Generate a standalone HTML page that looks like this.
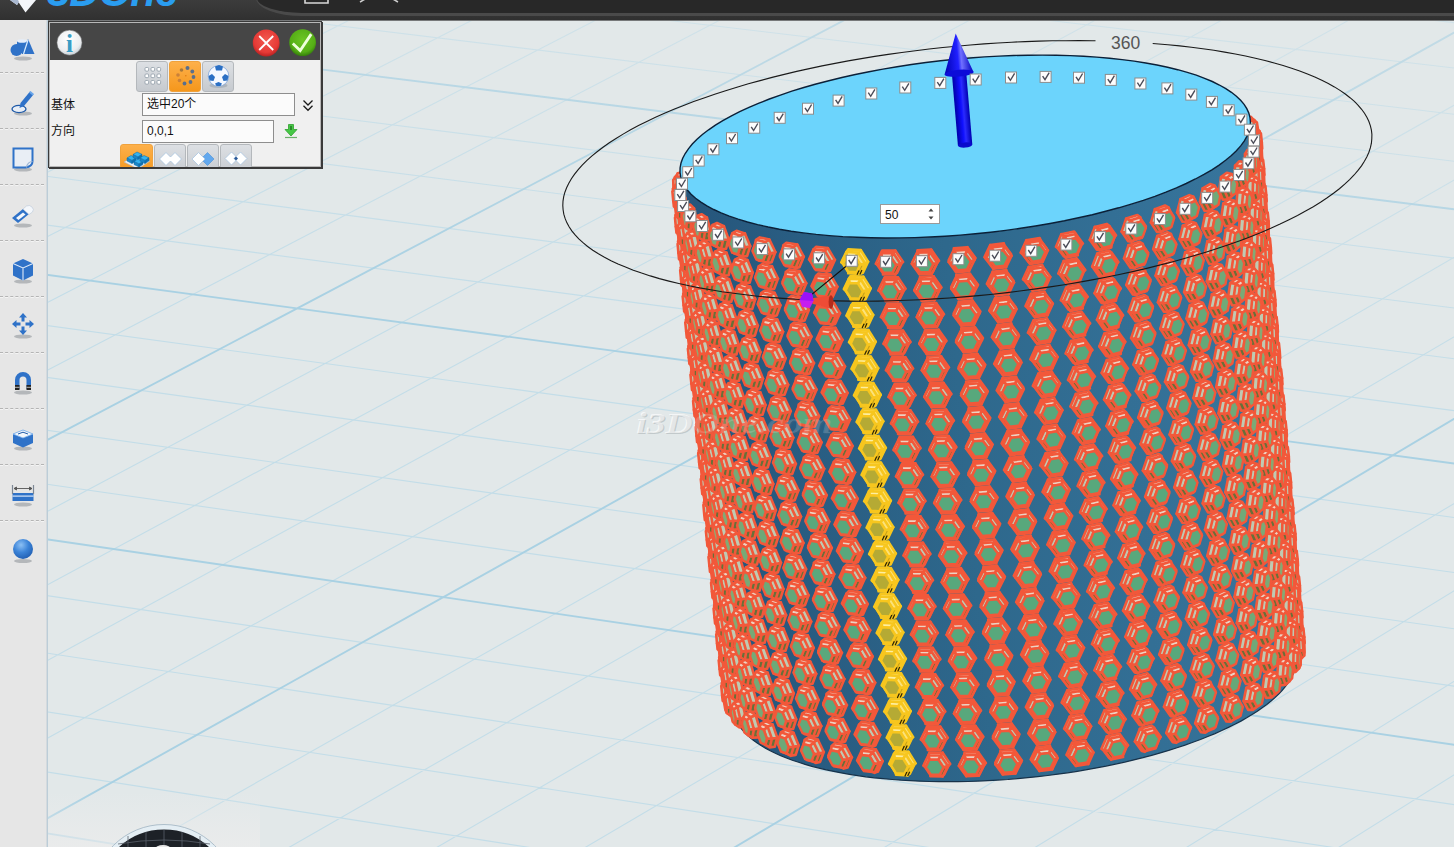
<!DOCTYPE html>
<html><head><meta charset="utf-8"><title>3DOne</title>
<style>
html,body{margin:0;padding:0}
body{width:1454px;height:847px;overflow:hidden;position:relative;background:#e2e8e9;font-family:"Liberation Sans","Noto Sans CJK SC",sans-serif}
#scene{position:absolute;left:0;top:0}
.t .h{fill:#f2583a;stroke:#f2583a;stroke-width:1.2;stroke-linejoin:round}
.t .f{stroke:#f2583a;stroke-width:2.6;stroke-linejoin:round}
.t .g{stroke:#f2583a;stroke-width:2.4;stroke-linejoin:round}
.t .y .h{fill:#f7c61e;stroke:#f7c61e}
.t .y .f{stroke:#f7c61e}
.t .y .g{fill:#b5aa34;stroke:#f7c61e}
#topbar{position:absolute;left:0;top:0;width:1454px;height:20px;background:linear-gradient(#3c3c3c,#343434 70%,#303030);overflow:hidden;border-bottom:1px solid #77797a}
#tab{position:absolute;left:256px;top:-30px;width:1300px;height:42.5px;background:#282828;border:solid #4a4a4a;border-width:0 0 3px 1.5px;border-bottom-left-radius:46px 18px}
#brand{position:absolute;left:47px;top:-29px;font:italic bold 42px/42px "Liberation Sans",sans-serif;color:#2a9df0;letter-spacing:-1px;white-space:nowrap}
#side{position:absolute;left:0;top:20px;width:46px;height:827px;background:#e6e6e6;border-right:1px solid #d4dade;box-shadow:1px 0 0 #bccdd8}
.sep{position:absolute;left:0;width:44px;height:0;border-top:1px dashed #b4b4b4;border-bottom:1px dashed #f4f4f4}
.ic{position:absolute;left:7px;width:32px;height:32px}
#panel{position:absolute;left:48px;top:21px;width:272px;height:145px;border:1px solid #3a3a3a;background:#f0f0f0;box-shadow:1px 1px 0 #3a3a3a,inset 0 0 0 1px #b8b8b8}
#phead{position:absolute;left:1px;top:1px;right:1px;height:37px;background:#464646}
.lbl{position:absolute;left:2px;font-size:12px;line-height:14px;color:#111}
.inp{position:absolute;height:21px;border:1px solid #8e8e8e;background:#fbfbfb;font-size:12px;line-height:21px;color:#111;padding-left:4px;box-sizing:content-box}
.btn{position:absolute;width:30px;height:29px;border:1px solid #b4b8bc;border-radius:3px;background:linear-gradient(#dde0e4,#c6cacf)}
.btn.on{background:linear-gradient(#fdb04a,#f5971c);border-color:#f0a23c}
.btn svg{position:absolute;left:0;top:0}
</style></head><body>
<svg id="scene" width="1454" height="847" viewBox="0 0 1454 847">
<defs>
<linearGradient id="bg" gradientUnits="userSpaceOnUse" x1="690" y1="470" x2="1300" y2="413">
<stop offset="0" stop-color="#25547a"/><stop offset=".45" stop-color="#2e688c"/><stop offset="1" stop-color="#38769e"/></linearGradient>
<linearGradient id="sh" gradientUnits="userSpaceOnUse" x1="957.9" y1="145.6" x2="972.3" y2="144.4">
<stop offset="0" stop-color="#0000a8"/><stop offset=".45" stop-color="#1010ff"/><stop offset=".6" stop-color="#2a2aff"/><stop offset="1" stop-color="#0000b0"/></linearGradient>
<linearGradient id="cn" gradientUnits="userSpaceOnUse" x1="944.6" y1="74.5" x2="973.5" y2="72.0">
<stop offset="0" stop-color="#0000b0"/><stop offset=".5" stop-color="#2020ff"/><stop offset=".62" stop-color="#7070ff"/><stop offset="1" stop-color="#0000c0"/></linearGradient>
<linearGradient id="fd" gradientUnits="userSpaceOnUse" x1="700" y1="330" x2="730" y2="0"><stop offset="0" stop-color="#e2e8e9" stop-opacity="0"/><stop offset="1" stop-color="#e2e8e9" stop-opacity=".42"/></linearGradient>
</defs>
<rect width="1454" height="847" fill="#e2e8e9"/>
<path d="M-162.2 -293.5L-285.9 -237.1M-37.7 -299.7L-285.4 -185.6M69.9 -297.9L-284.8 -132.9M178 -296.1L-284.3 -79M395.9 -292.4L-283.2 32.8M522.5 -298.6L-282.6 90.7M632.8 -296.8L-282 150.1M743.7 -295L-281.4 211M983.4 -299.4L-280.1 337.4M1095.9 -297.6L-299.9 413.5M1209 -295.7L-299.5 481.2M1322.7 -293.8L-299.1 550.7M1567.5 -298.3L-298.2 695.5M1682.9 -296.5L-297.7 770.9M1753.1 -269.6L-297.3 848.4M1746.9 -199.5L-296.8 928.2M1749.9 -62.1L-295.8 1094.9M1743.4 14.4L-225 1141.8M1753.2 83.7L-60.3 1135.8M1746.4 164.9L82.2 1143.1M1749.7 325L392.5 1144.4M1742.6 414.3L559.8 1138.4M1753.2 495.6L705.9 1145.8M1746 590.9L874.5 1139.7M1749.5 779.6L1192.4 1141M1741.8 885.3L1362.8 1134.9M1753.3 981.9L1513.4 1142.4M1745.4 1095.3L1685.3 1136.2M1581.3 -299.2L1732.2 -283.9M1197.7 -299.2L1747 -242.6M447.6 -299.3L1751.5 -160.4M80.9 -299.4L1740.7 -119.6M-280.5 -299.4L1729.7 -78.2M-284.2 -260L1745.1 -33M-291.7 -179.1L1749.8 56.8M-295.6 -137.6L1738.5 101.4M-299.5 -95.2L1726.9 146.8M-280.1 -49.3L1743.1 196.4M-287.9 39.5L1747.9 295M-291.9 85.2L1736 344M-296 131.8L1753 397.6M-275.6 182.5L1740.9 448.5M-283.7 280.4L1745.9 557.3M-287.9 330.9L1733.4 611.3M-292.2 382.4L1751.1 670.7M-296.5 434.9L1738.4 727M-279.1 547.2L1743.7 847.6M-283.4 603.2L1730.4 907.5M-287.9 660.4L1749.1 973.6M-292.4 718.9L1735.7 1036.1M-273.9 844.2L1575.7 1143.8M-278.5 906.8L1168.1 1145.2M-283.1 970.8L765.3 1146.7M-287.9 1036.2L336.6 1142.8" stroke="#c3dde8" stroke-width="1.1" fill="none"/>
<path d="M-268.8 -295.3L-286.4 -287.4M286.7 -294.2L-283.7 -23.8M855.1 -293.1L-280.7 273.4M1437 -292L-298.6 622.1M1740.4 -127.4L-296.3 1010.4M1739.5 248.8L248.2 1137.1M1738.4 689.6L1043.6 1133.6M819.8 -299.3L1736.3 -203.2M-287.9 -219.9L1734 10M-283.9 -5.3L1731.4 243.5M-279.6 231L1728.5 500.4M-274.8 492.3L1725.4 784.4M-297.1 778.6L1721.9 1100M-292.8 1103.2L-56.3 1144.3" stroke="#a9d1e3" stroke-width="1.9" fill="none"/>
<rect width="1454" height="847" fill="url(#fd)"/>
<g font-family="Liberation Serif, serif" font-style="italic" font-weight="bold" font-size="30"><text x="637.200" y="434.200" textLength="196" lengthAdjust="spacingAndGlyphs" fill="#98a2a6" fill-opacity=".35">i3DOne.com</text><text x="636" y="433" textLength="196" lengthAdjust="spacingAndGlyphs" fill="#fff" fill-opacity=".6">i3DOne.com</text></g>
<g class="t">
<path class="h" d="M1244.9 126l0.3-9.2l5.7 0l4.3 3l1.6 2.6l1.6 8.9l-0.2 6.2l-3.1 4l-5.5 1.6l-2.5-3.9zM1247.2 152.2l0.3-9.2l5.7 0.1l4.2 2.9l1.7 2.7l1.5 8.8l-0.2 6.2l-3 4l-5.5 1.6l-2.5-3.9zM1249.5 178.4l0.3-9.2l5.8 0.1l4.2 2.9l1.7 2.7l1.5 8.9l-0.2 6.2l-3.1 3.9l-5.4 1.6l-2.5-3.9zM1251.7 204.6l0.3-9.2l5.7 0.1l4.2 2.9l1.7 2.7l1.5 8.8l-0.2 6.2l-3 4l-5.5 1.6l-2.5-4zM1254 230.7l0.2-9.1l5.8 0l4.2 3l1.7 2.6l1.5 8.9l-0.2 6.2l-3.1 3.9l-5.4 1.6l-2.5-4zM1256.2 256.8l0.3-9.1l5.7 0l4.2 3l1.7 2.7l1.5 8.8l-0.2 6.2l-3 4l-5.5 1.6l-2.5-4zM1258.5 282.9l0.3-9.1l5.7 0l4.2 3l1.7 2.7l1.4 8.8l-0.2 6.2l-3 3.9l-5.4 1.6l-2.5-4zM1260.7 308.9l0.3-9.1l5.7 0.1l4.2 2.9l1.7 2.8l1.5 8.8l-0.2 6.1l-3 4l-5.5 1.6l-2.5-4zM1263 334.9l0.2-9.1l5.8 0l4.2 3l1.6 2.7l1.5 8.9l-0.2 6.1l-3 3.9l-5.4 1.6l-2.5-4zM1265.2 360.9l0.3-9l5.7 0l4.2 3l1.7 2.7l1.5 8.9l-0.2 6.1l-3.1 3.9l-5.4 1.6l-2.5-4.1zM1267.4 386.9l0.3-9l5.7 0l4.2 3l1.7 2.7l1.5 8.9l-0.2 6l-3 4l-5.4 1.6l-2.6-4.1zM1269.7 412.8l0.3-9l5.7 0.1l4.1 2.9l1.8 2.8l1.4 8.8l-0.2 6.1l-3 3.9l-5.4 1.6l-2.5-4.1zM1271.9 438.7l0.3-9l5.7 0.1l4.2 2.9l1.7 2.8l1.5 8.8l-0.2 6.1l-3.1 4l-5.4 1.6l-2.5-4.2zM1274.1 464.6l0.3-9l5.7 0.1l4.2 2.9l1.7 2.8l1.5 8.8l-0.2 6.1l-3 3.9l-5.5 1.6l-2.5-4.1zM1276.4 490.4l0.3-8.9l5.7 0l4.1 3l1.7 2.8l1.5 8.8l-0.2 6l-3 4l-5.4 1.6l-2.5-4.2zM1278.6 516.2l0.3-8.9l5.7 0.1l4.2 2.9l1.6 2.8l1.5 8.8l-0.2 6l-3 4l-5.4 1.6l-2.5-4.2zM1280.8 542l0.3-8.9l5.7 0l4.2 3l1.7 2.8l1.5 8.9l-0.3 5.9l-3 4l-5.4 1.6l-2.5-4.2zM1283 567.7l0.3-8.8l5.7 0l4.2 2.9l1.7 2.9l1.5 8.8l-0.2 6l-3 4l-5.4 1.6l-2.6-4.3zM1285.2 593.5l0.4-8.9l5.6 0l4.2 3l1.7 2.8l1.5 8.9l-0.2 5.9l-3 4l-5.4 1.6l-2.6-4.2zM1287.5 619.1l0.3-8.9l5.6 0.1l4.2 2.9l1.7 2.9l1.5 8.8l-0.2 5.9l-3 4l-5.4 1.6l-2.5-4.3z"/><path class="f" fill="#687038" d="M1249.9 133.8l-0.2 9.3l5.4-1.6l0.3-8.7zM1255.4 132.8l-0.3 8.7l3-4l0.2-6.2zM1252.2 160.1l-0.3 9.2l5.5-1.6l0.2-8.6zM1257.6 159.1l-0.2 8.6l3-4l0.2-6.2zM1254.5 186.3l-0.3 9.2l5.4-1.6l0.3-8.6zM1259.9 185.3l-0.3 8.6l3.1-4l0.2-6.2zM1256.7 212.5l-0.3 9.2l5.5-1.6l0.2-8.6zM1262.1 211.5l-0.2 8.6l3-4l0.2-6.2zM1259 238.7l-0.3 9.1l5.4-1.6l0.3-8.5zM1264.4 237.7l-0.3 8.5l3.1-3.9l0.2-6.2zM1261.2 264.8l-0.3 9.2l5.5-1.6l0.2-8.6zM1266.6 263.8l-0.2 8.6l3-4l0.2-6.2zM1263.5 290.9l-0.3 9.2l5.4-1.7l0.3-8.5zM1268.9 289.9l-0.3 8.5l3-3.9l0.3-6.2zM1265.7 317l-0.3 9.1l5.5-1.6l0.2-8.5zM1271.1 316l-0.2 8.5l3-4l0.2-6.1zM1268 343.1l-0.3 9l5.4-1.6l0.3-8.5zM1273.4 342l-0.3 8.5l3-3.9l0.2-6.1zM1270.2 369.1l-0.3 9l5.4-1.6l0.3-8.4zM1275.6 368.1l-0.3 8.4l3.1-3.9l0.2-6.1zM1272.5 395.1l-0.3 9l5.4-1.6l0.3-8.5zM1277.9 394l-0.3 8.5l3-4l0.2-6zM1274.7 421.1l-0.3 8.9l5.4-1.6l0.3-8.4zM1280.1 420l-0.3 8.4l3-3.9l0.2-6.1zM1276.9 447l-0.3 9l5.4-1.7l0.3-8.4zM1282.3 445.9l-0.3 8.4l3.1-3.9l0.2-6.1zM1279.2 472.9l-0.3 8.9l5.4-1.6l0.3-8.4zM1284.6 471.8l-0.3 8.4l3-3.9l0.2-6.1zM1281.4 498.8l-0.3 8.9l5.4-1.6l0.3-8.4zM1286.8 497.7l-0.3 8.4l3-4l0.2-6zM1283.6 524.6l-0.3 8.9l5.4-1.6l0.3-8.3zM1289 523.6l-0.3 8.3l3-4l0.2-6zM1285.8 550.4l-0.3 8.9l5.4-1.6l0.3-8.3zM1291.2 549.4l-0.3 8.3l3-4l0.3-6zM1288.1 576.2l-0.3 8.9l5.3-1.6l0.3-8.3zM1293.4 575.2l-0.3 8.3l3.1-4l0.2-6zM1290.3 602l-0.3 8.8l5.4-1.6l0.3-8.3zM1295.7 600.9l-0.3 8.3l3-4l0.2-5.9zM1292.5 627.7l-0.3 8.8l5.4-1.6l0.3-8.3zM1297.9 626.6l-0.3 8.3l3-4l0.2-5.9z"/><path class="f" fill="#edd2c2" d="M1245.2 116.8l2.5 3.9l5.6-0.2l-2.4-3.7zM1247.5 143l2.5 3.9l5.6-0.2l-2.4-3.6zM1249.7 169.2l2.5 4l5.6-0.2l-2.3-3.7zM1252 195.4l2.5 4l5.6-0.2l-2.4-3.7zM1254.3 221.6l2.5 3.9l5.5-0.2l-2.3-3.7zM1256.5 247.7l2.5 4l5.6-0.2l-2.4-3.8zM1258.8 273.8l2.5 4l5.5-0.2l-2.3-3.8zM1261 299.8l2.5 4.1l5.6-0.2l-2.4-3.8zM1263.2 325.9l2.6 4l5.5-0.2l-2.4-3.8zM1265.5 351.9l2.5 4.1l5.5-0.2l-2.3-3.9zM1267.7 377.9l2.5 4.1l5.6-0.3l-2.4-3.8zM1270 403.8l2.5 4.1l5.5-0.2l-2.3-3.8zM1272.2 429.7l2.5 4.2l5.6-0.3l-2.4-3.8zM1274.4 455.6l2.6 4.2l5.5-0.3l-2.4-3.8zM1276.7 481.5l2.5 4.1l5.5-0.2l-2.4-3.9zM1278.9 507.3l2.5 4.2l5.5-0.2l-2.3-4zM1281.1 533.1l2.5 4.2l5.6-0.2l-2.4-4zM1283.3 558.9l2.6 4.2l5.5-0.2l-2.4-4zM1285.6 584.6l2.5 4.3l5.5-0.3l-2.4-3.9zM1287.8 610.3l2.5 4.3l5.5-0.2l-2.4-4z"/><path class="f" fill="#bfcab2" d="M1247.7 120.7l2.2 13.1l5.5-1l-2.1-12.3zM1253.3 120.5l2.1 12.3l2.9-1.5l-1.4-8.9zM1250 146.9l2.2 13.2l5.4-1l-2-12.4zM1255.6 146.7l2 12.4l3-1.6l-1.5-8.8zM1252.2 173.2l2.3 13.1l5.4-1l-2.1-12.3zM1257.8 173l2.1 12.3l3-1.6l-1.5-8.8zM1254.5 199.4l2.2 13.1l5.4-1l-2-12.3zM1260.1 199.2l2 12.3l3-1.6l-1.5-8.8zM1256.8 225.5l2.2 13.2l5.4-1l-2.1-12.4zM1262.3 225.3l2.1 12.4l3-1.6l-1.5-8.8zM1259 251.7l2.2 13.1l5.4-1l-2-12.3zM1264.6 251.5l2 12.3l3-1.6l-1.5-8.8zM1261.3 277.8l2.2 13.1l5.4-1l-2.1-12.3zM1266.8 277.6l2.1 12.3l3-1.6l-1.5-8.8zM1263.5 303.9l2.2 13.1l5.4-1l-2-12.3zM1269.1 303.7l2 12.3l3-1.6l-1.5-8.8zM1265.8 329.9l2.2 13.2l5.4-1.1l-2.1-12.3zM1271.3 329.7l2.1 12.3l2.9-1.5l-1.5-8.9zM1268 356l2.2 13.1l5.4-1l-2.1-12.3zM1273.5 355.8l2.1 12.3l3-1.6l-1.5-8.9zM1270.2 382l2.3 13.1l5.4-1.1l-2.1-12.3zM1275.8 381.7l2.1 12.3l2.9-1.5l-1.5-8.9zM1272.5 407.9l2.2 13.2l5.4-1.1l-2.1-12.3zM1278 407.7l2.1 12.3l2.9-1.6l-1.5-8.8zM1274.7 433.9l2.2 13.1l5.4-1.1l-2-12.3zM1280.3 433.6l2 12.3l3-1.6l-1.5-8.8zM1277 459.8l2.2 13.1l5.4-1.1l-2.1-12.3zM1282.5 459.5l2.1 12.3l2.9-1.6l-1.5-8.8zM1279.2 485.6l2.2 13.2l5.4-1.1l-2.1-12.3zM1284.7 485.4l2.1 12.3l2.9-1.6l-1.5-8.8zM1281.4 511.5l2.2 13.1l5.4-1l-2.1-12.3zM1286.9 511.3l2.1 12.3l2.9-1.7l-1.4-8.8zM1283.6 537.3l2.2 13.1l5.4-1l-2-12.3zM1289.2 537.1l2 12.3l3-1.7l-1.5-8.8zM1285.9 563.1l2.2 13.1l5.3-1l-2-12.3zM1291.4 562.9l2 12.3l3-1.7l-1.5-8.8zM1288.1 588.9l2.2 13.1l5.4-1.1l-2.1-12.3zM1293.6 588.6l2.1 12.3l2.9-1.6l-1.5-8.9zM1290.3 614.6l2.2 13.1l5.4-1.1l-2.1-12.2zM1295.8 614.4l2.1 12.2l2.9-1.6l-1.5-8.8z"/>
<path class="h" d="M673.2 179.9l0.9-2.9l3.5-3.8l5.7-1.1l1.8 9l0.4 13.3l-1.4 4.4l-5.6-0.6l-3.8-3.2l-1.2-6.2zM675.8 206.1l0.9-2.9l3.5-3.7l5.7-1.2l1.7 9l0.5 13.4l-1.4 4.3l-5.7-0.5l-3.7-3.3l-1.2-6.1zM678.4 232.3l0.9-2.9l3.5-3.7l5.6-1.2l1.8 9l0.5 13.3l-1.4 4.4l-5.7-0.5l-3.8-3.3l-1.2-6.1zM681 258.5l0.8-2.9l3.6-3.7l5.6-1.2l1.8 9l0.4 13.3l-1.3 4.4l-5.7-0.6l-3.8-3.2l-1.2-6.1zM683.5 284.7l0.9-3l3.6-3.7l5.6-1.2l1.8 9l0.4 13.3l-1.3 4.4l-5.7-0.5l-3.8-3.3l-1.2-6zM686.1 310.8l0.9-2.9l3.6-3.8l5.6-1.1l1.8 8.9l0.4 13.3l-1.3 4.4l-5.7-0.5l-3.8-3.3l-1.2-6zM688.7 336.9l0.9-3l3.6-3.7l5.6-1.2l1.7 9l0.5 13.3l-1.4 4.4l-5.6-0.5l-3.8-3.3l-1.2-6zM691.3 363l0.9-3l3.5-3.7l5.6-1.2l1.8 8.9l0.4 13.3l-1.3 4.5l-5.7-0.6l-3.7-3.3l-1.2-5.9zM693.9 389l0.9-3l3.6-3.7l5.6-1.2l1.7 8.9l0.5 13.3l-1.3 4.5l-5.7-0.5l-3.8-3.3l-1.2-6zM696.4 415l0.9-3l3.6-3.7l5.6-1.2l1.7 8.9l0.4 13.3l-1.3 4.5l-5.6-0.6l-3.8-3.2l-1.2-6zM699 441l0.9-3l3.5-3.7l5.6-1.2l1.8 8.8l0.4 13.3l-1.3 4.5l-5.7-0.5l-3.7-3.3l-1.2-5.9zM701.5 467l0.8-3.1l3.6-3.7l5.6-1.2l1.7 8.8l0.5 13.4l-1.4 4.5l-5.6-0.5l-3.8-3.3l-1.2-6zM704.1 492.9l0.9-3.1l3.6-3.7l5.5-1.1l1.8 8.7l0.4 13.3l-1.3 4.6l-5.6-0.6l-3.8-3.2l-1.2-6zM706.7 518.8l0.9-3.1l3.5-3.7l5.6-1.2l1.7 8.8l0.5 13.3l-1.3 4.5l-5.7-0.5l-3.7-3.3l-1.2-5.9zM709.2 544.6l0.9-3l3.5-3.8l5.6-1.1l1.8 8.7l0.4 13.3l-1.3 4.6l-5.6-0.5l-3.8-3.3l-1.2-5.9zM711.8 570.5l0.9-3.1l3.5-3.7l5.6-1.2l1.7 8.7l0.5 13.3l-1.3 4.6l-5.7-0.5l-3.8-3.3l-1.1-5.9zM714.3 596.3l0.9-3.1l3.6-3.7l5.5-1.2l1.8 8.7l0.4 13.3l-1.3 4.6l-5.6-0.5l-3.8-3.3l-1.2-5.9zM716.9 622l0.9-3.1l3.5-3.7l5.6-1.1l1.7 8.7l0.4 13.2l-1.2 4.6l-5.7-0.5l-3.7-3.3l-1.2-5.8zM719.4 647.8l0.9-3.1l3.5-3.7l5.6-1.2l1.7 8.7l0.5 13.2l-1.3 4.7l-5.7-0.5l-3.7-3.3l-1.2-5.9zM722 673.5l0.8-3.1l3.6-3.7l5.6-1.2l1.7 8.6l0.4 13.3l-1.3 4.7l-5.6-0.5l-3.8-3.3l-1.1-5.9z"/><path class="f" fill="#687038" d="M684.1 198.8l-1.7-9.1l-5.6 0.1l1.7 8.4zM678.5 198.2l-1.7-8.4l-3.3-0.9l1.2 6.1zM686.7 225l-1.7-9l-5.6 0l1.6 8.5zM681 224.5l-1.6-8.5l-3.3-0.9l1.2 6.1zM689.3 251.2l-1.8-9l-5.5 0l1.6 8.5zM683.6 250.7l-1.6-8.5l-3.4-0.9l1.2 6.1zM691.9 277.4l-1.8-9l-5.5 0l1.6 8.4zM686.2 276.8l-1.6-8.4l-3.4-0.9l1.2 6.1zM694.5 303.5l-1.8-9l-5.6 0.1l1.7 8.4zM688.8 303l-1.7-8.4l-3.3-0.9l1.2 6zM697.1 329.6l-1.8-8.9l-5.6 0l1.7 8.4zM691.4 329.1l-1.7-8.4l-3.3-0.9l1.2 6zM699.6 355.7l-1.7-8.9l-5.6 0l1.7 8.4zM694 355.2l-1.7-8.4l-3.3-0.9l1.2 6zM702.2 381.8l-1.8-8.9l-5.5 0l1.6 8.3zM696.5 381.2l-1.6-8.3l-3.3-0.9l1.2 5.9zM704.8 407.8l-1.8-8.9l-5.5 0.1l1.6 8.3zM699.1 407.3l-1.6-8.3l-3.4-1l1.2 6zM707.3 433.8l-1.7-8.9l-5.6 0.1l1.7 8.3zM701.7 433.3l-1.7-8.3l-3.3-1l1.2 6zM709.9 459.7l-1.8-8.8l-5.5 0l1.6 8.3zM704.2 459.2l-1.6-8.3l-3.3-0.9l1.2 5.9zM712.5 485.7l-1.8-8.8l-5.5 0l1.6 8.2zM706.8 485.1l-1.6-8.2l-3.4-1l1.2 6zM715 511.6l-1.7-8.8l-5.6 0l1.7 8.3zM709.4 511.1l-1.7-8.3l-3.3-1l1.2 6zM717.6 537.4l-1.8-8.7l-5.5 0l1.6 8.2zM711.9 536.9l-1.6-8.2l-3.3-1l1.1 5.9zM720.1 563.3l-1.7-8.7l-5.6 0l1.7 8.2zM714.5 562.8l-1.7-8.2l-3.3-1l1.2 5.9zM722.7 589.1l-1.8-8.7l-5.5 0l1.6 8.2zM717 588.6l-1.6-8.2l-3.3-1l1.2 5.9zM725.2 614.9l-1.7-8.7l-5.6 0l1.7 8.2zM719.6 614.4l-1.7-8.2l-3.3-1l1.2 5.9zM727.7 640.7l-1.7-8.7l-5.5 0l1.6 8.1zM722.1 640.1l-1.6-8.1l-3.3-1l1.1 5.8zM730.3 666.4l-1.7-8.7l-5.6 0.1l1.7 8.1zM724.7 665.9l-1.7-8.1l-3.3-1.1l1.2 5.9zM732.8 692.1l-1.7-8.6l-5.5 0l1.6 8.1zM727.2 691.6l-1.6-8.1l-3.3-1l1.1 5.8z"/><path class="f" fill="#bfcab2" d="M682.4 189.7l-0.5-13.3l-5.5 0.9l0.4 12.5zM676.8 189.8l-0.4-12.5l-3.2 2.6l0.3 9zM685 216l-0.5-13.4l-5.5 0.9l0.4 12.5zM679.4 216l-0.4-12.5l-3.2 2.6l0.3 9zM687.5 242.2l-0.4-13.4l-5.5 0.9l0.4 12.5zM682 242.2l-0.4-12.5l-3.2 2.6l0.2 9zM690.1 268.4l-0.4-13.4l-5.5 0.9l0.4 12.5zM684.6 268.4l-0.4-12.5l-3.3 2.6l0.3 9zM692.7 294.5l-0.4-13.3l-5.6 0.9l0.4 12.5zM687.1 294.6l-0.4-12.5l-3.2 2.6l0.3 9zM695.3 320.7l-0.4-13.4l-5.6 0.9l0.4 12.5zM689.7 320.7l-0.4-12.5l-3.2 2.6l0.3 9zM697.9 346.8l-0.5-13.3l-5.5 0.8l0.4 12.5zM692.3 346.8l-0.4-12.5l-3.2 2.6l0.3 9zM700.4 372.9l-0.4-13.4l-5.5 0.9l0.4 12.5zM694.9 372.9l-0.4-12.5l-3.2 2.6l0.3 9zM703 398.9l-0.4-13.3l-5.6 0.9l0.5 12.5zM697.5 399l-0.5-12.5l-3.2 2.5l0.3 9zM705.6 424.9l-0.5-13.3l-5.5 0.9l0.4 12.5zM700 425l-0.4-12.5l-3.2 2.5l0.3 9zM708.1 450.9l-0.4-13.3l-5.5 0.9l0.4 12.4zM702.6 450.9l-0.4-12.4l-3.2 2.5l0.3 9zM710.7 476.9l-0.4-13.4l-5.5 0.9l0.4 12.5zM705.2 476.9l-0.4-12.5l-3.2 2.6l0.2 8.9zM713.3 502.8l-0.5-13.3l-5.5 0.9l0.4 12.4zM707.7 502.8l-0.4-12.4l-3.2 2.5l0.3 8.9zM715.8 528.7l-0.4-13.3l-5.5 0.9l0.4 12.4zM710.3 528.7l-0.4-12.4l-3.2 2.5l0.3 8.9zM718.4 554.6l-0.5-13.4l-5.5 0.9l0.4 12.5zM712.8 554.6l-0.4-12.5l-3.2 2.5l0.3 9zM720.9 580.4l-0.4-13.3l-5.5 0.9l0.4 12.4zM715.4 580.4l-0.4-12.4l-3.2 2.5l0.3 8.9zM723.5 606.2l-0.5-13.3l-5.5 0.9l0.4 12.4zM717.9 606.2l-0.4-12.4l-3.2 2.5l0.3 8.9zM726 632l-0.4-13.3l-5.5 0.8l0.4 12.5zM720.5 632l-0.4-12.5l-3.2 2.5l0.3 9zM728.6 657.7l-0.5-13.3l-5.5 0.9l0.4 12.5zM723 657.8l-0.4-12.5l-3.2 2.5l0.3 8.9zM731.1 683.5l-0.4-13.3l-5.5 0.8l0.4 12.5zM725.6 683.5l-0.4-12.5l-3.2 2.5l0.3 9z"/><path class="f" fill="#edd2c2" d="M681.9 176.4l1.4-4.3l-5.7 1.1l-1.2 4.1zM684.5 202.6l1.4-4.3l-5.7 1.2l-1.2 4zM687.1 228.8l1.4-4.3l-5.7 1.2l-1.2 4zM689.7 255l1.3-4.3l-5.6 1.2l-1.2 4zM692.3 281.2l1.3-4.4l-5.6 1.2l-1.3 4.1zM694.9 307.3l1.3-4.3l-5.6 1.1l-1.3 4.1zM697.4 333.5l1.4-4.4l-5.7 1.1l-1.2 4.1zM700 359.5l1.3-4.4l-5.6 1.2l-1.2 4.1zM702.6 385.6l1.3-4.5l-5.6 1.2l-1.3 4.2zM705.1 411.6l1.4-4.5l-5.6 1.2l-1.3 4.2zM707.7 437.6l1.3-4.5l-5.6 1.2l-1.2 4.2zM710.3 463.5l1.3-4.5l-5.6 1.2l-1.2 4.2zM712.8 489.5l1.3-4.5l-5.6 1.1l-1.2 4.3zM715.4 515.4l1.3-4.6l-5.6 1.2l-1.2 4.3zM717.9 541.2l1.3-4.5l-5.5 1.2l-1.3 4.2zM720.5 567.1l1.3-4.6l-5.6 1.2l-1.2 4.3zM723 592.9l1.3-4.6l-5.5 1.2l-1.3 4.3zM725.6 618.7l1.3-4.6l-5.6 1.1l-1.2 4.3zM728.1 644.4l1.3-4.6l-5.6 1.2l-1.2 4.3zM730.7 670.2l1.2-4.7l-5.5 1.2l-1.2 4.3z"/>
<path class="h" d="M1250.5 127.3l5.7 0.3l4.1 3.1l0.6 2.7l0.9 9l0.4 6.2l-3.4 3.8l-5.6 1.4l-0.8-4.1l-1.4-13.3zM1252.7 153.6l5.8 0.2l4.1 3.2l0.5 2.8l1 8.9l0.3 6.2l-3.3 3.8l-5.6 1.4l-0.8-4.1l-1.4-13.3zM1255 179.8l5.8 0.3l4 3.1l0.6 2.8l0.9 9l0.4 6.1l-3.3 3.9l-5.6 1.4l-0.9-4.2l-1.3-13.2zM1257.3 206.1l5.7 0.3l4.1 3.1l0.5 2.8l1 8.9l0.4 6.2l-3.4 3.8l-5.6 1.4l-0.8-4.2l-1.4-13.2zM1259.5 232.3l5.8 0.3l4 3.1l0.6 2.8l0.9 9l0.4 6.1l-3.3 3.8l-5.6 1.4l-0.9-4.2l-1.3-13.2zM1261.8 258.4l5.7 0.3l4.1 3.2l0.6 2.8l0.9 8.9l0.3 6.1l-3.3 3.9l-5.6 1.4l-0.8-4.2l-1.4-13.3zM1264 284.6l5.8 0.3l4 3.1l0.6 2.9l0.9 8.9l0.4 6.1l-3.3 3.8l-5.6 1.4l-0.8-4.2l-1.4-13.3zM1266.3 310.7l5.7 0.3l4.1 3.1l0.5 2.9l1 8.9l0.3 6.1l-3.3 3.8l-5.6 1.4l-0.8-4.2l-1.4-13.3zM1268.5 336.8l5.8 0.3l4 3.1l0.6 2.9l0.9 8.9l0.4 6.1l-3.3 3.8l-5.6 1.4l-0.9-4.3l-1.3-13.2zM1270.8 362.9l5.7 0.2l4.1 3.2l0.5 2.9l1 8.9l0.3 6l-3.3 3.9l-5.6 1.4l-0.8-4.3l-1.4-13.3zM1273 388.9l5.8 0.3l4 3.1l0.6 2.9l0.9 8.9l0.3 6.1l-3.3 3.8l-5.5 1.4l-0.9-4.3l-1.3-13.3zM1275.2 414.9l5.8 0.3l4 3.1l0.6 2.9l0.9 8.9l0.4 6l-3.3 3.9l-5.6 1.4l-0.8-4.4l-1.4-13.2zM1277.5 440.9l5.7 0.3l4.1 3.1l0.5 3l1 8.9l0.3 6l-3.3 3.9l-5.6 1.4l-0.8-4.4l-1.4-13.3zM1279.7 466.8l5.8 0.3l4 3.1l0.6 2.9l0.9 9l0.4 5.9l-3.4 3.9l-5.5 1.4l-0.9-4.4l-1.4-13.2zM1282 492.7l5.7 0.3l4 3.1l0.6 3l0.9 8.9l0.4 5.9l-3.3 3.9l-5.6 1.4l-0.8-4.4l-1.4-13.2zM1284.2 518.6l5.7 0.3l4 3.1l0.6 3l0.9 8.9l0.4 5.9l-3.3 3.9l-5.6 1.4l-0.8-4.5l-1.4-13.2zM1286.4 544.4l5.7 0.3l4.1 3.1l0.5 3l1 8.9l0.3 6l-3.3 3.8l-5.5 1.4l-0.9-4.4l-1.4-13.3zM1288.6 570.2l5.8 0.3l4 3.1l0.6 3l0.9 9l0.3 5.9l-3.3 3.8l-5.5 1.4l-0.9-4.5l-1.3-13.2zM1290.9 596l5.7 0.3l4 3.1l0.6 3l0.9 9l0.3 5.9l-3.2 3.8l-5.6 1.4l-0.8-4.5l-1.4-13.2zM1293.1 621.8l5.7 0.3l4 3.1l0.6 3l0.9 8.9l0.4 5.9l-3.3 3.9l-5.6 1.4l-0.8-4.5l-1.4-13.3z"/><path class="f" fill="#687038" d="M1252.7 144.7l0.5 9.1l5.6-1.4l-0.5-8.5zM1258.3 143.9l0.5 8.5l3.4-3.8l-0.4-6.2zM1255 171l0.5 9.1l5.6-1.4l-0.5-8.5zM1260.6 170.2l0.5 8.5l3.3-3.8l-0.3-6.2zM1257.2 197.3l0.6 9.1l5.6-1.4l-0.5-8.5zM1262.9 196.5l0.5 8.5l3.3-3.9l-0.4-6.1zM1259.5 223.5l0.5 9.1l5.6-1.4l-0.5-8.5zM1265.1 222.7l0.5 8.5l3.3-3.8l-0.3-6.2zM1261.7 249.8l0.6 9l5.6-1.4l-0.5-8.5zM1267.4 248.9l0.5 8.5l3.3-3.8l-0.4-6.1zM1264 275.9l0.5 9.1l5.6-1.4l-0.5-8.5zM1269.6 275.1l0.5 8.5l3.3-3.9l-0.3-6.1zM1266.3 302.1l0.5 9l5.6-1.4l-0.5-8.4zM1271.9 301.3l0.5 8.4l3.3-3.8l-0.4-6.1zM1268.5 328.2l0.5 9l5.6-1.4l-0.5-8.4zM1274.1 327.4l0.5 8.4l3.3-3.8l-0.3-6.1zM1270.7 354.3l0.6 9l5.6-1.4l-0.5-8.4zM1276.4 353.5l0.5 8.4l3.3-3.8l-0.4-6.1zM1273 380.4l0.5 9l5.6-1.4l-0.5-8.4zM1278.6 379.6l0.5 8.4l3.3-3.9l-0.3-6zM1275.2 406.5l0.6 8.9l5.5-1.4l-0.5-8.4zM1280.8 405.6l0.5 8.4l3.4-3.9l-0.4-6zM1277.5 432.5l0.5 8.9l5.6-1.4l-0.5-8.4zM1283.1 431.6l0.5 8.4l3.3-3.9l-0.4-6zM1279.7 458.5l0.5 8.9l5.6-1.4l-0.5-8.4zM1285.3 457.6l0.5 8.4l3.3-3.9l-0.3-6zM1282 484.4l0.5 8.9l5.5-1.4l-0.5-8.3zM1287.5 483.6l0.5 8.3l3.3-3.9l-0.3-5.9zM1284.2 510.3l0.5 8.9l5.6-1.4l-0.5-8.3zM1289.8 509.5l0.5 8.3l3.3-3.9l-0.4-5.9zM1286.4 536.2l0.5 8.9l5.6-1.4l-0.5-8.3zM1292 535.4l0.5 8.3l3.3-3.9l-0.4-5.9zM1288.6 562.1l0.6 8.8l5.5-1.4l-0.5-8.2zM1294.2 561.3l0.5 8.2l3.3-3.8l-0.3-6zM1290.9 587.9l0.5 8.8l5.5-1.4l-0.4-8.2zM1296.5 587.1l0.4 8.2l3.3-3.8l-0.3-5.9zM1293.1 613.7l0.5 8.8l5.6-1.4l-0.5-8.2zM1298.7 612.9l0.5 8.2l3.3-3.8l-0.4-5.9zM1295.3 639.5l0.5 8.8l5.6-1.4l-0.5-8.2zM1300.9 638.7l0.5 8.2l3.3-3.9l-0.4-5.9z"/><path class="f" fill="#edd2c2" d="M1250.5 127.3l0.8 4.1l5.7 0l-0.7-3.9zM1252.7 153.6l0.9 4.1l5.7 0l-0.8-3.9zM1255 179.8l0.8 4.2l5.8 0l-0.8-3.9zM1257.3 206.1l0.8 4.1l5.7 0.1l-0.8-4zM1259.5 232.3l0.9 4.2l5.7 0l-0.8-3.9zM1261.8 258.5l0.8 4.2l5.7 0l-0.8-4zM1264 284.6l0.9 4.2l5.7 0l-0.8-3.9zM1266.3 310.7l0.8 4.3l5.7 0l-0.8-4zM1268.5 336.8l0.9 4.3l5.7 0l-0.8-4zM1270.8 362.9l0.8 4.3l5.7 0l-0.8-4.1zM1273 388.9l0.9 4.3l5.7 0l-0.8-4zM1275.3 414.9l0.8 4.3l5.7 0l-0.8-4zM1277.5 440.9l0.8 4.3l5.7 0l-0.8-4.1zM1279.7 466.8l0.9 4.4l5.7 0l-0.8-4.1zM1282 492.7l0.8 4.4l5.7 0l-0.8-4.1zM1284.2 518.6l0.8 4.4l5.7 0l-0.8-4.1zM1286.4 544.4l0.9 4.5l5.6 0l-0.8-4.2zM1288.6 570.3l0.9 4.4l5.7 0l-0.8-4.2zM1290.9 596l0.8 4.5l5.7 0l-0.8-4.2zM1293.1 621.8l0.8 4.5l5.7 0l-0.8-4.2z"/><path class="f" fill="#bfcab2" d="M1251.3 131.4l1.4 13.3l5.6-0.8l-1.3-12.5zM1257 131.4l1.3 12.5l3.5-1.5l-0.9-8.9zM1253.6 157.7l1.4 13.3l5.6-0.8l-1.3-12.5zM1259.3 157.7l1.3 12.5l3.5-1.5l-1-8.9zM1255.8 184l1.4 13.3l5.7-0.8l-1.3-12.5zM1261.6 184l1.3 12.5l3.4-1.5l-0.9-9zM1258.1 210.2l1.4 13.3l5.6-0.8l-1.3-12.4zM1263.8 210.3l1.3 12.4l3.5-1.5l-0.9-8.9zM1260.4 236.5l1.3 13.3l5.7-0.9l-1.3-12.4zM1266.1 236.5l1.3 12.4l3.4-1.4l-0.9-9zM1262.6 262.7l1.4 13.2l5.6-0.8l-1.3-12.4zM1268.3 262.7l1.3 12.4l3.5-1.5l-0.9-8.9zM1264.9 288.8l1.4 13.3l5.6-0.8l-1.3-12.5zM1270.6 288.8l1.3 12.5l3.4-1.5l-0.9-8.9zM1267.1 315l1.4 13.2l5.6-0.8l-1.3-12.4zM1272.8 315l1.3 12.4l3.5-1.5l-1-8.9zM1269.4 341.1l1.3 13.2l5.7-0.8l-1.3-12.4zM1275.1 341.1l1.3 12.4l3.4-1.5l-0.9-8.9zM1271.6 367.2l1.4 13.2l5.6-0.8l-1.3-12.4zM1277.3 367.2l1.3 12.4l3.5-1.5l-1-8.9zM1273.9 393.2l1.3 13.3l5.6-0.9l-1.2-12.4zM1279.6 393.2l1.2 12.4l3.5-1.5l-0.9-8.9zM1276.1 419.2l1.4 13.3l5.6-0.9l-1.3-12.4zM1281.8 419.2l1.3 12.4l3.4-1.5l-0.9-8.9zM1278.3 445.2l1.4 13.3l5.6-0.9l-1.3-12.4zM1284 445.2l1.3 12.4l3.5-1.5l-1-8.9zM1280.6 471.2l1.4 13.2l5.5-0.8l-1.2-12.4zM1286.3 471.2l1.2 12.4l3.5-1.5l-0.9-9zM1282.8 497.1l1.4 13.2l5.6-0.8l-1.3-12.4zM1288.5 497.1l1.3 12.4l3.4-1.5l-0.9-8.9zM1285 523l1.4 13.2l5.6-0.8l-1.3-12.4zM1290.7 523l1.3 12.4l3.4-1.5l-0.9-9zM1287.3 548.9l1.3 13.2l5.6-0.8l-1.3-12.4zM1292.9 548.9l1.3 12.4l3.5-1.6l-1-8.9zM1289.5 574.7l1.4 13.2l5.6-0.8l-1.3-12.4zM1295.2 574.7l1.3 12.4l3.4-1.5l-0.9-9zM1291.7 600.5l1.4 13.2l5.6-0.8l-1.3-12.4zM1297.4 600.5l1.3 12.4l3.4-1.5l-0.9-9zM1293.9 626.3l1.4 13.2l5.6-0.8l-1.3-12.4zM1299.6 626.3l1.3 12.4l3.4-1.6l-0.9-8.9z"/>
<path class="h" d="M672.1 188.6l3.4-3.9l5.6-1.4l0.9 9.1l1.3 13.4l0.4 4.1l-5.8-0.3l-4.1-3.1l-0.6-6.1l-0.8-9zM674.7 214.9l3.4-3.9l5.6-1.4l0.9 9.1l1.3 13.3l0.4 4.2l-5.8-0.3l-4.1-3.1l-0.6-6.1l-0.8-9zM677.3 241.1l3.4-3.8l5.6-1.4l0.9 9.1l1.3 13.2l0.4 4.3l-5.8-0.3l-4.1-3.1l-0.6-6.2l-0.8-8.9zM679.9 267.4l3.4-3.9l5.6-1.4l0.9 9.1l1.3 13.2l0.3 4.3l-5.7-0.3l-4.1-3.1l-0.6-6.1l-0.8-9zM682.5 293.6l3.4-3.9l5.6-1.4l0.9 9l1.3 13.3l0.3 4.3l-5.7-0.3l-4.1-3.1l-0.6-6.1l-0.9-9zM685.1 319.7l3.3-3.8l5.7-1.4l0.9 9l1.3 13.3l0.3 4.3l-5.8-0.3l-4-3.2l-0.6-6l-0.9-9zM687.7 345.9l3.3-3.9l5.6-1.4l1 9l1.2 13.3l0.4 4.3l-5.8-0.3l-4-3.1l-0.6-6.1l-0.9-8.9zM690.3 372l3.3-3.9l5.6-1.4l0.9 9l1.3 13.3l0.4 4.3l-5.8-0.3l-4-3.1l-0.6-6.1l-0.9-8.9zM692.8 398.1l3.4-3.9l5.6-1.4l0.9 9l1.3 13.2l0.4 4.4l-5.8-0.3l-4-3.1l-0.6-6.1l-0.9-8.9zM695.4 424.1l3.4-3.9l5.6-1.4l0.9 9l1.3 13.2l0.3 4.4l-5.7-0.3l-4.1-3.1l-0.6-6l-0.8-9zM698 450.1l3.3-3.8l5.6-1.4l0.9 8.9l1.3 13.2l0.4 4.4l-5.8-0.2l-4-3.2l-0.6-6l-0.9-8.9zM700.6 476.1l3.3-3.8l5.6-1.4l0.9 8.9l1.3 13.2l0.3 4.4l-5.7-0.3l-4-3.1l-0.6-6l-0.9-8.9zM703.1 502.1l3.4-3.9l5.5-1.4l1 8.9l1.2 13.3l0.4 4.4l-5.7-0.3l-4.1-3.1l-0.6-6l-0.8-9zM705.7 528l3.3-3.8l5.6-1.4l0.9 8.8l1.3 13.3l0.4 4.4l-5.8-0.3l-4-3.1l-0.6-6l-0.8-8.9zM708.3 553.9l3.3-3.8l5.6-1.4l0.9 8.8l1.3 13.2l0.3 4.5l-5.7-0.3l-4-3.1l-0.6-6l-0.9-8.9zM710.8 579.8l3.4-3.9l5.5-1.4l0.9 8.8l1.3 13.3l0.4 4.5l-5.7-0.3l-4.1-3.2l-0.6-5.9l-0.8-8.9zM713.4 605.6l3.3-3.8l5.6-1.4l0.9 8.8l1.2 13.2l0.4 4.5l-5.7-0.3l-4-3.1l-0.6-5.9l-0.9-9zM715.9 631.4l3.4-3.8l5.5-1.4l0.9 8.7l1.3 13.3l0.4 4.5l-5.8-0.3l-4-3.1l-0.6-5.9l-0.8-8.9zM718.5 657.2l3.3-3.8l5.6-1.4l0.9 8.7l1.2 13.3l0.4 4.5l-5.7-0.3l-4-3.1l-0.6-5.9l-0.9-8.9zM721 683l3.4-3.9l5.5-1.4l0.9 8.7l1.3 13.3l0.4 4.5l-5.8-0.2l-4-3.2l-0.6-5.8l-0.8-9z"/><path class="f" fill="#687038" d="M683.7 209.9l-1-9.1l-5.7 0.3l0.9 8.6zM677.9 209.7l-0.9-8.6l-3.8-0.7l0.7 6.1zM686.3 236.2l-1-9.1l-5.7 0.3l0.9 8.5zM680.5 235.9l-0.9-8.5l-3.8-0.7l0.7 6.1zM688.9 262.5l-1-9.1l-5.7 0.3l0.9 8.5zM683.1 262.2l-0.9-8.5l-3.8-0.8l0.6 6.2zM691.5 288.7l-1-9.1l-5.7 0.3l0.9 8.5zM685.7 288.4l-0.9-8.5l-3.8-0.7l0.6 6.1zM694 314.9l-0.9-9l-5.7 0.2l0.9 8.5zM688.3 314.6l-0.9-8.5l-3.8-0.7l0.6 6.1zM696.6 341.1l-0.9-9.1l-5.7 0.3l0.9 8.5zM690.9 340.8l-0.9-8.5l-3.8-0.7l0.6 6zM699.2 367.2l-0.9-9l-5.7 0.3l0.8 8.4zM693.4 366.9l-0.8-8.4l-3.8-0.8l0.6 6.1zM701.8 393.3l-0.9-9l-5.7 0.3l0.8 8.4zM696 393l-0.8-8.4l-3.8-0.8l0.6 6.1zM704.3 419.4l-0.9-9l-5.7 0.3l0.9 8.4zM698.6 419.1l-0.9-8.4l-3.8-0.8l0.7 6.1zM706.9 445.4l-0.9-8.9l-5.7 0.3l0.9 8.3zM701.2 445.1l-0.9-8.3l-3.8-0.8l0.6 6zM709.5 471.4l-0.9-8.9l-5.7 0.3l0.8 8.3zM703.7 471.1l-0.8-8.3l-3.8-0.8l0.6 6zM712.1 497.4l-1-8.9l-5.6 0.3l0.8 8.3zM706.3 497.1l-0.8-8.3l-3.8-0.8l0.6 6zM714.6 523.4l-0.9-8.9l-5.7 0.3l0.9 8.3zM708.9 523.1l-0.9-8.3l-3.8-0.8l0.7 6zM717.2 549.3l-0.9-8.8l-5.7 0.2l0.8 8.3zM711.4 549l-0.8-8.3l-3.8-0.8l0.6 6zM719.7 575.2l-0.9-8.8l-5.7 0.3l0.9 8.2zM714 574.9l-0.9-8.2l-3.7-0.9l0.6 6zM722.3 601.1l-0.9-8.8l-5.7 0.2l0.8 8.3zM716.5 600.8l-0.8-8.3l-3.8-0.8l0.6 6zM724.8 626.9l-0.9-8.8l-5.6 0.3l0.8 8.2zM719.1 626.6l-0.8-8.2l-3.8-0.8l0.6 5.9zM727.4 652.7l-0.9-8.7l-5.7 0.2l0.9 8.2zM721.7 652.4l-0.9-8.2l-3.8-0.8l0.6 5.9zM729.9 678.5l-0.9-8.7l-5.6 0.2l0.8 8.2zM724.2 678.2l-0.8-8.2l-3.8-0.8l0.6 5.9zM732.5 704.2l-0.9-8.7l-5.7 0.3l0.8 8.2zM726.7 704l-0.8-8.2l-3.8-0.8l0.6 5.8z"/><path class="f" fill="#bfcab2" d="M682.7 200.8l-1.2-13.3l-5.7 1.1l1.2 12.5zM677 201.1l-1.2-12.5l-3.4 2.8l0.8 9zM685.3 227.1l-1.2-13.3l-5.7 1.1l1.2 12.5zM679.6 227.4l-1.2-12.5l-3.4 2.8l0.8 9zM687.9 253.4l-1.2-13.3l-5.7 1.1l1.2 12.5zM682.2 253.7l-1.2-12.5l-3.4 2.8l0.8 8.9zM690.5 279.6l-1.3-13.3l-5.6 1.2l1.2 12.4zM684.8 279.9l-1.2-12.4l-3.4 2.7l0.8 9zM693.1 305.9l-1.3-13.4l-5.6 1.2l1.2 12.4zM687.4 306.1l-1.2-12.4l-3.5 2.7l0.9 9zM695.7 332l-1.3-13.3l-5.6 1.2l1.2 12.4zM690 332.3l-1.2-12.4l-3.5 2.7l0.9 9zM698.3 358.2l-1.3-13.3l-5.6 1.1l1.2 12.5zM692.6 358.5l-1.2-12.5l-3.5 2.8l0.9 8.9zM700.9 384.3l-1.3-13.3l-5.6 1.2l1.2 12.4zM695.2 384.6l-1.2-12.4l-3.5 2.7l0.9 8.9zM703.4 410.4l-1.2-13.3l-5.7 1.2l1.2 12.4zM697.7 410.7l-1.2-12.4l-3.4 2.7l0.8 8.9zM706 436.5l-1.3-13.3l-5.6 1.1l1.2 12.5zM700.3 436.8l-1.2-12.5l-3.4 2.7l0.8 9zM708.6 462.5l-1.3-13.3l-5.6 1.2l1.2 12.4zM702.9 462.8l-1.2-12.4l-3.5 2.7l0.9 8.9zM711.1 488.5l-1.2-13.3l-5.6 1.2l1.2 12.4zM705.5 488.8l-1.2-12.4l-3.5 2.7l0.9 8.9zM713.7 514.5l-1.3-13.3l-5.6 1.2l1.2 12.4zM708 514.8l-1.2-12.4l-3.4 2.6l0.8 9zM716.3 540.5l-1.3-13.3l-5.6 1.1l1.2 12.4zM710.6 540.7l-1.2-12.4l-3.5 2.7l0.9 8.9zM718.8 566.4l-1.3-13.3l-5.6 1.1l1.2 12.5zM713.1 566.7l-1.2-12.5l-3.4 2.7l0.9 8.9zM721.4 592.3l-1.3-13.3l-5.6 1.1l1.2 12.4zM715.7 592.5l-1.2-12.4l-3.4 2.7l0.8 8.9zM723.9 618.1l-1.2-13.2l-5.6 1.1l1.2 12.4zM718.3 618.4l-1.2-12.4l-3.5 2.6l0.9 9zM726.5 644l-1.3-13.3l-5.6 1.1l1.2 12.4zM720.8 644.2l-1.2-12.4l-3.4 2.7l0.8 8.9zM729 669.8l-1.2-13.3l-5.6 1.1l1.2 12.4zM723.4 670l-1.2-12.4l-3.5 2.7l0.9 8.9zM731.6 695.5l-1.3-13.2l-5.6 1.1l1.2 12.4zM725.9 695.8l-1.2-12.4l-3.4 2.6l0.8 9z"/><path class="f" fill="#edd2c2" d="M681.5 187.5l-0.4-4.2l-5.6 1.4l0.3 3.9zM684.1 213.8l-0.4-4.2l-5.6 1.4l0.3 3.9zM686.7 240.1l-0.4-4.2l-5.6 1.4l0.3 3.9zM689.2 266.3l-0.3-4.2l-5.6 1.4l0.3 4zM691.8 292.5l-0.3-4.2l-5.6 1.4l0.3 4zM694.4 318.7l-0.3-4.2l-5.6 1.4l0.3 4zM697 344.9l-0.4-4.3l-5.6 1.4l0.4 4zM699.6 371l-0.4-4.3l-5.6 1.4l0.4 4.1zM702.2 397.1l-0.4-4.3l-5.6 1.4l0.3 4.1zM704.7 423.2l-0.3-4.3l-5.6 1.4l0.3 4zM707.3 449.2l-0.4-4.3l-5.6 1.4l0.4 4.1zM709.9 475.2l-0.4-4.3l-5.6 1.4l0.4 4.1zM712.4 501.2l-0.3-4.4l-5.6 1.4l0.3 4.2zM715 527.2l-0.4-4.4l-5.6 1.4l0.4 4.1zM717.5 553.1l-0.3-4.4l-5.6 1.4l0.3 4.1zM720.1 579l-0.4-4.5l-5.5 1.4l0.3 4.2zM722.7 604.9l-0.4-4.5l-5.6 1.4l0.4 4.2zM725.2 630.7l-0.4-4.5l-5.5 1.4l0.3 4.2zM727.8 656.5l-0.4-4.5l-5.6 1.4l0.4 4.2zM730.3 682.3l-0.4-4.6l-5.5 1.4l0.3 4.3z"/>
<path d="M1296.5 656.2l0 3.4l-0.2 3.4l-0.6 3.4l-0.9 3.4l-1.3 3.5l-1.7 3.4l-1.9 3.5l-2.3 3.5l-2.7 3.5l-2.9 3.5l-3.3 3.4l-3.7 3.5l-3.9 3.4l-4.3 3.5l-4.6 3.3l-4.9 3.4l-5.2 3.3l-5.4 3.3l-5.8 3.3l-6.1 3.2l-6.3 3.1l-6.7 3.1l-6.8 3.1l-7.2 2.9l-7.3 3l-7.6 2.8l-7.9 2.8l-8 2.6l-8.3 2.7l-8.4 2.5l-8.6 2.4l-8.8 2.4l-9 2.2l-9.1 2.2l-9.3 2l-9.4 2l-9.5 1.8l-9.6 1.7l-9.7 1.7l-9.8 1.5l-9.8 1.4l-10 1.3l-9.9 1.2l-10 1l-10 0.9l-10 0.9l-10 0.6l-9.9 0.6l-10 0.4l-9.8 0.4l-9.9 0.2l-9.7 0l-9.7 0l-9.6-0.2l-9.4-0.3l-9.4-0.5l-9.2-0.5l-9.1-0.7l-8.9-0.8l-8.7-0.9l-8.6-1l-8.3-1.2l-8.2-1.3l-8-1.4l-7.7-1.5l-7.5-1.6l-7.3-1.7l-7.1-1.8l-6.7-1.9l-6.5-2.1l-6.3-2.1l-5.9-2.2l-5.7-2.3l-5.4-2.4l-5.1-2.5l-4.8-2.6l-4.4-2.7l-4.2-2.7l-3.8-2.8l-3.5-2.9l-3.2-2.9l-2.9-3l-2.5-3.1l-2.2-3.1l-1.8-3.2l-1.5-3.2l-1.2-3.2l-0.8-3.3l-0.5-3.4l-52.8-535.5l0.4 3l0.8 3l1.2 3l1.4 2.9l1.9 2.9l2.2 2.8l2.5 2.8l2.8 2.7l3.2 2.6l3.5 2.6l3.9 2.6l4.2 2.4l4.4 2.4l4.9 2.3l5.1 2.3l5.4 2.1l5.7 2.1l6 2l6.3 1.8l6.6 1.8l6.8 1.7l7.1 1.6l7.3 1.6l7.6 1.4l7.8 1.3l8.1 1.2l8.2 1l8.5 1l8.6 0.9l8.9 0.8l9 0.6l9.1 0.6l9.3 0.4l9.5 0.3l9.6 0.2l9.6 0.1l9.8-0.1l9.9-0.1l9.9-0.3l10-0.3l10.1-0.5l10-0.6l10.2-0.8l10.1-0.8l10.1-0.9l10.1-1.1l10.1-1.1l10-1.3l10-1.4l9.9-1.4l9.8-1.6l9.7-1.7l9.7-1.8l9.5-1.8l9.4-2l9.2-2l9.1-2.2l8.9-2.2l8.8-2.3l8.5-2.4l8.4-2.4l8.2-2.5l7.9-2.6l7.7-2.7l7.5-2.7l7.2-2.8l7-2.8l6.7-2.9l6.5-3l6.1-2.9l5.9-3.1l5.6-3l5.3-3.1l4.9-3.1l4.7-3.2l4.4-3.1l4-3.2l3.7-3.2l3.3-3.2l3.1-3.2l2.7-3.2l2.3-3.2l2.1-3.2l1.6-3.2l1.3-3.1l1-3.2l0.7-3.1l0.2-3.1l0-3.1z" fill="url(#bg)"/><path d="M1296.5 656.2l0 3.4l-0.2 3.4l-0.6 3.4l-0.9 3.4l-1.3 3.5l-1.7 3.4l-1.9 3.5l-2.3 3.5l-2.7 3.5l-2.9 3.5l-3.3 3.4l-3.7 3.5l-3.9 3.4l-4.3 3.5l-4.6 3.3l-4.9 3.4l-5.2 3.3l-5.4 3.3l-5.8 3.3l-6.1 3.2l-6.3 3.1l-6.7 3.1l-6.8 3.1l-7.2 2.9l-7.3 3l-7.6 2.8l-7.9 2.8l-8 2.6l-8.3 2.7l-8.4 2.5l-8.6 2.4l-8.8 2.4l-9 2.2l-9.1 2.2l-9.3 2l-9.4 2l-9.5 1.8l-9.6 1.7l-9.7 1.7l-9.8 1.5l-9.8 1.4l-10 1.3l-9.9 1.2l-10 1l-10 0.9l-10 0.9l-10 0.6l-9.9 0.6l-10 0.4l-9.8 0.4l-9.9 0.2l-9.7 0l-9.7 0l-9.6-0.2l-9.4-0.3l-9.4-0.5l-9.2-0.5l-9.1-0.7l-8.9-0.8l-8.7-0.9l-8.6-1l-8.3-1.2l-8.2-1.3l-8-1.4l-7.7-1.5l-7.5-1.6l-7.3-1.7l-7.1-1.8l-6.7-1.9l-6.5-2.1l-6.3-2.1l-5.9-2.2l-5.7-2.3l-5.4-2.4l-5.1-2.5l-4.8-2.6l-4.4-2.7l-4.2-2.7l-3.8-2.8l-3.5-2.9l-3.2-2.9l-2.9-3l-2.5-3.1l-2.2-3.1l-1.8-3.2l-1.5-3.2l-1.2-3.2l-0.8-3.3l-0.5-3.4" fill="none" stroke="#17324a" stroke-width="1.2"/>
<path class="h" d="M1250.4 142.6l0.9-4.3l5.7 0.5l3.9 3.3l0.9 6.1l0.4 9l-0.6 2.9l-3.6 3.8l-5.7 1.2l-1.4-9.1zM1252.7 168.9l0.9-4.3l5.7 0.6l3.8 3.3l1 6.1l0.3 9l-0.6 2.9l-3.5 3.7l-5.7 1.2l-1.4-9.1zM1255 195.3l0.8-4.3l5.7 0.5l3.9 3.3l0.9 6.1l0.4 9l-0.6 2.9l-3.6 3.7l-5.6 1.2l-1.4-9zM1257.2 221.6l0.9-4.3l5.7 0.5l3.8 3.3l1 6.1l0.3 9l-0.5 2.9l-3.6 3.7l-5.7 1.2l-1.3-9zM1259.5 247.9l0.8-4.4l5.8 0.5l3.8 3.3l0.9 6.1l0.4 9l-0.6 2.9l-3.5 3.8l-5.7 1.2l-1.4-9.1zM1261.7 274.1l0.9-4.3l5.7 0.5l3.9 3.3l0.9 6l0.3 9l-0.5 3l-3.6 3.7l-5.6 1.2l-1.4-9zM1264 300.3l0.9-4.3l5.7 0.5l3.8 3.3l0.9 6l0.4 9l-0.6 3l-3.5 3.7l-5.7 1.2l-1.4-9zM1266.3 326.5l0.8-4.4l5.7 0.5l3.8 3.3l1 6.1l0.4 9l-0.6 2.9l-3.6 3.8l-5.6 1.1l-1.4-8.9zM1268.5 352.7l0.9-4.5l5.7 0.6l3.8 3.3l0.9 6l0.4 9l-0.6 3l-3.5 3.7l-5.7 1.2l-1.4-9zM1270.8 378.8l0.8-4.4l5.7 0.5l3.8 3.3l1 6l0.3 9l-0.5 3l-3.6 3.7l-5.6 1.2l-1.4-8.9zM1273 404.9l0.9-4.5l5.7 0.6l3.8 3.2l0.9 6l0.4 9l-0.6 3l-3.5 3.8l-5.7 1.1l-1.4-8.8zM1275.3 431l0.8-4.5l5.7 0.5l3.8 3.3l1 6l0.3 9l-0.5 3l-3.6 3.7l-5.6 1.2l-1.4-8.9zM1277.5 457l0.8-4.5l5.7 0.5l3.9 3.3l0.9 6l0.3 9l-0.5 3l-3.6 3.7l-5.6 1.2l-1.4-8.8zM1279.7 483l0.9-4.5l5.7 0.5l3.8 3.3l0.9 5.9l0.4 9l-0.6 3.1l-3.5 3.7l-5.7 1.2l-1.3-8.8zM1282 509l0.8-4.5l5.7 0.5l3.8 3.3l0.9 5.9l0.4 9l-0.6 3l-3.5 3.8l-5.6 1.1l-1.4-8.7zM1284.2 535l0.8-4.6l5.7 0.5l3.9 3.3l0.9 5.9l0.3 9l-0.5 3.1l-3.6 3.7l-5.6 1.2l-1.3-8.8zM1286.5 560.9l0.9-4.6l5.7 0.5l3.8 3.3l0.9 5.9l0.4 9l-0.6 3.1l-3.5 3.7l-5.6 1.2l-1.4-8.8zM1288.7 586.8l0.8-4.6l5.7 0.5l3.8 3.3l0.9 5.8l0.4 9l-0.6 3.1l-3.5 3.7l-5.6 1.2l-1.4-8.7zM1290.9 612.6l0.8-4.6l5.7 0.5l3.8 3.3l0.9 5.9l0.4 9l-0.5 3.1l-3.6 3.7l-5.6 1.1l-1.4-8.6zM1293.1 638.5l0.9-4.6l5.6 0.5l3.8 3.3l1 5.9l0.3 8.9l-0.5 3.2l-3.6 3.7l-5.6 1.2l-1.3-8.7z"/><path class="f" fill="#687038" d="M1250.9 156l1.4 9.1l5.7-1.2l-1.3-8.5zM1256.7 155.4l1.3 8.5l3.6-3.8l-1-6.1zM1253.2 182.3l1.4 9.1l5.7-1.2l-1.3-8.5zM1259 181.7l1.3 8.5l3.5-3.7l-0.9-6.1zM1255.5 208.7l1.4 9l5.6-1.2l-1.3-8.4zM1261.2 208.1l1.3 8.4l3.6-3.7l-0.9-6.1zM1257.7 235l1.4 9l5.7-1.2l-1.3-8.4zM1263.5 234.4l1.3 8.4l3.6-3.7l-1-6.1zM1260 261.2l1.4 9.1l5.7-1.2l-1.3-8.5zM1265.8 260.6l1.3 8.5l3.5-3.8l-0.9-6zM1262.3 287.5l1.4 9l5.6-1.2l-1.3-8.4zM1268 286.9l1.3 8.4l3.6-3.7l-1-6.1zM1264.5 313.7l1.4 9l5.7-1.2l-1.3-8.4zM1270.3 313.1l1.3 8.4l3.5-3.7l-0.9-6.1zM1266.8 339.9l1.4 8.9l5.6-1.1l-1.3-8.4zM1272.5 339.3l1.3 8.4l3.6-3.8l-1-6zM1269 366l1.4 9l5.7-1.2l-1.3-8.4zM1274.8 365.4l1.3 8.4l3.5-3.7l-0.9-6zM1271.3 392.2l1.4 8.9l5.6-1.2l-1.3-8.3zM1277 391.6l1.3 8.3l3.6-3.7l-1-6zM1273.5 418.3l1.4 8.8l5.7-1.1l-1.3-8.3zM1279.3 417.7l1.3 8.3l3.5-3.8l-0.9-5.9zM1275.8 444.3l1.4 8.9l5.6-1.2l-1.3-8.3zM1281.5 443.7l1.3 8.3l3.5-3.7l-0.9-6zM1278 470.4l1.4 8.8l5.6-1.2l-1.2-8.2zM1283.8 469.8l1.2 8.2l3.6-3.7l-0.9-5.9zM1280.3 496.4l1.4 8.8l5.6-1.2l-1.3-8.2zM1286 495.8l1.3 8.2l3.5-3.7l-0.9-5.9zM1282.5 522.3l1.4 8.8l5.6-1.1l-1.3-8.3zM1288.2 521.7l1.3 8.3l3.5-3.8l-0.9-5.9zM1284.8 548.3l1.3 8.8l5.6-1.2l-1.2-8.2zM1290.5 547.7l1.2 8.2l3.6-3.7l-0.9-5.9zM1287 574.2l1.4 8.8l5.6-1.2l-1.3-8.2zM1292.7 573.6l1.3 8.2l3.5-3.7l-0.9-5.9zM1289.2 600.1l1.4 8.7l5.6-1.1l-1.3-8.2zM1294.9 599.5l1.3 8.2l3.5-3.8l-0.9-5.8zM1291.4 626l1.4 8.7l5.6-1.2l-1.3-8.2zM1297.1 625.3l1.3 8.2l3.5-3.7l-0.9-5.9zM1293.7 651.8l1.3 8.7l5.6-1.2l-1.2-8.1zM1299.4 651.2l1.2 8.1l3.6-3.7l-0.9-5.9z"/><path class="f" fill="#edd2c2" d="M1251.3 138.3l-0.9 4.3l5.8 0.2l0.8-4zM1257 138.8l-0.8 4l4.1 2.2l0.6-2.9zM1253.5 164.7l-0.8 4.2l5.8 0.3l0.8-4zM1259.3 165.2l-0.8 4l4 2.2l0.6-2.9zM1255.8 191l-0.9 4.3l5.8 0.2l0.8-4zM1261.5 191.5l-0.8 4l4.1 2.2l0.6-2.9zM1258.1 217.3l-0.9 4.3l5.8 0.2l0.8-4zM1263.8 217.8l-0.8 4l4.1 2.2l0.5-2.9zM1260.3 243.5l-0.8 4.4l5.8 0.2l0.8-4.1zM1266.1 244l-0.8 4.1l4 2.2l0.6-3zM1262.6 269.7l-0.9 4.4l5.8 0.2l0.8-4zM1268.3 270.3l-0.8 4l4.1 2.2l0.6-2.9zM1264.9 295.9l-0.9 4.4l5.8 0.3l0.8-4.1zM1270.6 296.5l-0.8 4.1l4 2.1l0.6-2.9zM1267.1 322.1l-0.8 4.4l5.7 0.3l0.8-4.2zM1272.8 322.6l-0.8 4.2l4.1 2.1l0.6-3zM1269.4 348.3l-0.9 4.4l5.8 0.2l0.8-4.1zM1275.1 348.8l-0.8 4.1l4 2.1l0.6-2.9zM1271.6 374.4l-0.8 4.4l5.7 0.2l0.8-4.1zM1277.3 374.9l-0.8 4.1l4.1 2.2l0.5-3zM1273.9 400.4l-0.9 4.5l5.8 0.2l0.8-4.1zM1279.6 401l-0.8 4.1l4 2.2l0.6-3zM1276.1 426.5l-0.8 4.5l5.7 0.2l0.8-4.2zM1281.8 427l-0.8 4.2l4.1 2.1l0.5-3zM1278.3 452.5l-0.8 4.5l5.8 0.2l0.7-4.2zM1284 453l-0.7 4.2l4 2.2l0.6-3.1zM1280.6 478.5l-0.9 4.5l5.8 0.3l0.8-4.3zM1286.3 479l-0.8 4.3l4 2.1l0.6-3.1zM1282.8 504.5l-0.8 4.5l5.7 0.2l0.8-4.2zM1288.5 505l-0.8 4.2l4.1 2.1l0.5-3zM1285.1 530.4l-0.9 4.5l5.8 0.3l0.7-4.3zM1290.7 530.9l-0.7 4.3l4 2.1l0.6-3.1zM1287.3 556.3l-0.8 4.6l5.7 0.2l0.8-4.3zM1293 556.8l-0.8 4.3l4 2.1l0.6-3.1zM1289.5 582.2l-0.8 4.6l5.7 0.2l0.8-4.3zM1295.2 582.7l-0.8 4.3l4 2.1l0.6-3.1zM1291.7 608l-0.8 4.6l5.7 0.2l0.8-4.3zM1297.4 608.5l-0.8 4.3l4.1 2.1l0.5-3.1zM1294 633.8l-0.9 4.6l5.8 0.3l0.7-4.4zM1299.6 634.3l-0.7 4.4l4 2.1l0.5-3.2z"/><path class="f" fill="#bfcab2" d="M1250.4 142.6l0.5 13.4l5.8-0.6l-0.5-12.6zM1256.2 142.8l0.5 12.6l3.9-1.4l-0.3-9zM1252.7 168.9l0.5 13.4l5.8-0.6l-0.5-12.5zM1258.5 169.2l0.5 12.5l3.9-1.3l-0.4-9zM1254.9 195.3l0.6 13.4l5.7-0.6l-0.5-12.6zM1260.7 195.5l0.5 12.6l4-1.4l-0.4-9zM1257.2 221.6l0.5 13.4l5.8-0.6l-0.5-12.6zM1263 221.8l0.5 12.6l3.9-1.4l-0.3-9zM1259.5 247.9l0.5 13.3l5.8-0.6l-0.5-12.5zM1265.3 248.1l0.5 12.5l3.9-1.3l-0.4-9zM1261.7 274.1l0.6 13.4l5.7-0.6l-0.5-12.6zM1267.5 274.3l0.5 12.6l3.9-1.4l-0.3-9zM1264 300.3l0.5 13.4l5.8-0.6l-0.5-12.5zM1269.8 300.6l0.5 12.5l3.9-1.4l-0.4-9zM1266.3 326.5l0.5 13.4l5.7-0.6l-0.5-12.5zM1272 326.8l0.5 12.5l3.9-1.4l-0.3-9zM1268.5 352.7l0.5 13.3l5.8-0.6l-0.5-12.5zM1274.3 352.9l0.5 12.5l3.9-1.3l-0.4-9.1zM1270.8 378.8l0.5 13.4l5.7-0.6l-0.5-12.6zM1276.5 379l0.5 12.6l3.9-1.4l-0.3-9zM1273 404.9l0.5 13.4l5.8-0.6l-0.5-12.6zM1278.8 405.1l0.5 12.6l3.9-1.4l-0.4-9zM1275.3 431l0.5 13.3l5.7-0.6l-0.5-12.5zM1281 431.2l0.5 12.5l3.9-1.4l-0.3-9zM1277.5 457l0.5 13.4l5.8-0.6l-0.5-12.6zM1283.3 457.2l0.5 12.6l3.9-1.4l-0.4-9zM1279.7 483l0.6 13.4l5.7-0.6l-0.5-12.5zM1285.5 483.3l0.5 12.5l3.9-1.4l-0.4-9zM1282 509l0.5 13.3l5.7-0.6l-0.5-12.5zM1287.7 509.2l0.5 12.5l3.9-1.4l-0.3-9zM1284.2 534.9l0.6 13.4l5.7-0.6l-0.5-12.5zM1290 535.2l0.5 12.5l3.9-1.4l-0.4-9zM1286.5 560.9l0.5 13.3l5.7-0.6l-0.5-12.5zM1292.2 561.1l0.5 12.5l3.9-1.4l-0.4-9zM1288.7 586.8l0.5 13.3l5.7-0.6l-0.5-12.5zM1294.4 587l0.5 12.5l3.9-1.4l-0.4-9zM1290.9 612.6l0.5 13.4l5.7-0.7l-0.5-12.5zM1296.6 612.8l0.5 12.5l3.9-1.4l-0.3-9zM1293.1 638.4l0.6 13.4l5.7-0.6l-0.5-12.5zM1298.9 638.7l0.5 12.5l3.9-1.5l-0.4-8.9z"/><path class="g" fill="#98aa70" d="M1260.6 154l1 6.1l0.6-2.8l-0.4-9.1l-0.9-6.1l-0.6 2.9zM1262.9 180.4l0.9 6.1l0.6-2.9l-0.3-9l-1-6.1l-0.6 2.9zM1265.2 206.7l0.9 6.1l0.6-2.9l-0.4-9l-0.9-6.1l-0.6 2.9zM1267.4 233l1 6.1l0.5-2.9l-0.3-9l-1-6.1l-0.5 2.9zM1269.7 259.3l0.9 6l0.6-2.9l-0.4-9l-0.9-6.1l-0.6 3zM1271.9 285.5l1 6.1l0.5-3l-0.3-9l-0.9-6l-0.6 2.9zM1274.2 311.7l0.9 6.1l0.6-3l-0.4-9l-0.9-6l-0.6 2.9zM1276.4 337.9l1 6l0.5-2.9l-0.3-9l-0.9-6.1l-0.6 3zM1278.7 364.1l0.9 6l0.6-3l-0.4-9l-0.9-6l-0.6 2.9zM1280.9 390.2l1 6l0.5-3l-0.3-9l-1-6l-0.5 3zM1283.2 416.3l0.9 5.9l0.6-3l-0.4-9l-0.9-5.9l-0.6 3zM1285.4 442.3l0.9 6l0.6-3l-0.4-9l-0.9-6l-0.5 3zM1287.7 468.4l0.9 5.9l0.5-3l-0.3-9l-0.9-6l-0.6 3.1zM1289.9 494.4l0.9 5.9l0.6-3.1l-0.4-8.9l-0.9-6l-0.6 3.1zM1292.1 520.3l0.9 5.9l0.6-3l-0.4-9l-0.9-5.9l-0.5 3zM1294.4 546.3l0.9 5.9l0.5-3.1l-0.3-9l-0.9-5.9l-0.6 3.1zM1296.6 572.2l0.9 5.9l0.6-3.1l-0.4-9l-0.9-5.9l-0.6 3.1zM1298.8 598.1l0.9 5.8l0.6-3.1l-0.4-8.9l-0.9-5.9l-0.6 3.1zM1301 623.9l0.9 5.9l0.6-3.1l-0.4-9l-0.9-5.9l-0.5 3.1zM1303.3 649.7l0.9 5.9l0.5-3.1l-0.3-9l-1-5.9l-0.5 3.2z"/>
<path class="h" d="M674.8 199.8l3.1-4l5.5-1.6l2.1 4l2.1 13.2l0.1 9.3l-5.8-0.1l-4.2-3l-1.4-2.6l-1.4-9zM677.4 226.2l3.1-4l5.5-1.6l2.1 4l2.1 13.2l0.1 9.2l-5.8 0l-4.2-3l-1.4-2.7l-1.4-8.9zM680 252.5l3.1-4l5.5-1.6l2.1 4l2.1 13.2l0.1 9.2l-5.8 0l-4.2-3l-1.4-2.7l-1.4-8.9zM682.6 278.8l3.1-4l5.5-1.6l2.1 4l2.1 13.2l0.1 9.2l-5.8 0l-4.2-3l-1.4-2.8l-1.4-8.9zM685.2 305l3.1-4l5.5-1.6l2.1 4.1l2.1 13.2l0.1 9.1l-5.8 0l-4.2-3l-1.4-2.7l-1.4-8.9zM687.8 331.2l3.1-4l5.5-1.6l2.1 4.1l2.1 13.2l0.1 9.2l-5.8-0.1l-4.2-3l-1.4-2.7l-1.4-8.9zM690.4 357.4l3.1-4l5.5-1.6l2 4.1l2.2 13.3l0 9.1l-5.7-0.1l-4.2-3l-1.4-2.7l-1.5-8.9zM693 383.6l3.1-4l5.5-1.6l2 4.1l2.2 13.2l0 9.1l-5.7 0l-4.3-3l-1.3-2.8l-1.5-8.9zM695.6 409.7l3.1-4l5.5-1.6l2 4.1l2.1 13.3l0.1 9l-5.8 0l-4.2-3l-1.4-2.8l-1.4-8.9zM698.1 435.8l3-4l5.5-1.6l2.1 4.2l2.1 13.2l0.1 9l-5.8 0l-4.2-3l-1.4-2.8l-1.4-8.9zM700.7 461.9l3.1-4l5.5-1.6l2.1 4.2l2.1 13.2l0.1 9l-5.8-0.1l-4.2-2.9l-1.4-2.8l-1.4-8.9zM703.3 487.9l3.1-3.9l5.5-1.7l2 4.2l2.2 13.2l0 9l-5.7 0l-4.2-3l-1.4-2.8l-1.4-8.9zM705.9 514l3.1-4l5.4-1.7l2.1 4.3l2.1 13.2l0.1 8.9l-5.8 0l-4.2-3l-1.3-2.8l-1.5-8.9zM708.4 539.9l3.1-3.9l5.5-1.7l2.1 4.3l2.1 13.2l0 8.9l-5.7 0l-4.2-3l-1.4-2.9l-1.4-8.8zM711 565.9l3.1-4l5.5-1.6l2 4.2l2.2 13.2l0 9l-5.7-0.1l-4.2-2.9l-1.4-2.9l-1.5-8.9zM713.6 591.8l3-4l5.5-1.6l2.1 4.3l2.1 13.2l0.1 8.9l-5.8-0.1l-4.2-2.9l-1.4-2.9l-1.4-8.9zM716.1 617.7l3.1-4l5.5-1.6l2 4.3l2.2 13.2l0 8.9l-5.7-0.1l-4.2-2.9l-1.4-2.9l-1.4-8.9zM718.7 643.6l3.1-4l5.4-1.6l2.1 4.3l2.1 13.2l0.1 8.8l-5.8 0l-4.1-3l-1.4-2.9l-1.5-8.9zM721.2 669.4l3.1-4l5.5-1.6l2 4.3l2.2 13.2l0 8.9l-5.7-0.1l-4.2-2.9l-1.4-3l-1.4-8.8zM723.8 695.2l3.1-4l5.4-1.6l2.1 4.4l2.1 13.1l0.1 8.9l-5.8-0.1l-4.2-2.9l-1.3-3l-1.5-8.8z"/><path class="f" fill="#687038" d="M687.7 220.7l-0.1-9.3l-5.8 0.6l0.1 8.6zM681.9 220.6l-0.1-8.6l-4.2-0.6l0.1 6.3zM690.3 247l-0.1-9.2l-5.8 0.5l0.1 8.7zM684.5 247l-0.1-8.7l-4.2-0.5l0.1 6.2zM692.9 273.3l-0.1-9.2l-5.8 0.6l0.1 8.6zM687.1 273.3l-0.1-8.6l-4.2-0.6l0.1 6.2zM695.5 299.6l-0.1-9.2l-5.8 0.6l0.1 8.6zM689.7 299.6l-0.1-8.6l-4.2-0.6l0.1 6.2zM698.1 325.9l-0.1-9.2l-5.8 0.5l0.1 8.6zM692.3 325.8l-0.1-8.6l-4.2-0.5l0.1 6.1zM700.7 352.1l-0.1-9.2l-5.8 0.6l0.1 8.5zM694.9 352l-0.1-8.5l-4.2-0.6l0.1 6.1zM703.3 378.3l-0.1-9.2l-5.8 0.6l0.1 8.5zM697.5 378.2l-0.1-8.5l-4.2-0.6l0.1 6.1zM705.8 404.4l0-9.1l-5.8 0.6l0.1 8.5zM700.1 404.4l-0.1-8.5l-4.2-0.6l0.1 6.1zM708.4 430.5l-0.1-9l-5.7 0.5l0.1 8.5zM702.7 430.5l-0.1-8.5l-4.2-0.6l0 6.1zM711 456.6l-0.1-9l-5.7 0.5l0 8.5zM705.2 456.6l0-8.5l-4.2-0.6l0 6.1zM713.6 482.7l-0.1-9l-5.8 0.5l0.1 8.5zM707.8 482.7l-0.1-8.5l-4.2-0.6l0.1 6.1zM716.1 508.7l0-9l-5.8 0.6l0.1 8.4zM710.4 508.7l-0.1-8.4l-4.2-0.6l0.1 6zM718.7 534.7l-0.1-8.9l-5.7 0.5l0 8.4zM712.9 534.7l0-8.4l-4.2-0.6l0 6zM721.2 560.7l0-8.9l-5.8 0.5l0.1 8.4zM715.5 560.7l-0.1-8.4l-4.1-0.6l0 6zM723.8 586.7l0-9l-5.8 0.6l0.1 8.3zM718.1 586.6l-0.1-8.3l-4.2-0.6l0.1 6zM726.4 612.6l-0.1-8.9l-5.7 0.5l0 8.3zM720.6 612.5l0-8.3l-4.2-0.6l0 6zM728.9 638.5l0-8.9l-5.8 0.5l0.1 8.3zM723.2 638.4l-0.1-8.3l-4.1-0.6l0 6zM731.5 664.3l-0.1-8.8l-5.7 0.5l0 8.3zM725.7 664.3l0-8.3l-4.2-0.6l0 5.9zM734 690.2l0-8.9l-5.8 0.5l0.1 8.3zM728.3 690.1l-0.1-8.3l-4.1-0.6l0 6zM736.6 716l-0.1-8.9l-5.7 0.6l0 8.2zM730.8 715.9l0-8.2l-4.2-0.7l0.1 6z"/><path class="f" fill="#bfcab2" d="M687.6 211.4l-2.1-13.2l-5.7 1.4l2 12.4zM681.8 212l-2-12.4l-3.6 2.9l1.4 8.9zM690.2 237.8l-2.1-13.2l-5.7 1.3l2 12.4zM684.4 238.3l-2-12.4l-3.6 3l1.4 8.9zM692.8 264.1l-2.1-13.2l-5.7 1.4l2 12.4zM687 264.7l-2-12.4l-3.6 2.9l1.4 8.9zM695.4 290.4l-2.1-13.2l-5.7 1.4l2 12.4zM689.6 291l-2-12.4l-3.6 2.9l1.4 8.9zM698 316.7l-2.1-13.2l-5.7 1.3l2 12.4zM692.2 317.2l-2-12.4l-3.6 3l1.4 8.9zM700.6 342.9l-2.1-13.2l-5.7 1.4l2 12.4zM694.8 343.5l-2-12.4l-3.6 2.9l1.4 8.9zM703.2 369.1l-2.2-13.2l-5.6 1.4l2 12.4zM697.4 369.7l-2-12.4l-3.6 2.9l1.4 8.9zM705.8 395.3l-2.2-13.2l-5.6 1.4l2 12.4zM700 395.9l-2-12.4l-3.6 2.9l1.4 8.9zM708.3 421.5l-2.1-13.2l-5.6 1.3l2 12.4zM702.6 422l-2-12.4l-3.6 2.9l1.4 8.9zM710.9 447.6l-2.1-13.2l-5.6 1.3l2 12.4zM705.2 448.1l-2-12.4l-3.7 2.9l1.5 8.9zM713.5 473.7l-2.1-13.2l-5.7 1.3l2 12.4zM707.7 474.2l-2-12.4l-3.6 2.9l1.4 8.9zM716.1 499.7l-2.2-13.2l-5.6 1.4l2 12.4zM710.3 500.3l-2-12.4l-3.6 2.9l1.4 8.9zM718.6 525.8l-2.1-13.2l-5.6 1.3l2 12.4zM712.9 526.3l-2-12.4l-3.6 2.9l1.4 8.9zM721.2 551.8l-2.1-13.2l-5.6 1.3l1.9 12.4zM715.4 552.3l-1.9-12.4l-3.7 2.9l1.5 8.9zM723.8 577.7l-2.2-13.2l-5.6 1.4l2 12.4zM718 578.3l-2-12.4l-3.6 2.9l1.4 8.9zM726.3 603.7l-2.1-13.2l-5.6 1.3l2 12.4zM720.6 604.2l-2-12.4l-3.6 2.9l1.4 8.9zM728.9 629.6l-2.2-13.2l-5.6 1.3l2 12.4zM723.1 630.1l-2-12.4l-3.6 2.9l1.5 8.9zM731.4 655.5l-2.1-13.2l-5.6 1.3l2 12.4zM725.7 656l-2-12.4l-3.6 2.9l1.4 8.9zM734 681.3l-2.2-13.2l-5.5 1.4l1.9 12.3zM728.2 681.8l-1.9-12.3l-3.7 2.8l1.5 8.9zM736.5 707.1l-2.1-13.2l-5.6 1.4l2 12.4zM730.8 707.7l-2-12.4l-3.6 2.8l1.4 8.9z"/><path class="f" fill="#edd2c2" d="M685.5 198.2l-2.1-4l-5.5 1.6l1.9 3.8zM679.8 199.6l-1.9-3.8l-3.1 4l1.4 2.7zM688.1 224.6l-2.1-4l-5.5 1.6l1.9 3.7zM682.4 225.9l-1.9-3.7l-3.1 4l1.4 2.7zM690.7 250.9l-2.1-4l-5.5 1.6l1.9 3.8zM685 252.3l-1.9-3.8l-3.1 4l1.4 2.7zM693.3 277.2l-2.1-4l-5.5 1.6l1.9 3.8zM687.6 278.6l-1.9-3.8l-3.1 4l1.4 2.7zM695.9 303.5l-2.1-4.1l-5.5 1.6l1.9 3.8zM690.2 304.8l-1.9-3.8l-3.1 4l1.4 2.8zM698.5 329.7l-2.1-4.1l-5.5 1.6l1.9 3.9zM692.8 331.1l-1.9-3.9l-3.1 4l1.4 2.8zM701 355.9l-2-4.1l-5.5 1.6l1.9 3.9zM695.4 357.3l-1.9-3.9l-3.1 4l1.4 2.8zM703.6 382.1l-2-4.1l-5.5 1.6l1.9 3.9zM698 383.5l-1.9-3.9l-3.1 4l1.4 2.8zM706.2 408.3l-2-4.2l-5.5 1.6l1.9 3.9zM700.6 409.6l-1.9-3.9l-3.1 4l1.4 2.8zM708.8 434.4l-2.1-4.2l-5.5 1.6l2 3.9zM703.2 435.7l-2-3.9l-3.1 4l1.4 2.8zM711.4 460.5l-2.1-4.2l-5.5 1.6l1.9 3.9zM705.7 461.8l-1.9-3.9l-3.1 4l1.4 2.8zM713.9 486.5l-2-4.2l-5.5 1.7l1.9 3.9zM708.3 487.9l-1.9-3.9l-3.1 3.9l1.4 2.9zM716.5 512.6l-2.1-4.3l-5.4 1.7l1.9 3.9zM710.9 513.9l-1.9-3.9l-3.1 4l1.4 2.8zM719.1 538.6l-2.1-4.3l-5.5 1.6l2 4zM713.5 539.9l-2-4l-3.1 4l1.4 2.9zM721.6 564.5l-2-4.2l-5.5 1.6l1.9 4zM716 565.9l-1.9-4l-3.1 4l1.4 2.9zM724.2 590.5l-2.1-4.3l-5.4 1.6l1.9 4zM718.6 591.8l-1.9-4l-3.1 4l1.4 2.9zM726.7 616.4l-2-4.3l-5.5 1.6l1.9 4zM721.1 617.7l-1.9-4l-3.1 4l1.4 2.9zM729.3 642.3l-2.1-4.3l-5.4 1.6l1.9 4zM723.7 643.6l-1.9-4l-3.1 4l1.4 2.9zM731.8 668.1l-2-4.3l-5.5 1.6l2 4.1zM726.3 669.5l-2-4.1l-3.1 4l1.4 2.9zM734.4 693.9l-2.1-4.3l-5.4 1.6l1.9 4.1zM728.8 695.3l-1.9-4.1l-3.1 4l1.4 2.9z"/><path class="g" fill="#98aa70" d="M674.9 206l1.4 9l1.4 2.7l-0.1-6.3l-1.4-8.9l-1.4-2.7zM677.5 232.4l1.4 8.9l1.4 2.7l-0.1-6.2l-1.4-8.9l-1.4-2.7zM680.1 258.7l1.4 8.9l1.4 2.7l-0.1-6.2l-1.4-8.9l-1.4-2.7zM682.7 284.9l1.4 8.9l1.4 2.8l-0.1-6.2l-1.4-8.9l-1.4-2.7zM685.3 311.2l1.4 8.9l1.4 2.7l-0.1-6.1l-1.4-8.9l-1.4-2.8zM687.9 337.4l1.4 8.9l1.4 2.7l-0.1-6.1l-1.4-8.9l-1.4-2.8zM690.5 363.6l1.4 8.9l1.4 2.7l-0.1-6.1l-1.4-8.9l-1.4-2.8zM693 389.7l1.5 8.9l1.4 2.8l-0.1-6.1l-1.4-8.9l-1.4-2.8zM695.6 415.8l1.5 8.9l1.3 2.8l0-6.1l-1.4-8.9l-1.4-2.8zM698.2 441.9l1.4 8.9l1.4 2.8l0-6.1l-1.5-8.9l-1.4-2.8zM700.8 468l1.4 8.9l1.4 2.8l-0.1-6.1l-1.4-8.9l-1.4-2.8zM703.4 494l1.4 8.9l1.4 2.8l-0.1-6l-1.4-8.9l-1.4-2.9zM705.9 520l1.5 8.9l1.3 2.8l0-6l-1.4-8.9l-1.4-2.8zM708.5 546l1.4 8.9l1.4 2.8l0-6l-1.5-8.9l-1.4-2.9zM711.1 571.9l1.4 8.9l1.4 2.9l-0.1-6l-1.4-8.9l-1.4-2.9zM713.6 597.8l1.4 8.9l1.4 2.9l0-6l-1.4-8.9l-1.4-2.9zM716.2 623.7l1.4 8.9l1.4 2.9l0-6l-1.5-8.9l-1.4-2.9zM718.7 649.5l1.5 8.9l1.3 2.9l0-5.9l-1.4-8.9l-1.4-2.9zM721.3 675.4l1.4 8.8l1.4 3l0-6l-1.5-8.9l-1.4-2.9zM723.8 701.2l1.5 8.8l1.4 3l-0.1-6l-1.4-8.9l-1.4-2.9z"/>
<path class="h" d="M1244.7 167.5l0.3-13.5l2.6-4.3l5.6 0.7l3.5 3.5l1.6 6.1l-0.3 9.1l-1.7 2.9l-3.7 3.6l-5.7 1zM1247 193.9l0.3-13.4l2.5-4.4l5.6 0.7l3.6 3.5l1.5 6.1l-0.2 9l-1.7 3l-3.7 3.6l-5.7 1zM1249.2 220.3l0.4-13.5l2.5-4.3l5.6 0.7l3.6 3.5l1.5 6.1l-0.2 9l-1.7 3l-3.8 3.6l-5.6 0.9zM1251.5 246.7l0.3-13.5l2.6-4.4l5.6 0.7l3.6 3.5l1.5 6.1l-0.3 9l-1.7 3l-3.7 3.6l-5.6 1zM1253.8 273l0.3-13.5l2.6-4.4l5.5 0.7l3.6 3.5l1.5 6.1l-0.2 9l-1.7 3l-3.7 3.6l-5.7 1zM1256.1 299.3l0.3-13.5l2.5-4.4l5.6 0.7l3.6 3.5l1.5 6l-0.2 9.1l-1.7 3l-3.8 3.6l-5.6 0.9zM1258.3 325.5l0.3-13.4l2.6-4.5l5.6 0.8l3.5 3.5l1.5 6l-0.2 9l-1.7 3.1l-3.7 3.6l-5.6 0.9zM1260.6 351.8l0.3-13.4l2.5-4.5l5.6 0.7l3.6 3.5l1.5 6l-0.2 9l-1.7 3.1l-3.8 3.6l-5.6 0.9zM1262.9 378l0.3-13.4l2.5-4.6l5.6 0.8l3.5 3.5l1.6 6l-0.3 9l-1.7 3.1l-3.7 3.6l-5.6 0.9zM1265.1 404.2l0.3-13.5l2.6-4.5l5.5 0.8l3.6 3.4l1.5 6l-0.2 9l-1.7 3.1l-3.7 3.6l-5.6 0.9zM1267.4 430.3l0.3-13.4l2.5-4.6l5.6 0.8l3.6 3.5l1.4 5.9l-0.2 9.1l-1.7 3l-3.7 3.6l-5.6 1zM1269.6 456.4l0.3-13.4l2.6-4.6l5.5 0.8l3.6 3.5l1.5 5.9l-0.2 9l-1.7 3.1l-3.7 3.6l-5.6 1zM1271.9 482.5l0.3-13.4l2.5-4.6l5.6 0.8l3.5 3.4l1.5 6l-0.2 9l-1.7 3.1l-3.7 3.6l-5.6 0.9zM1274.1 508.6l0.3-13.4l2.6-4.7l5.5 0.8l3.6 3.5l1.5 5.9l-0.2 9l-1.7 3.1l-3.7 3.6l-5.6 1zM1276.4 534.6l0.3-13.4l2.5-4.6l5.6 0.7l3.5 3.5l1.5 5.9l-0.2 9l-1.7 3.1l-3.7 3.6l-5.6 1zM1278.6 560.6l0.3-13.4l2.5-4.7l5.6 0.8l3.6 3.5l1.4 5.9l-0.2 9l-1.7 3.1l-3.7 3.6l-5.6 0.9zM1280.9 586.5l0.3-13.5l2.5-4.6l5.5 0.7l3.6 3.5l1.5 5.9l-0.2 9l-1.7 3.2l-3.7 3.6l-5.6 0.9zM1283.1 612.5l0.3-13.4l2.5-4.7l5.6 0.8l3.5 3.4l1.5 5.9l-0.2 9l-1.7 3.2l-3.7 3.6l-5.6 0.9zM1285.3 638.4l0.3-13.4l2.6-4.7l5.5 0.8l3.5 3.4l1.5 5.9l-0.2 9l-1.7 3.2l-3.7 3.6l-5.5 0.9zM1287.6 664.3l0.3-13.4l2.5-4.7l5.5 0.7l3.6 3.5l1.5 5.8l-0.2 9.1l-1.7 3.1l-3.7 3.6l-5.6 0.9z"/><path class="f" fill="#687038" d="M1244.7 167.5l2.2 9.1l5.7-1l-2.1-8.5zM1250.5 167.1l2.1 8.5l3.7-3.6l-1.5-6.1zM1247 193.9l2.2 9.1l5.7-1l-2.2-8.5zM1252.7 193.5l2.2 8.5l3.7-3.6l-1.5-6.1zM1249.2 220.3l2.3 9l5.6-0.9l-2.1-8.5zM1255 219.9l2.1 8.5l3.8-3.6l-1.6-6.1zM1251.5 246.7l2.3 9l5.6-1l-2.1-8.4zM1257.3 246.3l2.1 8.4l3.7-3.6l-1.5-6.1zM1253.8 273l2.2 9l5.7-1l-2.1-8.4zM1259.6 272.6l2.1 8.4l3.7-3.6l-1.5-6zM1256.1 299.3l2.2 8.9l5.6-0.9l-2.1-8.4zM1261.8 298.9l2.1 8.4l3.8-3.6l-1.5-6zM1258.3 325.5l2.3 9l5.6-1l-2.1-8.3zM1264.1 325.2l2.1 8.3l3.7-3.5l-1.5-6.1zM1260.6 351.8l2.2 8.9l5.7-0.9l-2.1-8.4zM1266.4 351.4l2.1 8.4l3.7-3.6l-1.5-6zM1262.9 378l2.2 8.9l5.6-1l-2.1-8.3zM1268.6 377.6l2.1 8.3l3.7-3.5l-1.5-6zM1265.1 404.2l2.3 8.8l5.6-0.9l-2.1-8.3zM1270.9 403.8l2.1 8.3l3.7-3.6l-1.5-6zM1267.4 430.3l2.2 8.9l5.6-1l-2.1-8.3zM1273.1 429.9l2.1 8.3l3.7-3.6l-1.5-5.9zM1269.6 456.4l2.3 8.9l5.6-1l-2.1-8.3zM1275.4 456l2.1 8.3l3.7-3.6l-1.5-5.9zM1271.9 482.5l2.2 8.8l5.6-0.9l-2.1-8.3zM1277.6 482.1l2.1 8.3l3.7-3.6l-1.5-5.9zM1274.1 508.6l2.3 8.8l5.6-1l-2.1-8.2zM1279.9 508.2l2.1 8.2l3.7-3.6l-1.5-5.9zM1276.4 534.6l2.2 8.8l5.6-1l-2.1-8.2zM1282.1 534.2l2.1 8.2l3.7-3.6l-1.5-5.9zM1278.6 560.6l2.2 8.7l5.6-0.9l-2-8.2zM1284.4 560.2l2 8.2l3.7-3.6l-1.4-5.9zM1280.9 586.5l2.2 8.8l5.6-0.9l-2.1-8.2zM1286.6 586.2l2.1 8.2l3.7-3.6l-1.5-5.9zM1283.1 612.5l2.2 8.7l5.6-0.9l-2.1-8.2zM1288.8 612.1l2.1 8.2l3.7-3.6l-1.5-5.9zM1285.3 638.4l2.3 8.7l5.5-0.9l-2-8.2zM1291.1 638l2 8.2l3.7-3.6l-1.4-5.9zM1287.6 664.3l2.2 8.6l5.6-0.9l-2.1-8.1zM1293.3 663.9l2.1 8.1l3.7-3.6l-1.5-5.8z"/><path class="f" fill="#edd2c2" d="M1247.6 149.7l-2.6 4.3l5.8 0.5l2.4-4.1zM1253.2 150.4l-2.4 4.1l4.2 2.3l1.7-2.9zM1249.8 176.1l-2.5 4.4l5.7 0.4l2.4-4.1zM1255.4 176.8l-2.4 4.1l4.3 2.3l1.7-2.9zM1252.1 202.5l-2.5 4.4l5.7 0.4l2.4-4.1zM1257.7 203.2l-2.4 4.1l4.3 2.3l1.7-2.9zM1254.4 228.8l-2.6 4.4l5.8 0.5l2.4-4.2zM1260 229.5l-2.4 4.2l4.2 2.3l1.7-3zM1256.7 255.1l-2.6 4.4l5.8 0.5l2.3-4.1zM1262.2 255.9l-2.3 4.1l4.2 2.3l1.7-3zM1258.9 281.4l-2.5 4.4l5.7 0.5l2.4-4.2zM1264.5 282.1l-2.4 4.2l4.3 2.3l1.7-3zM1261.2 307.6l-2.6 4.5l5.8 0.5l2.4-4.2zM1266.8 308.4l-2.4 4.2l4.2 2.3l1.7-3zM1263.5 333.9l-2.6 4.4l5.7 0.5l2.4-4.2zM1269 334.6l-2.4 4.2l4.3 2.3l1.7-3zM1265.7 360l-2.5 4.6l5.7 0.4l2.4-4.2zM1271.3 360.8l-2.4 4.2l4.2 2.3l1.7-3zM1268 386.2l-2.6 4.5l5.8 0.5l2.3-4.2zM1273.5 387l-2.3 4.2l4.2 2.3l1.7-3.1zM1270.2 412.3l-2.5 4.6l5.7 0.5l2.4-4.3zM1275.8 413.1l-2.4 4.3l4.2 2.2l1.7-3zM1272.5 438.4l-2.6 4.6l5.8 0.5l2.3-4.3zM1278 439.2l-2.3 4.3l4.2 2.2l1.7-3zM1274.7 464.5l-2.5 4.6l5.7 0.5l2.4-4.3zM1280.3 465.3l-2.4 4.3l4.2 2.2l1.7-3.1zM1277 490.5l-2.6 4.6l5.8 0.5l2.3-4.3zM1282.5 491.3l-2.3 4.3l4.2 2.3l1.7-3.1zM1279.2 516.6l-2.5 4.6l5.7 0.4l2.4-4.3zM1284.8 517.3l-2.4 4.3l4.2 2.3l1.7-3.1zM1281.4 542.5l-2.5 4.7l5.7 0.4l2.4-4.3zM1287 543.3l-2.4 4.3l4.3 2.3l1.7-3.1zM1283.7 568.5l-2.5 4.6l5.7 0.5l2.3-4.3zM1289.2 569.3l-2.3 4.3l4.2 2.3l1.7-3.2zM1285.9 594.4l-2.5 4.7l5.7 0.5l2.4-4.4zM1291.5 595.2l-2.4 4.4l4.2 2.2l1.7-3.1zM1288.2 620.3l-2.6 4.7l5.8 0.5l2.3-4.4zM1293.7 621.1l-2.3 4.4l4.2 2.2l1.6-3.2zM1290.4 646.2l-2.5 4.7l5.7 0.4l2.3-4.4zM1295.9 646.9l-2.3 4.4l4.2 2.3l1.7-3.2z"/><path class="f" fill="#bfcab2" d="M1245 154l-0.3 13.5l5.8-0.4l0.3-12.6zM1250.8 154.5l-0.3 12.6l4.3-1.2l0.2-9.1zM1247.3 180.5l-0.3 13.4l5.7-0.4l0.3-12.6zM1253 180.9l-0.3 12.6l4.4-1.2l0.2-9.1zM1249.6 206.9l-0.4 13.4l5.8-0.4l0.3-12.6zM1255.3 207.3l-0.3 12.6l4.3-1.2l0.3-9.1zM1251.8 233.2l-0.3 13.5l5.8-0.4l0.3-12.6zM1257.6 233.7l-0.3 12.6l4.3-1.3l0.2-9zM1254.1 259.5l-0.3 13.5l5.8-0.4l0.3-12.6zM1259.9 260l-0.3 12.6l4.3-1.2l0.2-9.1zM1256.4 285.8l-0.3 13.5l5.7-0.4l0.3-12.6zM1262.1 286.3l-0.3 12.6l4.4-1.2l0.2-9.1zM1258.6 312.1l-0.3 13.4l5.8-0.3l0.3-12.6zM1264.4 312.6l-0.3 12.6l4.3-1.3l0.2-9zM1260.9 338.3l-0.3 13.5l5.8-0.4l0.2-12.6zM1266.6 338.8l-0.2 12.6l4.3-1.2l0.2-9.1zM1263.2 364.6l-0.3 13.4l5.7-0.4l0.3-12.6zM1268.9 365l-0.3 12.6l4.3-1.2l0.2-9.1zM1265.4 390.7l-0.3 13.5l5.8-0.4l0.3-12.6zM1271.2 391.2l-0.3 12.6l4.3-1.3l0.2-9zM1267.7 416.9l-0.3 13.4l5.7-0.4l0.3-12.5zM1273.4 417.4l-0.3 12.5l4.3-1.2l0.2-9.1zM1269.9 443l-0.3 13.4l5.8-0.4l0.3-12.5zM1275.7 443.5l-0.3 12.5l4.3-1.2l0.2-9.1zM1272.2 469.1l-0.3 13.4l5.7-0.4l0.3-12.5zM1277.9 469.6l-0.3 12.5l4.3-1.2l0.2-9.1zM1274.4 495.1l-0.3 13.5l5.8-0.4l0.3-12.6zM1280.2 495.6l-0.3 12.6l4.3-1.3l0.2-9zM1276.7 521.2l-0.3 13.4l5.7-0.4l0.3-12.6zM1282.4 521.6l-0.3 12.6l4.3-1.3l0.2-9zM1278.9 547.2l-0.3 13.4l5.8-0.4l0.2-12.6zM1284.6 547.6l-0.2 12.6l4.3-1.3l0.2-9zM1281.2 573.1l-0.3 13.4l5.7-0.3l0.3-12.6zM1286.9 573.6l-0.3 12.6l4.3-1.3l0.2-9zM1283.4 599.1l-0.3 13.4l5.7-0.4l0.3-12.5zM1289.1 599.6l-0.3 12.5l4.3-1.3l0.2-9zM1285.6 625l-0.3 13.4l5.8-0.4l0.3-12.5zM1291.4 625.5l-0.3 12.5l4.3-1.3l0.2-9zM1287.9 650.9l-0.3 13.4l5.7-0.4l0.3-12.6zM1293.6 651.3l-0.3 12.6l4.3-1.3l0.2-9z"/><path class="g" fill="#93aa71" d="M1254.8 165.9l1.5 6.1l1.7-2.9l0.3-9.1l-1.6-6.1l-1.7 2.9zM1257.1 192.3l1.5 6.1l1.7-2.9l0.2-9.1l-1.5-6.1l-1.7 2.9zM1259.3 218.7l1.6 6.1l1.7-3l0.2-9l-1.5-6.1l-1.7 2.9zM1261.6 245l1.5 6.1l1.8-3l0.2-9l-1.6-6.1l-1.7 3zM1263.9 271.4l1.5 6l1.7-3l0.2-9l-1.5-6.1l-1.7 3zM1266.2 297.7l1.5 6l1.7-3l0.2-9.1l-1.5-6l-1.7 3zM1268.4 323.9l1.5 6.1l1.7-3.1l0.2-9l-1.5-6l-1.7 3zM1270.7 350.2l1.5 6l1.7-3.1l0.2-9l-1.5-6l-1.7 3zM1272.9 376.4l1.5 6l1.7-3.1l0.2-9l-1.5-6l-1.7 3zM1275.2 402.5l1.5 6l1.7-3l0.2-9.1l-1.5-6l-1.7 3.1zM1277.4 428.7l1.5 5.9l1.7-3l0.2-9.1l-1.5-5.9l-1.7 3zM1279.7 454.8l1.5 5.9l1.7-3l0.2-9.1l-1.5-5.9l-1.7 3zM1281.9 480.9l1.5 5.9l1.7-3.1l0.2-9l-1.5-6l-1.7 3.1zM1284.2 506.9l1.5 5.9l1.7-3.1l0.2-9l-1.5-5.9l-1.7 3.1zM1286.4 532.9l1.5 5.9l1.7-3.1l0.2-9l-1.5-5.9l-1.7 3.1zM1288.7 558.9l1.4 5.9l1.7-3.1l0.2-9l-1.4-5.9l-1.7 3.1zM1290.9 584.9l1.5 5.9l1.7-3.2l0.2-9l-1.5-5.9l-1.7 3.2zM1293.1 610.8l1.5 5.9l1.7-3.2l0.2-9l-1.5-5.8l-1.7 3.1zM1295.4 636.7l1.4 5.9l1.7-3.2l0.2-9l-1.5-5.9l-1.6 3.2zM1297.6 662.6l1.5 5.8l1.6-3.1l0.3-9.1l-1.5-5.8l-1.7 3.2z"/>
<path class="h" d="M681.6 216.8l0.5-6.3l2.8-4.1l5.4-1.8l3.7 3.7l3 13.1l-0.8 9.4l-5.7 0.2l-4.3-2.8l-2.6-2.6zM684.2 243.2l0.6-6.3l2.7-4.1l5.4-1.8l3.7 3.7l3 13.2l-0.8 9.3l-5.7 0.2l-4.3-2.8l-2.6-2.6zM686.8 269.5l0.6-6.3l2.7-4l5.4-1.9l3.7 3.8l3 13.1l-0.8 9.4l-5.7 0.2l-4.3-2.9l-2.6-2.5zM689.4 295.9l0.6-6.3l2.7-4.1l5.3-1.8l3.8 3.8l3 13.1l-0.8 9.3l-5.7 0.2l-4.3-2.8l-2.6-2.6zM692 322.1l0.6-6.3l2.7-4.1l5.3-1.8l3.8 3.8l3 13.1l-0.8 9.3l-5.7 0.2l-4.3-2.8l-2.6-2.6zM694.6 348.4l0.5-6.2l2.8-4.1l5.3-1.9l3.8 3.9l2.9 13.1l-0.7 9.3l-5.7 0.1l-4.4-2.8l-2.5-2.6zM697.2 374.6l0.5-6.2l2.8-4.1l5.3-1.8l3.8 3.8l2.9 13.2l-0.7 9.2l-5.7 0.2l-4.4-2.8l-2.5-2.6zM699.8 400.8l0.5-6.2l2.8-4.1l5.3-1.8l3.7 3.9l3 13.1l-0.8 9.2l-5.6 0.2l-4.4-2.8l-2.5-2.6zM702.4 427l0.5-6.2l2.8-4.1l5.3-1.8l3.7 3.9l3 13.1l-0.8 9.2l-5.7 0.2l-4.3-2.8l-2.5-2.7zM705 453.2l0.5-6.2l2.8-4.1l5.3-1.9l3.7 3.9l3 13.2l-0.8 9.1l-5.7 0.2l-4.3-2.8l-2.5-2.6zM707.6 479.3l0.5-6.2l2.7-4.1l5.3-1.8l3.8 3.9l2.9 13.1l-0.7 9.2l-5.7 0.1l-4.3-2.7l-2.5-2.7zM710.1 505.4l0.5-6.2l2.8-4.1l5.3-1.9l3.7 4l3 13.1l-0.8 9.1l-5.6 0.2l-4.4-2.8l-2.5-2.6zM712.7 531.4l0.5-6.2l2.8-4l5.3-1.9l3.7 4l3 13.1l-0.8 9.1l-5.7 0.2l-4.3-2.8l-2.5-2.7zM715.3 557.4l0.5-6.1l2.8-4.1l5.2-1.9l3.8 4l2.9 13.1l-0.7 9.1l-5.7 0.2l-4.3-2.8l-2.5-2.7zM717.8 583.4l0.6-6.1l2.7-4.1l5.3-1.8l3.7 4l3 13l-0.8 9.1l-5.6 0.2l-4.4-2.8l-2.5-2.7zM720.4 609.4l0.5-6.1l2.8-4.1l5.3-1.9l3.7 4.1l2.9 13l-0.7 9.1l-5.7 0.2l-4.3-2.8l-2.5-2.7zM723 635.3l0.5-6.1l2.7-4.1l5.3-1.8l3.7 4l3 13.1l-0.8 9l-5.6 0.2l-4.3-2.8l-2.5-2.7zM725.5 661.2l0.5-6.1l2.8-4.1l5.3-1.8l3.7 4l3 13.1l-0.8 9l-5.7 0.2l-4.3-2.7l-2.5-2.8zM728.1 687.1l0.5-6.1l2.8-4.1l5.2-1.8l3.8 4l2.9 13.1l-0.8 9l-5.6 0.2l-4.3-2.8l-2.5-2.7zM730.6 712.9l0.6-6l2.7-4.1l5.3-1.9l3.7 4.1l3 13.1l-0.8 9l-5.7 0.2l-4.3-2.8l-2.5-2.8z"/><path class="f" fill="#687038" d="M696.2 230.8l0.8-9.3l-5.8 0.7l-0.7 8.8zM690.5 231l0.7-8.8l-4.5-0.3l-0.6 6.3zM698.8 257.2l0.8-9.3l-5.8 0.7l-0.7 8.8zM693.1 257.4l0.7-8.8l-4.5-0.3l-0.5 6.3zM701.4 283.6l0.8-9.4l-5.8 0.8l-0.7 8.8zM695.7 283.8l0.7-8.8l-4.5-0.4l-0.5 6.3zM704 309.9l0.8-9.3l-5.8 0.7l-0.7 8.8zM698.3 310.1l0.7-8.8l-4.5-0.3l-0.5 6.3zM706.6 336.2l0.7-9.3l-5.7 0.8l-0.7 8.7zM700.9 336.4l0.7-8.7l-4.5-0.4l-0.6 6.3zM709.2 362.5l0.7-9.3l-5.7 0.8l-0.7 8.6zM703.5 362.6l0.7-8.6l-4.5-0.4l-0.6 6.2zM711.8 388.7l0.7-9.2l-5.7 0.7l-0.7 8.7zM706.1 388.9l0.7-8.7l-4.6-0.3l-0.5 6.2zM714.3 414.9l0.8-9.2l-5.7 0.7l-0.7 8.7zM708.7 415.1l0.7-8.7l-4.6-0.3l-0.5 6.2zM716.9 441.1l0.8-9.2l-5.7 0.7l-0.8 8.7zM711.2 441.3l0.8-8.7l-4.6-0.3l-0.5 6.2zM719.5 467.2l0.8-9.1l-5.8 0.7l-0.7 8.6zM713.8 467.4l0.7-8.6l-4.5-0.4l-0.5 6.2zM722.1 493.4l0.7-9.2l-5.7 0.8l-0.7 8.5zM716.4 493.5l0.7-8.5l-4.5-0.4l-0.5 6.1zM724.6 519.4l0.8-9.1l-5.7 0.8l-0.7 8.5zM719 519.6l0.7-8.5l-4.5-0.4l-0.6 6.1zM727.2 545.5l0.8-9.1l-5.7 0.7l-0.8 8.6zM721.5 545.7l0.8-8.6l-4.6-0.3l-0.5 6.1zM729.8 571.5l0.7-9.1l-5.7 0.8l-0.7 8.5zM724.1 571.7l0.7-8.5l-4.5-0.4l-0.5 6.1zM732.3 597.5l0.8-9l-5.7 0.7l-0.7 8.5zM726.7 597.7l0.7-8.5l-4.5-0.4l-0.6 6.1zM734.9 623.5l0.8-9.1l-5.7 0.8l-0.8 8.5zM729.2 623.7l0.8-8.5l-4.6-0.4l-0.5 6.1zM737.4 649.4l0.8-9l-5.7 0.8l-0.7 8.4zM731.8 649.6l0.7-8.4l-4.5-0.4l-0.5 6zM740 675.3l0.8-9l-5.7 0.8l-0.8 8.4zM734.3 675.5l0.8-8.4l-4.6-0.4l-0.5 6.1zM742.5 701.2l0.8-9l-5.7 0.8l-0.7 8.4zM736.9 701.4l0.7-8.4l-4.5-0.4l-0.5 6zM745.1 727.1l0.8-9l-5.7 0.8l-0.8 8.4zM739.4 727.3l0.8-8.4l-4.6-0.4l-0.5 6z"/><path class="f" fill="#bfcab2" d="M697 221.5l-3-13.2l-5.6 1.6l2.8 12.3zM691.2 222.2l-2.8-12.3l-3.8 3.1l2.1 8.9zM699.6 247.9l-3-13.2l-5.6 1.6l2.8 12.3zM693.8 248.6l-2.8-12.3l-3.7 3.1l2 8.9zM702.2 274.2l-3-13.1l-5.6 1.6l2.8 12.3zM696.4 275l-2.8-12.3l-3.7 3.1l2 8.8zM704.8 300.6l-3-13.1l-5.6 1.5l2.8 12.3zM699 301.3l-2.8-12.3l-3.7 3.1l2 8.9zM707.3 326.9l-2.9-13.1l-5.6 1.6l2.8 12.3zM701.6 327.7l-2.8-12.3l-3.7 3.1l2 8.8zM709.9 353.2l-2.9-13.1l-5.6 1.6l2.8 12.3zM704.2 354l-2.8-12.3l-3.7 3.1l2 8.8zM712.5 379.5l-2.9-13.2l-5.6 1.6l2.8 12.3zM706.8 380.2l-2.8-12.3l-3.8 3.1l2 8.9zM715.1 405.7l-3-13.1l-5.5 1.6l2.8 12.2zM709.4 406.4l-2.8-12.2l-3.8 3l2 8.9zM717.7 431.9l-3-13.1l-5.5 1.6l2.8 12.2zM712 432.6l-2.8-12.2l-3.8 3l2 8.9zM720.3 458.1l-3-13.2l-5.5 1.6l2.7 12.3zM714.5 458.8l-2.7-12.3l-3.8 3.1l2 8.8zM722.8 484.2l-2.9-13.1l-5.6 1.6l2.8 12.3zM717.1 485l-2.8-12.3l-3.7 3l2 8.9zM725.4 510.3l-3-13.1l-5.5 1.6l2.8 12.3zM719.7 511.1l-2.8-12.3l-3.7 3.1l2 8.8zM728 536.4l-3-13.1l-5.5 1.6l2.8 12.2zM722.3 537.1l-2.8-12.2l-3.8 3l2 8.9zM730.5 562.4l-2.9-13.1l-5.5 1.6l2.7 12.3zM724.8 563.2l-2.7-12.3l-3.8 3.1l2 8.8zM733.1 588.5l-3-13.1l-5.5 1.5l2.8 12.3zM727.4 589.2l-2.8-12.3l-3.7 3.1l2 8.8zM735.7 614.4l-3-13.1l-5.5 1.6l2.8 12.3zM730 615.2l-2.8-12.3l-3.8 3.1l2 8.8zM738.2 640.4l-2.9-13.1l-5.6 1.6l2.8 12.3zM732.5 641.2l-2.8-12.3l-3.7 3l2 8.9zM740.8 666.3l-3-13.1l-5.5 1.6l2.8 12.3zM735.1 667.1l-2.8-12.3l-3.7 3.1l1.9 8.8zM743.3 692.2l-2.9-13.1l-5.5 1.6l2.7 12.3zM737.6 693l-2.7-12.3l-3.8 3.1l2 8.8zM745.9 718.1l-3-13.1l-5.5 1.6l2.8 12.3zM740.2 718.9l-2.8-12.3l-3.7 3l1.9 8.9z"/><path class="f" fill="#edd2c2" d="M694 208.3l-3.7-3.7l-5.4 1.8l3.5 3.5zM688.4 209.9l-3.5-3.5l-2.8 4.1l2.5 2.5zM696.6 234.7l-3.7-3.7l-5.4 1.8l3.5 3.5zM691 236.3l-3.5-3.5l-2.8 4.1l2.6 2.5zM699.2 261.1l-3.7-3.8l-5.4 1.8l3.5 3.6zM693.6 262.7l-3.5-3.6l-2.8 4.1l2.6 2.6zM701.8 287.5l-3.7-3.8l-5.4 1.8l3.5 3.5zM696.2 289l-3.5-3.5l-2.7 4.1l2.5 2.5zM704.4 313.8l-3.8-3.8l-5.3 1.8l3.5 3.6zM698.8 315.4l-3.5-3.6l-2.8 4.1l2.6 2.6zM707 340.1l-3.8-3.9l-5.3 1.9l3.5 3.6zM701.4 341.7l-3.5-3.6l-2.8 4.1l2.6 2.6zM709.6 366.3l-3.8-3.8l-5.3 1.8l3.5 3.6zM704 367.9l-3.5-3.6l-2.8 4.1l2.5 2.6zM712.1 392.6l-3.7-3.9l-5.3 1.8l3.5 3.7zM706.6 394.2l-3.5-3.7l-2.8 4.1l2.5 2.6zM714.7 418.8l-3.7-3.9l-5.3 1.8l3.5 3.7zM709.2 420.4l-3.5-3.7l-2.8 4.1l2.5 2.6zM717.3 444.9l-3.7-3.9l-5.3 1.9l3.5 3.6zM711.8 446.5l-3.5-3.6l-2.8 4.1l2.5 2.6zM719.9 471.1l-3.8-3.9l-5.3 1.8l3.5 3.7zM714.3 472.7l-3.5-3.7l-2.7 4.1l2.5 2.6zM722.4 497.2l-3.7-4l-5.3 1.9l3.5 3.7zM716.9 498.8l-3.5-3.7l-2.8 4.1l2.6 2.7zM725 523.3l-3.7-4l-5.3 1.8l3.5 3.8zM719.5 524.9l-3.5-3.8l-2.8 4.2l2.5 2.6zM727.6 549.3l-3.8-4l-5.2 1.9l3.5 3.7zM722.1 550.9l-3.5-3.7l-2.8 4.1l2.5 2.7zM730.1 575.4l-3.7-4.1l-5.3 1.9l3.5 3.7zM724.6 576.9l-3.5-3.7l-2.7 4.1l2.5 2.7zM732.7 601.3l-3.7-4l-5.3 1.9l3.5 3.7zM727.2 602.9l-3.5-3.7l-2.8 4.1l2.5 2.7zM735.3 627.3l-3.8-4l-5.2 1.8l3.4 3.8zM729.7 628.9l-3.4-3.8l-2.8 4.1l2.5 2.7zM737.8 653.2l-3.7-4l-5.3 1.8l3.5 3.8zM732.3 654.8l-3.5-3.8l-2.8 4.1l2.6 2.8zM740.4 679.1l-3.8-4l-5.2 1.8l3.5 3.8zM734.9 680.7l-3.5-3.8l-2.8 4.1l2.5 2.8zM742.9 705l-3.7-4.1l-5.3 1.9l3.5 3.8zM737.4 706.6l-3.5-3.8l-2.7 4.1l2.5 2.7z"/><path class="g" fill="#8faa72" d="M681.6 216.8l2 8.9l2.5 2.5l0.6-6.3l-2.1-8.9l-2.5-2.5zM684.2 243.2l2 8.8l2.6 2.6l0.5-6.3l-2-8.9l-2.6-2.5zM686.8 269.5l2 8.9l2.6 2.5l0.5-6.3l-2-8.8l-2.6-2.6zM689.4 295.9l2 8.8l2.6 2.6l0.5-6.3l-2-8.9l-2.5-2.5zM692 322.2l2 8.8l2.5 2.6l0.6-6.3l-2-8.8l-2.6-2.6zM694.6 348.4l2 8.9l2.5 2.5l0.6-6.2l-2-8.8l-2.6-2.6zM697.2 374.6l2 8.9l2.5 2.6l0.5-6.2l-2-8.9l-2.5-2.6zM699.8 400.8l2 8.9l2.5 2.6l0.5-6.2l-2-8.9l-2.5-2.6zM702.4 427l2 8.8l2.5 2.7l0.5-6.2l-2-8.9l-2.5-2.6zM705 453.2l2 8.8l2.5 2.6l0.5-6.2l-2-8.8l-2.5-2.6zM707.6 479.3l2 8.8l2.5 2.6l0.5-6.1l-2-8.9l-2.5-2.6zM710.1 505.3l2 8.9l2.5 2.6l0.6-6.1l-2-8.8l-2.6-2.7zM712.7 531.4l2 8.8l2.5 2.7l0.5-6.1l-2-8.9l-2.5-2.6zM715.3 557.4l2 8.8l2.5 2.7l0.5-6.1l-2-8.8l-2.5-2.7zM717.8 583.4l2 8.8l2.5 2.7l0.6-6.1l-2-8.8l-2.5-2.7zM720.4 609.4l2 8.8l2.5 2.7l0.5-6.1l-2-8.8l-2.5-2.7zM723 635.3l2 8.8l2.5 2.7l0.5-6l-2-8.9l-2.5-2.7zM725.5 661.2l2 8.8l2.5 2.8l0.5-6.1l-1.9-8.8l-2.6-2.8zM728.1 687.1l2 8.8l2.5 2.7l0.5-6l-2-8.8l-2.5-2.8zM730.6 712.9l2 8.8l2.5 2.8l0.5-6l-1.9-8.9l-2.5-2.7z"/>
<path class="h" d="M1234 179.1l1.1-13.5l4.3-4.4l5.4 1l3.2 3.6l2.1 6.2l-0.8 9l-2.8 3l-3.9 3.5l-5.5 0.7zM1236.3 205.6l1.1-13.5l4.3-4.4l5.3 1l3.3 3.6l2.1 6.1l-0.8 9.1l-2.8 2.9l-3.9 3.5l-5.5 0.7zM1238.6 232l1.1-13.5l4.3-4.4l5.3 1l3.3 3.6l2 6.1l-0.7 9.1l-2.9 3l-3.8 3.4l-5.5 0.7zM1240.9 258.4l1.1-13.5l4.2-4.4l5.4 1l3.2 3.6l2.1 6.1l-0.7 9.1l-2.9 3l-3.8 3.4l-5.5 0.7zM1243.1 284.8l1.2-13.5l4.2-4.4l5.4 0.9l3.2 3.7l2.1 6.1l-0.8 9l-2.8 3l-3.9 3.5l-5.5 0.7zM1245.4 311.1l1.2-13.4l4.2-4.5l5.4 1l3.2 3.6l2.1 6.1l-0.8 9l-2.8 3.1l-3.9 3.4l-5.5 0.7zM1247.7 337.4l1.1-13.4l4.3-4.5l5.3 1l3.3 3.6l2 6.1l-0.7 9l-2.9 3l-3.8 3.5l-5.5 0.7zM1250 363.7l1.1-13.4l4.2-4.5l5.4 1l3.2 3.6l2.1 6l-0.8 9.1l-2.8 3l-3.8 3.5l-5.5 0.7zM1252.2 390l1.2-13.5l4.2-4.5l5.4 1l3.2 3.6l2 6l-0.7 9.1l-2.8 3.1l-3.9 3.4l-5.5 0.7zM1254.5 416.2l1.2-13.4l4.2-4.6l5.3 1l3.2 3.6l2.1 6l-0.7 9.1l-2.9 3.1l-3.8 3.4l-5.5 0.7zM1256.8 442.4l1.1-13.4l4.2-4.6l5.4 1l3.2 3.6l2.1 6l-0.8 9.1l-2.8 3l-3.8 3.5l-5.5 0.7zM1259.1 468.6l1.1-13.5l4.2-4.6l5.3 1l3.3 3.7l2 6l-0.7 9l-2.9 3.1l-3.8 3.4l-5.5 0.7zM1261.3 494.7l1.2-13.5l4.1-4.5l5.4 1l3.2 3.6l2.1 5.9l-0.8 9.1l-2.8 3.1l-3.8 3.4l-5.5 0.7zM1263.6 520.8l1.1-13.4l4.2-4.7l5.3 1.1l3.3 3.6l2 5.9l-0.7 9.1l-2.8 3.1l-3.9 3.4l-5.5 0.7zM1265.8 546.9l1.2-13.5l4.2-4.6l5.3 1l3.2 3.7l2.1 5.9l-0.8 9l-2.8 3.2l-3.8 3.4l-5.5 0.6zM1268.1 572.9l1.1-13.4l4.2-4.7l5.3 1l3.3 3.7l2 5.9l-0.8 9l-2.8 3.2l-3.8 3.4l-5.4 0.7zM1270.3 598.9l1.1-13.4l4.1-4.7l5.4 1l3.2 3.7l2 5.9l-0.7 9l-2.8 3.2l-3.8 3.4l-5.5 0.7zM1272.6 624.9l1.1-13.4l4.2-4.7l5.3 1l3.2 3.7l2.1 5.8l-0.8 9.1l-2.8 3.1l-3.8 3.5l-5.5 0.6zM1274.8 650.9l1.2-13.5l4.1-4.7l5.4 1.1l3.2 3.6l2 5.9l-0.7 9l-2.8 3.2l-3.8 3.4l-5.5 0.7zM1277.1 676.8l1.1-13.4l4.2-4.8l5.3 1.1l3.2 3.6l2.1 5.9l-0.8 9l-2.8 3.2l-3.8 3.4l-5.5 0.7z"/><path class="f" fill="#687038" d="M1234 179.1l3.1 9.1l5.5-0.7l-2.9-8.6zM1239.7 178.9l2.9 8.6l3.9-3.5l-2.1-6.1zM1236.3 205.6l3.1 9l5.5-0.7l-2.9-8.5zM1242 205.4l2.9 8.5l3.8-3.5l-2-6.1zM1238.6 232l3.1 9.1l5.5-0.8l-2.9-8.4zM1244.3 231.9l2.9 8.4l3.8-3.4l-2.1-6.1zM1240.9 258.4l3 9l5.6-0.7l-2.9-8.4zM1246.6 258.3l2.9 8.4l3.8-3.4l-2.1-6.1zM1243.1 284.8l3.1 9l5.5-0.7l-2.8-8.5zM1248.9 284.6l2.8 8.5l3.9-3.5l-2.1-6zM1245.4 311.1l3.1 9l5.5-0.7l-2.9-8.4zM1251.1 311l2.9 8.4l3.9-3.5l-2.1-6zM1247.7 337.4l3.1 9l5.5-0.7l-2.9-8.4zM1253.4 337.3l2.9 8.4l3.8-3.5l-2-6zM1250 363.7l3.1 9l5.5-0.7l-2.9-8.4zM1255.7 363.6l2.9 8.4l3.8-3.5l-2.1-6zM1252.3 390l3 8.9l5.5-0.7l-2.8-8.4zM1258 389.8l2.8 8.4l3.9-3.4l-2.1-6.1zM1254.5 416.2l3.1 8.9l5.5-0.7l-2.9-8.3zM1260.2 416.1l2.9 8.3l3.8-3.4l-2-6zM1256.8 442.4l3.1 8.9l5.5-0.7l-2.9-8.3zM1262.5 442.3l2.9 8.3l3.8-3.5l-2.1-5.9zM1259.1 468.6l3 8.8l5.5-0.7l-2.8-8.3zM1264.8 468.4l2.8 8.3l3.8-3.4l-2-6zM1261.3 494.7l3.1 8.8l5.5-0.7l-2.9-8.2zM1267 494.6l2.9 8.2l3.8-3.4l-2.1-5.9zM1263.6 520.8l3 8.8l5.5-0.7l-2.8-8.2zM1269.3 520.7l2.8 8.2l3.8-3.4l-2-5.9zM1265.8 546.9l3.1 8.8l5.5-0.7l-2.9-8.3zM1271.5 546.7l2.9 8.3l3.8-3.5l-2.1-5.9zM1268.1 572.9l3 8.8l5.5-0.7l-2.8-8.2zM1273.8 572.8l2.8 8.2l3.8-3.4l-2-5.9zM1270.3 598.9l3.1 8.8l5.5-0.7l-2.9-8.2zM1276 598.8l2.9 8.2l3.8-3.4l-2.1-5.9zM1272.6 624.9l3 8.7l5.5-0.6l-2.8-8.2zM1278.3 624.8l2.8 8.2l3.8-3.5l-2-5.8zM1274.8 650.9l3.1 8.7l5.5-0.7l-2.9-8.2zM1280.5 650.7l2.9 8.2l3.8-3.4l-2.1-5.9zM1277.1 676.8l3 8.7l5.5-0.7l-2.8-8.1zM1282.8 676.7l2.8 8.1l3.8-3.4l-2-5.9z"/><path class="f" fill="#edd2c2" d="M1239.4 161.2l-4.3 4.4l5.7 0.7l4-4.1zM1244.8 162.2l-4 4.1l4.3 2.5l2.9-3zM1241.7 187.7l-4.3 4.4l5.7 0.7l3.9-4.1zM1247 188.7l-3.9 4.1l4.3 2.5l2.9-3zM1243.9 214.1l-4.2 4.4l5.7 0.7l3.9-4.1zM1249.3 215.1l-3.9 4.1l4.3 2.5l2.9-3zM1246.2 240.5l-4.2 4.4l5.6 0.7l4-4.1zM1251.6 241.5l-4 4.1l4.4 2.5l2.8-3zM1248.5 266.9l-4.2 4.4l5.6 0.7l4-4.2zM1253.9 267.8l-4 4.2l4.4 2.5l2.8-3zM1250.8 293.2l-4.2 4.5l5.6 0.7l4-4.2zM1256.2 294.2l-4 4.2l4.3 2.4l2.9-3zM1253.1 319.5l-4.3 4.5l5.7 0.7l3.9-4.2zM1258.4 320.5l-3.9 4.2l4.3 2.4l2.9-3zM1255.3 345.8l-4.2 4.5l5.6 0.7l4-4.2zM1260.7 346.8l-4 4.2l4.4 2.4l2.8-3zM1257.6 372l-4.2 4.5l5.6 0.7l4-4.2zM1263 373l-4 4.2l4.4 2.5l2.8-3.1zM1259.9 398.2l-4.2 4.5l5.6 0.8l3.9-4.3zM1265.2 399.2l-3.9 4.3l4.3 2.4l2.8-3.1zM1262.1 424.4l-4.2 4.5l5.7 0.8l3.9-4.3zM1267.5 425.4l-3.9 4.3l4.3 2.4l2.8-3.1zM1264.4 450.5l-4.2 4.6l5.6 0.7l3.9-4.3zM1269.7 451.5l-3.9 4.3l4.3 2.5l2.9-3.1zM1266.6 476.7l-4.1 4.5l5.6 0.8l3.9-4.3zM1272 477.7l-3.9 4.3l4.3 2.4l2.8-3.1zM1268.9 502.7l-4.2 4.7l5.6 0.7l3.9-4.3zM1274.2 503.8l-3.9 4.3l4.4 2.4l2.8-3.1zM1271.2 528.8l-4.2 4.6l5.6 0.8l3.9-4.4zM1276.5 529.8l-3.9 4.4l4.3 2.4l2.8-3.1zM1273.4 554.8l-4.2 4.7l5.6 0.7l3.9-4.4zM1278.7 555.8l-3.9 4.4l4.4 2.4l2.8-3.1zM1275.7 580.8l-4.2 4.7l5.6 0.7l3.9-4.3zM1281 581.9l-3.9 4.3l4.3 2.4l2.8-3.1zM1277.9 606.8l-4.2 4.7l5.6 0.7l3.9-4.4zM1283.2 607.8l-3.9 4.4l4.3 2.4l2.8-3.1zM1280.1 632.7l-4.1 4.7l5.6 0.8l3.9-4.4zM1285.5 633.8l-3.9 4.4l4.3 2.4l2.8-3.2zM1282.4 658.6l-4.2 4.8l5.6 0.7l3.9-4.4zM1287.7 659.7l-3.9 4.4l4.3 2.4l2.8-3.2z"/><path class="f" fill="#bfcab2" d="M1235.1 165.6l-1.1 13.5l5.7-0.2l1.1-12.6zM1240.8 166.3l-1.1 12.6l4.7-1l0.7-9.1zM1237.4 192.1l-1.1 13.5l5.7-0.2l1.1-12.6zM1243.1 192.8l-1.1 12.6l4.7-1.1l0.7-9zM1239.7 218.5l-1.1 13.5l5.7-0.1l1.1-12.7zM1245.4 219.2l-1.1 12.7l4.6-1.1l0.8-9.1zM1242 244.9l-1.1 13.5l5.7-0.1l1-12.7zM1247.6 245.6l-1 12.7l4.6-1.1l0.8-9.1zM1244.3 271.3l-1.2 13.5l5.8-0.2l1-12.6zM1249.9 272l-1 12.6l4.6-1l0.8-9.1zM1246.6 297.7l-1.2 13.4l5.7-0.1l1.1-12.6zM1252.2 298.4l-1.1 12.6l4.7-1.1l0.7-9.1zM1248.8 324l-1.1 13.4l5.7-0.1l1.1-12.6zM1254.5 324.7l-1.1 12.6l4.7-1.1l0.7-9.1zM1251.1 350.3l-1.1 13.4l5.7-0.1l1-12.6zM1256.7 351l-1 12.6l4.6-1.1l0.8-9.1zM1253.4 376.5l-1.1 13.5l5.7-0.2l1-12.6zM1259 377.2l-1 12.6l4.6-1.1l0.8-9zM1255.7 402.7l-1.2 13.5l5.7-0.1l1.1-12.6zM1261.3 403.5l-1.1 12.6l4.7-1.1l0.7-9.1zM1257.9 428.9l-1.1 13.5l5.7-0.1l1.1-12.6zM1263.6 429.7l-1.1 12.6l4.6-1.1l0.8-9.1zM1260.2 455.1l-1.1 13.5l5.7-0.2l1-12.6zM1265.8 455.8l-1 12.6l4.6-1.1l0.7-9zM1262.5 481.2l-1.2 13.5l5.7-0.1l1.1-12.6zM1268.1 482l-1.1 12.6l4.6-1.1l0.8-9.1zM1264.7 507.4l-1.1 13.4l5.7-0.1l1-12.6zM1270.3 508.1l-1 12.6l4.6-1.1l0.8-9.1zM1267 533.4l-1.2 13.5l5.7-0.2l1.1-12.5zM1272.6 534.2l-1.1 12.5l4.6-1.1l0.8-9zM1269.2 559.5l-1.1 13.4l5.7-0.1l1-12.6zM1274.8 560.2l-1 12.6l4.6-1.1l0.8-9.1zM1271.5 585.5l-1.2 13.4l5.7-0.1l1.1-12.6zM1277.1 586.2l-1.1 12.6l4.6-1.1l0.8-9.1zM1273.7 611.5l-1.1 13.4l5.7-0.1l1-12.6zM1279.3 612.2l-1 12.6l4.6-1.1l0.7-9.1zM1276 637.4l-1.2 13.5l5.7-0.2l1.1-12.5zM1281.6 638.2l-1.1 12.5l4.6-1.1l0.8-9zM1278.2 663.4l-1.1 13.4l5.7-0.1l1-12.6zM1283.8 664.1l-1 12.6l4.6-1.2l0.7-9z"/><path class="g" fill="#86a973" d="M1244.4 177.9l2.1 6.1l2.8-3l0.8-9l-2.1-6.2l-2.9 3zM1246.7 204.3l2 6.1l2.9-2.9l0.8-9.1l-2.1-6.1l-2.9 3zM1248.9 230.8l2.1 6.1l2.9-3l0.7-9.1l-2-6.1l-2.9 3zM1251.2 257.2l2.1 6.1l2.8-3l0.8-9.1l-2.1-6.1l-2.8 3zM1253.5 283.6l2.1 6l2.8-3l0.8-9.1l-2.1-6l-2.8 3zM1255.8 309.9l2.1 6l2.8-3l0.8-9l-2.1-6.1l-2.9 3zM1258.1 336.2l2 6l2.9-3l0.7-9l-2-6.1l-2.9 3zM1260.3 362.5l2.1 6l2.8-3l0.8-9.1l-2.1-6l-2.8 3zM1262.6 388.7l2.1 6.1l2.8-3.1l0.8-9.1l-2.1-6l-2.8 3.1zM1264.9 415l2 6l2.8-3.1l0.8-9.1l-2.1-6l-2.8 3.1zM1267.1 441.2l2.1 5.9l2.8-3l0.8-9.1l-2.1-6l-2.8 3.1zM1269.4 467.3l2 6l2.9-3.1l0.7-9.1l-2-5.9l-2.9 3.1zM1271.6 493.5l2.1 5.9l2.8-3.1l0.8-9l-2.1-6l-2.8 3.1zM1273.9 519.6l2 5.9l2.9-3.1l0.7-9.1l-2-5.9l-2.8 3.1zM1276.1 545.6l2.1 5.9l2.8-3.1l0.8-9l-2.1-5.9l-2.8 3.1zM1278.4 571.7l2 5.9l2.9-3.2l0.7-9l-2-5.9l-2.8 3.1zM1280.6 597.7l2.1 5.9l2.8-3.2l0.8-9l-2.1-5.9l-2.8 3.1zM1282.9 623.7l2 5.8l2.8-3.1l0.8-9.1l-2.1-5.8l-2.8 3.1zM1285.1 649.6l2.1 5.9l2.8-3.2l0.7-9l-2-5.9l-2.8 3.2zM1287.4 675.5l2 5.9l2.8-3.2l0.8-9l-2.1-5.9l-2.8 3.2z"/>
<path class="h" d="M693 226.8l1-6.4l2.4-4.2l5.1-2l5.3 3.4l3.8 13.1l-1.5 9.5l-5.5 0.4l-4.5-2.7l-3.6-2.3zM695.6 253.3l1-6.4l2.4-4.2l5.1-2l5.3 3.4l3.8 13l-1.5 9.6l-5.5 0.3l-4.5-2.6l-3.6-2.4zM698.2 279.7l1-6.4l2.4-4.2l5.1-2l5.3 3.5l3.8 13l-1.5 9.5l-5.5 0.3l-4.5-2.6l-3.6-2.4zM700.8 306.1l1-6.4l2.4-4.2l5.1-2l5.3 3.5l3.8 13l-1.6 9.4l-5.5 0.4l-4.4-2.6l-3.6-2.4zM703.4 332.4l1-6.4l2.4-4.2l5.1-2l5.3 3.5l3.8 13l-1.6 9.5l-5.5 0.4l-4.4-2.7l-3.6-2.3zM706 358.7l1-6.3l2.4-4.2l5.1-2.1l5.3 3.6l3.8 13l-1.6 9.4l-5.5 0.4l-4.4-2.7l-3.6-2.3zM708.5 385l1.1-6.4l2.4-4.2l5-2l5.4 3.6l3.8 13l-1.6 9.4l-5.5 0.4l-4.4-2.7l-3.6-2.3zM711.1 411.3l1.1-6.4l2.4-4.2l5-2l5.4 3.6l3.8 12.9l-1.6 9.5l-5.5 0.3l-4.4-2.6l-3.6-2.4zM713.7 437.5l1.1-6.3l2.4-4.2l5-2.1l5.4 3.6l3.7 13l-1.5 9.4l-5.5 0.4l-4.4-2.7l-3.6-2.4zM716.3 463.7l1.1-6.3l2.4-4.2l5-2.1l5.3 3.6l3.8 13l-1.6 9.4l-5.5 0.4l-4.4-2.7l-3.6-2.4zM718.9 489.8l1-6.3l2.5-4.2l5-2l5.3 3.6l3.8 13l-1.6 9.3l-5.5 0.4l-4.4-2.6l-3.6-2.4zM721.5 516l1.1-6.3l2.4-4.2l5-2.1l5.4 3.7l3.7 13l-1.5 9.3l-5.5 0.4l-4.4-2.6l-3.6-2.5zM724 542.1l1.1-6.3l2.4-4.2l5-2l5.3 3.6l3.8 13l-1.6 9.3l-5.4 0.4l-4.4-2.6l-3.6-2.5zM726.6 568.1l1-6.2l2.5-4.2l5-2.1l5.3 3.7l3.8 13l-1.6 9.3l-5.5 0.4l-4.4-2.7l-3.6-2.4zM729.2 594.2l1-6.3l2.4-4.2l5-2l5.4 3.7l3.7 13l-1.5 9.2l-5.5 0.4l-4.4-2.6l-3.6-2.5zM731.7 620.2l1.1-6.2l2.4-4.2l5-2.1l5.3 3.7l3.8 13l-1.6 9.2l-5.5 0.4l-4.4-2.6l-3.6-2.5zM734.3 646.2l1-6.2l2.5-4.2l4.9-2.1l5.4 3.7l3.7 13l-1.5 9.2l-5.5 0.4l-4.4-2.6l-3.6-2.5zM736.8 672.1l1.1-6.2l2.4-4.2l5-2l5.3 3.7l3.8 13l-1.6 9.2l-5.4 0.4l-4.4-2.6l-3.6-2.6zM739.4 698l1-6.1l2.5-4.2l4.9-2.1l5.4 3.8l3.7 12.9l-1.5 9.2l-5.5 0.4l-4.4-2.6l-3.6-2.5zM741.9 723.9l1.1-6.1l2.4-4.2l5-2.1l5.3 3.8l3.8 12.9l-1.6 9.2l-5.5 0.4l-4.3-2.6l-3.6-2.6z"/><path class="f" fill="#687038" d="M709.1 240.2l1.5-9.5l-5.6 0.9l-1.4 9zM703.6 240.6l1.4-9l-4.8-0.1l-1.1 6.4zM711.7 266.7l1.5-9.6l-5.6 1l-1.4 8.9zM706.2 267l1.4-8.9l-4.8-0.2l-1.1 6.5zM714.3 293.1l1.5-9.5l-5.6 0.9l-1.5 8.9zM708.7 293.4l1.5-8.9l-4.8-0.1l-1.1 6.4zM716.8 319.4l1.6-9.4l-5.6 0.9l-1.5 8.9zM711.3 319.8l1.5-8.9l-4.8-0.1l-1.1 6.4zM719.4 345.8l1.6-9.5l-5.6 1l-1.5 8.9zM713.9 346.2l1.5-8.9l-4.8-0.2l-1.1 6.4zM722 372.1l1.6-9.4l-5.6 0.9l-1.5 8.9zM716.5 372.5l1.5-8.9l-4.8-0.1l-1.1 6.4zM724.6 398.4l1.6-9.4l-5.6 0.9l-1.5 8.9zM719.1 398.8l1.5-8.9l-4.8-0.1l-1.1 6.3zM727.2 424.7l1.6-9.5l-5.6 1l-1.5 8.8zM721.7 425l1.5-8.8l-4.9-0.1l-1 6.3zM729.8 450.9l1.5-9.4l-5.6 1l-1.4 8.8zM724.3 451.3l1.4-8.8l-4.8-0.2l-1 6.3zM732.3 477.1l1.6-9.4l-5.6 1l-1.5 8.8zM726.8 477.5l1.5-8.8l-4.8-0.2l-1.1 6.3zM734.9 503.2l1.6-9.3l-5.6 1l-1.5 8.7zM729.4 503.6l1.5-8.7l-4.8-0.2l-1.1 6.3zM737.5 529.4l1.5-9.3l-5.5 0.9l-1.5 8.8zM732 529.8l1.5-8.8l-4.8-0.1l-1.1 6.3zM740 555.5l1.6-9.3l-5.6 1l-1.4 8.7zM734.6 555.9l1.4-8.7l-4.8-0.2l-1 6.3zM742.6 581.6l1.6-9.3l-5.6 1l-1.5 8.7zM737.1 582l1.5-8.7l-4.8-0.2l-1.1 6.2zM745.1 607.6l1.6-9.3l-5.5 1l-1.5 8.7zM739.7 608l1.5-8.7l-4.8-0.1l-1.1 6.2zM747.7 633.6l1.6-9.2l-5.6 1l-1.5 8.6zM742.2 634l1.5-8.6l-4.8-0.2l-1.1 6.2zM750.3 659.6l1.5-9.2l-5.5 1l-1.5 8.6zM744.8 660l1.5-8.6l-4.8-0.2l-1.1 6.2zM752.8 685.6l1.6-9.2l-5.6 1l-1.5 8.6zM747.3 686l1.5-8.6l-4.8-0.2l-1 6.2zM755.4 711.5l1.5-9.2l-5.5 1l-1.5 8.6zM749.9 711.9l1.5-8.6l-4.8-0.2l-1.1 6.2zM757.9 737.4l1.6-9.2l-5.6 1l-1.5 8.6zM752.4 737.8l1.5-8.6l-4.8-0.2l-1 6.2z"/><path class="f" fill="#bfcab2" d="M710.6 230.7l-3.7-13.1l-5.4 1.8l3.5 12.2zM705 231.6l-3.5-12.2l-3.9 3.3l2.6 8.8zM713.2 257.1l-3.8-13l-5.3 1.8l3.5 12.2zM707.6 258.1l-3.5-12.2l-3.9 3.3l2.6 8.7zM715.8 283.6l-3.8-13.1l-5.3 1.8l3.5 12.2zM710.2 284.5l-3.5-12.2l-3.9 3.3l2.6 8.8zM718.4 310l-3.8-13l-5.3 1.7l3.5 12.2zM712.8 310.9l-3.5-12.2l-3.9 3.3l2.6 8.8zM721 336.3l-3.8-13l-5.3 1.8l3.5 12.2zM715.4 337.3l-3.5-12.2l-3.9 3.3l2.6 8.7zM723.6 362.7l-3.8-13l-5.3 1.8l3.5 12.1zM718 363.6l-3.5-12.1l-3.9 3.2l2.6 8.8zM726.2 389l-3.8-13l-5.4 1.8l3.6 12.1zM720.6 389.9l-3.6-12.1l-3.8 3.2l2.6 8.8zM728.8 415.2l-3.8-12.9l-5.4 1.8l3.6 12.1zM723.2 416.2l-3.6-12.1l-3.8 3.2l2.5 8.8zM731.3 441.5l-3.7-13l-5.4 1.8l3.5 12.2zM725.7 442.5l-3.5-12.2l-3.8 3.3l2.5 8.7zM733.9 467.7l-3.8-13l-5.3 1.8l3.5 12.2zM728.3 468.7l-3.5-12.2l-3.8 3.3l2.5 8.7zM736.5 493.9l-3.8-13l-5.3 1.8l3.5 12.2zM730.9 494.9l-3.5-12.2l-3.9 3.3l2.6 8.7zM739 520.1l-3.7-13l-5.4 1.8l3.6 12.1zM733.5 521l-3.6-12.1l-3.8 3.2l2.6 8.8zM741.6 546.2l-3.8-13l-5.3 1.8l3.5 12.2zM736 547.2l-3.5-12.2l-3.8 3.3l2.5 8.7zM744.2 572.3l-3.8-13l-5.3 1.8l3.5 12.2zM738.6 573.3l-3.5-12.2l-3.9 3.3l2.6 8.7zM746.7 598.3l-3.7-12.9l-5.4 1.8l3.6 12.1zM741.2 599.3l-3.6-12.1l-3.8 3.2l2.6 8.8zM749.3 624.4l-3.8-13l-5.3 1.8l3.5 12.2zM743.7 625.4l-3.5-12.2l-3.8 3.3l2.5 8.7zM751.8 650.4l-3.7-13l-5.3 1.8l3.5 12.2zM746.3 651.4l-3.5-12.2l-3.9 3.3l2.6 8.7zM754.4 676.4l-3.8-13l-5.3 1.8l3.5 12.2zM748.8 677.4l-3.5-12.2l-3.8 3.3l2.5 8.7zM756.9 702.3l-3.7-12.9l-5.3 1.8l3.5 12.1zM751.4 703.3l-3.5-12.1l-3.9 3.2l2.6 8.7zM759.5 728.2l-3.8-12.9l-5.3 1.8l3.5 12.1zM753.9 729.2l-3.5-12.1l-3.8 3.2l2.5 8.7z"/><path class="f" fill="#edd2c2" d="M706.9 217.6l-5.4-3.4l-5.1 2l5.1 3.2zM701.5 219.4l-5.1-3.2l-2.4 4.2l3.6 2.3zM709.4 244.1l-5.3-3.4l-5 2l5 3.2zM704.1 245.9l-5-3.2l-2.5 4.2l3.6 2.3zM712 270.5l-5.3-3.4l-5 2l5 3.2zM706.7 272.3l-5-3.2l-2.5 4.2l3.6 2.3zM714.6 297l-5.3-3.5l-5 2l5 3.2zM709.3 298.7l-5-3.2l-2.5 4.2l3.6 2.3zM717.2 323.3l-5.3-3.5l-5.1 2l5.1 3.3zM711.9 325.1l-5.1-3.3l-2.4 4.2l3.6 2.4zM719.8 349.7l-5.3-3.6l-5.1 2.1l5.1 3.3zM714.5 351.5l-5.1-3.3l-2.4 4.2l3.6 2.3zM722.4 376l-5.4-3.6l-5 2.1l5 3.3zM717 377.8l-5-3.3l-2.4 4.1l3.6 2.4zM725 402.3l-5.4-3.6l-5 2l5 3.4zM719.6 404.1l-5-3.4l-2.4 4.2l3.6 2.4zM727.6 428.5l-5.4-3.6l-5 2.1l5 3.3zM722.2 430.3l-5-3.3l-2.4 4.2l3.6 2.4zM730.1 454.7l-5.3-3.6l-5 2.1l5 3.3zM724.8 456.5l-5-3.3l-2.4 4.2l3.6 2.4zM732.7 480.9l-5.3-3.6l-5.1 2l5.1 3.4zM727.4 482.7l-5.1-3.4l-2.4 4.2l3.6 2.5zM735.3 507.1l-5.4-3.6l-5 2l5 3.4zM729.9 508.9l-5-3.4l-2.4 4.2l3.6 2.4zM737.8 533.2l-5.3-3.6l-5 2l5 3.4zM732.5 535l-5-3.4l-2.4 4.2l3.6 2.5zM740.4 559.3l-5.3-3.7l-5 2.1l5 3.4zM735.1 561.1l-5-3.4l-2.4 4.2l3.5 2.5zM743 585.4l-5.4-3.7l-5 2l5 3.5zM737.6 587.2l-5-3.5l-2.4 4.2l3.6 2.5zM745.5 611.4l-5.3-3.7l-5 2.1l5 3.4zM740.2 613.2l-5-3.4l-2.4 4.2l3.6 2.5zM748.1 637.4l-5.4-3.7l-5 2.1l5.1 3.4zM742.8 639.2l-5.1-3.4l-2.4 4.2l3.6 2.5zM750.6 663.4l-5.3-3.7l-5 2l5 3.5zM745.3 665.2l-5-3.5l-2.4 4.2l3.6 2.6zM753.2 689.4l-5.4-3.8l-4.9 2.1l5 3.5zM747.9 691.2l-5-3.5l-2.4 4.2l3.5 2.5zM755.7 715.3l-5.3-3.8l-5 2.1l5 3.5zM750.4 717.1l-5-3.5l-2.4 4.2l3.6 2.5z"/><path class="g" fill="#83a974" d="M693 226.9l2.5 8.7l3.6 2.3l1.1-6.4l-2.6-8.8l-3.6-2.3zM695.6 253.3l2.5 8.7l3.6 2.4l1.1-6.5l-2.6-8.7l-3.6-2.3zM698.2 279.7l2.5 8.7l3.6 2.4l1.1-6.4l-2.6-8.8l-3.6-2.3zM700.8 306.1l2.5 8.7l3.6 2.4l1.1-6.4l-2.6-8.8l-3.6-2.3zM703.4 332.4l2.5 8.8l3.6 2.3l1.1-6.4l-2.6-8.7l-3.6-2.4zM706 358.7l2.5 8.8l3.6 2.4l1.1-6.4l-2.6-8.8l-3.6-2.3zM708.5 385l2.6 8.7l3.6 2.4l1.1-6.3l-2.6-8.8l-3.6-2.4zM711.1 411.3l2.6 8.7l3.6 2.4l1-6.3l-2.5-8.8l-3.6-2.4zM713.7 437.5l2.6 8.7l3.6 2.4l1-6.3l-2.5-8.7l-3.6-2.4zM716.3 463.7l2.5 8.7l3.6 2.4l1.1-6.3l-2.5-8.7l-3.6-2.4zM718.9 489.8l2.5 8.8l3.6 2.4l1.1-6.3l-2.6-8.7l-3.6-2.5zM721.4 516l2.6 8.7l3.6 2.5l1.1-6.3l-2.6-8.8l-3.6-2.4zM724 542.1l2.6 8.7l3.6 2.5l1-6.3l-2.5-8.7l-3.6-2.5zM726.6 568.1l2.5 8.8l3.6 2.4l1.1-6.2l-2.6-8.7l-3.5-2.5zM729.2 594.2l2.5 8.7l3.6 2.5l1.1-6.2l-2.6-8.8l-3.6-2.5zM731.7 620.2l2.6 8.7l3.5 2.5l1.1-6.2l-2.5-8.7l-3.6-2.5zM734.3 646.2l2.5 8.7l3.6 2.5l1.1-6.2l-2.6-8.7l-3.6-2.5zM736.8 672.1l2.6 8.7l3.6 2.6l1-6.2l-2.5-8.7l-3.6-2.6zM739.4 698l2.5 8.8l3.6 2.5l1.1-6.2l-2.6-8.7l-3.5-2.5zM741.9 723.9l2.6 8.7l3.6 2.6l1-6.2l-2.5-8.7l-3.6-2.5z"/>
<path class="h" d="M1219 190.6l2-13.5l5.8-4.3l5.1 1.2l2.9 3.8l2.6 6.1l-1.3 9.1l-2.4 2.2l-5.5 4l-5.3 0.5zM1221.3 217.1l2-13.5l5.8-4.3l5.1 1.2l2.8 3.8l2.7 6.1l-1.3 9.1l-2.4 2.1l-5.5 4.1l-5.3 0.5zM1223.6 243.6l2-13.5l5.8-4.3l5.1 1.2l2.8 3.7l2.7 6.2l-1.3 9l-2.4 2.2l-5.5 4.1l-5.3 0.5zM1225.9 270l2-13.4l5.8-4.4l5.1 1.2l2.8 3.8l2.6 6.1l-1.3 9.1l-2.3 2.1l-5.5 4.1l-5.3 0.5zM1228.2 296.4l2-13.4l5.8-4.4l5.1 1.2l2.8 3.8l2.6 6.1l-1.3 9.1l-2.3 2.1l-5.5 4.1l-5.3 0.5zM1230.5 322.8l1.9-13.4l5.9-4.4l5 1.2l2.9 3.8l2.6 6.1l-1.3 9l-2.3 2.2l-5.5 4.1l-5.3 0.5zM1232.8 349.2l1.9-13.4l5.9-4.5l5 1.3l2.9 3.7l2.6 6.1l-1.3 9.1l-2.4 2.1l-5.4 4.2l-5.3 0.4zM1235.1 375.5l1.9-13.4l5.8-4.5l5.1 1.3l2.9 3.8l2.6 6l-1.3 9.1l-2.4 2.1l-5.4 4.2l-5.3 0.4zM1237.4 401.8l1.9-13.4l5.8-4.5l5.1 1.3l2.8 3.8l2.6 6l-1.3 9l-2.3 2.2l-5.4 4.1l-5.3 0.5zM1239.7 428.1l1.9-13.4l5.8-4.5l5.1 1.2l2.8 3.8l2.6 6l-1.3 9.1l-2.3 2.1l-5.5 4.2l-5.2 0.4zM1242 454.3l1.9-13.4l5.8-4.5l5 1.2l2.9 3.8l2.6 6.1l-1.3 9l-2.4 2.1l-5.4 4.2l-5.3 0.5zM1244.2 480.6l2-13.5l5.8-4.5l5 1.2l2.8 3.8l2.6 6l-1.2 9.1l-2.4 2.1l-5.4 4.2l-5.3 0.4zM1246.5 506.7l1.9-13.4l5.8-4.5l5.1 1.2l2.8 3.8l2.6 6l-1.3 9l-2.3 2.1l-5.4 4.3l-5.3 0.4zM1248.8 532.9l1.9-13.5l5.8-4.5l5 1.3l2.9 3.8l2.6 5.9l-1.3 9.1l-2.4 2l-5.4 4.3l-5.3 0.4zM1251 559l2-13.4l5.8-4.6l5 1.3l2.8 3.8l2.6 5.9l-1.3 9.1l-2.3 2l-5.4 4.3l-5.3 0.4zM1253.3 585.1l1.9-13.4l5.8-4.6l5 1.3l2.9 3.8l2.6 5.9l-1.3 9l-2.3 2.1l-5.5 4.3l-5.2 0.4zM1255.6 611.1l1.9-13.4l5.8-4.6l5 1.3l2.9 3.8l2.5 5.9l-1.3 9.1l-2.3 2l-5.4 4.3l-5.3 0.4zM1257.8 637.2l2-13.4l5.7-4.6l5.1 1.2l2.8 3.8l2.6 5.9l-1.3 9.1l-2.3 2l-5.4 4.3l-5.3 0.4zM1260.1 663.2l1.9-13.4l5.8-4.7l5 1.3l2.9 3.8l2.5 5.9l-1.2 9l-2.4 2.1l-5.4 4.3l-5.2 0.4zM1262.4 689.1l1.9-13.4l5.7-4.6l5.1 1.3l2.8 3.8l2.6 5.9l-1.3 9l-2.3 2l-5.4 4.4l-5.3 0.4z"/><path class="f" fill="#687038" d="M1219 190.6l3.9 9.1l5.3-0.5l-3.6-8.5zM1224.6 190.7l3.6 8.5l3.9-3.3l-2.6-6.1zM1221.3 217.1l3.9 9.1l5.3-0.5l-3.6-8.5zM1226.9 217.2l3.6 8.5l3.9-3.3l-2.6-6.1zM1223.6 243.6l3.9 9.1l5.3-0.5l-3.6-8.5zM1229.2 243.7l3.6 8.5l3.9-3.3l-2.6-6.1zM1225.9 270l3.9 9.1l5.3-0.5l-3.6-8.5zM1231.5 270.1l3.6 8.5l3.9-3.3l-2.6-6.1zM1228.2 296.4l3.9 9.1l5.3-0.5l-3.6-8.5zM1233.8 296.5l3.6 8.5l3.9-3.3l-2.6-6.1zM1230.5 322.8l3.9 9.1l5.3-0.5l-3.6-8.5zM1236.1 322.9l3.6 8.5l3.9-3.3l-2.6-6.1zM1232.8 349.2l3.9 9l5.3-0.5l-3.6-8.4zM1238.4 349.3l3.6 8.4l3.9-3.2l-2.6-6.1zM1235.1 375.5l3.9 9l5.3-0.4l-3.7-8.5zM1240.6 375.6l3.7 8.5l3.9-3.3l-2.7-6.1zM1237.4 401.8l3.9 9l5.3-0.5l-3.7-8.4zM1242.9 401.9l3.7 8.4l3.8-3.2l-2.6-6.1zM1239.7 428.1l3.8 8.9l5.3-0.4l-3.6-8.4zM1245.2 428.2l3.6 8.4l3.9-3.3l-2.6-6zM1241.9 454.3l3.9 9l5.3-0.5l-3.6-8.3zM1247.5 454.5l3.6 8.3l3.9-3.3l-2.6-6zM1244.2 480.5l3.9 9l5.3-0.5l-3.6-8.3zM1249.8 480.7l3.6 8.3l3.9-3.3l-2.7-6zM1246.5 506.7l3.9 8.9l5.3-0.4l-3.7-8.4zM1252 506.8l3.7 8.4l3.8-3.3l-2.6-6zM1248.8 532.9l3.8 8.8l5.3-0.4l-3.6-8.3zM1254.3 533l3.6 8.3l3.9-3.3l-2.6-5.9zM1251 559l3.9 8.8l5.3-0.4l-3.6-8.3zM1256.6 559.1l3.6 8.3l3.8-3.3l-2.5-5.9zM1253.3 585.1l3.9 8.8l5.3-0.4l-3.7-8.3zM1258.8 585.2l3.7 8.3l3.8-3.3l-2.6-5.9zM1255.6 611.1l3.8 8.8l5.3-0.4l-3.6-8.2zM1261.1 611.3l3.6 8.2l3.9-3.2l-2.6-6zM1257.8 637.2l3.9 8.7l5.3-0.4l-3.6-8.2zM1263.4 637.3l3.6 8.2l3.8-3.2l-2.6-5.9zM1260.1 663.2l3.9 8.7l5.2-0.4l-3.6-8.2zM1265.6 663.3l3.6 8.2l3.9-3.2l-2.6-5.9zM1262.4 689.1l3.8 8.8l5.3-0.4l-3.6-8.2zM1267.9 689.3l3.6 8.2l3.8-3.3l-2.6-5.9z"/><path class="f" fill="#edd2c2" d="M1226.8 172.8l-5.8 4.3l5.4 0.9l5.5-4zM1231.9 174l-5.5 4l4.4 2.7l4-2.9zM1229.1 199.3l-5.8 4.3l5.4 1l5.5-4.1zM1234.2 200.5l-5.5 4.1l4.4 2.6l3.9-2.9zM1231.4 225.7l-5.8 4.4l5.4 0.9l5.5-4zM1236.5 227l-5.5 4l4.4 2.7l3.9-3zM1233.7 252.2l-5.8 4.4l5.4 0.9l5.5-4.1zM1238.8 253.4l-5.5 4.1l4.4 2.6l3.9-2.9zM1236 278.6l-5.8 4.4l5.4 0.9l5.5-4.1zM1241.1 279.8l-5.5 4.1l4.4 2.7l3.9-3zM1238.3 305l-5.8 4.4l5.4 0.9l5.4-4.1zM1243.3 306.2l-5.4 4.1l4.4 2.7l3.9-3zM1240.6 331.3l-5.9 4.4l5.5 1l5.4-4.2zM1245.6 332.5l-5.4 4.2l4.4 2.6l3.9-3zM1242.9 357.6l-5.9 4.5l5.5 0.9l5.4-4.1zM1247.9 358.9l-5.4 4.1l4.3 2.7l4-3zM1245.1 383.9l-5.8 4.5l5.4 0.9l5.5-4.1zM1250.2 385.2l-5.5 4.1l4.4 2.7l3.9-3.1zM1247.4 410.2l-5.8 4.5l5.4 0.9l5.5-4.2zM1252.5 411.4l-5.5 4.2l4.4 2.6l3.9-3zM1249.7 436.4l-5.8 4.5l5.4 1l5.4-4.2zM1254.7 437.7l-5.4 4.2l4.4 2.6l3.9-3.1zM1252 462.6l-5.8 4.5l5.4 1l5.4-4.2zM1257 463.9l-5.4 4.2l4.3 2.6l4-3.1zM1254.2 488.8l-5.8 4.5l5.4 1l5.5-4.3zM1259.3 490l-5.5 4.3l4.4 2.6l3.9-3.1zM1256.5 514.9l-5.8 4.6l5.4 0.9l5.4-4.2zM1261.5 516.2l-5.4 4.2l4.4 2.6l3.9-3zM1258.8 541l-5.8 4.6l5.4 0.9l5.4-4.2zM1263.8 542.3l-5.4 4.2l4.3 2.6l3.9-3zM1261 567.1l-5.8 4.6l5.4 0.9l5.5-4.3zM1266.1 568.3l-5.5 4.3l4.4 2.6l3.9-3.1zM1263.3 593.1l-5.8 4.6l5.4 1l5.4-4.3zM1268.3 594.4l-5.4 4.3l4.4 2.6l3.9-3.1zM1265.5 619.1l-5.7 4.7l5.4 0.9l5.4-4.3zM1270.6 620.4l-5.4 4.3l4.3 2.6l3.9-3.1zM1267.8 645.1l-5.8 4.7l5.4 0.9l5.4-4.3zM1272.8 646.4l-5.4 4.3l4.4 2.6l3.9-3.1zM1270 671.1l-5.7 4.6l5.4 1l5.4-4.3zM1275.1 672.4l-5.4 4.3l4.3 2.6l3.9-3.1z"/><path class="f" fill="#bfcab2" d="M1221 177.1l-2 13.5l5.6 0.1l1.8-12.7zM1226.4 178l-1.8 12.7l4.9-0.9l1.3-9.1zM1223.3 203.6l-2 13.5l5.6 0.1l1.8-12.6zM1228.7 204.6l-1.8 12.6l4.9-0.9l1.3-9.1zM1225.6 230.1l-2 13.5l5.6 0.1l1.8-12.7zM1231 231l-1.8 12.7l4.9-0.9l1.3-9.1zM1227.9 256.6l-2 13.4l5.6 0.1l1.8-12.6zM1233.3 257.5l-1.8 12.6l4.9-0.9l1.3-9.1zM1230.2 283l-2 13.4l5.6 0.1l1.8-12.6zM1235.6 283.9l-1.8 12.6l4.9-0.9l1.3-9zM1232.5 309.4l-2 13.4l5.6 0.1l1.8-12.6zM1237.9 310.3l-1.8 12.6l4.9-0.9l1.3-9zM1234.7 335.7l-1.9 13.5l5.6 0.1l1.8-12.6zM1240.2 336.7l-1.8 12.6l4.9-0.9l1.3-9.1zM1237 362.1l-1.9 13.4l5.5 0.1l1.9-12.6zM1242.5 363l-1.9 12.6l4.9-0.9l1.3-9zM1239.3 388.4l-1.9 13.4l5.5 0.1l1.8-12.6zM1244.7 389.3l-1.8 12.6l4.9-0.9l1.3-9zM1241.6 414.7l-1.9 13.4l5.5 0.1l1.8-12.6zM1247 415.6l-1.8 12.6l4.9-0.9l1.3-9.1zM1243.9 440.9l-2 13.4l5.6 0.2l1.8-12.6zM1249.3 441.9l-1.8 12.6l4.9-1l1.3-9zM1246.2 467.1l-2 13.4l5.6 0.2l1.8-12.6zM1251.6 468.1l-1.8 12.6l4.8-1l1.3-9zM1248.4 493.3l-1.9 13.4l5.5 0.1l1.8-12.5zM1253.8 494.3l-1.8 12.5l4.9-0.9l1.3-9zM1250.7 519.5l-1.9 13.4l5.5 0.1l1.8-12.6zM1256.1 520.4l-1.8 12.6l4.9-0.9l1.3-9.1zM1253 545.6l-2 13.4l5.6 0.1l1.8-12.6zM1258.4 546.5l-1.8 12.6l4.9-0.9l1.2-9.1zM1255.2 571.7l-1.9 13.4l5.5 0.1l1.8-12.6zM1260.6 572.6l-1.8 12.6l4.9-0.9l1.3-9.1zM1257.5 597.7l-1.9 13.4l5.5 0.2l1.8-12.6zM1262.9 598.7l-1.8 12.6l4.9-1l1.3-9zM1259.8 623.8l-2 13.4l5.6 0.1l1.8-12.6zM1265.2 624.7l-1.8 12.6l4.8-0.9l1.3-9.1zM1262 649.8l-1.9 13.4l5.5 0.1l1.8-12.6zM1267.4 650.7l-1.8 12.6l4.9-0.9l1.3-9.1zM1264.3 675.7l-1.9 13.4l5.5 0.2l1.8-12.6zM1269.7 676.7l-1.8 12.6l4.8-1l1.3-9z"/><path class="g" fill="#7ba976" d="M1229.5 189.8l2.6 6.1l4-2.9l1.3-9.1l-2.6-6.1l-4 2.9zM1231.8 216.3l2.6 6.1l4-2.9l1.3-9.1l-2.7-6.1l-3.9 2.9zM1234.1 242.8l2.6 6.1l4-3l1.3-9l-2.7-6.2l-3.9 3zM1236.4 269.2l2.6 6.1l3.9-2.9l1.3-9.1l-2.6-6.1l-3.9 2.9zM1238.7 295.6l2.6 6.1l3.9-2.9l1.3-9.1l-2.6-6.1l-3.9 3zM1241 322l2.6 6.1l3.9-3l1.3-9l-2.6-6.1l-3.9 3zM1243.3 348.4l2.6 6.1l3.9-3l1.3-9.1l-2.6-6.1l-3.9 3zM1245.5 374.7l2.7 6.1l3.9-3l1.3-9.1l-2.6-6l-4 3zM1247.8 401l2.6 6.1l3.9-3.1l1.3-9l-2.6-6.1l-3.9 3.1zM1250.1 427.3l2.6 6l3.9-3l1.3-9.1l-2.6-6l-3.9 3zM1252.4 453.5l2.6 6l3.9-3l1.3-9l-2.6-6.1l-3.9 3.1zM1254.6 479.7l2.7 6l3.9-3l1.3-9.1l-2.6-6l-4 3.1zM1256.9 505.9l2.6 6l3.9-3.1l1.3-9l-2.6-6l-3.9 3.1zM1259.2 532.1l2.6 5.9l3.9-3l1.3-9.1l-2.6-5.9l-3.9 3zM1261.5 558.2l2.5 5.9l3.9-3l1.3-9.1l-2.6-5.9l-3.9 3zM1263.7 584.3l2.6 5.9l3.9-3.1l1.3-9l-2.6-6l-3.9 3.1zM1266 610.3l2.6 6l3.9-3.1l1.2-9.1l-2.5-5.9l-3.9 3.1zM1268.2 636.4l2.6 5.9l3.9-3.1l1.3-9.1l-2.6-5.9l-3.9 3.1zM1270.5 662.4l2.6 5.9l3.9-3.2l1.2-9l-2.5-5.9l-3.9 3.1zM1272.7 688.3l2.6 5.9l3.9-3.1l1.3-9l-2.6-5.9l-3.9 3.1z"/>
<path class="h" d="M708.7 236l1.6-6.6l2-4.2l4.7-2.2l6.9 3.1l4.6 12.8l-2.4 9.8l-5.2 0.5l-6.5-2.8l-2.6-1.7zM711.3 262.5l1.6-6.6l2-4.2l4.7-2.2l6.9 3.1l4.5 12.8l-2.3 9.8l-5.3 0.5l-6.4-2.9l-2.6-1.6zM713.9 289l1.6-6.6l2-4.3l4.7-2.1l6.9 3.1l4.5 12.8l-2.3 9.7l-5.3 0.6l-6.4-2.9l-2.6-1.7zM716.5 315.4l1.6-6.6l2-4.2l4.7-2.2l6.9 3.1l4.5 12.9l-2.3 9.6l-5.3 0.6l-6.4-2.9l-2.6-1.7zM719.1 341.8l1.6-6.6l2-4.2l4.6-2.2l6.9 3.1l4.6 12.9l-2.3 9.6l-5.3 0.6l-6.4-2.9l-2.6-1.7zM721.7 368.1l1.6-6.5l2-4.2l4.6-2.2l6.9 3.1l4.6 12.9l-2.4 9.6l-5.2 0.6l-6.5-3l-2.6-1.6zM724.3 394.5l1.5-6.5l2.1-4.3l4.6-2.2l6.9 3.2l4.6 12.8l-2.4 9.7l-5.2 0.5l-6.5-3l-2.6-1.6zM726.8 420.8l1.6-6.5l2-4.3l4.7-2.2l6.9 3.2l4.5 12.8l-2.3 9.6l-5.2 0.6l-6.5-3l-2.6-1.6zM729.4 447l1.6-6.4l2-4.3l4.7-2.2l6.9 3.2l4.5 12.8l-2.3 9.6l-5.3 0.6l-6.4-3l-2.6-1.6zM732 473.3l1.6-6.5l2-4.2l4.6-2.2l6.9 3.2l4.6 12.8l-2.4 9.6l-5.2 0.6l-6.5-3.1l-2.5-1.6zM734.6 499.5l1.6-6.4l2-4.3l4.6-2.2l6.9 3.2l4.5 12.8l-2.3 9.6l-5.2 0.6l-6.5-3.1l-2.6-1.6zM737.1 525.7l1.5-6.5l2-4.2l4.7-2.2l6.9 3.2l4.5 12.8l-2.4 9.6l-5.2 0.6l-6.4-3.1l-2.6-1.6zM739.7 551.8l1.6-6.4l2-4.3l4.6-2.2l6.9 3.3l4.6 12.8l-2.4 9.5l-5.2 0.6l-6.4-3.1l-2.6-1.6zM742.3 577.9l1.6-6.3l2-4.3l4.6-2.2l6.9 3.3l4.5 12.7l-2.3 9.5l-5.2 0.6l-6.5-3.1l-2.6-1.5zM744.8 604l1.6-6.3l2-4.3l4.6-2.2l6.9 3.3l4.6 12.8l-2.4 9.4l-5.2 0.6l-6.4-3.1l-2.6-1.6zM747.4 630.1l1.6-6.4l2-4.3l4.6-2.2l6.9 3.4l4.5 12.7l-2.3 9.5l-5.2 0.6l-6.5-3.1l-2.6-1.6zM750 656.1l1.5-6.3l2-4.3l4.7-2.2l6.8 3.3l4.6 12.8l-2.4 9.4l-5.2 0.6l-6.4-3.1l-2.6-1.6zM752.5 682.1l1.6-6.3l2-4.3l4.6-2.2l6.9 3.3l4.5 12.8l-2.3 9.4l-5.2 0.6l-6.5-3.1l-2.5-1.6zM755.1 708.1l1.5-6.3l2-4.3l4.7-2.2l6.8 3.3l4.6 12.8l-2.4 9.4l-5.2 0.6l-6.4-3.2l-2.6-1.5zM757.6 734l1.6-6.3l2-4.3l4.6-2.2l6.9 3.4l4.5 12.8l-2.4 9.3l-5.1 0.7l-6.5-3.2l-2.5-1.6z"/><path class="f" fill="#687038" d="M726.1 248.7l2.4-9.8l-5.4 1.2l-2.2 9.1zM720.9 249.2l2.2-9.1l-5.1 0.1l-1.6 6.5zM728.7 275.2l2.4-9.8l-5.4 1.2l-2.2 9.1zM723.5 275.7l2.2-9.1l-5.1 0.1l-1.6 6.5zM731.3 301.6l2.3-9.7l-5.4 1.2l-2.2 9.1zM726 302.2l2.2-9.1l-5 0l-1.6 6.6zM733.9 328.1l2.3-9.7l-5.4 1.1l-2.2 9.1zM728.6 328.6l2.2-9.1l-5 0.1l-1.6 6.5zM736.5 354.4l2.3-9.6l-5.4 1.1l-2.2 9.1zM731.2 355l2.2-9.1l-5 0.1l-1.6 6.5zM739 380.8l2.4-9.6l-5.4 1.1l-2.2 9.1zM733.8 381.4l2.2-9.1l-5 0.1l-1.6 6.5zM741.6 407.1l2.4-9.6l-5.4 1.2l-2.2 9zM736.4 407.7l2.2-9l-5 0.1l-1.6 6.4zM744.2 433.4l2.3-9.6l-5.3 1.2l-2.2 9zM739 434l2.2-9l-5.1 0.1l-1.5 6.5zM746.8 459.7l2.3-9.6l-5.4 1.2l-2.2 9zM741.5 460.3l2.2-9l-5 0.1l-1.6 6.4zM749.3 486l2.4-9.6l-5.4 1.2l-2.2 8.9zM744.1 486.5l2.2-8.9l-5 0l-1.6 6.5zM751.9 512.2l2.3-9.6l-5.3 1.2l-2.2 9zM746.7 512.8l2.2-9l-5 0.1l-1.6 6.4zM754.5 538.4l2.3-9.6l-5.4 1.2l-2.2 9zM749.2 539l2.2-9l-5 0.1l-1.6 6.4zM757 564.5l2.4-9.5l-5.4 1.2l-2.2 8.9zM751.8 565.1l2.2-8.9l-5 0l-1.6 6.5zM759.6 590.6l2.3-9.5l-5.3 1.2l-2.2 8.9zM754.4 591.2l2.2-8.9l-5 0.1l-1.6 6.4zM762.1 616.7l2.4-9.4l-5.4 1.2l-2.2 8.8zM756.9 617.3l2.2-8.8l-5 0l-1.6 6.4zM764.7 642.8l2.3-9.5l-5.3 1.2l-2.2 8.9zM759.5 643.4l2.2-8.9l-5 0.1l-1.6 6.4zM767.2 668.8l2.4-9.4l-5.4 1.2l-2.2 8.8zM762 669.4l2.2-8.8l-5 0l-1.6 6.4zM769.8 694.8l2.3-9.4l-5.3 1.2l-2.2 8.8zM764.6 695.4l2.2-8.8l-5 0.1l-1.6 6.3zM772.3 720.8l2.4-9.4l-5.4 1.2l-2.2 8.8zM767.1 721.4l2.2-8.8l-5 0.1l-1.6 6.3zM774.8 746.7l2.4-9.3l-5.3 1.2l-2.2 8.8zM769.7 747.4l2.2-8.8l-5 0l-1.6 6.3z"/><path class="f" fill="#bfcab2" d="M728.5 238.9l-4.6-12.8l-5.1 1.9l4.3 12.1zM723.1 240.1l-4.3-12.1l-3.9 3.5l3.1 8.7zM731.1 265.4l-4.6-12.8l-5.1 2l4.3 12zM725.7 266.6l-4.3-12l-3.9 3.4l3.1 8.7zM733.6 291.9l-4.5-12.8l-5.1 1.9l4.2 12.1zM728.2 293.1l-4.2-12.1l-3.9 3.5l3.1 8.6zM736.2 318.4l-4.5-12.9l-5.1 2l4.2 12zM730.8 319.5l-4.2-12l-3.9 3.4l3.1 8.7zM738.8 344.8l-4.5-12.9l-5.1 2l4.2 12zM733.4 345.9l-4.2-12l-3.9 3.5l3.1 8.6zM741.4 371.2l-4.6-12.9l-5.1 2l4.3 12zM736 372.3l-4.3-12l-3.8 3.5l3.1 8.6zM744 397.5l-4.6-12.8l-5.1 2l4.3 12zM738.6 398.7l-4.3-12l-3.8 3.4l3.1 8.7zM746.5 423.8l-4.5-12.8l-5.1 2l4.3 12zM741.2 425l-4.3-12l-3.8 3.4l3 8.7zM749.1 450.1l-4.5-12.8l-5.1 2l4.2 12zM743.7 451.3l-4.2-12l-3.8 3.4l3 8.7zM751.7 476.4l-4.6-12.8l-5 2l4.2 12zM746.3 477.6l-4.2-12l-3.9 3.4l3.1 8.6zM754.2 502.6l-4.5-12.8l-5.1 2l4.3 12zM748.9 503.8l-4.3-12l-3.8 3.4l3.1 8.7zM756.8 528.8l-4.5-12.8l-5.1 2l4.2 12zM751.4 530l-4.2-12l-3.8 3.4l3 8.7zM759.4 555l-4.6-12.8l-5 2l4.2 12zM754 556.2l-4.2-12l-3.9 3.4l3.1 8.6zM761.9 581.1l-4.5-12.8l-5.1 2.1l4.3 11.9zM756.6 582.3l-4.3-11.9l-3.8 3.4l3.1 8.6zM764.5 607.3l-4.6-12.8l-5 2l4.2 12zM759.1 608.5l-4.2-12l-3.8 3.4l3 8.6zM767 633.3l-4.5-12.7l-5.1 2l4.3 11.9zM761.7 634.5l-4.3-11.9l-3.8 3.4l3.1 8.6zM769.6 659.4l-4.6-12.8l-5 2l4.2 12zM764.2 660.6l-4.2-12l-3.8 3.4l3 8.6zM772.1 685.4l-4.5-12.8l-5.1 2.1l4.3 11.9zM766.8 686.6l-4.3-11.9l-3.8 3.4l3.1 8.6zM774.7 711.4l-4.6-12.8l-5 2.1l4.2 11.9zM769.3 712.6l-4.2-11.9l-3.8 3.4l3 8.6zM777.2 737.4l-4.5-12.8l-5.1 2l4.3 12zM771.9 738.6l-4.3-12l-3.8 3.4l3.1 8.6z"/><path class="f" fill="#edd2c2" d="M723.9 226.1l-6.9-3.1l-4.7 2.2l6.5 2.8zM718.8 228l-6.5-2.8l-2 4.2l4.6 2.1zM726.5 252.6l-6.9-3.1l-4.7 2.2l6.5 2.9zM721.4 254.6l-6.5-2.9l-2 4.2l4.6 2.1zM729.1 279.1l-6.9-3.1l-4.7 2.1l6.5 2.9zM724 281l-6.5-2.9l-2 4.3l4.6 2.1zM731.7 305.5l-6.9-3.1l-4.7 2.2l6.5 2.9zM726.6 307.5l-6.5-2.9l-2 4.2l4.6 2.1zM734.3 331.9l-7-3.1l-4.6 2.2l6.5 2.9zM729.2 333.9l-6.5-2.9l-2 4.2l4.6 2.2zM736.8 358.3l-6.9-3.1l-4.6 2.2l6.4 2.9zM731.7 360.3l-6.4-2.9l-2 4.2l4.6 2.2zM739.4 384.7l-6.9-3.2l-4.6 2.2l6.4 3zM734.3 386.7l-6.4-3l-2.1 4.3l4.7 2.1zM742 411l-6.9-3.2l-4.7 2.2l6.5 3zM736.9 413l-6.5-3l-2 4.3l4.7 2.1zM744.6 437.3l-6.9-3.2l-4.7 2.2l6.5 3zM739.5 439.3l-6.5-3l-2 4.3l4.7 2.1zM747.1 463.6l-6.9-3.2l-4.6 2.2l6.5 3zM742.1 465.6l-6.5-3l-2 4.2l4.6 2.2zM749.7 489.8l-6.9-3.2l-4.6 2.2l6.4 3zM744.6 491.8l-6.4-3l-2 4.3l4.6 2.1zM752.3 516l-6.9-3.2l-4.7 2.2l6.5 3zM747.2 518l-6.5-3l-2 4.3l4.7 2.1zM754.8 542.2l-6.9-3.3l-4.6 2.2l6.5 3.1zM749.8 544.2l-6.5-3.1l-2 4.3l4.6 2.2zM757.4 568.3l-6.9-3.2l-4.6 2.2l6.4 3.1zM752.3 570.4l-6.4-3.1l-2 4.3l4.6 2.2zM759.9 594.5l-6.8-3.3l-4.7 2.2l6.5 3.1zM754.9 596.5l-6.5-3.1l-2 4.3l4.7 2.2zM762.5 620.6l-6.9-3.4l-4.6 2.2l6.4 3.2zM757.4 622.6l-6.4-3.2l-2 4.3l4.6 2.3zM765 646.6l-6.8-3.3l-4.7 2.2l6.5 3.1zM760 648.6l-6.5-3.1l-2 4.3l4.7 2.2zM767.6 672.6l-6.9-3.3l-4.6 2.2l6.4 3.2zM762.5 674.7l-6.4-3.2l-2 4.3l4.6 2.3zM770.1 698.6l-6.8-3.3l-4.7 2.2l6.5 3.2zM765.1 700.7l-6.5-3.2l-2 4.3l4.7 2.3zM772.7 724.6l-6.9-3.4l-4.6 2.2l6.4 3.2zM767.6 726.6l-6.4-3.2l-2 4.3l4.6 2.3z"/><path class="g" fill="#77a976" d="M708.7 236l3.1 8.7l4.6 2l1.6-6.5l-3.1-8.7l-4.6-2.1zM711.3 262.5l3.1 8.6l4.6 2.1l1.6-6.5l-3.1-8.7l-4.6-2.1zM713.9 289l3.1 8.6l4.6 2.1l1.6-6.6l-3.1-8.6l-4.6-2.1zM716.5 315.4l3.1 8.6l4.6 2.1l1.6-6.5l-3.1-8.7l-4.6-2.1zM719.1 341.8l3.1 8.6l4.6 2.1l1.6-6.5l-3.1-8.6l-4.6-2.2zM721.7 368.1l3 8.7l4.7 2.1l1.6-6.5l-3.1-8.6l-4.6-2.2zM724.3 394.5l3 8.6l4.7 2.1l1.6-6.4l-3.1-8.7l-4.7-2.1zM726.8 420.8l3.1 8.6l4.7 2.2l1.5-6.5l-3-8.7l-4.7-2.1zM729.4 447l3.1 8.7l4.6 2.1l1.6-6.4l-3-8.7l-4.7-2.1zM732 473.3l3.1 8.6l4.6 2.2l1.6-6.5l-3.1-8.6l-4.6-2.2zM734.6 499.5l3 8.6l4.7 2.2l1.6-6.4l-3.1-8.7l-4.6-2.1zM737.1 525.7l3.1 8.6l4.6 2.2l1.6-6.4l-3-8.7l-4.7-2.1zM739.7 551.8l3.1 8.6l4.6 2.3l1.6-6.5l-3.1-8.6l-4.6-2.2zM742.3 577.9l3 8.7l4.7 2.2l1.6-6.4l-3.1-8.6l-4.6-2.2zM744.8 604l3.1 8.6l4.6 2.3l1.6-6.4l-3-8.6l-4.7-2.2zM747.4 630.1l3.1 8.6l4.6 2.3l1.6-6.4l-3.1-8.6l-4.6-2.3zM750 656.1l3 8.6l4.6 2.3l1.6-6.4l-3-8.6l-4.7-2.2zM752.5 682.1l3.1 8.6l4.6 2.3l1.6-6.3l-3.1-8.6l-4.6-2.3zM755.1 708.1l3 8.6l4.6 2.3l1.6-6.3l-3-8.6l-4.7-2.3zM757.6 734l3.1 8.6l4.6 2.3l1.6-6.3l-3.1-8.6l-4.6-2.3z"/>
<path class="h" d="M1200 201.8l2.7-13.5l7.3-4.2l4.7 1.5l2.5 3.9l3.1 6.2l-1.8 9l-1.9 2.1l-6.9 3.9l-5.1 0.3zM1202.3 228.3l2.7-13.4l7.4-4.2l4.6 1.4l2.5 3.9l3.1 6.2l-1.8 9.1l-1.9 2l-6.9 4l-5 0.2zM1204.6 254.8l2.7-13.4l7.4-4.2l4.7 1.4l2.4 3.9l3.1 6.2l-1.8 9.1l-1.9 2l-6.9 4l-5 0.2zM1206.9 281.3l2.7-13.4l7.4-4.2l4.6 1.4l2.5 3.9l3.1 6.2l-1.8 9l-1.9 2.1l-6.9 3.9l-5 0.3zM1209.2 307.8l2.7-13.4l7.4-4.3l4.7 1.5l2.4 3.9l3.1 6.1l-1.8 9.1l-1.9 2l-6.9 4l-5 0.2zM1211.5 334.2l2.7-13.4l7.4-4.3l4.7 1.5l2.4 3.9l3.1 6.2l-1.8 9l-1.9 2l-6.9 4l-5 0.3zM1213.8 360.6l2.7-13.4l7.4-4.3l4.7 1.5l2.4 3.9l3.1 6.1l-1.8 9.1l-1.9 2l-6.9 4l-5 0.2zM1216.2 387l2.6-13.4l7.4-4.3l4.6 1.5l2.5 3.9l3.1 6.1l-1.8 9l-1.9 2l-6.9 4.1l-5 0.2zM1218.5 413.4l2.7-13.4l7.3-4.4l4.6 1.5l2.5 3.9l3.1 6.1l-1.8 9.1l-1.9 1.9l-6.9 4.1l-5 0.2zM1220.8 439.7l2.6-13.4l7.4-4.4l4.6 1.5l2.5 3.9l3.1 6.1l-1.8 9l-1.9 2l-6.9 4.1l-5 0.2zM1223 465.9l2.7-13.3l7.4-4.4l4.6 1.5l2.5 3.9l3.1 6.1l-1.8 9l-2 1.9l-6.8 4.2l-5 0.2zM1225.3 492.2l2.6-13.4l7.4-4.4l4.6 1.5l2.4 4l3.2 6l-1.8 9l-2 2l-6.8 4.1l-5 0.2zM1227.6 518.4l2.7-13.4l7.3-4.4l4.7 1.5l2.4 4l3.1 6l-1.8 9l-1.9 2l-6.8 4.1l-5 0.2zM1229.9 544.6l2.7-13.4l7.3-4.4l4.7 1.5l2.4 4l3.1 6l-1.8 9l-1.9 1.9l-6.8 4.2l-5 0.2zM1232.2 570.8l2.7-13.4l7.3-4.4l4.6 1.5l2.5 3.9l3.1 6l-1.8 9l-1.9 2l-6.9 4.1l-5 0.2zM1234.5 596.9l2.7-13.4l7.3-4.4l4.6 1.5l2.4 3.9l3.1 6.1l-1.8 8.9l-1.9 1.9l-6.8 4.2l-5 0.2zM1236.8 623l2.6-13.4l7.3-4.4l4.7 1.5l2.4 3.9l3.1 6l-1.8 9l-1.9 1.9l-6.8 4.2l-5 0.2zM1239.1 649.1l2.6-13.4l7.3-4.5l4.6 1.6l2.5 3.9l3.1 6l-1.8 9l-1.9 1.9l-6.9 4.2l-4.9 0.1zM1241.3 675.1l2.7-13.3l7.3-4.5l4.6 1.5l2.4 3.9l3.1 6l-1.8 9l-1.9 1.9l-6.8 4.2l-5 0.2zM1243.6 701.1l2.7-13.3l7.2-4.5l4.7 1.5l2.4 3.9l3.1 6l-1.8 9l-1.9 1.9l-6.8 4.2l-5 0.1z"/><path class="f" fill="#687038" d="M1200 201.8l4.6 9.2l5.1-0.3l-4.4-8.6zM1205.3 202.1l4.4 8.6l3.8-3.1l-3.1-6.3zM1202.3 228.3l4.7 9.2l5-0.2l-4.4-8.7zM1207.6 228.6l4.4 8.7l3.8-3.2l-3.1-6.2zM1204.6 254.8l4.7 9.2l5-0.2l-4.4-8.6zM1209.9 255.2l4.4 8.6l3.9-3.2l-3.2-6.2zM1206.9 281.3l4.7 9.2l5-0.3l-4.4-8.5zM1212.2 281.7l4.4 8.5l3.9-3.1l-3.2-6.2zM1209.2 307.8l4.7 9.1l5-0.2l-4.4-8.6zM1214.5 308.1l4.4 8.6l3.9-3.1l-3.2-6.2zM1211.5 334.2l4.7 9.1l5-0.2l-4.4-8.5zM1216.8 334.6l4.4 8.5l3.9-3.1l-3.2-6.2zM1213.8 360.6l4.7 9.1l5-0.2l-4.3-8.5zM1219.2 361l4.3 8.5l3.9-3.1l-3.2-6.2zM1216.2 387l4.6 9.1l5-0.2l-4.3-8.5zM1221.5 387.4l4.3 8.5l3.9-3.2l-3.2-6.1zM1218.5 413.3l4.6 9.1l5-0.2l-4.3-8.5zM1223.8 413.7l4.3 8.5l3.9-3.1l-3.2-6.1zM1220.8 439.7l4.6 9l5-0.2l-4.3-8.5zM1226.1 440l4.3 8.5l3.8-3.1l-3.1-6.1zM1223.1 465.9l4.6 9.1l5-0.3l-4.4-8.4zM1228.3 466.3l4.4 8.4l3.8-3.1l-3.1-6zM1225.3 492.2l4.7 9l5-0.2l-4.4-8.4zM1230.6 492.6l4.4 8.4l3.8-3.1l-3.1-6.1zM1227.6 518.4l4.7 9l5-0.2l-4.4-8.4zM1232.9 518.8l4.4 8.4l3.8-3.1l-3.1-6.1zM1229.9 544.6l4.7 9l4.9-0.2l-4.3-8.4zM1235.2 545l4.3 8.4l3.9-3.1l-3.1-6.1zM1232.2 570.8l4.6 8.9l5-0.2l-4.3-8.4zM1237.5 571.1l4.3 8.4l3.9-3.1l-3.1-6zM1234.5 596.9l4.6 8.9l5-0.2l-4.3-8.3zM1239.8 597.3l4.3 8.3l3.8-3.1l-3.1-6zM1236.8 623l4.6 8.9l5-0.2l-4.3-8.3zM1242.1 623.4l4.3 8.3l3.8-3.1l-3.1-6zM1239.1 649.1l4.6 8.8l4.9-0.1l-4.3-8.3zM1244.3 649.5l4.3 8.3l3.9-3.1l-3.1-6zM1241.3 675.1l4.6 8.9l5-0.2l-4.3-8.3zM1246.6 675.5l4.3 8.3l3.8-3.1l-3.1-5.9zM1243.6 701.1l4.6 8.8l5-0.1l-4.3-8.3zM1248.9 701.5l4.3 8.3l3.8-3.1l-3.1-5.9z"/><path class="f" fill="#edd2c2" d="M1210 184.1l-7.3 4.2l5.1 1.2l6.9-3.9zM1214.7 185.6l-6.9 3.9l4.4 2.8l5-2.8zM1212.4 210.7l-7.4 4.2l5.1 1.1l6.9-3.9zM1217 212.1l-6.9 3.9l4.4 2.9l5-2.9zM1214.7 237.2l-7.4 4.2l5.1 1.2l6.9-4zM1219.3 238.6l-6.9 4l4.4 2.8l5-2.9zM1217 263.7l-7.4 4.2l5.2 1.2l6.9-4zM1221.7 265.1l-6.9 4l4.3 2.8l5-2.9zM1219.3 290.1l-7.4 4.3l5.2 1.2l6.9-4zM1224 291.6l-6.9 4l4.3 2.8l5-2.9zM1221.6 316.5l-7.4 4.3l5.2 1.2l6.9-4zM1226.3 318l-6.9 4l4.3 2.8l5-2.9zM1223.9 342.9l-7.4 4.3l5.2 1.2l6.9-4zM1228.6 344.4l-6.9 4l4.3 2.8l5-2.9zM1226.2 369.3l-7.4 4.3l5.2 1.2l6.8-4zM1230.8 370.8l-6.8 4l4.3 2.8l5-2.9zM1228.5 395.6l-7.4 4.4l5.2 1.1l6.8-4zM1233.1 397.1l-6.8 4l4.3 2.8l5-2.9zM1230.8 421.9l-7.4 4.4l5.2 1.2l6.8-4.1zM1235.4 423.4l-6.8 4.1l4.3 2.8l5-3zM1233.1 448.2l-7.4 4.4l5.2 1.2l6.8-4.1zM1237.7 449.7l-6.8 4.1l4.3 2.7l5-2.9zM1235.3 474.4l-7.3 4.4l5.2 1.2l6.8-4.1zM1240 475.9l-6.8 4.1l4.3 2.8l4.9-2.9zM1237.6 500.6l-7.3 4.4l5.1 1.2l6.9-4.1zM1242.3 502.1l-6.9 4.1l4.4 2.8l4.9-2.9zM1239.9 526.8l-7.3 4.4l5.1 1.2l6.9-4.1zM1244.6 528.3l-6.9 4.1l4.4 2.8l4.9-2.9zM1242.2 553l-7.3 4.4l5.1 1.2l6.8-4.1zM1246.8 554.5l-6.8 4.1l4.4 2.8l4.9-3zM1244.5 579.1l-7.3 4.4l5.1 1.3l6.8-4.2zM1249.1 580.6l-6.8 4.2l4.3 2.7l4.9-3zM1246.7 605.2l-7.2 4.4l5.1 1.3l6.8-4.2zM1251.4 606.7l-6.8 4.2l4.3 2.7l4.9-3zM1249 631.2l-7.3 4.5l5.1 1.2l6.9-4.1zM1253.7 632.8l-6.9 4.1l4.4 2.8l4.9-3zM1251.3 657.3l-7.3 4.5l5.1 1.2l6.8-4.2zM1255.9 658.8l-6.8 4.2l4.3 2.8l4.9-3.1zM1253.5 683.3l-7.2 4.5l5.1 1.2l6.8-4.2zM1258.2 684.8l-6.8 4.2l4.3 2.8l4.9-3.1z"/><path class="f" fill="#bfcab2" d="M1202.7 188.3l-2.7 13.5l5.3 0.3l2.5-12.6zM1207.8 189.5l-2.5 12.6l5.1-0.8l1.8-9zM1205 214.9l-2.7 13.4l5.3 0.3l2.5-12.6zM1210.1 216l-2.5 12.6l5.1-0.7l1.8-9zM1207.3 241.4l-2.7 13.4l5.3 0.4l2.5-12.6zM1212.4 242.6l-2.5 12.6l5.1-0.8l1.8-9zM1209.6 267.9l-2.7 13.4l5.3 0.4l2.6-12.6zM1214.8 269.1l-2.6 12.6l5.1-0.8l1.8-9zM1211.9 294.4l-2.7 13.4l5.3 0.3l2.6-12.5zM1217.1 295.6l-2.6 12.5l5.1-0.7l1.8-9zM1214.2 320.8l-2.7 13.4l5.3 0.4l2.6-12.6zM1219.4 322l-2.6 12.6l5.1-0.8l1.8-9zM1216.5 347.2l-2.7 13.4l5.4 0.4l2.5-12.6zM1221.7 348.4l-2.5 12.6l5-0.8l1.8-9zM1218.8 373.6l-2.6 13.4l5.3 0.4l2.5-12.6zM1224 374.8l-2.5 12.6l5-0.8l1.8-9zM1221.1 400l-2.6 13.3l5.3 0.4l2.5-12.6zM1226.3 401.1l-2.5 12.6l5-0.7l1.8-9.1zM1223.4 426.3l-2.6 13.4l5.3 0.3l2.5-12.5zM1228.6 427.5l-2.5 12.5l5-0.7l1.8-9zM1225.7 452.6l-2.6 13.3l5.2 0.4l2.6-12.5zM1230.9 453.8l-2.6 12.5l5.1-0.7l1.8-9.1zM1228 478.8l-2.7 13.4l5.3 0.4l2.6-12.6zM1233.2 480l-2.6 12.6l5.1-0.8l1.8-9zM1230.3 505l-2.7 13.4l5.3 0.4l2.5-12.6zM1235.4 506.2l-2.5 12.6l5.1-0.8l1.8-9zM1232.6 531.2l-2.7 13.4l5.3 0.4l2.5-12.6zM1237.7 532.4l-2.5 12.6l5.1-0.8l1.8-9zM1234.9 557.4l-2.7 13.4l5.3 0.3l2.5-12.5zM1240 558.6l-2.5 12.5l5.1-0.7l1.8-9zM1237.2 583.5l-2.7 13.4l5.3 0.4l2.5-12.5zM1242.3 584.8l-2.5 12.5l5-0.8l1.8-9zM1239.5 609.6l-2.7 13.4l5.3 0.4l2.5-12.5zM1244.6 610.9l-2.5 12.5l5-0.8l1.8-9zM1241.7 635.7l-2.6 13.4l5.2 0.4l2.5-12.6zM1246.8 636.9l-2.5 12.6l5.1-0.8l1.8-9zM1244 661.8l-2.7 13.3l5.3 0.4l2.5-12.5zM1249.1 663l-2.5 12.5l5-0.7l1.8-9zM1246.3 687.8l-2.7 13.3l5.3 0.4l2.5-12.5zM1251.4 689l-2.5 12.5l5-0.7l1.8-9z"/><path class="g" fill="#70a978" d="M1210.4 201.3l3.1 6.3l5-2.9l1.8-9l-3.1-6.2l-5 2.8zM1212.7 227.9l3.1 6.2l5-2.8l1.8-9.1l-3.1-6.2l-5 2.9zM1215 254.4l3.2 6.2l4.9-2.8l1.8-9.1l-3.1-6.2l-5 2.9zM1217.3 280.9l3.2 6.2l4.9-2.9l1.8-9l-3.1-6.2l-5 2.9zM1219.6 307.4l3.2 6.2l4.9-2.9l1.8-9.1l-3.1-6.1l-5 2.9zM1221.9 333.8l3.2 6.2l4.9-2.9l1.8-9l-3.1-6.2l-5 2.9zM1224.2 360.2l3.2 6.2l4.9-2.9l1.8-9.1l-3.1-6.1l-5 2.9zM1226.5 386.6l3.2 6.1l4.9-2.9l1.8-9l-3.1-6.1l-5 2.9zM1228.8 413l3.2 6.1l4.9-3l1.8-9l-3.1-6.1l-5 2.9zM1231.1 439.3l3.1 6.1l5-3l1.8-9l-3.1-6.1l-5 3zM1233.4 465.6l3.1 6l5-2.9l1.8-9l-3.1-6.1l-5 2.9zM1235.7 491.8l3.1 6.1l4.9-3l1.9-9l-3.2-6l-4.9 2.9zM1238 518l3.1 6.1l4.9-3l1.8-9l-3.1-6l-4.9 2.9zM1240.3 544.2l3.1 6.1l4.9-3l1.8-9l-3.1-6l-4.9 2.9zM1242.6 570.4l3.1 6l4.9-3l1.8-9l-3.1-6l-4.9 3zM1244.8 596.5l3.1 6l4.9-3l1.8-9l-3.1-6l-4.9 3zM1247.1 622.6l3.1 6l4.9-3l1.8-9l-3.1-6l-4.9 3zM1249.4 648.7l3.1 6l4.9-3l1.8-9l-3.1-6l-4.9 3zM1251.6 674.8l3.1 5.9l4.9-3l1.8-9l-3.1-6l-4.9 3.1zM1253.9 700.8l3.1 5.9l4.9-3l1.8-9l-3.1-6l-4.9 3.1z"/>
<path class="h" d="M728.6 244.1l2.1-6.7l1.6-4.3l4.2-2.3l8.4 2.6l5.3 12.7l-3.1 10l-4.9 0.7l-7.9-2.5l-2.1-1.6zM731.2 270.7l2.1-6.7l1.6-4.4l4.2-2.3l8.3 2.7l5.3 12.6l-3 10l-4.9 0.7l-7.9-2.5l-2.1-1.6zM733.8 297.2l2.1-6.7l1.5-4.3l4.3-2.4l8.3 2.7l5.3 12.7l-3.1 9.9l-4.8 0.7l-7.9-2.5l-2.1-1.6zM736.4 323.6l2.1-6.6l1.5-4.4l4.3-2.3l8.3 2.7l5.3 12.6l-3.1 10l-4.9 0.7l-7.8-2.5l-2.1-1.6zM739 350.1l2.1-6.7l1.5-4.3l4.2-2.3l8.4 2.7l5.3 12.6l-3.1 9.9l-4.9 0.8l-7.8-2.6l-2.2-1.6zM741.6 376.5l2-6.7l1.6-4.3l4.2-2.3l8.4 2.7l5.2 12.6l-3 9.9l-4.9 0.8l-7.8-2.6l-2.2-1.6zM744.1 402.9l2-6.7l1.6-4.3l4.2-2.3l8.3 2.7l5.3 12.6l-3.1 9.9l-4.8 0.8l-7.9-2.6l-2.1-1.6zM746.7 429.2l2.1-6.6l1.6-4.3l4.2-2.4l8.3 2.8l5.3 12.6l-3.1 9.9l-4.9 0.7l-7.8-2.6l-2.1-1.6zM749.3 455.5l2.1-6.6l1.5-4.3l4.2-2.4l8.4 2.8l5.3 12.6l-3.1 9.9l-4.9 0.7l-7.8-2.6l-2.2-1.6zM751.9 481.8l2-6.6l1.6-4.3l4.2-2.4l8.3 2.8l5.3 12.7l-3.1 9.8l-4.8 0.7l-7.8-2.6l-2.2-1.6zM754.4 508.1l2.1-6.6l1.6-4.3l4.2-2.4l8.3 2.8l5.3 12.6l-3.1 9.8l-4.9 0.8l-7.8-2.7l-2.1-1.5zM757 534.3l2.1-6.6l1.5-4.3l4.2-2.4l8.4 2.9l5.2 12.6l-3.1 9.7l-4.8 0.8l-7.8-2.6l-2.2-1.6zM759.6 560.5l2-6.5l1.6-4.4l4.2-2.4l8.3 2.9l5.3 12.6l-3.1 9.7l-4.9 0.8l-7.8-2.7l-2.1-1.5zM762.1 586.7l2.1-6.6l1.6-4.3l4.1-2.4l8.4 2.9l5.2 12.6l-3.1 9.7l-4.8 0.8l-7.8-2.7l-2.1-1.5zM764.7 612.8l2.1-6.5l1.5-4.4l4.2-2.3l8.3 2.8l5.3 12.6l-3.1 9.7l-4.9 0.8l-7.8-2.7l-2.1-1.5zM767.2 638.9l2.1-6.5l1.5-4.3l4.2-2.4l8.4 2.9l5.2 12.6l-3.1 9.6l-4.8 0.8l-7.8-2.7l-2.1-1.5zM769.8 665l2-6.5l1.6-4.4l4.2-2.3l8.3 2.9l5.3 12.5l-3.1 9.7l-4.9 0.8l-7.8-2.7l-2.1-1.5zM772.3 691l2.1-6.4l1.6-4.4l4.1-2.4l8.3 2.9l5.3 12.6l-3.1 9.7l-4.8 0.8l-7.8-2.8l-2.1-1.5zM774.9 717.1l2-6.5l1.6-4.4l4.2-2.4l8.3 3l5.2 12.6l-3.1 9.6l-4.8 0.8l-7.8-2.8l-2.1-1.5zM777.4 743l2.1-6.4l1.5-4.4l4.2-2.4l8.3 3l5.3 12.6l-3.1 9.6l-4.9 0.8l-7.7-2.8l-2.2-1.5z"/><path class="f" fill="#687038" d="M747.1 256.1l3.1-10l-5.1 1.3l-2.9 9.4zM742.2 256.8l2.9-9.4l-5.2 0.3l-2.1 6.8zM749.7 282.6l3-10l-5 1.4l-2.9 9.3zM744.8 283.3l2.9-9.3l-5.2 0.3l-2.1 6.7zM752.2 309.1l3.1-9.9l-5.1 1.3l-2.8 9.3zM747.4 309.8l2.8-9.3l-5.1 0.3l-2.1 6.7zM754.8 335.6l3.1-9.9l-5.1 1.3l-2.9 9.3zM749.9 336.3l2.9-9.3l-5.1 0.3l-2.1 6.7zM757.4 362l3.1-9.9l-5.1 1.4l-2.9 9.3zM752.5 362.8l2.9-9.3l-5.2 0.3l-2 6.6zM760 388.4l3-9.9l-5 1.4l-2.9 9.3zM755.1 389.2l2.9-9.3l-5.2 0.3l-2.1 6.7zM762.5 414.8l3.1-9.9l-5.1 1.4l-2.8 9.3zM757.7 415.6l2.8-9.3l-5.1 0.3l-2.1 6.6zM765.1 441.2l3.1-9.9l-5.1 1.4l-2.9 9.2zM760.2 441.9l2.9-9.2l-5.1 0.3l-2.1 6.6zM767.7 467.5l3-9.9l-5 1.4l-2.9 9.2zM762.8 468.2l2.9-9.2l-5.2 0.3l-2 6.6zM770.2 493.8l3.1-9.9l-5.1 1.4l-2.8 9.2zM765.4 494.5l2.8-9.2l-5.1 0.3l-2.1 6.6zM772.8 520l3.1-9.8l-5.1 1.4l-2.9 9.2zM767.9 520.8l2.9-9.2l-5.1 0.3l-2.1 6.6zM775.3 546.2l3.1-9.7l-5 1.4l-2.9 9.1zM770.5 547l2.9-9.1l-5.2 0.2l-2 6.6zM777.9 572.4l3.1-9.7l-5.1 1.4l-2.9 9.1zM773 573.2l2.9-9.1l-5.1 0.3l-2.1 6.5zM780.4 598.6l3.1-9.7l-5 1.4l-2.9 9.1zM775.6 599.4l2.9-9.1l-5.2 0.2l-2 6.6zM783 624.7l3.1-9.7l-5.1 1.4l-2.9 9.1zM778.1 625.5l2.9-9.1l-5.1 0.3l-2.1 6.5zM785.5 650.8l3.1-9.6l-5 1.4l-2.9 9zM780.7 651.6l2.9-9l-5.2 0.2l-2 6.5zM788.1 676.9l3-9.7l-5 1.5l-2.9 9zM783.2 677.7l2.9-9l-5.1 0.2l-2.1 6.5zM790.6 703l3.1-9.7l-5 1.4l-2.9 9.1zM785.8 703.8l2.9-9.1l-5.2 0.3l-2 6.5zM793.1 729l3.1-9.7l-5 1.5l-2.9 9zM788.3 729.8l2.9-9l-5.1 0.2l-2.1 6.5zM795.7 754.9l3-9.5l-5 1.4l-2.9 9zM790.8 755.8l2.9-9l-5.1 0.2l-2.1 6.5z"/><path class="f" fill="#bfcab2" d="M750.2 246.1l-5.3-12.7l-4.8 2.2l5 11.8zM745.1 247.4l-5-11.8l-3.8 3.6l3.6 8.5zM752.7 272.6l-5.2-12.6l-4.8 2.1l5 11.9zM747.7 274l-5-11.9l-3.8 3.6l3.6 8.6zM755.3 299.2l-5.3-12.7l-4.7 2.2l4.9 11.8zM750.2 300.5l-4.9-11.8l-3.8 3.6l3.6 8.5zM757.9 325.7l-5.3-12.7l-4.7 2.2l4.9 11.8zM752.8 327l-4.9-11.8l-3.8 3.6l3.6 8.5zM760.5 352.1l-5.3-12.6l-4.7 2.1l4.9 11.9zM755.4 353.5l-4.9-11.9l-3.8 3.6l3.5 8.6zM763 378.5l-5.2-12.6l-4.8 2.2l5 11.8zM758 379.9l-5-11.8l-3.7 3.6l3.5 8.5zM765.6 404.9l-5.3-12.6l-4.7 2.2l4.9 11.8zM760.5 406.3l-4.9-11.8l-3.8 3.6l3.6 8.5zM768.2 431.3l-5.3-12.6l-4.7 2.2l4.9 11.8zM763.1 432.7l-4.9-11.8l-3.8 3.6l3.6 8.5zM770.7 457.6l-5.2-12.6l-4.8 2.2l5 11.8zM765.7 459l-5-11.8l-3.7 3.6l3.5 8.5zM773.3 483.9l-5.3-12.6l-4.7 2.2l4.9 11.8zM768.2 485.3l-4.9-11.8l-3.7 3.6l3.5 8.5zM775.9 510.2l-5.3-12.6l-4.7 2.2l4.9 11.8zM770.8 511.6l-4.9-11.8l-3.8 3.6l3.6 8.5zM778.4 536.5l-5.2-12.6l-4.8 2.2l5 11.8zM773.4 537.9l-5-11.8l-3.7 3.5l3.5 8.5zM781 562.7l-5.3-12.6l-4.7 2.2l4.9 11.8zM775.9 564.1l-4.9-11.8l-3.8 3.6l3.6 8.5zM783.5 588.9l-5.2-12.6l-4.8 2.2l5 11.8zM778.5 590.3l-5-11.8l-3.7 3.6l3.5 8.4zM786.1 615l-5.3-12.6l-4.7 2.2l4.9 11.8zM781 616.4l-4.9-11.8l-3.7 3.6l3.5 8.5zM788.6 641.2l-5.2-12.6l-4.8 2.2l5 11.8zM783.6 642.6l-5-11.8l-3.7 3.5l3.5 8.5zM791.1 667.2l-5.2-12.5l-4.7 2.2l4.9 11.8zM786.1 668.7l-4.9-11.8l-3.7 3.5l3.5 8.5zM793.7 693.3l-5.3-12.6l-4.7 2.2l5 11.8zM788.7 694.7l-5-11.8l-3.7 3.6l3.5 8.5zM796.2 719.3l-5.2-12.5l-4.7 2.2l4.9 11.8zM791.2 720.8l-4.9-11.8l-3.8 3.6l3.6 8.4zM798.7 745.4l-5.2-12.6l-4.7 2.2l4.9 11.8zM793.7 746.8l-4.9-11.8l-3.7 3.6l3.5 8.4z"/><path class="f" fill="#edd2c2" d="M744.9 233.4l-8.4-2.6l-4.2 2.3l7.8 2.5zM740.1 235.6l-7.8-2.5l-1.6 4.3l5.6 1.8zM747.5 260l-8.4-2.7l-4.2 2.3l7.8 2.5zM742.7 262.1l-7.8-2.5l-1.6 4.4l5.6 1.7zM750 286.5l-8.3-2.7l-4.2 2.4l7.8 2.5zM745.3 288.7l-7.8-2.5l-1.6 4.3l5.6 1.8zM752.6 313l-8.3-2.7l-4.3 2.3l7.9 2.6zM747.9 315.2l-7.9-2.6l-1.5 4.4l5.6 1.8zM755.2 339.5l-8.4-2.7l-4.2 2.3l7.9 2.5zM750.5 341.6l-7.9-2.5l-1.5 4.3l5.6 1.8zM757.8 365.9l-8.4-2.7l-4.2 2.3l7.8 2.6zM753 368.1l-7.8-2.6l-1.6 4.3l5.7 1.9zM760.3 392.3l-8.3-2.7l-4.2 2.3l7.8 2.6zM755.6 394.5l-7.8-2.6l-1.6 4.3l5.6 1.9zM762.9 418.7l-8.3-2.8l-4.2 2.4l7.8 2.6zM758.2 420.9l-7.8-2.6l-1.6 4.3l5.6 1.9zM765.5 445l-8.4-2.8l-4.2 2.4l7.8 2.6zM760.7 447.2l-7.8-2.6l-1.5 4.3l5.6 1.9zM768 471.3l-8.3-2.8l-4.2 2.4l7.8 2.6zM763.3 473.5l-7.8-2.6l-1.6 4.3l5.7 1.9zM770.6 497.6l-8.3-2.8l-4.2 2.4l7.8 2.6zM765.9 499.8l-7.8-2.6l-1.6 4.3l5.6 1.9zM773.2 523.9l-8.4-2.9l-4.2 2.4l7.8 2.7zM768.4 526.1l-7.8-2.7l-1.5 4.3l5.6 1.9zM775.7 550.1l-8.3-2.9l-4.2 2.4l7.8 2.7zM771 552.3l-7.8-2.7l-1.6 4.3l5.6 2zM778.3 576.3l-8.4-2.9l-4.2 2.4l7.8 2.7zM773.5 578.5l-7.8-2.7l-1.5 4.3l5.6 2zM780.8 602.4l-8.3-2.8l-4.2 2.3l7.8 2.7zM776.1 604.6l-7.8-2.7l-1.6 4.4l5.7 1.9zM783.4 628.6l-8.4-2.9l-4.1 2.4l7.7 2.7zM778.6 630.8l-7.7-2.7l-1.6 4.3l5.6 1.9zM785.9 654.7l-8.3-2.9l-4.2 2.3l7.8 2.8zM781.2 656.9l-7.8-2.8l-1.6 4.4l5.7 1.9zM788.4 680.7l-8.3-2.9l-4.2 2.4l7.8 2.7zM783.7 682.9l-7.8-2.7l-1.5 4.3l5.6 2zM791 706.8l-8.3-3l-4.2 2.4l7.8 2.8zM786.3 709l-7.8-2.8l-1.6 4.4l5.6 2zM793.5 732.8l-8.3-3l-4.2 2.4l7.8 2.8zM788.8 735l-7.8-2.8l-1.5 4.4l5.6 2z"/><path class="g" fill="#6da978" d="M728.6 244.1l3.6 8.6l5.6 1.8l2.1-6.8l-3.6-8.5l-5.6-1.8zM731.2 270.7l3.6 8.5l5.6 1.8l2.1-6.7l-3.6-8.6l-5.6-1.7zM733.8 297.2l3.6 8.5l5.6 1.8l2.1-6.7l-3.6-8.5l-5.6-1.8zM736.4 323.6l3.6 8.6l5.6 1.8l2.1-6.7l-3.6-8.5l-5.6-1.8zM739 350.1l3.5 8.5l5.7 1.8l2-6.6l-3.5-8.6l-5.6-1.8zM741.6 376.5l3.5 8.5l5.6 1.9l2.1-6.7l-3.5-8.5l-5.7-1.9zM744.1 402.9l3.6 8.5l5.6 1.8l2.1-6.6l-3.6-8.5l-5.6-1.9zM746.7 429.2l3.6 8.5l5.6 1.9l2.1-6.6l-3.6-8.5l-5.6-1.9zM749.3 455.5l3.5 8.5l5.7 1.9l2-6.6l-3.5-8.5l-5.6-1.9zM751.9 481.8l3.5 8.5l5.6 1.9l2.1-6.6l-3.5-8.5l-5.7-1.9zM754.4 508.1l3.6 8.5l5.6 1.9l2.1-6.6l-3.6-8.5l-5.6-1.9zM757 534.3l3.5 8.5l5.7 1.9l2-6.6l-3.5-8.5l-5.6-1.9zM759.6 560.5l3.5 8.5l5.6 1.9l2.1-6.5l-3.6-8.5l-5.6-2zM762.1 586.7l3.6 8.5l5.6 1.9l2-6.6l-3.5-8.4l-5.6-2zM764.7 612.8l3.5 8.5l5.6 1.9l2.1-6.5l-3.5-8.5l-5.7-1.9zM767.2 638.9l3.6 8.5l5.6 1.9l2-6.5l-3.5-8.5l-5.6-1.9zM769.8 665l3.5 8.5l5.6 1.9l2.1-6.5l-3.5-8.5l-5.7-1.9zM772.3 691l3.6 8.5l5.6 2l2-6.5l-3.5-8.5l-5.6-2zM774.9 717.1l3.5 8.4l5.6 2l2.1-6.5l-3.6-8.4l-5.6-2zM777.4 743l3.5 8.5l5.6 2l2.1-6.5l-3.5-8.4l-5.6-2z"/>
<path class="h" d="M1177.1 212.4l3.4-13.3l8.8-4l4.2 1.6l5.1 8.8l0.6 1.6l-2.3 8.9l-1.5 2l-8.2 3.7l-4.7 0.1zM1179.5 239l3.4-13.3l8.8-4l4.2 1.6l5 8.7l0.6 1.6l-2.3 9l-1.5 2l-8.2 3.7l-4.6 0.1zM1181.8 265.6l3.4-13.3l8.8-4.1l4.2 1.7l5 8.7l0.6 1.6l-2.3 9l-1.5 1.9l-8.2 3.8l-4.6 0zM1184.1 292.1l3.4-13.3l8.8-4l4.2 1.6l5.1 8.7l0.5 1.6l-2.3 9l-1.4 1.9l-8.2 3.8l-4.7 0zM1186.5 318.6l3.4-13.3l8.7-4.1l4.2 1.7l5.1 8.7l0.5 1.6l-2.2 9l-1.5 1.9l-8.2 3.8l-4.7 0zM1188.8 345.1l3.4-13.3l8.8-4.1l4.2 1.7l5 8.6l0.6 1.6l-2.3 9l-1.5 1.9l-8.2 3.8l-4.6 0.1zM1191.1 371.6l3.4-13.4l8.8-4.1l4.2 1.7l5 8.7l0.6 1.6l-2.3 8.9l-1.5 1.9l-8.2 3.9l-4.6 0zM1193.4 398l3.4-13.4l8.8-4.1l4.2 1.7l5 8.6l0.6 1.7l-2.3 8.9l-1.5 1.9l-8.2 3.9l-4.6 0zM1195.8 424.4l3.4-13.4l8.7-4.1l4.2 1.7l5 8.6l0.6 1.6l-2.3 9l-1.5 1.9l-8.2 3.8l-4.6 0zM1198.1 450.7l3.4-13.3l8.7-4.1l4.2 1.7l5 8.5l0.6 1.7l-2.3 8.9l-1.5 1.9l-8.2 3.9l-4.6-0.1zM1200.4 477l3.4-13.3l8.7-4.1l4.2 1.7l5 8.5l0.6 1.7l-2.3 8.9l-1.5 1.9l-8.1 3.9l-4.7 0zM1202.7 503.3l3.4-13.3l8.7-4.2l4.2 1.8l5 8.5l0.6 1.7l-2.3 8.9l-1.5 1.8l-8.1 3.9l-4.7 0zM1205 529.6l3.4-13.3l8.7-4.2l4.2 1.7l5 8.5l0.6 1.7l-2.3 9l-1.5 1.8l-8.1 3.9l-4.6 0zM1207.3 555.8l3.4-13.3l8.7-4.2l4.2 1.7l5 8.5l0.6 1.7l-2.3 9l-1.5 1.8l-8.1 3.9l-4.7 0zM1209.6 582l3.4-13.3l8.7-4.2l4.2 1.7l5 8.5l0.5 1.7l-2.2 8.9l-1.5 1.9l-8.1 3.9l-4.6-0.1zM1211.9 608.2l3.4-13.3l8.7-4.2l4.2 1.7l5 8.5l0.5 1.7l-2.2 8.9l-1.5 1.8l-8.1 3.9l-4.7 0zM1214.2 634.3l3.4-13.3l8.7-4.2l4.2 1.7l4.9 8.5l0.6 1.7l-2.3 8.9l-1.4 1.8l-8.1 4l-4.7-0.1zM1216.5 660.4l3.4-13.2l8.7-4.3l4.2 1.7l4.9 8.5l0.6 1.7l-2.3 8.9l-1.4 1.8l-8.2 4l-4.6-0.1zM1218.8 686.5l3.4-13.3l8.6-4.2l4.2 1.7l5 8.4l0.6 1.7l-2.3 9l-1.5 1.7l-8.1 4l-4.6 0zM1221.1 712.5l3.4-13.2l8.6-4.3l4.2 1.8l5 8.4l0.5 1.7l-2.2 8.9l-1.5 1.8l-8.1 4l-4.6-0.1z"/><path class="f" fill="#687038" d="M1177.1 212.4l5.4 9.4l4.7-0.1l-5.1-8.7zM1182.1 213l5.1 8.7l3.7-2.9l-3.6-6.3zM1179.5 239l5.4 9.4l4.6-0.1l-5.1-8.7zM1184.4 239.6l5.1 8.7l3.8-3l-3.7-6.2zM1181.8 265.6l5.4 9.3l4.6 0l-5-8.7zM1186.8 266.2l5 8.7l3.8-3l-3.6-6.3zM1184.1 292.1l5.4 9.3l4.7 0l-5.1-8.7zM1189.1 292.7l5.1 8.7l3.7-3l-3.6-6.2zM1186.5 318.6l5.3 9.3l4.7 0l-5.1-8.7zM1191.4 319.2l5.1 8.7l3.7-3l-3.6-6.2zM1188.8 345.1l5.4 9.2l4.6 0l-5-8.6zM1193.8 345.7l5 8.6l3.8-2.9l-3.7-6.2zM1191.1 371.6l5.4 9.2l4.6 0l-5-8.7zM1196.1 372.1l5 8.7l3.8-3l-3.6-6.2zM1193.4 398l5.4 9.2l4.6 0l-5-8.6zM1198.4 398.6l5 8.6l3.8-3l-3.6-6.2zM1195.8 424.3l5.3 9.2l4.6 0l-5-8.6zM1200.7 424.9l5 8.6l3.8-2.9l-3.6-6.2zM1198.1 450.7l5.3 9.2l4.7 0l-5.1-8.6zM1203 451.3l5.1 8.6l3.7-3l-3.6-6.1zM1200.4 477l5.3 9.2l4.7 0l-5.1-8.6zM1205.3 477.6l5.1 8.6l3.7-3l-3.6-6.1zM1202.7 503.3l5.3 9.1l4.7 0.1l-5-8.6zM1207.7 503.9l5 8.6l3.7-3l-3.6-6.1zM1205 529.6l5.4 9.1l4.6 0l-5-8.5zM1210 530.2l5 8.5l3.7-2.9l-3.6-6.2zM1207.3 555.8l5.4 9.1l4.6 0l-5-8.5zM1212.3 556.4l5 8.5l3.7-2.9l-3.6-6.1zM1209.6 582l5.4 9l4.6 0.1l-5-8.5zM1214.6 582.6l5 8.5l3.7-2.9l-3.6-6.1zM1211.9 608.2l5.3 9l4.7 0.1l-5-8.5zM1216.9 608.8l5 8.5l3.7-3l-3.6-6zM1214.2 634.3l5.3 9l4.6 0.1l-4.9-8.5zM1219.2 634.9l4.9 8.5l3.8-2.9l-3.6-6.1zM1216.5 660.4l5.3 9l4.6 0.1l-4.9-8.5zM1221.5 661l4.9 8.5l3.8-2.9l-3.6-6.1zM1218.8 686.5l5.3 9l4.6 0l-5-8.4zM1223.7 687.1l5 8.4l3.8-2.9l-3.6-6zM1221.1 712.5l5.3 9l4.6 0.1l-5-8.4zM1226 713.2l5 8.4l3.7-2.9l-3.5-6.1z"/><path class="f" fill="#edd2c2" d="M1189.3 195.1l-8.8 4l4.8 1.4l8.2-3.8zM1193.5 196.7l-8.2 3.8l4.3 3l5.9-2.7zM1191.7 221.7l-8.8 4l4.7 1.4l8.3-3.8zM1195.9 223.3l-8.3 3.8l4.3 3l6-2.7zM1194 248.2l-8.8 4.1l4.8 1.4l8.2-3.8zM1198.2 249.9l-8.2 3.8l4.3 2.9l5.9-2.7zM1196.3 274.7l-8.8 4.1l4.8 1.4l8.2-3.8zM1200.5 276.4l-8.2 3.8l4.3 3l5.9-2.7zM1198.6 301.2l-8.7 4.1l4.7 1.4l8.2-3.8zM1202.8 302.9l-8.2 3.8l4.3 3l5.9-2.7zM1201 327.7l-8.8 4.1l4.7 1.4l8.3-3.8zM1205.2 329.4l-8.3 3.8l4.3 3l5.9-2.8zM1203.3 354.1l-8.8 4.1l4.8 1.5l8.2-3.9zM1207.5 355.8l-8.2 3.9l4.2 2.9l5.9-2.7zM1205.6 380.5l-8.8 4.1l4.8 1.5l8.2-3.9zM1209.8 382.2l-8.2 3.9l4.3 3l5.9-2.8zM1207.9 406.9l-8.8 4.1l4.8 1.5l8.2-3.9zM1212.1 408.6l-8.2 3.9l4.3 2.9l5.9-2.7zM1210.2 433.3l-8.7 4.1l4.7 1.4l8.2-3.8zM1214.4 435l-8.2 3.8l4.3 3l5.9-2.8zM1212.5 459.6l-8.7 4.1l4.7 1.5l8.2-3.9zM1216.7 461.3l-8.2 3.9l4.3 2.9l5.9-2.8zM1214.8 485.9l-8.7 4.1l4.7 1.5l8.2-3.9zM1219 487.6l-8.2 3.9l4.3 2.9l5.9-2.8zM1217.1 512.1l-8.7 4.2l4.7 1.4l8.2-3.9zM1221.3 513.8l-8.2 3.9l4.3 3l5.9-2.8zM1219.4 538.3l-8.7 4.2l4.7 1.5l8.2-4zM1223.6 540l-8.2 4l4.3 2.9l5.9-2.8zM1221.7 564.5l-8.7 4.2l4.7 1.5l8.2-4zM1225.9 566.2l-8.2 4l4.3 2.9l5.9-2.8zM1224 590.7l-8.7 4.2l4.7 1.5l8.2-4zM1228.2 592.4l-8.2 4l4.3 2.9l5.8-2.8zM1226.3 616.8l-8.7 4.2l4.7 1.5l8.2-4zM1230.5 618.5l-8.2 4l4.3 3l5.8-2.9zM1228.6 642.9l-8.7 4.2l4.7 1.5l8.1-4zM1232.7 644.6l-8.1 4l4.3 3l5.8-2.9zM1230.8 669l-8.6 4.2l4.7 1.5l8.1-4zM1235 670.7l-8.1 4l4.3 3l5.8-2.9zM1233.1 695l-8.6 4.3l4.7 1.5l8.1-4zM1237.3 696.8l-8.1 4l4.2 2.9l5.9-2.9z"/><path class="f" fill="#bfcab2" d="M1180.5 199.1l-3.4 13.3l5 0.6l3.2-12.5zM1185.3 200.5l-3.2 12.5l5.2-0.5l2.3-9zM1182.9 225.7l-3.4 13.3l4.9 0.6l3.2-12.5zM1187.6 227.1l-3.2 12.5l5.2-0.5l2.3-9zM1185.2 252.3l-3.4 13.3l5 0.6l3.2-12.5zM1190 253.7l-3.2 12.5l5.2-0.6l2.3-9zM1187.5 278.8l-3.4 13.3l5 0.6l3.2-12.5zM1192.3 280.2l-3.2 12.5l5.2-0.5l2.3-9zM1189.9 305.3l-3.4 13.3l4.9 0.6l3.2-12.5zM1194.6 306.7l-3.2 12.5l5.2-0.5l2.3-9zM1192.2 331.8l-3.4 13.3l5 0.6l3.1-12.5zM1196.9 333.2l-3.1 12.5l5.1-0.5l2.3-9zM1194.5 358.2l-3.4 13.4l5 0.5l3.2-12.4zM1199.3 359.7l-3.2 12.4l5.2-0.5l2.2-9zM1196.8 384.6l-3.4 13.4l5 0.6l3.2-12.5zM1201.6 386.1l-3.2 12.5l5.2-0.6l2.3-8.9zM1199.1 411l-3.3 13.3l4.9 0.6l3.2-12.4zM1203.9 412.5l-3.2 12.4l5.2-0.5l2.3-9zM1201.5 437.4l-3.4 13.3l4.9 0.6l3.2-12.5zM1206.2 438.8l-3.2 12.5l5.2-0.5l2.3-9zM1203.8 463.7l-3.4 13.3l4.9 0.6l3.2-12.4zM1208.5 465.2l-3.2 12.4l5.2-0.5l2.3-9zM1206.1 490l-3.4 13.3l5 0.6l3.1-12.4zM1210.8 491.5l-3.1 12.4l5.1-0.5l2.3-9zM1208.4 516.3l-3.4 13.3l5 0.6l3.1-12.5zM1213.1 517.7l-3.1 12.5l5.1-0.6l2.3-8.9zM1210.7 542.5l-3.4 13.3l5 0.6l3.1-12.4zM1215.4 544l-3.1 12.4l5.1-0.5l2.3-9zM1213 568.7l-3.4 13.3l5 0.6l3.1-12.4zM1217.7 570.2l-3.1 12.4l5.1-0.5l2.3-9zM1215.3 594.9l-3.4 13.3l5 0.6l3.1-12.4zM1220 596.4l-3.1 12.4l5.1-0.5l2.3-9zM1217.6 621l-3.4 13.3l5 0.6l3.1-12.4zM1222.3 622.5l-3.1 12.4l5.1-0.5l2.3-8.9zM1219.9 647.1l-3.4 13.3l5 0.6l3.1-12.4zM1224.6 648.6l-3.1 12.4l5.1-0.5l2.3-8.9zM1222.2 673.2l-3.4 13.3l4.9 0.6l3.2-12.4zM1226.9 674.7l-3.2 12.4l5.2-0.5l2.3-8.9zM1224.5 699.3l-3.4 13.2l4.9 0.7l3.2-12.4zM1229.2 700.8l-3.2 12.4l5.2-0.6l2.2-8.9z"/><path class="g" fill="#65a879" d="M1187.3 212.5l3.6 6.3l6-2.8l2.3-8.9l-3.7-6.3l-5.9 2.7zM1189.6 239.1l3.7 6.2l5.9-2.7l2.3-9l-3.6-6.2l-6 2.7zM1192 265.6l3.6 6.3l5.9-2.7l2.3-9l-3.6-6.3l-5.9 2.7zM1194.3 292.2l3.6 6.2l5.9-2.7l2.3-9l-3.6-6.2l-5.9 2.7zM1196.6 318.7l3.6 6.2l5.9-2.7l2.3-9l-3.6-6.2l-5.9 2.7zM1198.9 345.2l3.7 6.2l5.9-2.8l2.2-8.9l-3.6-6.3l-5.9 2.8zM1201.3 371.6l3.6 6.2l5.9-2.7l2.3-9l-3.7-6.2l-5.9 2.7zM1203.6 398l3.6 6.2l5.9-2.8l2.3-8.9l-3.6-6.2l-5.9 2.8zM1205.9 424.4l3.6 6.2l5.9-2.8l2.3-9l-3.6-6.1l-5.9 2.7zM1208.2 450.8l3.6 6.1l5.9-2.8l2.3-8.9l-3.6-6.2l-5.9 2.8zM1210.5 477.1l3.6 6.1l5.9-2.8l2.3-8.9l-3.6-6.2l-5.9 2.8zM1212.8 503.4l3.6 6.1l5.9-2.8l2.3-8.9l-3.6-6.2l-5.9 2.8zM1215.1 529.6l3.6 6.2l5.9-2.8l2.3-9l-3.6-6.1l-5.9 2.8zM1217.4 555.9l3.6 6.1l5.9-2.8l2.3-9l-3.6-6.1l-5.9 2.8zM1219.7 582.1l3.6 6.1l5.9-2.9l2.2-8.9l-3.5-6.1l-5.9 2.8zM1222 608.3l3.6 6l5.9-2.8l2.2-8.9l-3.6-6.1l-5.8 2.8zM1224.3 634.4l3.6 6.1l5.8-2.9l2.3-8.9l-3.6-6.1l-5.8 2.9zM1226.6 660.5l3.6 6.1l5.8-2.9l2.3-8.9l-3.6-6.1l-5.8 2.9zM1228.9 686.6l3.6 6l5.8-2.8l2.3-9l-3.6-6l-5.8 2.9zM1231.2 712.6l3.5 6.1l5.9-2.9l2.2-8.9l-3.5-6.1l-5.9 2.9z"/>
<path class="h" d="M752.4 251.1l0.1-1.7l3.5-9.6l3.8-2.4l9.6 2.2l6 12.4l-3.8 10.3l-4.4 0.9l-9.1-2.1l-1.7-1.6zM755 277.7l0.1-1.7l3.5-9.6l3.7-2.4l9.7 2.2l6 12.4l-3.8 10.3l-4.4 0.8l-9.1-2.1l-1.7-1.6zM757.6 304.2l0.1-1.6l3.5-9.6l3.7-2.4l9.7 2.2l5.9 12.4l-3.7 10.2l-4.5 0.9l-9-2.1l-1.7-1.6zM760.2 330.7l0.1-1.6l3.5-9.6l3.7-2.4l9.7 2.2l5.9 12.4l-3.7 10.2l-4.5 0.9l-9.1-2.1l-1.6-1.6zM762.8 357.2l0.1-1.7l3.5-9.5l3.7-2.4l9.6 2.2l6 12.4l-3.8 10.2l-4.4 0.9l-9.1-2.1l-1.6-1.6zM765.3 383.7l0.1-1.7l3.5-9.5l3.7-2.5l9.7 2.3l5.9 12.4l-3.7 10.1l-4.5 0.9l-9-2.1l-1.7-1.6zM767.9 410.1l0.1-1.7l3.5-9.5l3.7-2.5l9.7 2.3l5.9 12.4l-3.8 10.1l-4.4 1l-9-2.2l-1.7-1.6zM770.5 436.5l0.1-1.7l3.5-9.5l3.7-2.5l9.6 2.3l6 12.4l-3.8 10.1l-4.4 0.9l-9.1-2.1l-1.6-1.6zM773 462.8l0.1-1.7l3.5-9.4l3.7-2.5l9.7 2.3l5.9 12.4l-3.7 10.1l-4.5 0.9l-9-2.2l-1.7-1.5zM775.6 489.2l0.1-1.8l3.5-9.4l3.7-2.4l9.6 2.3l5.9 12.4l-3.7 10l-4.4 0.9l-9.1-2.2l-1.6-1.5zM778.2 515.5l0.1-1.7l3.5-9.5l3.6-2.5l9.7 2.4l5.9 12.4l-3.7 10l-4.5 0.9l-9-2.2l-1.7-1.5zM780.7 541.7l0.1-1.7l3.5-9.4l3.7-2.5l9.6 2.4l5.9 12.4l-3.7 10l-4.4 0.9l-9.1-2.2l-1.6-1.5zM783.3 568l0.1-1.8l3.5-9.3l3.6-2.5l9.7 2.3l5.9 12.4l-3.8 10l-4.4 0.9l-9-2.2l-1.7-1.5zM785.8 594.2l0.1-1.8l3.5-9.3l3.7-2.5l9.6 2.4l5.9 12.3l-3.7 10l-4.4 1l-9.1-2.3l-1.6-1.5zM788.4 620.4l0.1-1.8l3.5-9.3l3.6-2.5l9.6 2.4l6 12.3l-3.8 10l-4.4 0.9l-9-2.2l-1.7-1.5zM790.9 646.5l0.1-1.7l3.5-9.4l3.7-2.5l9.6 2.4l5.9 12.4l-3.7 9.9l-4.5 1l-9-2.3l-1.6-1.5zM793.5 672.6l0.1-1.7l3.5-9.3l3.7-2.5l9.6 2.4l5.9 12.3l-3.7 10l-4.4 0.9l-9-2.3l-1.7-1.4zM796 698.7l0.1-1.7l3.5-9.3l3.6-2.5l9.6 2.4l6 12.3l-3.8 9.9l-4.4 1l-9-2.3l-1.6-1.5zM798.5 724.8l0.1-1.8l3.5-9.3l3.7-2.5l9.6 2.5l5.9 12.3l-3.8 9.9l-4.4 0.9l-9-2.2l-1.6-1.5zM801 750.8l0.1-1.8l3.5-9.2l3.7-2.6l9.6 2.5l5.9 12.3l-3.8 9.9l-4.3 1l-9.1-2.3l-1.6-1.5z"/><path class="f" fill="#687038" d="M771.6 262.3l3.8-10.3l-4.7 1.5l-3.5 9.6zM767.2 263.1l3.5-9.6l-5.2 0.5l-2.5 6.9zM774.2 288.9l3.8-10.3l-4.7 1.5l-3.5 9.6zM769.8 289.7l3.5-9.6l-5.2 0.5l-2.6 6.9zM776.8 315.4l3.7-10.2l-4.6 1.5l-3.6 9.6zM772.3 316.3l3.6-9.6l-5.3 0.5l-2.5 6.9zM779.4 341.9l3.7-10.2l-4.7 1.5l-3.5 9.6zM774.9 342.8l3.5-9.6l-5.2 0.5l-2.5 6.9zM781.9 368.4l3.8-10.2l-4.7 1.6l-3.5 9.5zM777.5 369.3l3.5-9.5l-5.2 0.4l-2.5 6.9zM784.5 394.8l3.7-10.1l-4.6 1.5l-3.6 9.5zM780 395.7l3.6-9.5l-5.2 0.5l-2.6 6.9zM787 421.3l3.8-10.2l-4.7 1.6l-3.5 9.5zM782.6 422.2l3.5-9.5l-5.2 0.5l-2.5 6.8zM789.6 447.6l3.7-10.1l-4.6 1.6l-3.5 9.4zM785.2 448.5l3.5-9.4l-5.2 0.5l-2.5 6.8zM792.2 474l3.7-10.1l-4.7 1.6l-3.5 9.4zM787.7 474.9l3.5-9.4l-5.2 0.5l-2.5 6.7zM794.7 500.3l3.8-10l-4.7 1.5l-3.5 9.4zM790.3 501.2l3.5-9.4l-5.2 0.5l-2.5 6.8zM797.3 526.6l3.7-10l-4.7 1.5l-3.5 9.4zM792.8 527.5l3.5-9.4l-5.1 0.5l-2.6 6.8zM799.8 552.9l3.7-10l-4.6 1.5l-3.5 9.4zM795.4 553.8l3.5-9.4l-5.2 0.5l-2.5 6.8zM802.3 579.1l3.8-10l-4.7 1.6l-3.5 9.3zM797.9 580l3.5-9.3l-5.1 0.5l-2.6 6.7zM804.9 605.3l3.7-10l-4.6 1.6l-3.5 9.4zM800.5 606.3l3.5-9.4l-5.2 0.5l-2.5 6.7zM807.4 631.5l3.8-10l-4.7 1.6l-3.5 9.3zM803 632.4l3.5-9.3l-5.2 0.5l-2.5 6.7zM810 657.6l3.7-9.9l-4.7 1.6l-3.5 9.3zM805.5 658.6l3.5-9.3l-5.1 0.5l-2.5 6.7zM812.5 683.7l3.7-9.9l-4.6 1.6l-3.5 9.3zM808.1 684.7l3.5-9.3l-5.2 0.5l-2.5 6.7zM815 709.8l3.7-9.9l-4.6 1.6l-3.5 9.3zM810.6 710.8l3.5-9.3l-5.2 0.5l-2.5 6.7zM817.5 735.9l3.8-9.9l-4.7 1.6l-3.5 9.3zM813.1 736.9l3.5-9.3l-5.1 0.5l-2.5 6.6zM820.1 761.9l3.7-9.9l-4.6 1.6l-3.5 9.3zM815.7 762.9l3.5-9.3l-5.2 0.5l-2.5 6.7z"/><path class="f" fill="#bfcab2" d="M775.4 252l-6-12.4l-4.3 2.3l5.6 11.6zM770.7 253.5l-5.6-11.6l-3.6 3.8l4 8.3zM778 278.6l-6-12.4l-4.3 2.3l5.6 11.6zM773.3 280.1l-5.6-11.6l-3.6 3.8l4 8.3zM780.5 305.2l-5.9-12.4l-4.3 2.3l5.6 11.6zM775.9 306.7l-5.6-11.6l-3.7 3.7l4 8.4zM783.1 331.7l-5.9-12.4l-4.3 2.3l5.5 11.6zM778.4 333.2l-5.5-11.6l-3.7 3.8l4 8.3zM785.7 358.2l-6-12.4l-4.3 2.3l5.6 11.7zM781 359.8l-5.6-11.7l-3.6 3.8l4 8.3zM788.2 384.7l-5.9-12.4l-4.3 2.3l5.6 11.6zM783.6 386.2l-5.6-11.6l-3.6 3.8l4 8.3zM790.8 411.1l-5.9-12.4l-4.3 2.3l5.5 11.7zM786.1 412.7l-5.5-11.7l-3.7 3.8l4 8.4zM793.3 437.5l-5.9-12.4l-4.3 2.4l5.6 11.6zM788.7 439.1l-5.6-11.6l-3.6 3.7l4 8.4zM795.9 463.9l-5.9-12.4l-4.3 2.3l5.5 11.7zM791.2 465.5l-5.5-11.7l-3.6 3.8l3.9 8.4zM798.5 490.3l-6-12.4l-4.3 2.3l5.6 11.6zM793.8 491.8l-5.6-11.6l-3.6 3.8l4 8.3zM801 516.6l-5.9-12.4l-4.3 2.3l5.5 11.6zM796.3 518.1l-5.5-11.6l-3.6 3.8l4 8.3zM803.5 542.9l-5.9-12.4l-4.3 2.3l5.6 11.6zM798.9 544.4l-5.6-11.6l-3.6 3.8l4 8.3zM806.1 569.1l-5.9-12.4l-4.3 2.4l5.5 11.6zM801.4 570.7l-5.5-11.6l-3.6 3.7l4 8.4zM808.6 595.3l-5.9-12.3l-4.3 2.3l5.6 11.6zM804 596.9l-5.6-11.6l-3.6 3.8l4 8.3zM811.2 621.5l-5.9-12.3l-4.3 2.3l5.5 11.6zM806.5 623.1l-5.5-11.6l-3.6 3.8l3.9 8.3zM813.7 647.7l-5.9-12.4l-4.3 2.4l5.5 11.6zM809 649.3l-5.5-11.6l-3.6 3.7l4 8.4zM816.2 673.8l-5.9-12.3l-4.2 2.3l5.5 11.6zM811.6 675.4l-5.5-11.6l-3.7 3.8l4 8.3zM818.7 699.9l-5.8-12.3l-4.3 2.3l5.5 11.6zM814.1 701.5l-5.5-11.6l-3.6 3.8l3.9 8.3zM821.3 726l-5.9-12.3l-4.3 2.3l5.5 11.6zM816.6 727.6l-5.5-11.6l-3.6 3.8l4 8.3zM823.8 752l-5.9-12.3l-4.3 2.4l5.6 11.5zM819.2 753.6l-5.6-11.5l-3.6 3.7l4 8.3z"/><path class="f" fill="#edd2c2" d="M769.4 239.6l-9.6-2.2l-3.8 2.4l9.1 2.1zM765.1 241.9l-9.1-2.1l-1 4.4l6.5 1.5zM772 266.2l-9.7-2.2l-3.7 2.4l9.1 2.1zM767.7 268.5l-9.1-2.1l-1.1 4.4l6.6 1.5zM774.6 292.8l-9.7-2.3l-3.7 2.5l9.1 2.1zM770.3 295.1l-9.1-2.1l-1.1 4.3l6.5 1.5zM777.2 319.3l-9.7-2.2l-3.7 2.4l9.1 2.1zM772.9 321.6l-9.1-2.1l-1.1 4.4l6.5 1.5zM779.7 345.8l-9.6-2.2l-3.7 2.4l9 2.1zM775.4 348.1l-9-2.1l-1.1 4.4l6.5 1.5zM782.3 372.3l-9.7-2.3l-3.7 2.5l9.1 2.1zM778 374.6l-9.1-2.1l-1 4.3l6.5 1.6zM784.9 398.7l-9.7-2.3l-3.7 2.5l9.1 2.1zM780.6 401l-9.1-2.1l-1.1 4.4l6.5 1.5zM787.4 425.1l-9.6-2.3l-3.7 2.5l9 2.2zM783.1 427.5l-9-2.2l-1.1 4.4l6.5 1.5zM790 451.5l-9.7-2.3l-3.7 2.5l9.1 2.1zM785.7 453.8l-9.1-2.1l-1 4.3l6.5 1.6zM792.5 477.9l-9.6-2.4l-3.7 2.5l9 2.2zM788.2 480.2l-9-2.2l-1.1 4.4l6.5 1.6zM795.1 504.2l-9.7-2.3l-3.6 2.4l9 2.2zM790.8 506.5l-9-2.2l-1.1 4.4l6.5 1.6zM797.6 530.5l-9.6-2.4l-3.7 2.5l9 2.2zM793.3 532.8l-9-2.2l-1.1 4.4l6.5 1.6zM800.2 556.7l-9.7-2.3l-3.6 2.5l9 2.2zM795.9 559.1l-9-2.2l-1.1 4.3l6.5 1.6zM802.7 583l-9.6-2.4l-3.7 2.5l9 2.2zM798.4 585.3l-9-2.2l-1.1 4.4l6.5 1.6zM805.3 609.2l-9.7-2.4l-3.6 2.5l9 2.2zM801 611.5l-9-2.2l-1.1 4.4l6.5 1.6zM807.8 635.3l-9.6-2.4l-3.7 2.5l9 2.3zM803.5 637.7l-9-2.3l-1.1 4.4l6.5 1.6zM810.3 661.5l-9.6-2.4l-3.7 2.5l9.1 2.2zM806.1 663.8l-9.1-2.2l-1 4.3l6.4 1.7zM812.9 687.6l-9.7-2.4l-3.6 2.5l9 2.2zM808.6 689.9l-9-2.2l-1.1 4.3l6.5 1.7zM815.4 713.7l-9.6-2.5l-3.7 2.5l9 2.3zM811.1 716l-9-2.3l-1.1 4.4l6.5 1.7zM817.9 739.7l-9.6-2.5l-3.7 2.6l9 2.3zM813.6 742.1l-9-2.3l-1 4.4l6.4 1.6z"/><path class="g" fill="#63a87a" d="M752.4 251.1l4 8.4l6.6 1.4l2.5-6.9l-4-8.3l-6.5-1.5zM755 277.7l4 8.3l6.5 1.5l2.6-6.9l-4-8.3l-6.6-1.5zM757.6 304.2l4 8.4l6.5 1.5l2.5-6.9l-4-8.4l-6.5-1.5zM760.2 330.7l4 8.4l6.5 1.5l2.5-6.9l-4-8.3l-6.5-1.5zM762.8 357.2l4 8.4l6.5 1.5l2.5-6.9l-4-8.3l-6.5-1.5zM765.3 383.7l4 8.3l6.5 1.6l2.6-6.9l-4-8.3l-6.5-1.6zM767.9 410.1l4 8.3l6.5 1.6l2.5-6.8l-4-8.4l-6.5-1.5zM770.5 436.5l4 8.3l6.5 1.6l2.5-6.8l-4-8.4l-6.5-1.5zM773 462.8l4 8.4l6.5 1.5l2.5-6.7l-3.9-8.4l-6.5-1.6zM775.6 489.2l4 8.3l6.5 1.6l2.5-6.8l-4-8.3l-6.5-1.6zM778.2 515.5l3.9 8.3l6.5 1.6l2.6-6.8l-4-8.3l-6.5-1.6zM780.7 541.7l4 8.4l6.5 1.6l2.5-6.8l-4-8.3l-6.5-1.6zM783.3 568l3.9 8.3l6.5 1.6l2.6-6.7l-4-8.4l-6.5-1.6zM785.8 594.2l4 8.3l6.5 1.6l2.5-6.7l-4-8.3l-6.5-1.6zM788.4 620.4l3.9 8.3l6.5 1.6l2.5-6.7l-3.9-8.3l-6.5-1.6zM790.9 646.5l4 8.3l6.5 1.7l2.5-6.7l-4-8.4l-6.5-1.6zM793.4 672.6l4 8.4l6.5 1.6l2.5-6.7l-4-8.3l-6.4-1.7zM796 698.7l4 8.3l6.4 1.7l2.5-6.7l-3.9-8.3l-6.5-1.7zM798.5 724.8l4 8.3l6.5 1.6l2.5-6.6l-4-8.3l-6.5-1.7zM801.1 750.8l3.9 8.3l6.5 1.7l2.5-6.7l-4-8.3l-6.4-1.6z"/>
<path class="h" d="M1150.9 222.5l4-13.3l10.1-3.7l3.6 1.8l5.7 8.9l-0.1 1.7l-2.7 8.9l-1 1.8l-9.4 3.5l-4.2-0.2zM1153.2 249.1l4.1-13.3l10-3.7l3.7 1.9l5.6 8.8l0 1.7l-2.8 8.9l-0.9 1.8l-9.5 3.5l-4.1-0.1zM1155.6 275.7l4-13.2l10.1-3.8l3.6 1.9l5.7 8.8l-0.1 1.7l-2.7 8.9l-1 1.8l-9.4 3.5l-4.2-0.2zM1157.9 302.3l4.1-13.3l10-3.8l3.7 1.9l5.6 8.9l-0.1 1.6l-2.7 8.9l-0.9 1.8l-9.5 3.6l-4.1-0.2zM1160.3 328.8l4-13.2l10.1-3.8l3.6 1.9l5.6 8.8l0 1.7l-2.8 8.8l-0.9 1.8l-9.4 3.6l-4.2-0.2zM1162.6 355.3l4-13.2l10.1-3.8l3.7 1.9l5.6 8.8l-0.1 1.6l-2.7 8.9l-1 1.8l-9.4 3.6l-4.2-0.2zM1165 381.8l4-13.2l10-3.8l3.7 1.8l5.6 8.8l-0.1 1.7l-2.7 8.9l-0.9 1.8l-9.4 3.6l-4.2-0.3zM1167.3 408.2l4-13.2l10.1-3.8l3.6 1.9l5.6 8.7l0 1.8l-2.8 8.8l-0.9 1.8l-9.4 3.6l-4.2-0.2zM1169.7 434.6l4.1-13.2l10-3.8l3.6 1.9l5.7 8.7l-0.1 1.8l-2.7 8.8l-1 1.8l-9.4 3.6l-4.2-0.2zM1172 461l4-13.2l10-3.8l3.7 1.9l5.6 8.7l-0.1 1.7l-2.7 8.9l-1 1.8l-9.3 3.6l-4.2-0.3zM1174.3 487.4l4-13.2l10-3.9l3.7 1.9l5.6 8.8l-0.1 1.7l-2.7 8.8l-1 1.8l-9.3 3.6l-4.2-0.2zM1176.6 513.7l4-13.2l10-3.9l3.7 2l5.6 8.6l-0.1 1.8l-2.7 8.8l-0.9 1.8l-9.4 3.6l-4.2-0.2zM1179 540l4-13.2l10-3.9l3.6 2l5.6 8.6l-0.1 1.8l-2.7 8.8l-0.9 1.7l-9.4 3.7l-4.1-0.3zM1181.3 566.2l4-13.1l10-3.9l3.6 1.9l5.6 8.7l-0.1 1.7l-2.6 8.9l-1 1.7l-9.4 3.7l-4.1-0.3zM1183.6 592.5l4-13.2l10-3.9l3.6 2l5.6 8.6l0 1.7l-2.7 8.9l-1 1.7l-9.3 3.7l-4.2-0.3zM1185.9 618.7l4-13.1l10-4l3.7 2l5.5 8.6l0 1.7l-2.7 8.9l-1 1.7l-9.3 3.7l-4.2-0.3zM1188.2 644.9l4-13.2l10-3.9l3.7 1.9l5.5 8.6l0 1.8l-2.7 8.8l-1 1.7l-9.3 3.7l-4.2-0.3zM1190.6 671l4-13.1l9.9-4l3.7 2l5.5 8.5l0 1.8l-2.7 8.9l-1 1.6l-9.3 3.8l-4.2-0.3zM1192.9 697.1l4-13.1l9.9-4l3.7 2l5.5 8.5l0 1.8l-2.7 8.9l-1 1.6l-9.3 3.8l-4.2-0.4zM1195.2 723.2l4-13.1l9.9-4l3.7 2l5.5 8.5l-0.1 1.8l-2.6 8.8l-1 1.7l-9.3 3.7l-4.2-0.3z"/><path class="f" fill="#687038" d="M1150.9 222.5l6 9.4l4.2 0.2l-5.7-8.9zM1155.4 223.2l5.7 8.9l3.6-2.8l-4.1-6.4zM1153.2 249.1l6.1 9.5l4.1 0.1l-5.6-8.8zM1157.8 249.9l5.6 8.8l3.7-2.8l-4.1-6.4zM1155.6 275.7l6 9.4l4.2 0.2l-5.7-8.8zM1160.1 276.5l5.7 8.8l3.6-2.8l-4.1-6.3zM1157.9 302.3l6.1 9.4l4.1 0.2l-5.6-8.8zM1162.5 303.1l5.6 8.8l3.6-2.8l-4-6.4zM1160.3 328.8l6 9.4l4.2 0.2l-5.7-8.8zM1164.8 329.6l5.7 8.8l3.6-2.8l-4.1-6.3zM1162.6 355.3l6 9.4l4.2 0.2l-5.6-8.8zM1167.2 356.1l5.6 8.8l3.6-2.8l-4-6.3zM1165 381.8l6 9.3l4.2 0.3l-5.7-8.8zM1169.5 382.6l5.7 8.8l3.6-2.8l-4.1-6.3zM1167.3 408.2l6 9.4l4.2 0.2l-5.6-8.8zM1171.9 409l5.6 8.8l3.6-2.8l-4.1-6.3zM1169.6 434.6l6.1 9.4l4.1 0.2l-5.6-8.7zM1174.2 435.5l5.6 8.7l3.6-2.8l-4-6.3zM1172 461l6 9.3l4.1 0.3l-5.6-8.7zM1176.5 461.9l5.6 8.7l3.6-2.8l-4-6.3zM1174.3 487.4l6 9.3l4.2 0.2l-5.6-8.7zM1178.9 488.2l5.6 8.7l3.6-2.7l-4.1-6.3zM1176.6 513.7l6 9.3l4.2 0.2l-5.6-8.7zM1181.2 514.5l5.6 8.7l3.6-2.7l-4-6.3zM1179 540l6 9.2l4.1 0.3l-5.6-8.7zM1183.5 540.8l5.6 8.7l3.6-2.7l-4-6.3zM1181.3 566.3l6 9.2l4.1 0.3l-5.6-8.7zM1185.8 567.1l5.6 8.7l3.6-2.8l-4-6.2zM1183.6 592.5l6 9.2l4.1 0.3l-5.6-8.7zM1188.1 593.3l5.6 8.7l3.6-2.8l-4-6.2zM1185.9 618.7l6 9.2l4.2 0.3l-5.6-8.6zM1190.5 619.6l5.6 8.6l3.6-2.8l-4.1-6.2zM1188.3 644.9l5.9 9.1l4.2 0.3l-5.6-8.6zM1192.8 645.7l5.6 8.6l3.6-2.7l-4.1-6.2zM1190.6 671l5.9 9.2l4.2 0.3l-5.6-8.6zM1195.1 671.9l5.6 8.6l3.6-2.8l-4.1-6.1zM1192.9 697.1l5.9 9.1l4.2 0.4l-5.6-8.6zM1197.4 698l5.6 8.6l3.6-2.8l-4-6.1zM1195.2 723.2l5.9 9.1l4.2 0.3l-5.6-8.5zM1199.7 724.1l5.6 8.5l3.6-2.7l-4-6.1z"/><path class="f" fill="#edd2c2" d="M1165 205.5l-10.1 3.7l4.3 1.6l9.4-3.5zM1168.6 207.3l-9.4 3.5l4.2 3.2l6.7-2.5zM1167.3 232.1l-10 3.8l4.3 1.6l9.4-3.5zM1171 234l-9.4 3.5l4.1 3.1l6.8-2.5zM1169.7 258.7l-10.1 3.8l4.3 1.6l9.4-3.5zM1173.3 260.6l-9.4 3.5l4.2 3.1l6.7-2.5zM1172 285.3l-10 3.7l4.3 1.7l9.4-3.6zM1175.7 287.1l-9.4 3.6l4.1 3.1l6.8-2.5zM1174.3 311.8l-10 3.8l4.3 1.6l9.4-3.5zM1178 313.7l-9.4 3.5l4.1 3.2l6.8-2.6zM1176.7 338.3l-10.1 3.8l4.3 1.6l9.5-3.5zM1180.4 340.2l-9.5 3.5l4.2 3.2l6.7-2.6zM1179 364.8l-10 3.8l4.3 1.6l9.4-3.6zM1182.7 366.6l-9.4 3.6l4.1 3.2l6.8-2.6zM1181.3 391.2l-10 3.8l4.3 1.7l9.4-3.6zM1185 393.1l-9.4 3.6l4.1 3.1l6.8-2.6zM1183.7 417.6l-10 3.9l4.3 1.6l9.3-3.6zM1187.3 419.5l-9.3 3.6l4.1 3.2l6.7-2.6zM1186 444l-10 3.8l4.3 1.7l9.4-3.6zM1189.7 445.9l-9.4 3.6l4.1 3.2l6.8-2.6zM1188.3 470.3l-10 3.9l4.3 1.7l9.4-3.7zM1192 472.2l-9.4 3.7l4.1 3.1l6.8-2.6zM1190.6 496.6l-9.9 3.9l4.2 1.7l9.4-3.6zM1194.3 498.6l-9.4 3.6l4.2 3.2l6.7-2.7zM1193 522.9l-10 3.9l4.3 1.7l9.3-3.6zM1196.6 524.9l-9.3 3.6l4.1 3.2l6.7-2.7zM1195.3 549.2l-10 3.9l4.3 1.7l9.3-3.7zM1198.9 551.1l-9.3 3.7l4.1 3.1l6.7-2.6zM1197.6 575.4l-10 3.9l4.3 1.7l9.3-3.6zM1201.2 577.4l-9.3 3.6l4.1 3.2l6.7-2.7zM1199.9 601.6l-10 3.9l4.3 1.7l9.4-3.6zM1203.6 603.6l-9.4 3.6l4.1 3.2l6.7-2.7zM1202.2 627.8l-10 3.9l4.3 1.7l9.4-3.7zM1205.9 629.7l-9.4 3.7l4.1 3.2l6.7-2.7zM1204.5 653.9l-9.9 4l4.2 1.7l9.4-3.7zM1208.2 655.9l-9.4 3.7l4.1 3.1l6.7-2.6zM1206.8 680l-9.9 4l4.2 1.7l9.4-3.7zM1210.5 682l-9.4 3.7l4.1 3.1l6.7-2.6zM1209.1 706.1l-9.9 4l4.2 1.7l9.4-3.7zM1212.8 708.1l-9.4 3.7l4.1 3.1l6.7-2.7z"/><path class="f" fill="#bfcab2" d="M1154.9 209.2l-4 13.3l4.5 0.7l3.8-12.4zM1159.2 210.8l-3.8 12.4l5.2-0.3l2.8-8.9zM1157.3 235.9l-4.1 13.2l4.6 0.8l3.8-12.4zM1161.6 237.5l-3.8 12.4l5.2-0.4l2.7-8.9zM1159.6 262.5l-4 13.2l4.5 0.8l3.8-12.4zM1163.9 264.1l-3.8 12.4l5.2-0.3l2.8-9zM1162 289l-4.1 13.3l4.6 0.8l3.8-12.4zM1166.3 290.7l-3.8 12.4l5.2-0.4l2.7-8.9zM1164.3 315.6l-4 13.2l4.5 0.8l3.8-12.4zM1168.6 317.2l-3.8 12.4l5.2-0.3l2.7-8.9zM1166.6 342.1l-4 13.2l4.6 0.8l3.7-12.4zM1170.9 343.7l-3.7 12.4l5.2-0.3l2.7-8.9zM1169 368.6l-4 13.2l4.5 0.8l3.8-12.4zM1173.3 370.2l-3.8 12.4l5.2-0.3l2.7-8.9zM1171.3 395l-4 13.2l4.6 0.8l3.7-12.3zM1175.6 396.7l-3.7 12.3l5.1-0.3l2.7-8.9zM1173.7 421.5l-4.1 13.1l4.6 0.9l3.8-12.4zM1178 423.1l-3.8 12.4l5.2-0.4l2.7-8.8zM1176 447.8l-4 13.2l4.5 0.9l3.8-12.4zM1180.3 449.5l-3.8 12.4l5.2-0.4l2.7-8.8zM1178.3 474.2l-4 13.2l4.6 0.8l3.7-12.3zM1182.6 475.9l-3.7 12.3l5.1-0.3l2.7-8.9zM1180.7 500.5l-4.1 13.2l4.6 0.8l3.7-12.3zM1184.9 502.2l-3.7 12.3l5.2-0.3l2.7-8.8zM1183 526.8l-4 13.2l4.5 0.8l3.8-12.3zM1187.3 528.5l-3.8 12.3l5.2-0.3l2.7-8.8zM1185.3 553.1l-4 13.2l4.5 0.8l3.8-12.3zM1189.6 554.8l-3.8 12.3l5.2-0.3l2.7-8.9zM1187.6 579.3l-4 13.2l4.5 0.8l3.8-12.3zM1191.9 581l-3.8 12.3l5.2-0.3l2.7-8.8zM1189.9 605.5l-4 13.2l4.6 0.9l3.7-12.4zM1194.2 607.2l-3.7 12.4l5.1-0.4l2.7-8.8zM1192.2 631.7l-3.9 13.2l4.5 0.8l3.7-12.3zM1196.5 633.4l-3.7 12.3l5.1-0.3l2.7-8.8zM1194.6 657.9l-4 13.1l4.5 0.9l3.7-12.3zM1198.8 659.6l-3.7 12.3l5.1-0.3l2.7-8.9zM1196.9 684l-4 13.1l4.5 0.9l3.7-12.3zM1201.1 685.7l-3.7 12.3l5.2-0.3l2.6-8.9zM1199.2 710.1l-4 13.1l4.5 0.9l3.7-12.3zM1203.4 711.8l-3.7 12.3l5.2-0.3l2.6-8.9z"/><path class="g" fill="#5ca87b" d="M1160.6 222.9l4.1 6.4l6.8-2.5l2.7-8.9l-4.1-6.4l-6.7 2.5zM1163 249.5l4.1 6.4l6.7-2.5l2.7-8.9l-4-6.4l-6.8 2.5zM1165.3 276.2l4.1 6.3l6.8-2.5l2.7-8.9l-4.1-6.4l-6.7 2.5zM1167.7 302.7l4 6.4l6.8-2.6l2.7-8.9l-4-6.3l-6.8 2.5zM1170 329.3l4.1 6.3l6.7-2.6l2.8-8.8l-4.1-6.4l-6.8 2.6zM1172.4 355.8l4 6.3l6.8-2.6l2.7-8.9l-4.1-6.3l-6.7 2.6zM1174.7 382.3l4.1 6.3l6.7-2.6l2.7-8.9l-4-6.3l-6.8 2.6zM1177 408.7l4.1 6.3l6.7-2.6l2.7-8.9l-4-6.3l-6.8 2.6zM1179.4 435.1l4 6.3l6.8-2.6l2.7-8.8l-4.1-6.3l-6.7 2.6zM1181.7 461.5l4 6.3l6.8-2.6l2.7-8.9l-4-6.2l-6.8 2.6zM1184 487.9l4.1 6.3l6.7-2.7l2.7-8.8l-4-6.3l-6.8 2.6zM1186.4 514.2l4 6.3l6.7-2.6l2.7-8.9l-4-6.3l-6.7 2.7zM1188.7 540.5l4 6.3l6.7-2.7l2.7-8.8l-4-6.3l-6.7 2.7zM1191 566.8l4 6.2l6.7-2.6l2.7-8.9l-4-6.2l-6.7 2.6zM1193.3 593l4 6.2l6.8-2.6l2.7-8.9l-4.1-6.2l-6.7 2.7zM1195.6 619.2l4.1 6.2l6.7-2.6l2.7-8.9l-4.1-6.2l-6.7 2.7zM1197.9 645.4l4.1 6.2l6.7-2.7l2.7-8.8l-4.1-6.2l-6.7 2.7zM1200.2 671.6l4.1 6.1l6.7-2.6l2.7-8.9l-4.1-6.1l-6.7 2.6zM1202.6 697.7l4 6.1l6.7-2.6l2.7-8.9l-4.1-6.1l-6.7 2.6zM1204.9 723.8l4 6.1l6.7-2.7l2.6-8.8l-4-6.2l-6.7 2.7z"/>
<path class="h" d="M779.2 255.2l4.1-9.9l3.1-2.5l10.9 1.7l6.5 12.2l-4.4 10.5l-3.9 1l-10.2-1.6l-1.1-1.6l-4.4-8.3zM781.8 281.8l4-9.9l3.2-2.5l10.8 1.7l6.5 12.2l-4.3 10.5l-3.9 1l-10.2-1.6l-1.2-1.6l-4.4-8.2zM784.4 308.3l4-9.8l3.1-2.5l10.9 1.7l6.5 12.2l-4.3 10.5l-4 1l-10.1-1.6l-1.2-1.6l-4.4-8.3zM786.9 334.9l4.1-9.8l3.1-2.5l10.8 1.7l6.6 12.2l-4.4 10.4l-3.9 1l-10.2-1.6l-1.1-1.6l-4.4-8.2zM789.5 361.4l4-9.8l3.1-2.5l10.9 1.7l6.5 12.2l-4.3 10.4l-4 1l-10.1-1.6l-1.2-1.6l-4.4-8.2zM792 387.9l4.1-9.8l3.1-2.5l10.8 1.7l6.6 12.2l-4.4 10.4l-3.9 1l-10.2-1.6l-1.1-1.6l-4.4-8.2zM794.6 414.3l4.1-9.7l3.1-2.6l10.8 1.8l6.5 12.2l-4.3 10.4l-4 1l-10.1-1.7l-1.2-1.5l-4.3-8.2zM797.2 440.8l4-9.8l3.1-2.5l10.9 1.7l6.4 12.2l-4.3 10.4l-3.9 1l-10.2-1.6l-1.1-1.6l-4.4-8.2zM799.7 467.2l4.1-9.8l3.1-2.5l10.8 1.8l6.5 12.1l-4.3 10.4l-4 1l-10.1-1.7l-1.2-1.5l-4.3-8.2zM802.3 493.5l4-9.7l3.1-2.5l10.8 1.8l6.5 12.1l-4.3 10.3l-3.9 1.1l-10.2-1.7l-1.1-1.5l-4.4-8.2zM804.8 519.9l4-9.6l3.2-2.6l10.8 1.8l6.5 12.2l-4.4 10.3l-3.9 1l-10.1-1.7l-1.2-1.5l-4.3-8.2zM807.4 546.1l4-9.7l3.1-2.6l10.8 1.8l6.5 12.2l-4.3 10.3l-3.9 1l-10.2-1.7l-1.1-1.5l-4.4-8.2zM809.9 572.4l4-9.6l3.1-2.6l10.8 1.8l6.5 12.2l-4.3 10.2l-3.9 1.1l-10.1-1.7l-1.2-1.5l-4.4-8.2zM812.4 598.7l4.1-9.7l3.1-2.6l10.8 1.9l6.4 12.1l-4.3 10.3l-3.9 1.1l-10.1-1.8l-1.1-1.5l-4.4-8.1zM815 624.9l4-9.6l3.1-2.6l10.8 1.8l6.5 12.1l-4.4 10.3l-3.9 1.1l-10.1-1.8l-1.1-1.5l-4.4-8.1zM817.5 651l4-9.5l3.1-2.6l10.8 1.8l6.5 12.1l-4.3 10.3l-3.9 1.1l-10.1-1.8l-1.2-1.5l-4.3-8.1zM820 677.2l4.1-9.6l3.1-2.6l10.7 1.9l6.5 12.1l-4.3 10.2l-3.9 1.1l-10.1-1.8l-1.1-1.5l-4.4-8.1zM822.5 703.3l4-9.5l3.1-2.6l10.7 1.9l6.5 12.1l-4.3 10.1l-3.9 1.1l-10.1-1.8l-1.1-1.4l-4.4-8.2zM825.1 729.4l4-9.5l3.1-2.6l10.8 1.9l6.4 12.1l-4.3 10.1l-3.9 1.1l-10.1-1.8l-1.1-1.4l-4.4-8.2zM827.6 755.5l4-9.5l3.1-2.7l10.8 1.9l6.4 12.1l-4.3 10.2l-3.9 1.1l-10.1-1.8l-1.1-1.5l-4.3-8.1z"/><path class="f" fill="#687038" d="M799.4 267.2l4.4-10.5l-4.2 1.6l-4.1 9.9zM795.5 268.2l4.1-9.9l-5.2 0.7l-2.9 7.1zM802 293.8l4.3-10.5l-4.2 1.7l-4 9.8zM798.1 294.8l4-9.8l-5.1 0.7l-3 7zM804.6 320.4l4.3-10.5l-4.2 1.7l-4.1 9.8zM800.6 321.4l4.1-9.8l-5.2 0.7l-2.9 7zM807.1 346.9l4.4-10.4l-4.3 1.6l-4 9.8zM803.2 347.9l4-9.8l-5.1 0.7l-2.9 7.1zM809.7 373.4l4.3-10.4l-4.2 1.7l-4.1 9.7zM805.7 374.4l4.1-9.7l-5.1 0.7l-3 7zM812.2 399.9l4.4-10.4l-4.2 1.7l-4.1 9.7zM808.3 400.9l4.1-9.7l-5.2 0.7l-2.9 7zM814.8 426.4l4.3-10.4l-4.2 1.7l-4.1 9.7zM810.8 427.4l4.1-9.7l-5.1 0.7l-3 7zM817.3 452.8l4.3-10.4l-4.2 1.7l-4 9.7zM813.4 453.8l4-9.7l-5.1 0.7l-2.9 7zM819.9 479.2l4.3-10.4l-4.2 1.7l-4.1 9.7zM815.9 480.2l4.1-9.7l-5.1 0.7l-3 7zM822.4 505.5l4.3-10.3l-4.2 1.7l-4 9.7zM818.5 506.6l4-9.7l-5.1 0.7l-2.9 7zM824.9 531.9l4.4-10.3l-4.2 1.7l-4.1 9.6zM821 532.9l4.1-9.6l-5.2 0.7l-2.9 6.9zM827.5 558.2l4.3-10.3l-4.2 1.7l-4.1 9.6zM823.5 559.2l4.1-9.6l-5.1 0.7l-2.9 6.9zM830 584.4l4.3-10.2l-4.2 1.7l-4 9.6zM826.1 585.5l4-9.6l-5.1 0.7l-2.9 6.9zM832.5 610.7l4.3-10.3l-4.1 1.7l-4.1 9.7zM828.6 611.8l4.1-9.7l-5.2 0.7l-2.9 7zM835 636.9l4.4-10.3l-4.2 1.8l-4.1 9.6zM831.1 638l4.1-9.6l-5.1 0.7l-2.9 6.9zM837.6 663.1l4.3-10.3l-4.2 1.8l-4 9.6zM833.7 664.2l4-9.6l-5.1 0.7l-2.9 6.9zM840.1 689.2l4.3-10.2l-4.2 1.8l-4 9.5zM836.2 690.3l4-9.5l-5.1 0.7l-2.9 6.8zM842.6 715.3l4.3-10.2l-4.2 1.8l-4 9.5zM838.7 716.4l4-9.5l-5.1 0.7l-2.9 6.9zM845.1 741.4l4.3-10.1l-4.1 1.7l-4.1 9.5zM841.2 742.5l4.1-9.5l-5.1 0.7l-3 6.9zM847.6 767.5l4.3-10.2l-4.1 1.8l-4.1 9.5zM843.7 768.6l4.1-9.5l-5.1 0.7l-2.9 6.8z"/><path class="f" fill="#bfcab2" d="M803.8 256.7l-6.5-12.2l-3.9 2.4l6.2 11.4zM799.6 258.3l-6.2-11.4l-3.4 3.9l4.4 8.2zM806.3 283.3l-6.5-12.2l-3.8 2.4l6.1 11.5zM802.1 285l-6.1-11.5l-3.4 3.9l4.4 8.3zM808.9 309.9l-6.5-12.2l-3.8 2.4l6.1 11.5zM804.7 311.6l-6.1-11.5l-3.5 3.9l4.4 8.3zM811.5 336.5l-6.6-12.2l-3.8 2.4l6.1 11.4zM807.2 338.1l-6.1-11.4l-3.4 3.9l4.4 8.2zM814 363l-6.5-12.2l-3.8 2.5l6.1 11.4zM809.8 364.7l-6.1-11.4l-3.4 3.9l4.4 8.2zM816.6 389.5l-6.6-12.2l-3.7 2.5l6.1 11.4zM812.4 391.2l-6.1-11.4l-3.5 3.9l4.4 8.2zM819.1 416l-6.5-12.2l-3.8 2.5l6.1 11.4zM814.9 417.7l-6.1-11.4l-3.4 3.9l4.4 8.2zM821.6 442.4l-6.5-12.1l-3.7 2.4l6 11.4zM817.4 444.1l-6-11.4l-3.5 3.9l4.4 8.2zM824.2 468.8l-6.5-12.1l-3.8 2.4l6.1 11.4zM820 470.5l-6.1-11.4l-3.4 3.9l4.4 8.2zM826.7 495.2l-6.5-12.1l-3.8 2.4l6.1 11.4zM822.5 496.9l-6.1-11.4l-3.4 3.9l4.4 8.2zM829.3 521.6l-6.5-12.2l-3.8 2.5l6.1 11.4zM825.1 523.3l-6.1-11.4l-3.4 3.9l4.3 8.2zM831.8 547.9l-6.5-12.2l-3.8 2.5l6.1 11.4zM827.6 549.6l-6.1-11.4l-3.4 3.9l4.4 8.2zM834.3 574.2l-6.5-12.2l-3.7 2.5l6 11.4zM830.1 575.9l-6-11.4l-3.5 3.9l4.4 8.2zM836.8 600.4l-6.4-12.1l-3.8 2.5l6.1 11.3zM832.7 602.1l-6.1-11.3l-3.4 3.9l4.3 8.1zM839.4 626.6l-6.5-12.1l-3.8 2.5l6.1 11.4zM835.2 628.4l-6.1-11.4l-3.4 3.9l4.4 8.2zM841.9 652.8l-6.5-12.1l-3.8 2.5l6.1 11.4zM837.7 654.6l-6.1-11.4l-3.4 3.9l4.4 8.2zM844.4 679l-6.5-12.1l-3.7 2.5l6 11.4zM840.2 680.8l-6-11.4l-3.4 3.9l4.3 8.2zM846.9 705.1l-6.4-12l-3.8 2.5l6 11.3zM842.7 706.9l-6-11.3l-3.4 3.9l4.3 8.1zM849.4 731.3l-6.4-12.1l-3.8 2.5l6.1 11.3zM845.3 733l-6.1-11.3l-3.4 3.9l4.4 8.1zM851.9 757.3l-6.4-12l-3.8 2.5l6.1 11.3zM847.8 759.1l-6.1-11.3l-3.4 3.9l4.4 8.1z"/><path class="f" fill="#edd2c2" d="M797.3 244.5l-10.9-1.7l-3.1 2.5l10.1 1.6zM793.4 246.9l-10.1-1.6l-0.6 4.4l7.3 1.1zM799.8 271.1l-10.8-1.7l-3.2 2.5l10.2 1.6zM796 273.5l-10.2-1.6l-0.5 4.4l7.3 1.1zM802.4 297.7l-10.9-1.7l-3.1 2.5l10.2 1.6zM798.6 300.1l-10.2-1.6l-0.6 4.4l7.3 1.1zM804.9 324.3l-10.8-1.7l-3.1 2.5l10.1 1.6zM801.1 326.7l-10.1-1.6l-0.6 4.4l7.3 1.1zM807.5 350.8l-10.8-1.7l-3.2 2.5l10.2 1.7zM803.7 353.3l-10.2-1.7l-0.5 4.4l7.3 1.2zM810 377.3l-10.8-1.7l-3.1 2.5l10.2 1.7zM806.3 379.8l-10.2-1.7l-0.6 4.4l7.3 1.2zM812.6 403.8l-10.8-1.8l-3.1 2.6l10.1 1.7zM808.8 406.3l-10.1-1.7l-0.6 4.4l7.3 1.2zM815.1 430.3l-10.8-1.8l-3.1 2.5l10.2 1.7zM811.4 432.7l-10.2-1.7l-0.6 4.4l7.3 1.2zM817.7 456.7l-10.8-1.8l-3.1 2.6l10.1 1.6zM813.9 459.1l-10.1-1.6l-0.6 4.3l7.3 1.2zM820.2 483.1l-10.8-1.8l-3.1 2.5l10.1 1.7zM816.4 485.5l-10.1-1.7l-0.6 4.4l7.3 1.2zM822.8 509.4l-10.8-1.8l-3.1 2.6l10.1 1.7zM819 511.9l-10.1-1.7l-0.6 4.4l7.3 1.2zM825.3 535.7l-10.8-1.8l-3.1 2.6l10.1 1.7zM821.5 538.2l-10.1-1.7l-0.6 4.4l7.3 1.2zM827.8 562l-10.8-1.8l-3.1 2.6l10.2 1.7zM824.1 564.5l-10.2-1.7l-0.5 4.4l7.2 1.2zM830.4 588.3l-10.8-1.9l-3.1 2.6l10.1 1.8zM826.6 590.8l-10.1-1.8l-0.6 4.4l7.3 1.3zM832.9 614.5l-10.8-1.8l-3.1 2.6l10.1 1.7zM829.1 617l-10.1-1.7l-0.6 4.4l7.3 1.2zM835.4 640.7l-10.8-1.8l-3.1 2.6l10.1 1.7zM831.6 643.2l-10.1-1.7l-0.5 4.4l7.2 1.2zM837.9 666.9l-10.7-1.9l-3.1 2.6l10.1 1.8zM834.2 669.4l-10.1-1.8l-0.6 4.4l7.3 1.3zM840.5 693.1l-10.8-1.9l-3.1 2.6l10.1 1.8zM836.7 695.6l-10.1-1.8l-0.6 4.4l7.3 1.3zM843 719.2l-10.8-1.9l-3.1 2.6l10.1 1.8zM839.2 721.7l-10.1-1.8l-0.6 4.4l7.3 1.3zM845.5 745.3l-10.8-2l-3.1 2.7l10.1 1.8zM841.7 747.8l-10.1-1.8l-0.5 4.4l7.2 1.3z"/><path class="g" fill="#5aa87c" d="M779.8 256.7l4.4 8.3l7.3 1.1l2.9-7.1l-4.4-8.2l-7.3-1.1zM782.3 283.4l4.4 8.2l7.3 1.1l3-7l-4.4-8.3l-7.3-1.1zM784.9 309.9l4.4 8.3l7.3 1.1l2.9-7l-4.4-8.3l-7.3-1.1zM787.5 336.5l4.4 8.2l7.3 1.2l2.9-7.1l-4.4-8.2l-7.3-1.1zM790 363l4.4 8.2l7.3 1.2l3-7l-4.4-8.2l-7.3-1.2zM792.6 389.5l4.4 8.2l7.3 1.2l2.9-7l-4.4-8.2l-7.3-1.2zM795.2 416l4.3 8.2l7.3 1.2l3-7l-4.4-8.2l-7.3-1.2zM797.7 442.4l4.4 8.2l7.3 1.2l2.9-7l-4.4-8.2l-7.3-1.2zM800.3 468.8l4.3 8.2l7.3 1.2l3-7l-4.4-8.2l-7.3-1.2zM802.8 495.2l4.4 8.2l7.3 1.2l2.9-7l-4.4-8.2l-7.3-1.2zM805.4 521.5l4.3 8.2l7.3 1.2l2.9-6.9l-4.3-8.2l-7.3-1.2zM807.9 547.8l4.4 8.2l7.3 1.2l2.9-6.9l-4.4-8.2l-7.3-1.2zM810.5 574.1l4.3 8.2l7.3 1.2l2.9-6.9l-4.4-8.2l-7.2-1.2zM813 600.3l4.4 8.2l7.2 1.3l2.9-7l-4.3-8.1l-7.3-1.3zM815.5 626.6l4.4 8.1l7.3 1.3l2.9-6.9l-4.4-8.2l-7.3-1.2zM818.1 652.7l4.3 8.2l7.3 1.3l2.9-6.9l-4.4-8.2l-7.2-1.2zM820.6 678.9l4.3 8.2l7.3 1.2l2.9-6.8l-4.3-8.2l-7.3-1.3zM823.1 705l4.4 8.2l7.2 1.3l2.9-6.9l-4.3-8.1l-7.3-1.3zM825.6 731.1l4.4 8.2l7.2 1.3l3-6.9l-4.4-8.1l-7.3-1.3zM828.2 757.2l4.3 8.1l7.3 1.3l2.9-6.8l-4.4-8.1l-7.2-1.3z"/>
<path class="h" d="M1121.6 231.6l4.6-13l11.2-3.5l3 2.1l6.2 9l-4.3 12.3l-10.5 3.2l-3.6-0.4zM1124 258.3l4.6-13.1l11.1-3.4l3.1 2l6.2 9.1l-4.3 12.2l-10.5 3.2l-3.6-0.4zM1126.3 284.9l4.6-13.1l11.2-3.4l3.1 2.1l6.1 9l-4.3 12.2l-10.4 3.3l-3.7-0.4zM1128.7 311.5l4.6-13l11.2-3.5l3 2.1l6.2 9l-4.3 12.2l-10.4 3.2l-3.7-0.4zM1131.1 338.1l4.5-13.1l11.2-3.4l3.1 2l6.1 9l-4.2 12.2l-10.5 3.3l-3.6-0.4zM1133.5 364.6l4.6-13l11.2-3.5l3 2.1l6.2 8.9l-4.3 12.3l-10.4 3.2l-3.7-0.4zM1135.8 391.1l4.6-13l11.1-3.5l3.1 2.1l6.2 8.9l-4.3 12.2l-10.5 3.3l-3.6-0.4zM1138.2 417.6l4.5-13l11.2-3.5l3 2.1l6.2 8.9l-4.3 12.2l-10.4 3.3l-3.6-0.5zM1140.5 444.1l4.6-13l11.1-3.5l3.1 2.1l6.1 8.9l-4.2 12.2l-10.5 3.3l-3.6-0.4zM1142.9 470.5l4.5-13.1l11.2-3.5l3 2.1l6.2 8.9l-4.3 12.2l-10.4 3.3l-3.7-0.4zM1145.2 496.9l4.6-13l11.1-3.5l3.1 2.1l6.1 8.9l-4.3 12.2l-10.4 3.3l-3.6-0.5zM1147.6 523.2l4.5-13l11.1-3.6l3.1 2.2l6.1 8.8l-4.2 12.2l-10.4 3.3l-3.7-0.5zM1149.9 549.5l4.6-13l11.1-3.5l3 2.1l6.2 8.8l-4.3 12.2l-10.4 3.3l-3.6-0.4zM1152.3 575.8l4.5-13l11.1-3.5l3.1 2.1l6.1 8.8l-4.3 12.2l-10.4 3.3l-3.6-0.5zM1154.6 602.1l4.6-13l11-3.6l3.1 2.1l6.1 8.9l-4.2 12.1l-10.4 3.4l-3.6-0.5zM1157 628.3l4.5-13l11.1-3.5l3 2.1l6.2 8.8l-4.3 12.1l-10.4 3.4l-3.6-0.5zM1159.3 654.5l4.5-13l11.1-3.6l3.1 2.2l6.1 8.8l-4.3 12.1l-10.4 3.4l-3.6-0.5zM1161.6 680.7l4.6-13l11-3.6l3.1 2.1l6.1 8.8l-4.3 12.2l-10.3 3.3l-3.6-0.5zM1164 706.8l4.5-12.9l11.1-3.7l3 2.2l6.1 8.7l-4.3 12.2l-10.3 3.4l-3.6-0.6zM1166.3 732.9l4.5-12.9l11.1-3.6l3 2.1l6.1 8.7l-4.2 12.2l-10.4 3.4l-3.6-0.6z"/><path class="f" fill="#687038" d="M1121.6 231.6l6.6 9.7l3.6 0.4l-6.1-9.1zM1125.7 232.6l6.1 9.1l3.4-2.7l-4.4-6.5zM1124 258.3l6.6 9.6l3.6 0.4l-6.2-9zM1128 259.3l6.2 9l3.4-2.6l-4.4-6.5zM1126.3 284.9l6.6 9.6l3.7 0.5l-6.2-9.1zM1130.4 285.9l6.2 9.1l3.4-2.7l-4.5-6.5zM1128.7 311.5l6.6 9.6l3.7 0.4l-6.2-9zM1132.8 312.5l6.2 9l3.3-2.6l-4.4-6.5zM1131.1 338.1l6.6 9.6l3.6 0.4l-6.2-9zM1135.1 339.1l6.2 9l3.4-2.6l-4.4-6.5zM1133.4 364.6l6.6 9.6l3.7 0.4l-6.2-8.9zM1137.5 365.7l6.2 8.9l3.4-2.6l-4.5-6.4zM1135.8 391.1l6.6 9.6l3.6 0.4l-6.1-8.9zM1139.9 392.2l6.1 8.9l3.4-2.6l-4.4-6.4zM1138.2 417.6l6.5 9.5l3.7 0.5l-6.2-8.9zM1142.2 418.7l6.2 8.9l3.4-2.6l-4.5-6.4zM1140.5 444.1l6.6 9.5l3.6 0.4l-6.1-8.9zM1144.6 445.1l6.1 8.9l3.4-2.6l-4.4-6.4zM1142.9 470.5l6.5 9.5l3.7 0.4l-6.2-8.9zM1146.9 471.5l6.2 8.9l3.4-2.6l-4.5-6.4zM1145.2 496.8l6.6 9.5l3.6 0.5l-6.1-8.9zM1149.3 497.9l6.1 8.9l3.4-2.6l-4.4-6.4zM1147.6 523.2l6.5 9.5l3.7 0.4l-6.2-8.8zM1151.6 524.3l6.2 8.8l3.3-2.6l-4.4-6.3zM1149.9 549.5l6.6 9.5l3.6 0.4l-6.1-8.8zM1154 550.6l6.1 8.8l3.4-2.5l-4.4-6.4zM1152.3 575.8l6.5 9.4l3.7 0.5l-6.2-8.8zM1156.3 576.9l6.2 8.8l3.3-2.6l-4.4-6.3zM1154.6 602.1l6.6 9.4l3.6 0.5l-6.1-8.8zM1158.7 603.2l6.1 8.8l3.4-2.6l-4.4-6.3zM1157 628.3l6.5 9.4l3.6 0.5l-6.1-8.8zM1161 629.4l6.1 8.8l3.4-2.6l-4.4-6.3zM1159.3 654.5l6.5 9.4l3.6 0.5l-6.1-8.8zM1163.3 655.6l6.1 8.8l3.4-2.6l-4.4-6.3zM1161.6 680.7l6.6 9.3l3.6 0.5l-6.1-8.7zM1165.7 681.8l6.1 8.7l3.3-2.5l-4.4-6.3zM1164 706.8l6.5 9.3l3.6 0.6l-6.1-8.8zM1168 707.9l6.1 8.8l3.4-2.6l-4.4-6.3zM1166.3 732.9l6.5 9.3l3.6 0.6l-6.1-8.8zM1170.3 734l6.1 8.8l3.4-2.6l-4.4-6.2z"/><path class="f" fill="#bfcab2" d="M1191 727.2l-6.1-8.7l1 4.3l4.4 6.3z"/><path class="f" fill="#edd2c2" d="M1137.4 215.1l-11.2 3.4l3.8 1.9l10.4-3.2zM1140.4 217.2l-10.4 3.2l3.9 3.3l7.5-2.3zM1139.7 241.8l-11.2 3.4l3.8 1.8l10.5-3.2zM1142.8 243.8l-10.5 3.2l3.9 3.4l7.6-2.3zM1142.1 268.4l-11.2 3.5l3.8 1.8l10.5-3.2zM1145.2 270.5l-10.5 3.2l3.9 3.3l7.5-2.3zM1144.5 295l-11.2 3.5l3.8 1.8l10.4-3.2zM1147.5 297.1l-10.4 3.2l3.9 3.3l7.5-2.3zM1146.8 321.6l-11.1 3.4l3.7 1.9l10.5-3.3zM1149.9 323.6l-10.5 3.3l3.9 3.3l7.6-2.3zM1149.2 348.1l-11.2 3.5l3.8 1.8l10.4-3.2zM1152.2 350.2l-10.4 3.2l3.9 3.4l7.5-2.4zM1151.5 374.6l-11.1 3.5l3.7 1.8l10.5-3.2zM1154.6 376.7l-10.5 3.2l4 3.4l7.5-2.4zM1153.9 401.1l-11.2 3.5l3.8 1.8l10.4-3.2zM1156.9 403.2l-10.4 3.2l3.9 3.4l7.5-2.4zM1156.2 427.5l-11.1 3.5l3.8 1.9l10.4-3.3zM1159.3 429.6l-10.4 3.3l3.9 3.3l7.5-2.3zM1158.6 453.9l-11.2 3.5l3.8 1.9l10.4-3.3zM1161.6 456l-10.4 3.3l3.9 3.3l7.5-2.3zM1160.9 480.3l-11.1 3.5l3.8 1.9l10.4-3.3zM1164 482.4l-10.4 3.3l3.9 3.3l7.5-2.3zM1163.2 506.7l-11.1 3.5l3.8 1.9l10.4-3.3zM1166.3 508.8l-10.4 3.3l3.9 3.3l7.5-2.4zM1165.6 533l-11.1 3.5l3.7 1.9l10.4-3.3zM1168.6 535.1l-10.4 3.3l3.9 3.3l7.5-2.4zM1167.9 559.3l-11.1 3.5l3.8 1.9l10.4-3.3zM1171 561.4l-10.4 3.3l3.9 3.3l7.5-2.4zM1170.3 585.5l-11.1 3.6l3.7 1.9l10.4-3.4zM1173.3 587.6l-10.4 3.4l3.9 3.3l7.5-2.4zM1172.6 611.7l-11.1 3.6l3.8 1.9l10.3-3.3zM1175.6 613.9l-10.3 3.3l3.8 3.4l7.5-2.5zM1174.9 637.9l-11.1 3.6l3.8 1.9l10.4-3.3zM1178 640.1l-10.4 3.3l3.9 3.4l7.4-2.4zM1177.2 664.1l-11 3.6l3.7 1.9l10.4-3.3zM1180.3 666.3l-10.4 3.3l3.9 3.4l7.5-2.5zM1179.6 690.2l-11.1 3.7l3.7 1.9l10.4-3.4zM1182.6 692.4l-10.4 3.4l3.9 3.3l7.5-2.4zM1181.9 716.4l-11.1 3.6l3.8 1.9l10.3-3.4zM1184.9 718.5l-10.3 3.4l3.9 3.3l7.4-2.4z"/><path class="f" fill="#bfcab2" d="M1126.2 218.5l-4.6 13.1l4.1 1l4.3-12.2zM1130 220.4l-4.3 12.2l5.1-0.1l3.1-8.8zM1128.5 245.2l-4.5 13.1l4 1l4.3-12.3zM1132.3 247l-4.3 12.3l5.2-0.1l3-8.8zM1130.9 271.9l-4.6 13l4.1 1l4.3-12.2zM1134.7 273.7l-4.3 12.2l5.1-0.1l3.1-8.8zM1133.3 298.5l-4.6 13l4.1 1l4.3-12.2zM1137.1 300.3l-4.3 12.2l5.1-0.1l3.1-8.8zM1135.7 325l-4.6 13.1l4 1l4.3-12.2zM1139.4 326.9l-4.3 12.2l5.2-0.1l3-8.8zM1138 351.6l-4.6 13l4.1 1.1l4.3-12.3zM1141.8 353.4l-4.3 12.3l5.1-0.1l3.1-8.8zM1140.4 378.1l-4.6 13l4.1 1.1l4.2-12.3zM1144.1 379.9l-4.2 12.3l5.1-0.1l3.1-8.8zM1142.7 404.6l-4.5 13l4 1.1l4.3-12.3zM1146.5 406.4l-4.3 12.3l5.1-0.1l3.1-8.8zM1145.1 431l-4.6 13.1l4.1 1l4.3-12.2zM1148.9 432.9l-4.3 12.2l5.1-0.1l3.1-8.8zM1147.4 457.4l-4.5 13.1l4 1l4.3-12.2zM1151.2 459.3l-4.3 12.2l5.1-0.1l3.1-8.8zM1149.8 483.8l-4.6 13l4.1 1.1l4.3-12.2zM1153.6 485.7l-4.3 12.2l5.1-0.1l3.1-8.8zM1152.1 510.2l-4.5 13l4 1.1l4.3-12.2zM1155.9 512.1l-4.3 12.2l5.1-0.1l3.1-8.8zM1154.5 536.5l-4.6 13l4.1 1.1l4.2-12.2zM1158.2 538.4l-4.2 12.2l5.1-0.1l3-8.8zM1156.8 562.8l-4.5 13l4 1.1l4.3-12.2zM1160.6 564.7l-4.3 12.2l5.1-0.1l3.1-8.8zM1159.2 589.1l-4.6 13l4.1 1.1l4.2-12.2zM1162.9 591l-4.2 12.2l5.1-0.1l3-8.8zM1161.5 615.3l-4.5 13l4 1.1l4.3-12.2zM1165.3 617.2l-4.3 12.2l5.1-0.1l3-8.7zM1163.8 641.5l-4.5 13l4 1.1l4.3-12.2zM1167.6 643.4l-4.3 12.2l5.1-0.1l3.1-8.7zM1166.2 667.7l-4.6 13l4.1 1.1l4.2-12.2zM1169.9 669.6l-4.2 12.2l5-0.1l3.1-8.7zM1168.5 693.9l-4.5 12.9l4 1.1l4.2-12.1zM1172.2 695.8l-4.2 12.1l5.1-0.1l3-8.7zM1170.8 720l-4.5 12.9l4 1.1l4.3-12.1zM1174.6 721.9l-4.3 12.1l5.1 0l3.1-8.8z"/><path class="g" fill="#58a87c" d="M1130.8 232.5l4.4 6.5l7.6-2.3l3.1-8.8l-4.5-6.5l-7.5 2.3zM1133.2 259.2l4.4 6.5l7.5-2.3l3.1-8.8l-4.4-6.5l-7.6 2.3zM1135.5 285.8l4.5 6.5l7.5-2.3l3.1-8.8l-4.5-6.5l-7.5 2.3zM1137.9 312.4l4.4 6.5l7.6-2.3l3-8.8l-4.4-6.5l-7.5 2.3zM1140.3 339l4.4 6.5l7.5-2.4l3.1-8.8l-4.4-6.4l-7.6 2.3zM1142.6 365.6l4.5 6.4l7.5-2.3l3.1-8.8l-4.5-6.5l-7.5 2.4zM1145 392.1l4.4 6.4l7.5-2.4l3.1-8.7l-4.4-6.5l-7.5 2.4zM1147.3 418.6l4.5 6.4l7.5-2.4l3-8.8l-4.4-6.4l-7.5 2.4zM1149.7 445l4.4 6.4l7.5-2.4l3.1-8.7l-4.4-6.4l-7.5 2.3zM1152 471.4l4.5 6.4l7.5-2.4l3-8.7l-4.4-6.4l-7.5 2.3zM1154.4 497.8l4.4 6.4l7.5-2.4l3.1-8.8l-4.4-6.3l-7.5 2.3zM1156.7 524.2l4.4 6.3l7.5-2.3l3.1-8.8l-4.4-6.4l-7.5 2.4zM1159.1 550.5l4.4 6.4l7.5-2.4l3-8.8l-4.4-6.4l-7.5 2.4zM1161.4 576.8l4.4 6.3l7.5-2.4l3.1-8.7l-4.4-6.4l-7.5 2.4zM1163.8 603.1l4.4 6.3l7.4-2.4l3.1-8.8l-4.4-6.3l-7.5 2.4zM1166.1 629.3l4.4 6.3l7.5-2.4l3-8.7l-4.4-6.4l-7.5 2.5zM1168.4 655.5l4.4 6.3l7.5-2.4l3-8.7l-4.4-6.3l-7.4 2.4zM1170.7 681.7l4.4 6.3l7.5-2.4l3.1-8.8l-4.4-6.3l-7.5 2.5zM1173.1 707.8l4.4 6.3l7.4-2.4l3.1-8.7l-4.4-6.3l-7.5 2.4zM1175.4 734l4.4 6.2l7.4-2.4l3.1-8.7l-4.4-6.3l-7.4 2.4z"/>
<path class="h" d="M809 259.5l4.5-10.1l2.5-2.6l11.8 1.2l7.1 11.9l-4.9 10.8l-3.4 1.1l-11.1-1.1zM811.5 286.1l4.6-10.2l2.4-2.5l11.9 1.1l7 12l-4.8 10.7l-3.4 1.1l-11.1-1.1zM814.1 312.8l4.5-10.1l2.5-2.6l11.8 1.1l7.1 12l-4.9 10.8l-3.3 1l-11.2-1.1zM816.6 339.3l4.6-10l2.4-2.6l11.9 1.2l7 11.9l-4.9 10.7l-3.3 1.1l-11.1-1.1zM819.2 365.9l4.5-10.1l2.5-2.6l11.8 1.2l7 12l-4.8 10.7l-3.4 1.1l-11-1.2zM821.7 392.4l4.6-10l2.4-2.6l11.9 1.2l7 11.9l-4.9 10.7l-3.3 1.1l-11.1-1.1zM824.3 418.9l4.5-10l2.5-2.6l11.8 1.2l7 11.9l-4.8 10.7l-3.4 1.1l-11.1-1.2zM826.8 445.4l4.5-10l2.5-2.7l11.8 1.3l7 11.9l-4.8 10.6l-3.4 1.1l-11-1.1zM829.4 471.8l4.5-10l2.5-2.6l11.8 1.2l7 11.9l-4.9 10.6l-3.3 1.2l-11.1-1.2zM831.9 498.2l4.5-10l2.5-2.6l11.8 1.2l7 11.9l-4.9 10.6l-3.3 1.2l-11.1-1.2zM834.4 524.5l4.5-9.9l2.5-2.6l11.8 1.2l7 11.9l-4.8 10.6l-3.4 1.1l-11-1.1zM837 550.9l4.5-9.9l2.4-2.7l11.8 1.3l7 11.8l-4.8 10.6l-3.4 1.2l-11-1.2zM839.5 577.2l4.5-9.9l2.5-2.7l11.7 1.3l7 11.9l-4.8 10.5l-3.3 1.2l-11.1-1.2zM842 603.5l4.5-9.8l2.5-2.7l11.8 1.3l6.9 11.8l-4.8 10.6l-3.3 1.2l-11.1-1.2zM844.5 629.7l4.5-9.9l2.5-2.6l11.8 1.2l6.9 11.9l-4.8 10.5l-3.3 1.2l-11.1-1.2zM847 655.9l4.6-9.9l2.4-2.6l11.8 1.3l6.9 11.8l-4.8 10.5l-3.3 1.2l-11-1.2zM849.6 682.1l4.5-9.9l2.4-2.6l11.8 1.3l6.9 11.8l-4.8 10.5l-3.3 1.2l-11-1.2zM852.1 708.2l4.5-9.8l2.4-2.7l11.8 1.4l6.9 11.8l-4.8 10.5l-3.3 1.2l-11-1.3zM854.6 734.4l4.5-9.8l2.4-2.7l11.8 1.3l6.9 11.8l-4.8 10.5l-3.3 1.2l-11-1.3zM857.1 760.5l4.5-9.7l2.4-2.7l11.8 1.3l6.9 11.8l-4.8 10.5l-3.3 1.2l-11-1.3z"/><path class="f" fill="#687038" d="M830 270.7l4.9-10.8l-3.7 1.8l-4.6 10.1zM826.6 271.8l4.6-10.1l-5 0.9l-3.3 7.2zM832.6 297.3l4.8-10.7l-3.7 1.7l-4.5 10.1zM829.2 298.4l4.5-10.1l-5 0.9l-3.2 7.3zM835.1 323.9l4.9-10.7l-3.7 1.8l-4.6 10zM831.7 325l4.6-10l-5 0.9l-3.3 7.2zM837.7 350.5l4.8-10.7l-3.7 1.8l-4.5 10zM834.3 351.6l4.5-10l-5 0.9l-3.3 7.2zM840.2 377.1l4.8-10.7l-3.6 1.7l-4.6 10.1zM836.8 378.2l4.6-10.1l-5.1 0.9l-3.2 7.3zM842.7 403.6l4.9-10.7l-3.7 1.8l-4.5 10zM839.4 404.7l4.5-10l-5 0.9l-3.3 7.2zM845.3 430.1l4.8-10.7l-3.7 1.8l-4.5 10zM841.9 431.2l4.5-10l-5 0.9l-3.2 7.2zM847.8 456.5l4.8-10.6l-3.6 1.8l-4.6 10zM844.4 457.7l4.6-10l-5 0.9l-3.3 7.1zM850.3 482.9l4.8-10.6l-3.6 1.8l-4.5 10zM847 484.1l4.5-10l-5 0.9l-3.3 7.2zM852.8 509.3l4.9-10.6l-3.7 1.8l-4.5 10zM849.5 510.5l4.5-10l-5 0.9l-3.2 7.2zM855.4 535.7l4.8-10.6l-3.7 1.8l-4.5 9.9zM852 536.8l4.5-9.9l-5 0.9l-3.2 7.2zM857.9 562l4.8-10.6l-3.6 1.9l-4.6 9.9zM854.5 563.2l4.6-9.9l-5 0.9l-3.3 7.1zM860.4 588.3l4.8-10.5l-3.6 1.8l-4.5 9.9zM857.1 589.5l4.5-9.9l-5 0.9l-3.3 7.1zM862.9 614.6l4.8-10.6l-3.6 1.9l-4.5 9.9zM859.6 615.8l4.5-9.9l-5 0.9l-3.2 7.1zM865.4 640.8l4.8-10.5l-3.6 1.8l-4.5 9.9zM862.1 642l4.5-9.9l-5 1l-3.2 7.1zM867.9 667l4.8-10.5l-3.6 1.9l-4.5 9.8zM864.6 668.2l4.5-9.8l-5 0.9l-3.2 7.1zM870.4 693.2l4.8-10.5l-3.6 1.9l-4.5 9.8zM867.1 694.4l4.5-9.8l-5 0.9l-3.2 7.1zM872.9 719.4l4.8-10.5l-3.6 1.9l-4.5 9.8zM869.6 720.6l4.5-9.8l-5 0.9l-3.2 7zM875.4 745.5l4.8-10.5l-3.6 1.9l-4.5 9.8zM872.1 746.7l4.5-9.8l-5 0.9l-3.2 7.1zM877.9 771.6l4.8-10.5l-3.6 1.9l-4.5 9.8zM874.6 772.8l4.5-9.8l-5 0.9l-3.2 7.1z"/><path class="f" fill="#bfcab2" d="M834.9 259.9l-7.1-11.9l-3.2 2.5l6.6 11.2zM831.2 261.7l-6.6-11.2l-3.2 4l4.8 8.1zM837.4 286.6l-7-12l-3.2 2.5l6.5 11.2zM833.7 288.3l-6.5-11.2l-3.2 4.1l4.7 8zM840 313.2l-7.1-11.9l-3.2 2.5l6.6 11.2zM836.3 315l-6.6-11.2l-3.2 4l4.8 8.1zM842.5 339.8l-7-11.9l-3.2 2.5l6.5 11.2zM838.8 341.6l-6.5-11.2l-3.2 4l4.7 8.1zM845 366.4l-7-12l-3.2 2.6l6.6 11.1zM841.4 368.1l-6.6-11.1l-3.2 4l4.7 8zM847.6 392.9l-7-11.9l-3.3 2.5l6.6 11.2zM843.9 394.7l-6.6-11.2l-3.1 4l4.7 8.1zM850.1 419.4l-7-11.9l-3.2 2.5l6.5 11.2zM846.4 421.2l-6.5-11.2l-3.2 4.1l4.7 8zM852.6 445.9l-7-11.9l-3.2 2.5l6.6 11.2zM849 447.7l-6.6-11.2l-3.2 4l4.8 8.1zM855.1 472.3l-6.9-11.9l-3.3 2.6l6.6 11.1zM851.5 474.1l-6.6-11.1l-3.1 4l4.7 8zM857.7 498.7l-7-11.9l-3.2 2.6l6.5 11.1zM854 500.5l-6.5-11.1l-3.2 4l4.7 8zM860.2 525.1l-7-11.9l-3.2 2.6l6.5 11.1zM856.5 526.9l-6.5-11.1l-3.2 4l4.7 8zM862.7 551.4l-7-11.8l-3.2 2.5l6.6 11.2zM859.1 553.3l-6.6-11.2l-3.1 4.1l4.7 8zM865.2 577.8l-7-11.9l-3.2 2.6l6.6 11.1zM861.6 579.6l-6.6-11.1l-3.1 4l4.7 8zM867.7 604l-6.9-11.8l-3.2 2.6l6.5 11.1zM864.1 605.9l-6.5-11.1l-3.2 4l4.7 8zM870.2 630.3l-6.9-11.9l-3.2 2.6l6.5 11.1zM866.6 632.1l-6.5-11.1l-3.2 4.1l4.7 8zM872.7 656.5l-6.9-11.8l-3.2 2.6l6.5 11.1zM869.1 658.4l-6.5-11.1l-3.2 4l4.7 8zM875.2 682.7l-6.9-11.8l-3.2 2.6l6.5 11.1zM871.6 684.6l-6.5-11.1l-3.2 4l4.7 8zM877.7 708.9l-6.9-11.8l-3.2 2.6l6.5 11.1zM874.1 710.8l-6.5-11.1l-3.1 4l4.6 8zM880.2 735l-6.9-11.8l-3.2 2.6l6.5 11.1zM876.6 736.9l-6.5-11.1l-3.1 4l4.6 8zM882.7 761.1l-6.9-11.8l-3.2 2.6l6.5 11.1zM879.1 763l-6.5-11.1l-3.1 4.1l4.6 7.9z"/><path class="f" fill="#edd2c2" d="M827.8 248l-11.8-1.2l-2.5 2.6l11.1 1.1zM824.6 250.5l-11.1-1.1l-0.1 4.3l8 0.8zM830.4 274.6l-11.9-1.1l-2.4 2.5l11.1 1.1zM827.2 277.1l-11.1-1.1l-0.1 4.4l8 0.8zM832.9 301.3l-11.8-1.2l-2.5 2.6l11.1 1.1zM829.7 303.8l-11.1-1.1l0 4.3l7.9 0.8zM835.5 327.9l-11.9-1.2l-2.4 2.6l11.1 1.1zM832.3 330.4l-11.1-1.1l-0.1 4.3l8 0.8zM838 354.4l-11.8-1.2l-2.5 2.6l11.1 1.2zM834.8 357l-11.1-1.2l0 4.4l7.9 0.8zM840.6 381l-11.9-1.2l-2.4 2.6l11 1.1zM837.3 383.5l-11-1.1l-0.1 4.3l8 0.8zM843.1 407.5l-11.8-1.2l-2.5 2.6l11.1 1.1zM839.9 410l-11.1-1.1l-0.1 4.3l8 0.9zM845.6 434l-11.8-1.3l-2.5 2.7l11.1 1.1zM842.4 436.5l-11.1-1.1l0 4.3l7.9 0.8zM848.2 460.4l-11.8-1.2l-2.5 2.6l11 1.2zM844.9 463l-11-1.2l-0.1 4.4l8 0.8zM850.7 486.8l-11.8-1.2l-2.5 2.6l11.1 1.2zM847.5 489.4l-11.1-1.2l0 4.4l7.9 0.8zM853.2 513.2l-11.8-1.3l-2.5 2.7l11.1 1.2zM850 515.8l-11.1-1.2l0 4.4l7.9 0.8zM855.7 539.6l-11.8-1.3l-2.4 2.6l11 1.2zM852.5 542.1l-11-1.2l-0.1 4.4l8 0.9zM858.2 565.9l-11.7-1.3l-2.5 2.7l11 1.2zM855 568.5l-11-1.2l-0.1 4.3l8 0.9zM860.8 592.2l-11.8-1.3l-2.5 2.7l11.1 1.2zM857.6 594.8l-11.1-1.2l0 4.3l7.9 0.9zM863.3 618.4l-11.8-1.3l-2.5 2.7l11.1 1.2zM860.1 621l-11.1-1.2l0 4.4l7.9 0.9zM865.8 644.7l-11.8-1.3l-2.4 2.7l11 1.2zM862.6 647.3l-11-1.2l-0.1 4.3l7.9 0.9zM868.3 670.9l-11.8-1.3l-2.4 2.7l11 1.2zM865.1 673.5l-11-1.2l-0.1 4.3l7.9 0.9zM870.8 697.1l-11.8-1.4l-2.4 2.7l11 1.3zM867.6 699.7l-11-1.3l-0.1 4.4l8 0.9zM873.3 723.2l-11.8-1.3l-2.4 2.7l11 1.2zM870.1 725.8l-11-1.2l-0.1 4.3l8 0.9zM875.8 749.3l-11.8-1.3l-2.4 2.7l11 1.2zM872.6 751.9l-11-1.2l-0.1 4.4l8 0.9z"/><path class="f" fill="#bfcab2" d="M813.5 249.4l-4.5 10.1l1.2 1.5l3.2-7.3zM816.1 276l-4.6 10.1l1.2 1.5l3.3-7.2zM818.6 302.7l-4.5 10.1l1.2 1.5l3.3-7.3zM821.2 329.3l-4.6 10l1.3 1.6l3.2-7.3zM823.7 355.8l-4.5 10.1l1.2 1.5l3.3-7.2zM826.3 382.4l-4.6 10l1.2 1.5l3.3-7.2zM828.8 408.9l-4.5 10l1.2 1.5l3.2-7.2zM831.3 435.4l-4.5 10l1.2 1.5l3.3-7.2zM833.9 461.8l-4.5 10l1.2 1.5l3.2-7.1zM836.4 488.2l-4.5 10l1.2 1.5l3.3-7.1zM838.9 514.6l-4.5 9.9l1.2 1.6l3.3-7.1zM841.5 540.9l-4.5 10l1.2 1.6l3.2-7.2zM844 567.3l-4.5 9.9l1.2 1.6l3.2-7.2zM846.5 593.6l-4.5 9.8l1.2 1.6l3.3-7.1zM849 619.8l-4.5 9.9l1.2 1.6l3.3-7.1zM851.6 646.1l-4.5 9.8l1.2 1.6l3.2-7.1zM854.1 672.3l-4.5 9.8l1.2 1.6l3.2-7.1zM856.6 698.4l-4.5 9.8l1.2 1.7l3.2-7.1zM859.1 724.6l-4.5 9.8l1.2 1.6l3.2-7.1zM861.6 750.7l-4.5 9.8l1.2 1.6l3.2-7z"/><path class="g" fill="#58a87c" d="M810.2 261l4.7 8.1l8 0.7l3.3-7.2l-4.8-8.1l-8-0.8zM812.7 287.6l4.8 8.1l8 0.8l3.2-7.3l-4.7-8l-8-0.8zM815.3 314.3l4.7 8l8 0.8l3.3-7.2l-4.8-8.1l-7.9-0.8zM817.9 340.9l4.7 8l7.9 0.8l3.3-7.2l-4.7-8.1l-8-0.8zM820.4 367.4l4.7 8l8 0.9l3.2-7.3l-4.7-8l-7.9-0.8zM822.9 393.9l4.8 8.1l7.9 0.8l3.3-7.2l-4.7-8.1l-8-0.8zM825.5 420.4l4.7 8.1l8 0.8l3.2-7.2l-4.7-8l-8-0.9zM828 446.9l4.7 8l8 0.8l3.3-7.1l-4.8-8.1l-7.9-0.8zM830.6 473.3l4.7 8l7.9 0.9l3.3-7.2l-4.7-8l-8-0.8zM833.1 499.7l4.7 8l8 0.9l3.2-7.2l-4.7-8l-7.9-0.8zM835.6 526.1l4.7 8l8 0.9l3.2-7.2l-4.7-8l-7.9-0.8zM838.2 552.5l4.7 7.9l7.9 0.9l3.3-7.1l-4.7-8l-8-0.9zM840.7 578.8l4.7 8l7.9 0.8l3.3-7.1l-4.7-8l-8-0.9zM843.2 605l4.7 8l8 0.9l3.2-7.1l-4.7-8l-7.9-0.9zM845.7 631.3l4.7 8l8 0.9l3.2-7.1l-4.7-8l-7.9-0.9zM848.3 657.5l4.6 8l8 0.9l3.2-7.1l-4.7-8l-7.9-0.9zM850.8 683.7l4.7 8l7.9 0.9l3.2-7.1l-4.7-8l-7.9-0.9zM853.3 709.9l4.7 7.9l7.9 0.9l3.2-7l-4.6-8l-8-0.9zM855.8 736l4.7 7.9l7.9 1l3.2-7.1l-4.6-8l-8-0.9zM858.3 762.1l4.7 7.9l7.9 1l3.2-7.1l-4.6-7.9l-8-0.9z"/>
<path class="h" d="M1089.8 239.8l5-12.9l12.1-3l2.5 2.2l6.6 9.2l-4.7 12.1l-11.4 2.9l-3.1-0.6zM1092.2 266.5l5-12.9l12.1-3l2.5 2.2l6.6 9.2l-4.8 12.1l-11.3 2.8l-3.1-0.5zM1094.6 293.2l5-12.9l12.1-3.1l2.4 2.2l6.7 9.2l-4.8 12.1l-11.3 2.9l-3.1-0.6zM1097 319.8l5-12.9l12.1-3.1l2.4 2.3l6.6 9.1l-4.7 12.1l-11.3 2.9l-3.1-0.6zM1099.3 346.4l5.1-12.9l12.1-3.1l2.4 2.3l6.6 9.1l-4.7 12.1l-11.3 2.9l-3.1-0.6zM1101.7 372.9l5.1-12.8l12-3.1l2.5 2.2l6.6 9.2l-4.7 12l-11.4 2.9l-3-0.6zM1104.1 399.5l5-12.9l12.1-3.1l2.4 2.3l6.6 9.1l-4.7 12l-11.3 2.9l-3-0.6zM1106.5 426l5-12.9l12.1-3.1l2.4 2.3l6.6 9.1l-4.7 12l-11.3 2.9l-3-0.6zM1108.9 452.4l5-12.8l12.1-3.1l2.4 2.2l6.6 9.1l-4.7 12.1l-11.3 2.9l-3.1-0.6zM1111.2 478.9l5.1-12.9l12-3.1l2.4 2.3l6.6 9.1l-4.7 12l-11.3 2.9l-3-0.6zM1113.6 505.3l5-12.9l12.1-3.1l2.4 2.3l6.6 9.1l-4.7 12l-11.3 2.9l-3-0.6zM1116 531.6l5-12.8l12-3.1l2.5 2.3l6.5 9l-4.6 12l-11.3 3l-3.1-0.7zM1118.4 558l5-12.8l12-3.2l2.4 2.3l6.6 9.1l-4.7 12l-11.3 2.9l-3-0.7zM1120.7 584.3l5-12.8l12.1-3.1l2.4 2.2l6.5 9.1l-4.7 12l-11.2 2.9l-3-0.7zM1123.1 610.6l5-12.8l12-3.2l2.4 2.3l6.6 9.1l-4.7 11.9l-11.3 3l-3-0.7zM1125.5 636.8l5-12.7l12.1-3.2l2.4 2.3l6.5 9l-4.6 12l-11.3 2.9l-3-0.7zM1127.8 663.1l5-12.8l12-3.2l2.4 2.3l6.6 9l-4.7 12l-11.3 3l-3-0.8zM1130.2 689.2l5-12.7l12-3.2l2.4 2.3l6.5 9l-4.7 11.9l-11.2 3l-3-0.7zM1132.5 715.4l5-12.7l12-3.2l2.4 2.3l6.5 8.9l-4.6 12l-11.3 3l-3-0.7zM1134.9 741.5l4.9-12.7l12-3.2l2.4 2.3l6.6 9l-4.7 11.9l-11.2 3l-3.1-0.7z"/><path class="f" fill="#687038" d="M1089.8 239.8l7.1 9.9l3 0.6l-6.6-9.3zM1093.3 241l6.6 9.3l3.1-2.5l-4.8-6.7zM1092.2 266.5l7 9.9l3.1 0.5l-6.6-9.2zM1095.7 267.7l6.6 9.2l3.1-2.4l-4.8-6.7zM1094.6 293.2l7 9.8l3.1 0.6l-6.6-9.2zM1098.1 294.4l6.6 9.2l3.1-2.5l-4.8-6.6zM1097 319.8l7 9.8l3.1 0.6l-6.7-9.2zM1100.4 321l6.7 9.2l3.1-2.5l-4.8-6.6zM1099.3 346.4l7.1 9.8l3.1 0.6l-6.7-9.2zM1102.8 347.6l6.7 9.2l3.1-2.5l-4.8-6.6zM1101.7 372.9l7.1 9.8l3 0.6l-6.6-9.1zM1105.2 374.2l6.6 9.1l3.1-2.4l-4.7-6.6zM1104.1 399.5l7.1 9.7l3 0.6l-6.6-9.1zM1107.6 400.7l6.6 9.1l3.1-2.4l-4.7-6.6zM1106.5 426l7 9.7l3.1 0.6l-6.6-9.1zM1110 427.2l6.6 9.1l3.1-2.4l-4.8-6.6zM1108.9 452.4l7 9.8l3.1 0.6l-6.6-9.1zM1112.4 453.7l6.6 9.1l3.1-2.4l-4.8-6.6zM1111.2 478.9l7.1 9.7l3 0.6l-6.6-9.1zM1114.7 480.1l6.6 9.1l3.1-2.4l-4.7-6.5zM1113.6 505.3l7.1 9.7l3 0.6l-6.6-9.1zM1117.1 506.5l6.6 9.1l3.1-2.4l-4.7-6.5zM1116 531.6l7 9.7l3.1 0.7l-6.6-9.1zM1119.5 532.9l6.6 9.1l3.1-2.4l-4.8-6.5zM1118.4 558l7 9.6l3 0.7l-6.6-9zM1121.8 559.3l6.6 9l3.1-2.4l-4.7-6.5zM1120.7 584.3l7 9.6l3.1 0.7l-6.6-9zM1124.2 585.6l6.6 9l3.1-2.4l-4.8-6.5zM1123.1 610.6l7 9.6l3 0.7l-6.5-9zM1126.6 611.9l6.5 9l3.1-2.4l-4.7-6.5zM1125.4 636.8l7.1 9.6l3 0.7l-6.6-9zM1128.9 638.1l6.6 9l3.1-2.3l-4.7-6.5zM1127.8 663.1l7 9.5l3 0.7l-6.5-8.9zM1131.3 664.4l6.5 8.9l3.1-2.3l-4.7-6.5zM1130.2 689.3l7 9.5l3 0.7l-6.6-8.9zM1133.6 690.6l6.6 8.9l3.1-2.3l-4.7-6.5zM1132.5 715.4l7 9.6l3 0.7l-6.5-9zM1136 716.7l6.5 9l3.1-2.4l-4.7-6.4zM1134.9 741.5l6.9 9.6l3.1 0.7l-6.6-8.9zM1138.3 742.9l6.6 8.9l3.1-2.3l-4.7-6.5z"/><path class="f" fill="#566030" d="M1099.9 250.3l11.4-2.9l-0.1-1.7l-8.2 2.1zM1102.3 276.9l11.4-2.8l-0.1-1.7l-8.2 2.1zM1104.7 303.6l11.3-2.9l0-1.7l-8.2 2.1zM1107.1 330.2l11.3-2.9l-0.1-1.6l-8.1 2zM1109.5 356.8l11.3-2.9l-0.1-1.7l-8.1 2.1zM1111.8 383.3l11.4-2.9l-0.1-1.6l-8.2 2.1zM1114.2 409.8l11.3-2.9l0-1.6l-8.2 2.1zM1116.6 436.3l11.3-2.9l-0.1-1.6l-8.1 2.1zM1119 462.8l11.3-2.9l-0.1-1.6l-8.1 2.1zM1121.3 489.2l11.3-2.9l0-1.6l-8.2 2.1zM1123.7 515.6l11.3-2.9l-0.1-1.6l-8.1 2.1zM1126.1 542l11.2-3l0-1.5l-8.1 2.1zM1128.4 568.3l11.3-2.9l-0.1-1.6l-8.1 2.1zM1130.8 594.6l11.3-2.9l-0.1-1.6l-8.1 2.1zM1133.1 620.9l11.3-3l-0.1-1.5l-8.1 2.1zM1135.5 647.1l11.2-2.9l0-1.6l-8.1 2.2z"/><path class="f" fill="#bfcab2" d="M1116 235.3l-6.6-9.2l0.4 4.3l4.8 6.6zM1118.4 262l-6.7-9.2l0.5 4.3l4.8 6.6zM1120.8 288.6l-6.7-9.2l0.5 4.3l4.7 6.7zM1123.1 315.3l-6.6-9.2l0.5 4.3l4.7 6.6zM1125.5 341.8l-6.6-9.1l0.4 4.3l4.8 6.6zM1127.9 368.4l-6.6-9.2l0.4 4.3l4.8 6.6zM1130.2 394.9l-6.6-9.1l0.5 4.3l4.7 6.5zM1132.6 421.4l-6.6-9.1l0.5 4.3l4.7 6.5zM1135 447.8l-6.6-9.1l0.4 4.4l4.8 6.5zM1137.3 474.3l-6.6-9.1l0.5 4.3l4.7 6.5zM1139.7 500.7l-6.6-9.1l0.5 4.3l4.7 6.5zM1142 527l-6.5-9l0.4 4.3l4.8 6.5zM1144.4 553.4l-6.6-9.1l0.5 4.4l4.7 6.5zM1146.7 579.7l-6.5-9.1l0.4 4.4l4.8 6.5zM1149.1 606l-6.6-9.1l0.5 4.4l4.7 6.5zM1151.4 632.2l-6.5-9l0.4 4.3l4.7 6.5zM1153.8 658.4l-6.6-9l0.5 4.4l4.7 6.4zM1156.1 684.6l-6.5-9l0.4 4.4l4.7 6.4zM1158.4 710.7l-6.5-8.9l0.5 4.3l4.7 6.5zM1160.8 736.9l-6.6-9l0.5 4.4l4.7 6.4z"/><path class="f" fill="#edd2c2" d="M1106.9 223.9l-12.1 3l3.2 2l11.4-2.8zM1109.4 226.1l-11.4 2.8l3.6 3.5l8.2-2zM1109.3 250.6l-12.1 3l3.2 2l11.3-2.8zM1111.7 252.8l-11.3 2.8l3.6 3.5l8.2-2zM1111.7 277.2l-12.1 3.1l3.2 2l11.3-2.9zM1114.1 279.4l-11.3 2.9l3.6 3.5l8.2-2.1zM1114.1 303.8l-12.1 3.1l3.2 2l11.3-2.8zM1116.5 306.1l-11.3 2.8l3.6 3.5l8.2-2zM1116.5 330.4l-12.1 3.1l3.2 2l11.3-2.8zM1118.9 332.7l-11.3 2.8l3.6 3.5l8.1-2zM1118.9 357l-12.1 3.1l3.1 2l11.4-2.9zM1121.3 359.2l-11.4 2.9l3.7 3.5l8.1-2.1zM1121.2 383.5l-12.1 3.1l3.2 2.1l11.3-2.9zM1123.6 385.8l-11.3 2.9l3.7 3.5l8.1-2.1zM1123.6 410l-12.1 3.1l3.2 2.1l11.3-2.9zM1126 412.3l-11.3 2.9l3.6 3.5l8.2-2.1zM1126 436.5l-12.1 3.1l3.2 2.1l11.3-3zM1128.4 438.7l-11.3 3l3.6 3.5l8.1-2.1zM1128.3 462.9l-12 3.1l3.1 2.1l11.3-2.9zM1130.7 465.2l-11.3 2.9l3.7 3.5l8.1-2.1zM1130.7 489.3l-12.1 3.2l3.2 2l11.3-2.9zM1133.1 491.6l-11.3 2.9l3.6 3.5l8.2-2.1zM1133.1 515.7l-12.1 3.1l3.2 2.1l11.3-2.9zM1135.5 518l-11.3 2.9l3.6 3.5l8.1-2.1zM1135.4 542l-12 3.2l3.1 2.1l11.3-3zM1137.8 544.3l-11.3 3l3.7 3.5l8.1-2.1zM1137.8 568.4l-12.1 3.1l3.2 2.1l11.3-3zM1140.2 570.6l-11.3 3l3.6 3.5l8.1-2.1zM1140.1 594.6l-12 3.2l3.2 2.1l11.2-3zM1142.5 596.9l-11.2 3l3.6 3.5l8.1-2.1zM1142.5 620.9l-12 3.2l3.1 2.1l11.3-3zM1144.9 623.2l-11.3 3l3.6 3.5l8.1-2.2zM1144.8 647.1l-12 3.2l3.2 2.1l11.2-3zM1147.2 649.4l-11.2 3l3.6 3.5l8.1-2.1zM1147.2 673.3l-12 3.2l3.1 2.1l11.3-3zM1149.6 675.6l-11.3 3l3.6 3.5l8.1-2.1zM1149.5 699.5l-12 3.2l3.2 2.1l11.2-3zM1151.9 701.8l-11.2 3l3.6 3.5l8.1-2.2zM1151.8 725.6l-11.9 3.2l3.1 2.1l11.2-3zM1154.2 727.9l-11.2 3l3.6 3.5l8.1-2.1z"/><path class="f" fill="#bfcab2" d="M1094.8 226.9l-5 12.9l3.5 1.2l4.7-12.1zM1098 228.9l-4.7 12.1l4.9 0.1l3.4-8.7zM1097.2 253.6l-5 12.9l3.5 1.2l4.7-12.1zM1100.4 255.6l-4.7 12.1l4.9 0.1l3.4-8.7zM1099.6 280.3l-5 12.9l3.5 1.2l4.7-12.1zM1102.8 282.3l-4.7 12.1l4.9 0.1l3.4-8.7zM1102 306.9l-5 12.9l3.4 1.2l4.8-12.1zM1105.2 308.9l-4.8 12.1l5 0.1l3.4-8.7zM1104.4 333.5l-5.1 12.9l3.5 1.2l4.8-12.1zM1107.6 335.5l-4.8 12.1l5 0.1l3.4-8.7zM1106.8 360.1l-5.1 12.8l3.5 1.3l4.7-12.1zM1109.9 362.1l-4.7 12.1l5 0.1l3.4-8.7zM1109.1 386.6l-5 12.9l3.5 1.2l4.7-12zM1112.3 388.7l-4.7 12l5 0.1l3.4-8.6zM1111.5 413.1l-5 12.9l3.5 1.2l4.7-12zM1114.7 415.2l-4.7 12l4.9 0.1l3.4-8.6zM1113.9 439.6l-5 12.8l3.5 1.3l4.7-12zM1117.1 441.7l-4.7 12l4.9 0.1l3.4-8.6zM1116.3 466l-5.1 12.9l3.5 1.2l4.7-12zM1119.4 468.1l-4.7 12l5 0.2l3.4-8.7zM1118.6 492.5l-5 12.8l3.5 1.2l4.7-12zM1121.8 494.5l-4.7 12l5 0.2l3.3-8.7zM1121 518.8l-5 12.8l3.5 1.3l4.7-12zM1124.2 520.9l-4.7 12l4.9 0.2l3.4-8.7zM1123.4 545.2l-5 12.8l3.4 1.3l4.7-12zM1126.5 547.3l-4.7 12l5 0.1l3.4-8.6zM1125.7 571.5l-5 12.8l3.5 1.3l4.7-12zM1128.9 573.6l-4.7 12l4.9 0.1l3.4-8.6zM1128.1 597.8l-5 12.8l3.5 1.3l4.7-12zM1131.3 599.9l-4.7 12l4.9 0.1l3.4-8.6zM1130.5 624.1l-5.1 12.7l3.5 1.3l4.7-11.9zM1133.6 626.2l-4.7 11.9l5 0.2l3.3-8.6zM1132.8 650.3l-5 12.8l3.5 1.3l4.7-12zM1136 652.4l-4.7 12l4.9 0.1l3.4-8.6zM1135.2 676.5l-5 12.8l3.4 1.3l4.7-12zM1138.3 678.6l-4.7 12l5 0.1l3.3-8.6zM1137.5 702.7l-5 12.7l3.5 1.3l4.7-11.9zM1140.7 704.8l-4.7 11.9l4.9 0.2l3.4-8.6zM1139.9 728.8l-5 12.7l3.4 1.4l4.7-12zM1143 730.9l-4.7 12l5 0.1l3.3-8.6z"/><path class="g" fill="#58a87c" d="M1098.2 241.1l4.8 6.7l8.2-2.1l3.4-8.7l-4.8-6.6l-8.2 2zM1100.6 267.8l4.8 6.7l8.2-2.1l3.4-8.7l-4.8-6.6l-8.2 2zM1103 294.5l4.8 6.6l8.2-2.1l3.3-8.6l-4.7-6.7l-8.2 2.1zM1105.4 321.1l4.8 6.6l8.1-2l3.4-8.7l-4.7-6.6l-8.2 2zM1107.8 347.7l4.8 6.6l8.1-2.1l3.4-8.6l-4.8-6.6l-8.1 2zM1110.2 374.3l4.7 6.6l8.2-2.1l3.4-8.7l-4.8-6.6l-8.1 2.1zM1112.6 400.8l4.7 6.6l8.2-2.1l3.3-8.7l-4.7-6.5l-8.1 2.1zM1114.9 427.3l4.8 6.6l8.1-2.1l3.4-8.7l-4.7-6.5l-8.2 2.1zM1117.3 453.8l4.8 6.6l8.1-2.1l3.4-8.7l-4.8-6.5l-8.1 2.1zM1119.7 480.3l4.7 6.5l8.2-2.1l3.3-8.7l-4.7-6.5l-8.1 2.1zM1122.1 506.7l4.7 6.5l8.1-2.1l3.4-8.7l-4.7-6.5l-8.2 2.1zM1124.4 533.1l4.8 6.5l8.1-2.1l3.4-8.7l-4.8-6.5l-8.1 2.1zM1126.8 559.4l4.7 6.5l8.1-2.1l3.4-8.6l-4.7-6.5l-8.1 2.1zM1129.1 585.7l4.8 6.5l8.1-2.1l3.4-8.6l-4.8-6.5l-8.1 2.1zM1131.5 612l4.7 6.5l8.1-2.1l3.4-8.6l-4.7-6.5l-8.1 2.1zM1133.9 638.3l4.7 6.5l8.1-2.2l3.3-8.6l-4.7-6.5l-8.1 2.2zM1136.2 664.5l4.7 6.5l8.1-2.2l3.4-8.6l-4.7-6.4l-8.1 2.1zM1138.6 690.7l4.7 6.5l8.1-2.2l3.3-8.6l-4.7-6.4l-8.1 2.1zM1140.9 716.9l4.7 6.4l8.1-2.1l3.4-8.6l-4.7-6.5l-8.1 2.2zM1143.3 743l4.7 6.5l8-2.2l3.4-8.6l-4.7-6.4l-8.1 2.1z"/>
<g class="y"><path class="h" d="M841.3 262.4l4.9-10.4l1.9-2.6l12.6 0.6l7.4 11.7l-5.2 11.1l-2.8 1.1l-11.8-0.5zM843.9 289.1l4.9-10.4l1.8-2.6l12.7 0.6l7.4 11.7l-5.3 11l-2.7 1.2l-11.9-0.6zM846.4 315.7l4.9-10.3l1.8-2.7l12.7 0.7l7.4 11.6l-5.3 11.1l-2.7 1.1l-11.8-0.6zM849 342.3l4.9-10.3l1.8-2.6l12.6 0.6l7.4 11.6l-5.2 11.1l-2.8 1.1l-11.8-0.6zM851.5 368.9l4.9-10.3l1.8-2.7l12.6 0.7l7.4 11.6l-5.2 11l-2.7 1.2l-11.9-0.6zM854 395.4l4.9-10.2l1.8-2.7l12.7 0.6l7.4 11.7l-5.3 11l-2.7 1.2l-11.8-0.6zM856.6 422l4.9-10.3l1.8-2.7l12.6 0.7l7.4 11.6l-5.3 11l-2.7 1.2l-11.8-0.6zM859.1 448.4l4.9-10.2l1.8-2.7l12.6 0.7l7.4 11.6l-5.3 11l-2.7 1.2l-11.8-0.7zM861.6 474.9l4.9-10.3l1.8-2.6l12.6 0.6l7.4 11.7l-5.3 10.9l-2.7 1.2l-11.8-0.6zM864.1 501.3l4.9-10.2l1.8-2.7l12.6 0.7l7.4 11.6l-5.2 10.9l-2.8 1.2l-11.8-0.6zM866.6 527.7l4.9-10.2l1.8-2.7l12.6 0.7l7.4 11.6l-5.2 10.9l-2.8 1.2l-11.7-0.6zM869.2 554.1l4.8-10.2l1.8-2.7l12.6 0.7l7.4 11.6l-5.2 10.9l-2.8 1.2l-11.7-0.7zM871.7 580.4l4.9-10.2l1.7-2.7l12.6 0.7l7.4 11.6l-5.2 10.9l-2.7 1.2l-11.8-0.6zM874.2 606.7l4.9-10.1l1.7-2.8l12.6 0.8l7.4 11.5l-5.2 10.9l-2.8 1.2l-11.7-0.6zM876.7 633l4.9-10.2l1.8-2.7l12.5 0.7l7.4 11.6l-5.3 10.8l-2.7 1.3l-11.7-0.7zM879.2 659.2l4.9-10.1l1.7-2.7l12.6 0.7l7.4 11.6l-5.3 10.8l-2.7 1.2l-11.7-0.7zM881.7 685.4l4.9-10.1l1.7-2.7l12.6 0.7l7.3 11.6l-5.2 10.8l-2.7 1.3l-11.7-0.8zM884.2 711.6l4.9-10.1l1.7-2.7l12.6 0.7l7.3 11.6l-5.2 10.7l-2.7 1.3l-11.8-0.7zM886.7 737.8l4.9-10.1l1.7-2.8l12.6 0.8l7.3 11.5l-5.2 10.8l-2.7 1.3l-11.8-0.7zM889.2 763.9l4.8-10.1l1.8-2.7l12.6 0.7l7.3 11.6l-5.2 10.7l-2.7 1.3l-11.8-0.7z"/><path class="f" fill="#b8941a" d="M848.3 273.3l11.8 0.6l-3.4-1.8l-8.5-0.4zM850.8 300l11.9 0.6l-3.4-1.9l-8.6-0.4zM853.4 326.6l11.8 0.6l-3.4-1.8l-8.5-0.4zM855.9 353.2l11.8 0.6l-3.4-1.8l-8.5-0.4zM858.4 379.8l11.9 0.6l-3.5-1.8l-8.5-0.4zM861 406.4l11.8 0.6l-3.4-1.9l-8.5-0.4zM863.5 432.9l11.8 0.6l-3.4-1.8l-8.5-0.5zM866 459.3l11.8 0.7l-3.4-1.8l-8.5-0.5zM868.5 485.8l11.8 0.6l-3.4-1.8l-8.5-0.4zM871 512.2l11.8 0.6l-3.4-1.7l-8.5-0.5zM873.5 538.6l11.8 0.6l-3.4-1.7l-8.4-0.5zM876.1 564.9l11.7 0.7l-3.4-1.8l-8.4-0.4zM878.6 591.3l11.7 0.6l-3.3-1.7l-8.5-0.5zM881.1 617.6l11.7 0.6l-3.3-1.7l-8.5-0.5zM883.6 643.8l11.7 0.7l-3.4-1.7l-8.4-0.5zM886.1 670.1l11.7 0.6l-3.4-1.7l-8.4-0.5zM888.6 696.3l11.7 0.7l-3.4-1.8l-8.4-0.5zM891.1 722.4l11.7 0.7l-3.4-1.7l-8.4-0.5zM893.5 748.6l11.8 0.7l-3.4-1.7l-8.4-0.6zM896 774.7l11.8 0.7l-3.4-1.7l-8.5-0.5z"/><path class="f" fill="#c9a21a" d="M862.9 272.8l5.2-11.1l-3 1.8l-5 10.4zM860.1 273.9l5-10.4l-4.8 1.1l-3.6 7.5zM865.4 299.4l5.3-11l-3.1 1.8l-4.9 10.4zM862.7 300.6l4.9-10.4l-4.8 1.1l-3.5 7.4zM867.9 326.1l5.3-11.1l-3.1 1.9l-4.9 10.3zM865.2 327.2l4.9-10.3l-4.8 1l-3.5 7.5zM870.5 352.7l5.2-11.1l-3 1.9l-5 10.3zM867.7 353.8l5-10.3l-4.9 1.1l-3.5 7.4zM873 379.2l5.2-11l-3 1.9l-4.9 10.3zM870.3 380.4l4.9-10.3l-4.8 1.1l-3.6 7.4zM875.5 405.8l5.2-11l-3 1.9l-4.9 10.3zM872.8 407l4.9-10.3l-4.8 1l-3.5 7.4zM878 432.3l5.3-11l-3.1 1.9l-4.9 10.3zM875.3 433.5l4.9-10.3l-4.8 1.1l-3.5 7.4zM880.5 458.8l5.3-11l-3.1 1.9l-4.9 10.3zM877.8 460l4.9-10.3l-4.8 1.1l-3.5 7.4zM883 485.2l5.3-10.9l-3.1 1.9l-4.9 10.2zM880.3 486.4l4.9-10.2l-4.8 1.1l-3.5 7.3zM885.6 511.6l5.2-10.9l-3.1 1.9l-4.9 10.2zM882.8 512.8l4.9-10.2l-4.7 1.1l-3.6 7.4zM888.1 538l5.2-10.9l-3.1 1.9l-4.9 10.2zM885.3 539.2l4.9-10.2l-4.7 1.1l-3.6 7.4zM890.6 564.4l5.2-10.9l-3.1 1.9l-4.9 10.2zM887.8 565.6l4.9-10.2l-4.7 1.1l-3.6 7.3zM893.1 590.7l5.2-10.9l-3.1 1.9l-4.9 10.2zM890.3 591.9l4.9-10.2l-4.7 1.1l-3.5 7.4zM895.6 617l5.2-10.9l-3.1 2l-4.9 10.1zM892.8 618.2l4.9-10.1l-4.7 1.1l-3.5 7.3zM898 643.2l5.3-10.8l-3.1 1.9l-4.9 10.2zM895.3 644.5l4.9-10.2l-4.7 1.2l-3.6 7.3zM900.5 669.5l5.3-10.8l-3.1 1.9l-4.9 10.1zM897.8 670.7l4.9-10.1l-4.7 1.1l-3.6 7.3zM903 695.7l5.2-10.8l-3 1.9l-4.9 10.2zM900.3 697l4.9-10.2l-4.7 1.1l-3.6 7.3zM905.5 721.8l5.2-10.7l-3 1.9l-4.9 10.1zM902.8 723.1l4.9-10.1l-4.8 1.1l-3.5 7.3zM905.3 749.3l4.9-10.1l-4.8 1.1l-3.5 7.3zM907.8 775.4l4.9-10.1l-4.8 1.1l-3.5 7.3z"/><path class="f" fill="#fbe27a" d="M868.1 261.7l-7.4-11.7l-2.6 2.6l7 10.9zM865.1 263.5l-7-10.9l-2.8 4.1l5 7.9zM870.7 288.4l-7.4-11.7l-2.6 2.6l6.9 10.9zM867.6 290.2l-6.9-10.9l-2.9 4.1l5 7.9zM873.2 315l-7.4-11.7l-2.6 2.6l6.9 11zM870.1 316.9l-6.9-11l-2.9 4.2l5 7.8zM875.7 341.6l-7.4-11.6l-2.6 2.6l7 10.9zM872.7 343.5l-7-10.9l-2.8 4.1l4.9 7.9zM878.2 368.2l-7.4-11.6l-2.6 2.6l7 10.9zM875.2 370.1l-7-10.9l-2.8 4.1l5 7.9zM880.7 394.8l-7.3-11.7l-2.6 2.7l6.9 10.9zM877.7 396.7l-6.9-10.9l-2.9 4.1l5 7.8zM883.3 421.3l-7.4-11.6l-2.6 2.6l6.9 10.9zM880.2 423.2l-6.9-10.9l-2.9 4.1l5 7.9zM885.8 447.8l-7.4-11.6l-2.6 2.6l6.9 10.9zM882.7 449.7l-6.9-10.9l-2.8 4.1l4.9 7.9zM888.3 474.3l-7.4-11.7l-2.6 2.7l6.9 10.9zM885.2 476.2l-6.9-10.9l-2.8 4.1l4.9 7.9zM890.8 500.7l-7.4-11.6l-2.6 2.6l6.9 10.9zM887.7 502.6l-6.9-10.9l-2.8 4.2l5 7.8zM893.3 527.1l-7.4-11.6l-2.6 2.6l6.9 10.9zM890.2 529l-6.9-10.9l-2.8 4.2l5 7.8zM895.8 553.5l-7.4-11.6l-2.6 2.6l6.9 10.9zM892.7 555.4l-6.9-10.9l-2.8 4.2l5 7.8zM898.3 579.8l-7.4-11.6l-2.6 2.7l6.9 10.8zM895.2 581.7l-6.9-10.8l-2.8 4.1l5 7.8zM900.8 606.1l-7.4-11.5l-2.5 2.6l6.8 10.9zM897.7 608.1l-6.8-10.9l-2.9 4.2l5 7.8zM903.3 632.4l-7.4-11.6l-2.6 2.7l6.9 10.8zM900.2 634.3l-6.9-10.8l-2.8 4.2l5 7.8zM905.8 658.7l-7.4-11.6l-2.6 2.7l6.9 10.8zM902.7 660.6l-6.9-10.8l-2.8 4.1l5 7.8zM908.2 684.9l-7.3-11.6l-2.6 2.7l6.9 10.8zM905.2 686.8l-6.9-10.8l-2.8 4.2l5 7.7zM910.7 711.1l-7.3-11.6l-2.6 2.7l6.9 10.8zM907.7 713l-6.9-10.8l-2.8 4.2l4.9 7.7zM913.2 737.2l-7.3-11.5l-2.6 2.7l6.9 10.8zM910.2 739.2l-6.9-10.8l-2.8 4.1l4.9 7.8zM915.7 763.4l-7.3-11.6l-2.6 2.7l6.9 10.8zM912.7 765.3l-6.9-10.8l-2.8 4.2l4.9 7.7z"/><path class="f" fill="#fdeea0" d="M860.7 250l-12.6-0.6l-1.8 2.6l11.8 0.6zM858.1 252.6l-11.8-0.6l0.4 4.3l8.6 0.4zM863.3 276.7l-12.7-0.6l-1.8 2.6l11.9 0.6zM860.7 279.3l-11.9-0.6l0.5 4.3l8.5 0.4zM865.8 303.3l-12.7-0.6l-1.8 2.7l11.9 0.5zM863.2 305.9l-11.9-0.5l0.5 4.3l8.5 0.4zM868.3 330l-12.6-0.6l-1.8 2.6l11.8 0.6zM865.7 332.6l-11.8-0.6l0.4 4.3l8.6 0.4zM870.8 356.6l-12.6-0.7l-1.8 2.7l11.8 0.6zM868.2 359.2l-11.8-0.6l0.5 4.3l8.5 0.4zM873.4 383.1l-12.7-0.6l-1.8 2.6l11.9 0.7zM870.8 385.8l-11.9-0.7l0.5 4.4l8.5 0.4zM875.9 409.7l-12.6-0.7l-1.8 2.7l11.8 0.6zM873.3 412.3l-11.8-0.6l0.4 4.3l8.5 0.4zM878.4 436.2l-12.6-0.7l-1.8 2.7l11.8 0.6zM875.8 438.8l-11.8-0.6l0.5 4.3l8.5 0.4zM880.9 462.6l-12.6-0.6l-1.8 2.7l11.8 0.6zM878.3 465.3l-11.8-0.6l0.5 4.3l8.5 0.4zM883.4 489.1l-12.6-0.7l-1.8 2.7l11.8 0.6zM880.8 491.7l-11.8-0.6l0.5 4.3l8.5 0.5zM885.9 515.5l-12.6-0.7l-1.8 2.7l11.8 0.6zM883.3 518.1l-11.8-0.6l0.5 4.3l8.5 0.5zM888.4 541.9l-12.6-0.7l-1.8 2.7l11.8 0.6zM885.8 544.5l-11.8-0.6l0.5 4.3l8.5 0.5zM890.9 568.2l-12.6-0.7l-1.7 2.7l11.7 0.7zM888.3 570.9l-11.7-0.7l0.4 4.4l8.5 0.4zM893.4 594.6l-12.6-0.8l-1.7 2.7l11.8 0.7zM890.9 597.2l-11.8-0.7l0.4 4.4l8.5 0.5zM895.9 620.8l-12.5-0.7l-1.8 2.7l11.7 0.7zM893.3 623.5l-11.7-0.7l0.4 4.4l8.5 0.5zM898.4 647.1l-12.6-0.7l-1.7 2.7l11.7 0.7zM895.8 649.8l-11.7-0.7l0.4 4.3l8.5 0.5zM900.9 673.3l-12.6-0.7l-1.7 2.7l11.7 0.7zM898.3 676l-11.7-0.7l0.4 4.4l8.5 0.5zM903.4 699.5l-12.6-0.7l-1.7 2.7l11.7 0.7zM900.8 702.2l-11.7-0.7l0.4 4.4l8.5 0.5zM905.9 725.7l-12.6-0.8l-1.7 2.8l11.7 0.7zM903.3 728.4l-11.7-0.7l0.4 4.3l8.5 0.5zM908.4 751.8l-12.6-0.7l-1.8 2.7l11.8 0.7zM905.8 754.5l-11.8-0.7l0.5 4.4l8.5 0.5z"/><path class="f" fill="#fbe27a" d="M846.3 252l-5 10.4l1.9 1.4l3.5-7.5zM848.8 278.7l-4.9 10.4l1.8 1.4l3.6-7.5zM851.3 305.4l-4.9 10.3l1.9 1.4l3.5-7.4zM853.9 332l-4.9 10.3l1.8 1.4l3.5-7.4zM856.4 358.6l-4.9 10.3l1.8 1.4l3.6-7.4zM858.9 385.1l-4.9 10.3l1.9 1.5l3.5-7.4zM861.5 411.7l-4.9 10.3l1.8 1.4l3.5-7.4zM864 438.2l-4.9 10.3l1.8 1.4l3.6-7.4zM866.5 464.7l-4.9 10.2l1.9 1.4l3.5-7.3zM869 491.1l-4.9 10.2l1.9 1.5l3.5-7.4zM871.5 517.5l-4.9 10.2l1.9 1.5l3.5-7.4zM874 543.9l-4.8 10.2l1.8 1.4l3.5-7.3zM876.6 570.2l-4.9 10.2l1.8 1.5l3.5-7.3zM879.1 596.5l-4.9 10.2l1.8 1.5l3.5-7.3zM881.6 622.8l-4.9 10.2l1.8 1.5l3.5-7.3zM884.1 649.1l-4.9 10.1l1.8 1.5l3.5-7.3zM886.6 675.3l-4.9 10.1l1.8 1.5l3.5-7.2zM889.1 701.5l-4.9 10.1l1.8 1.5l3.5-7.2zM891.6 727.7l-4.9 10.1l1.8 1.5l3.5-7.3zM894 753.8l-4.8 10.1l1.8 1.5l3.5-7.2z"/><path class="g" d="M843.2 263.8l5 7.9l8.5 0.4l3.6-7.5l-5-7.9l-8.6-0.4zM845.7 290.5l5 7.8l8.6 0.4l3.5-7.4l-5-7.9l-8.5-0.4zM848.3 317.1l5 7.9l8.5 0.4l3.5-7.5l-5-7.8l-8.5-0.4zM850.8 343.7l5 7.9l8.5 0.4l3.5-7.4l-4.9-7.9l-8.6-0.4zM853.3 370.3l5 7.9l8.5 0.4l3.6-7.4l-5-7.9l-8.5-0.4zM855.9 396.9l5 7.8l8.5 0.4l3.5-7.4l-5-7.8l-8.5-0.4zM858.4 423.4l5 7.8l8.5 0.5l3.5-7.4l-5-7.9l-8.5-0.4zM860.9 449.9l5 7.8l8.5 0.5l3.5-7.4l-4.9-7.9l-8.5-0.4zM863.5 476.3l4.9 7.9l8.5 0.4l3.5-7.3l-4.9-7.9l-8.5-0.4zM866 502.8l4.9 7.8l8.5 0.5l3.6-7.4l-5-7.8l-8.5-0.5zM868.5 529.2l5 7.8l8.4 0.5l3.6-7.4l-5-7.8l-8.5-0.5zM871 555.5l5 7.9l8.4 0.4l3.6-7.3l-5-7.8l-8.5-0.5zM873.5 581.9l5 7.8l8.5 0.5l3.5-7.4l-5-7.8l-8.5-0.4zM876 608.2l5 7.8l8.5 0.5l3.5-7.3l-5-7.8l-8.5-0.5zM878.5 634.5l5 7.8l8.4 0.5l3.6-7.3l-5-7.8l-8.5-0.5zM881 660.7l5 7.8l8.4 0.5l3.6-7.3l-5-7.8l-8.5-0.5zM883.5 686.9l5 7.8l8.4 0.5l3.6-7.3l-5-7.7l-8.5-0.5zM886 713.1l5 7.8l8.4 0.5l3.5-7.3l-4.9-7.7l-8.5-0.5zM888.5 739.3l5 7.7l8.4 0.6l3.5-7.3l-4.9-7.8l-8.5-0.5zM891 765.4l4.9 7.8l8.5 0.5l3.5-7.3l-4.9-7.7l-8.5-0.5z"/></g>
<path class="h" d="M1055.9 246.9l5.4-12.7l12.9-2.6l7.4 10.1l1.3 1.7l-5.1 11.9l-12 2.4l-2.4-0.7zM1058.3 273.6l5.4-12.7l12.9-2.6l7.5 10.1l1.2 1.7l-5.1 11.9l-12 2.4l-2.4-0.7zM1060.8 300.3l5.4-12.7l12.8-2.6l7.5 10l1.2 1.7l-5 11.9l-12.1 2.5l-2.4-0.8zM1063.2 326.9l5.4-12.7l12.8-2.6l7.5 10l1.2 1.8l-5 11.8l-12.1 2.5l-2.4-0.8zM1065.6 353.5l5.4-12.7l12.8-2.6l7.4 10l1.3 1.8l-5 11.8l-12.1 2.5l-2.4-0.8zM1068 380.1l5.4-12.7l12.8-2.6l7.4 10l1.3 1.8l-5.1 11.8l-12 2.5l-2.4-0.8zM1070.4 406.6l5.4-12.6l12.8-2.6l7.4 9.9l1.3 1.8l-5.1 11.8l-12 2.5l-2.4-0.8zM1072.8 433.1l5.4-12.7l12.8-2.6l7.4 9.9l1.3 1.8l-5.1 11.8l-12 2.5l-2.4-0.8zM1075.2 459.6l5.4-12.6l12.8-2.6l7.4 9.9l1.3 1.8l-5.1 11.8l-12 2.5l-2.4-0.8zM1077.6 486.1l5.4-12.6l12.8-2.7l7.4 10l1.2 1.7l-5 11.8l-12 2.5l-2.4-0.8zM1080 512.5l5.4-12.6l12.8-2.7l7.4 10l1.2 1.8l-5 11.8l-12 2.5l-2.4-0.9zM1082.4 538.9l5.4-12.6l12.7-2.7l7.4 9.9l1.3 1.8l-5 11.8l-12 2.5l-2.4-0.8zM1084.8 565.3l5.3-12.6l12.8-2.7l7.4 9.9l1.3 1.8l-5.1 11.8l-11.9 2.5l-2.4-0.8zM1087.2 591.6l5.3-12.6l12.8-2.7l7.4 9.9l1.2 1.8l-5 11.8l-11.9 2.5l-2.4-0.8zM1089.5 617.9l5.4-12.6l12.8-2.7l7.3 9.9l1.3 1.8l-5 11.8l-12 2.5l-2.4-0.9zM1091.9 644.2l5.4-12.6l12.7-2.7l7.4 9.9l1.3 1.8l-5.1 11.7l-11.9 2.6l-2.4-0.9zM1094.3 670.4l5.4-12.6l12.7-2.6l7.4 9.8l1.2 1.8l-5 11.8l-11.9 2.5l-2.4-0.9zM1096.7 696.6l5.3-12.5l12.8-2.7l7.3 9.8l1.3 1.8l-5 11.8l-12 2.5l-2.3-0.9zM1099 722.8l5.4-12.5l12.7-2.8l7.4 9.8l1.3 1.9l-5.1 11.7l-11.9 2.6l-2.4-0.9zM1101.4 748.9l5.4-12.5l12.7-2.7l7.3 9.8l1.3 1.8l-5 11.7l-11.9 2.6l-2.4-0.9z"/><path class="f" fill="#687038" d="M1058.8 248.3l7 9.4l2.8-2.3l-5.1-6.8zM1061.2 275l7 9.4l2.8-2.3l-5.1-6.8zM1063.6 301.7l7 9.4l2.8-2.3l-5-6.8zM1066 328.3l7 9.4l2.8-2.3l-5-6.8zM1068.5 354.9l6.9 9.4l2.8-2.3l-5-6.7zM1070.9 381.5l6.9 9.4l2.8-2.3l-5-6.8zM1073.3 408.1l6.9 9.3l2.8-2.3l-5-6.7zM1075.7 434.6l6.9 9.3l2.8-2.3l-5-6.7zM1078.1 461.1l6.9 9.3l2.8-2.3l-5-6.7zM1080.5 487.5l6.9 9.3l2.8-2.2l-5-6.7zM1082.9 514l6.9 9.3l2.8-2.3l-5-6.7zM1085.3 540.4l6.9 9.2l2.7-2.2l-4.9-6.7zM1087.6 566.7l7 9.3l2.7-2.2l-5-6.7zM1090 593.1l7 9.2l2.7-2.2l-5-6.7zM1092.4 619.4l6.9 9.2l2.8-2.2l-5-6.7zM1094.8 645.6l6.9 9.3l2.8-2.2l-5-6.7zM1097.2 671.9l6.9 9.2l2.7-2.2l-4.9-6.6zM1099.5 698.1l7 9.2l2.7-2.2l-5-6.6zM1101.9 724.3l6.9 9.2l2.8-2.2l-5-6.6zM1104.3 750.4l6.9 9.2l2.7-2.2l-4.9-6.6z"/><path class="f" fill="#566030" d="M1065.8 257.7l12-2.4l-0.6-1.7l-8.6 1.8zM1068.2 284.4l12.1-2.4l-0.7-1.7l-8.6 1.8zM1070.6 311.1l12.1-2.5l-0.7-1.6l-8.6 1.8zM1073 337.7l12.1-2.5l-0.7-1.6l-8.6 1.8zM1075.4 364.3l12.1-2.5l-0.7-1.6l-8.6 1.8zM1077.8 390.9l12.1-2.5l-0.7-1.6l-8.6 1.8zM1080.2 417.4l12-2.5l-0.6-1.6l-8.6 1.8zM1082.6 443.9l12-2.5l-0.6-1.6l-8.6 1.8zM1085 470.4l12-2.5l-0.6-1.6l-8.6 1.8zM1087.4 496.8l12-2.5l-0.6-1.5l-8.6 1.8zM1089.8 523.3l12-2.6l-0.6-1.5l-8.6 1.8zM1092.2 549.6l12-2.5l-0.6-1.5l-8.7 1.8zM1094.6 576l11.9-2.5l-0.6-1.6l-8.6 1.9zM1097 602.3l11.9-2.5l-0.6-1.5l-8.6 1.8zM1099.3 628.6l12-2.5l-0.6-1.5l-8.6 1.8zM1101.7 654.9l11.9-2.6l-0.6-1.5l-8.5 1.9zM1104.1 681.1l11.9-2.5l-0.6-1.5l-8.6 1.8zM1106.5 707.3l11.9-2.5l-0.6-1.5l-8.6 1.8zM1108.8 733.5l11.9-2.6l-0.6-1.5l-8.5 1.9zM1111.2 759.6l11.9-2.5l-0.6-1.5l-8.6 1.8z"/><path class="f" fill="#bfcab2" d="M1082.9 243.4l-7-9.5l-0.1 4.4l5.1 6.8zM1085.3 270.1l-7-9.5l0 4.4l5 6.8zM1087.7 296.7l-7-9.4l0 4.4l5 6.7zM1090.1 323.4l-7-9.4l0 4.3l5 6.8zM1092.5 350l-7-9.4l0 4.3l5 6.8zM1094.9 376.5l-7-9.3l0 4.3l5 6.8zM1097.3 403.1l-7-9.4l0 4.4l5 6.7zM1099.7 429.6l-7-9.3l-0.1 4.3l5.1 6.7zM1102.1 456.1l-7-9.3l-0.1 4.3l5 6.7zM1104.4 482.5l-6.9-9.3l-0.1 4.4l5 6.7zM1106.8 508.9l-6.9-9.3l-0.1 4.4l5 6.7zM1109.2 535.3l-6.9-9.2l-0.1 4.3l5 6.7zM1111.6 561.7l-7-9.3l0 4.4l5 6.7zM1113.9 588l-6.9-9.2l-0.1 4.3l5 6.7zM1116.3 614.3l-6.9-9.2l-0.1 4.4l5 6.6zM1118.7 640.6l-6.9-9.2l-0.1 4.3l5 6.7zM1121 666.8l-6.9-9.2l0 4.4l4.9 6.6zM1123.4 693l-6.9-9.2l-0.1 4.4l5 6.6zM1125.8 719.2l-6.9-9.2l-0.1 4.4l4.9 6.6zM1128.1 745.3l-6.9-9.1l-0.1 4.4l5 6.6z"/><path class="f" fill="#edd2c2" d="M1074.2 231.6l-12.9 2.6l2.6 2.2l12-2.5zM1075.9 233.9l-12 2.5l3.3 3.6l8.6-1.7zM1076.6 258.3l-12.9 2.6l2.6 2.2l12-2.5zM1078.3 260.6l-12 2.5l3.3 3.6l8.7-1.7zM1079 285l-12.8 2.6l2.5 2.2l12-2.5zM1080.7 287.3l-12 2.5l3.3 3.6l8.7-1.7zM1081.4 311.6l-12.8 2.6l2.5 2.2l12-2.4zM1083.1 314l-12 2.4l3.3 3.7l8.7-1.8zM1083.8 338.2l-12.8 2.7l2.5 2.2l12-2.5zM1085.5 340.6l-12 2.5l3.3 3.6l8.7-1.8zM1086.2 364.8l-12.8 2.6l2.5 2.3l12-2.5zM1087.9 367.2l-12 2.5l3.3 3.6l8.7-1.8zM1088.6 391.3l-12.8 2.7l2.5 2.2l12-2.5zM1090.3 393.7l-12 2.5l3.3 3.7l8.7-1.8zM1091 417.9l-12.8 2.6l2.5 2.2l12-2.4zM1092.7 420.3l-12 2.4l3.3 3.7l8.6-1.8zM1093.4 444.4l-12.8 2.6l2.5 2.2l12-2.4zM1095.1 446.8l-12 2.4l3.3 3.7l8.6-1.8zM1095.8 470.8l-12.8 2.7l2.5 2.2l12-2.5zM1097.5 473.2l-12 2.5l3.3 3.7l8.6-1.8zM1098.2 497.2l-12.8 2.7l2.5 2.3l12-2.6zM1099.9 499.6l-12 2.6l3.3 3.6l8.6-1.8zM1100.5 523.6l-12.7 2.7l2.5 2.3l12-2.5zM1102.3 526.1l-12 2.5l3.3 3.6l8.6-1.8zM1102.9 550l-12.8 2.7l2.6 2.2l11.9-2.5zM1104.6 552.4l-11.9 2.5l3.3 3.7l8.6-1.8zM1105.3 576.3l-12.8 2.7l2.6 2.3l11.9-2.5zM1107 578.8l-11.9 2.5l3.2 3.7l8.6-1.9zM1107.7 602.6l-12.8 2.7l2.5 2.3l12-2.5zM1109.4 605.1l-12 2.5l3.3 3.7l8.6-1.8zM1110 628.9l-12.7 2.7l2.5 2.3l12-2.5zM1111.8 631.4l-12 2.5l3.3 3.7l8.6-1.9zM1112.4 655.1l-12.7 2.8l2.5 2.2l11.9-2.5zM1114.1 657.6l-11.9 2.5l3.3 3.7l8.6-1.8zM1114.8 681.4l-12.8 2.7l2.6 2.3l11.9-2.6zM1116.5 683.8l-11.9 2.6l3.2 3.6l8.6-1.8zM1117.1 707.5l-12.7 2.8l2.5 2.3l12-2.6zM1118.9 710l-12 2.6l3.3 3.6l8.6-1.8zM1119.5 733.7l-12.7 2.7l2.5 2.3l11.9-2.5zM1121.2 736.2l-11.9 2.5l3.3 3.7l8.5-1.8z"/><path class="f" fill="#bfcab2" d="M1061.3 234.2l-5.4 12.7l2.9 1.4l5.1-11.9zM1063.9 236.4l-5.1 11.9l4.7 0.3l3.7-8.6zM1063.7 260.9l-5.4 12.7l2.9 1.4l5.1-11.9zM1066.3 263.1l-5.1 11.9l4.7 0.3l3.7-8.6zM1066.2 287.6l-5.4 12.7l2.8 1.4l5.1-11.9zM1068.7 289.8l-5.1 11.9l4.8 0.3l3.6-8.6zM1068.6 314.2l-5.4 12.7l2.8 1.4l5.1-11.9zM1071.1 316.4l-5.1 11.9l4.8 0.3l3.6-8.5zM1071 340.9l-5.4 12.6l2.9 1.4l5-11.8zM1073.5 343.1l-5 11.8l4.7 0.4l3.6-8.6zM1073.4 367.4l-5.4 12.7l2.9 1.4l5-11.8zM1075.9 369.7l-5 11.8l4.7 0.3l3.6-8.5zM1075.8 394l-5.4 12.6l2.9 1.5l5-11.9zM1078.3 396.2l-5 11.9l4.7 0.3l3.6-8.5zM1078.2 420.5l-5.4 12.7l2.9 1.4l5-11.9zM1080.7 422.7l-5 11.9l4.7 0.3l3.6-8.5zM1080.6 447l-5.4 12.6l2.9 1.5l5-11.9zM1083.1 449.2l-5 11.9l4.7 0.3l3.6-8.5zM1083 473.5l-5.4 12.6l2.9 1.4l5-11.8zM1085.5 475.7l-5 11.8l4.7 0.4l3.6-8.5zM1085.4 499.9l-5.4 12.6l2.9 1.5l5-11.8zM1087.9 502.2l-5 11.8l4.7 0.3l3.6-8.5zM1087.8 526.3l-5.4 12.6l2.9 1.5l5-11.8zM1090.3 528.6l-5 11.8l4.7 0.3l3.6-8.5zM1090.1 552.7l-5.3 12.6l2.8 1.4l5.1-11.8zM1092.7 554.9l-5.1 11.8l4.7 0.4l3.7-8.5zM1092.5 579l-5.3 12.6l2.8 1.5l5.1-11.8zM1095.1 581.3l-5.1 11.8l4.7 0.3l3.6-8.4zM1094.9 605.3l-5.4 12.6l2.9 1.5l5-11.8zM1097.4 607.6l-5 11.8l4.7 0.3l3.6-8.4zM1097.3 631.6l-5.4 12.6l2.9 1.4l5-11.7zM1099.8 633.9l-5 11.7l4.7 0.4l3.6-8.4zM1099.7 657.9l-5.4 12.5l2.9 1.5l5-11.8zM1102.2 660.1l-5 11.8l4.7 0.4l3.6-8.5zM1102 684.1l-5.3 12.5l2.8 1.5l5.1-11.7zM1104.6 686.4l-5.1 11.7l4.7 0.4l3.6-8.5zM1104.4 710.3l-5.3 12.5l2.8 1.5l5-11.7zM1106.9 712.6l-5 11.7l4.7 0.4l3.6-8.5zM1106.8 736.4l-5.4 12.5l2.9 1.5l5-11.7zM1109.3 738.7l-5 11.7l4.7 0.4l3.6-8.4z"/><path class="g" fill="#58a87c" d="M1063.5 248.6l5.1 6.8l8.6-1.8l3.7-8.5l-5.1-6.8l-8.6 1.7zM1065.9 275.3l5.1 6.8l8.6-1.8l3.7-8.5l-5-6.8l-8.7 1.7zM1068.4 302l5 6.8l8.6-1.8l3.7-8.6l-5-6.7l-8.7 1.7zM1070.8 328.6l5 6.8l8.6-1.8l3.7-8.5l-5-6.8l-8.7 1.8zM1073.2 355.3l5 6.7l8.6-1.8l3.7-8.5l-5-6.8l-8.7 1.8zM1075.6 381.8l5 6.8l8.6-1.8l3.7-8.5l-5-6.8l-8.7 1.8zM1078 408.4l5 6.7l8.6-1.8l3.7-8.5l-5-6.7l-8.7 1.8zM1080.4 434.9l5 6.7l8.6-1.8l3.7-8.5l-5.1-6.7l-8.6 1.8zM1082.8 461.4l5 6.7l8.6-1.8l3.6-8.5l-5-6.7l-8.6 1.8zM1085.2 487.9l5 6.7l8.6-1.8l3.6-8.5l-5-6.7l-8.6 1.8zM1087.6 514.3l5 6.7l8.6-1.8l3.6-8.5l-5-6.7l-8.6 1.8zM1090 540.7l4.9 6.7l8.7-1.8l3.6-8.5l-5-6.7l-8.6 1.8zM1092.3 567.1l5 6.7l8.6-1.9l3.7-8.4l-5-6.7l-8.6 1.8zM1094.7 593.4l5 6.7l8.6-1.8l3.6-8.5l-5-6.7l-8.6 1.9zM1097.1 619.7l5 6.7l8.6-1.8l3.6-8.5l-5-6.6l-8.6 1.8zM1099.5 646l5 6.7l8.5-1.9l3.7-8.4l-5-6.7l-8.6 1.9zM1101.9 672.3l4.9 6.6l8.6-1.8l3.6-8.5l-4.9-6.6l-8.6 1.8zM1104.2 698.5l5 6.6l8.6-1.8l3.6-8.5l-5-6.6l-8.6 1.8zM1106.6 724.7l5 6.6l8.5-1.9l3.6-8.4l-4.9-6.6l-8.6 1.8zM1109 750.8l4.9 6.6l8.6-1.8l3.6-8.4l-5-6.6l-8.5 1.8z"/>
<path class="h" d="M875.8 263.8l0.8-1.9l5.5-11.4l13.3 0.1l7.6 11.4l-5.5 11.4l-2.1 1.1l-12.4 0zM878.3 290.5l0.8-1.9l5.5-11.4l13.3 0.1l7.7 11.4l-5.6 11.3l-2 1.2l-12.5 0zM880.9 317.2l0.8-2l5.5-11.3l13.3 0.1l7.7 11.3l-5.6 11.4l-2 1.2l-12.4-0.1zM883.4 343.8l0.7-1.9l5.5-11.4l13.3 0.1l7.7 11.4l-5.6 11.3l-2 1.2l-12.4-0.1zM885.9 370.4l0.7-1.9l5.6-11.3l13.2 0l7.7 11.4l-5.6 11.3l-2 1.2l-12.4-0.1zM888.4 397l0.7-2l5.6-11.3l13.2 0.1l7.7 11.4l-5.6 11.2l-2 1.3l-12.4-0.1zM890.9 423.5l0.7-1.9l5.6-11.3l13.2 0.1l7.7 11.3l-5.6 11.3l-2 1.2l-12.4-0.1zM893.4 450l0.8-2l5.5-11.2l13.2 0.1l7.7 11.3l-5.6 11.3l-2 1.2l-12.4-0.1zM895.9 476.5l0.8-2l5.5-11.2l13.2 0.1l7.6 11.3l-5.5 11.2l-2 1.3l-12.4-0.1zM898.4 502.9l0.8-1.9l5.5-11.3l13.2 0.1l7.6 11.4l-5.5 11.2l-2 1.2l-12.4-0.1zM900.9 529.4l0.8-2l5.5-11.2l13.2 0l7.6 11.4l-5.5 11.2l-2.1 1.2l-12.3-0.1zM903.4 555.7l0.8-2l5.5-11.2l13.1 0.1l7.7 11.4l-5.5 11.2l-2.1 1.2l-12.3-0.1zM905.9 582.1l0.7-2l5.6-11.2l13.1 0.1l7.7 11.3l-5.6 11.2l-2 1.3l-12.3-0.1zM908.4 608.4l0.7-2l5.5-11.2l13.2 0.2l7.6 11.2l-5.5 11.2l-2 1.3l-12.3-0.1zM910.9 634.7l0.7-2l5.5-11.2l13.2 0.2l7.6 11.2l-5.5 11.2l-2 1.3l-12.4-0.1zM913.4 661l0.7-2.1l5.5-11.1l13.2 0.1l7.6 11.3l-5.5 11.1l-2.1 1.3l-12.3-0.1zM915.9 687.2l0.7-2l5.5-11.2l13.1 0.2l7.7 11.2l-5.6 11.2l-2 1.3l-12.3-0.2zM918.3 713.4l0.8-2l5.5-11.1l13.1 0.1l7.6 11.2l-5.5 11.1l-2 1.4l-12.3-0.2zM920.8 739.6l0.7-2.1l5.5-11.1l13.2 0.2l7.6 11.2l-5.5 11.1l-2.1 1.3l-12.2-0.1zM923.3 765.7l0.7-2.1l5.5-11l13.1 0.1l7.6 11.3l-5.5 11l-2 1.4l-12.3-0.2z"/><path class="f" fill="#566030" d="M883 274.5l12.4 0l-3-1.7l-8.9-0.1zM885.5 301.2l12.4 0l-3-1.7l-8.9-0.1zM888.1 327.8l12.4 0.1l-3.1-1.8l-8.9 0zM890.6 354.5l12.4 0l-3.1-1.7l-8.9-0.1zM893.1 381l12.4 0.1l-3.1-1.7l-8.9-0.1zM895.6 407.6l12.4 0.1l-3.1-1.8l-8.9 0zM898.1 434.1l12.4 0.1l-3.1-1.7l-8.9-0.1zM900.6 460.6l12.4 0.1l-3.1-1.7l-8.9-0.1zM903.1 487.1l12.4 0.1l-3.1-1.7l-8.9-0.1zM905.6 513.5l12.4 0.1l-3.1-1.7l-8.9 0zM908.1 539.9l12.3 0.1l-3-1.6l-8.9-0.1zM910.6 566.3l12.3 0.1l-3-1.7l-8.9 0zM913.1 592.7l12.3 0.1l-3-1.7l-8.9-0.1zM915.6 619l12.3 0.1l-3-1.7l-8.9-0.1zM918 645.3l12.4 0.1l-3-1.7l-8.9-0.1zM920.5 671.5l12.3 0.1l-3-1.6l-8.8-0.1zM923 697.7l12.3 0.2l-3-1.7l-8.9-0.1zM925.5 723.9l12.3 0.2l-3-1.7l-8.9-0.1zM927.9 750.1l12.3 0.1l-3-1.6l-8.8-0.1zM930.4 776.2l12.3 0.2l-3-1.6l-8.8-0.1z"/><path class="f" fill="#687038" d="M895.4 274.5l5.2-10.6l-4.5 1.2l-3.7 7.7zM897.9 301.2l5.3-10.6l-4.6 1.2l-3.7 7.7zM900.5 327.9l5.2-10.6l-4.5 1.2l-3.8 7.6zM903 354.5l5.2-10.6l-4.5 1.2l-3.8 7.7zM905.5 381.1l5.2-10.6l-4.5 1.3l-3.8 7.6zM908 407.7l5.2-10.6l-4.5 1.2l-3.8 7.6zM910.5 434.2l5.2-10.6l-4.5 1.3l-3.8 7.6zM913 460.7l5.2-10.5l-4.5 1.2l-3.8 7.6zM915.5 487.2l5.2-10.5l-4.5 1.2l-3.8 7.6zM918 513.6l5.1-10.5l-4.4 1.3l-3.8 7.5zM920.4 540l5.2-10.5l-4.5 1.3l-3.7 7.6zM922.9 566.4l5.2-10.5l-4.5 1.3l-3.7 7.5zM925.4 592.8l5.2-10.5l-4.5 1.3l-3.7 7.5zM927.9 619.1l5.2-10.5l-4.5 1.3l-3.7 7.5zM930.4 645.4l5.1-10.5l-4.4 1.3l-3.7 7.5zM932.8 671.6l5.2-10.4l-4.5 1.3l-3.7 7.5zM935.3 697.9l5.2-10.4l-4.5 1.2l-3.7 7.5zM937.8 724.1l5.2-10.4l-4.5 1.3l-3.7 7.4zM940.2 750.2l5.2-10.3l-4.4 1.2l-3.8 7.5zM942.7 776.4l5.2-10.4l-4.5 1.3l-3.7 7.5z"/><path class="f" fill="#bfcab2" d="M903.1 262l-7.8-11.4l-1.9 2.6l7.2 10.7zM900.6 263.9l-7.2-10.7l-2.5 4.2l5.2 7.7zM905.6 288.7l-7.7-11.4l-2 2.6l7.3 10.7zM903.2 290.6l-7.3-10.7l-2.4 4.2l5.1 7.7zM908.1 315.3l-7.7-11.4l-1.9 2.7l7.2 10.7zM905.7 317.3l-7.2-10.7l-2.5 4.2l5.2 7.7zM910.6 342l-7.7-11.4l-1.9 2.6l7.2 10.7zM908.2 343.9l-7.2-10.7l-2.5 4.3l5.2 7.6zM913.1 368.6l-7.7-11.4l-1.9 2.7l7.2 10.6zM910.7 370.5l-7.2-10.6l-2.5 4.2l5.2 7.7zM915.6 395.2l-7.7-11.4l-1.9 2.6l7.2 10.7zM913.2 397.1l-7.2-10.7l-2.5 4.3l5.2 7.6zM918.1 421.7l-7.7-11.4l-1.9 2.7l7.2 10.6zM915.7 423.6l-7.2-10.6l-2.5 4.2l5.2 7.7zM920.6 448.2l-7.7-11.3l-1.9 2.6l7.2 10.7zM918.2 450.2l-7.2-10.7l-2.5 4.3l5.2 7.6zM923 474.7l-7.6-11.3l-1.9 2.6l7.2 10.7zM920.7 476.7l-7.2-10.7l-2.5 4.3l5.2 7.6zM925.5 501.1l-7.6-11.3l-1.9 2.7l7.1 10.6zM923.1 503.1l-7.1-10.6l-2.5 4.2l5.2 7.7zM928 527.6l-7.6-11.3l-1.9 2.6l7.1 10.6zM925.6 529.5l-7.1-10.6l-2.5 4.3l5.1 7.6zM930.5 554l-7.6-11.3l-2 2.6l7.2 10.6zM928.1 555.9l-7.2-10.6l-2.4 4.3l5.1 7.6zM933 580.3l-7.7-11.3l-1.9 2.7l7.2 10.6zM930.6 582.3l-7.2-10.6l-2.4 4.3l5.1 7.6zM935.5 606.6l-7.7-11.2l-1.9 2.7l7.2 10.5zM933.1 608.6l-7.2-10.5l-2.5 4.2l5.2 7.6zM937.9 632.9l-7.6-11.2l-1.9 2.7l7.1 10.5zM935.5 634.9l-7.1-10.5l-2.5 4.2l5.2 7.6zM940.4 659.2l-7.6-11.3l-1.9 2.8l7.1 10.5zM938 661.2l-7.1-10.5l-2.5 4.2l5.1 7.6zM942.9 685.4l-7.7-11.2l-1.9 2.7l7.2 10.6zM940.5 687.5l-7.2-10.6l-2.4 4.3l5.1 7.5zM945.3 711.6l-7.6-11.2l-1.9 2.7l7.2 10.6zM943 713.7l-7.2-10.6l-2.4 4.3l5.1 7.6zM947.8 737.8l-7.6-11.2l-1.9 2.7l7.1 10.6zM945.4 739.9l-7.1-10.6l-2.5 4.3l5.2 7.5zM950.2 764l-7.6-11.3l-1.9 2.8l7.2 10.5zM947.9 766l-7.2-10.5l-2.4 4.2l5.1 7.6z"/><path class="f" fill="#edd2c2" d="M895.3 250.6l-13.2-0.1l-1.1 2.6l12.4 0.1zM893.4 253.2l-12.4-0.1l1 4.3l8.9 0zM897.9 277.3l-13.3-0.1l-1.1 2.7l12.4 0zM895.9 279.9l-12.4 0l1 4.2l9 0zM900.4 303.9l-13.3 0l-1.1 2.6l12.5 0.1zM898.5 306.6l-12.5-0.1l1 4.3l9 0zM902.9 330.6l-13.2-0.1l-1.1 2.7l12.4 0zM901 333.2l-12.4 0l1 4.2l8.9 0.1zM905.4 357.2l-13.2-0.1l-1.1 2.7l12.4 0.1zM903.5 359.9l-12.4-0.1l1 4.2l8.9 0.1zM907.9 383.8l-13.2-0.1l-1.1 2.7l12.4 0zM906 386.4l-12.4 0l1 4.2l8.9 0.1zM910.4 410.3l-13.2 0l-1.1 2.6l12.4 0.1zM908.5 413l-12.4-0.1l1 4.3l8.9 0zM912.9 436.9l-13.2-0.1l-1.1 2.7l12.4 0zM911 439.5l-12.4 0l1 4.2l8.9 0.1zM915.4 463.4l-13.2-0.1l-1.1 2.7l12.4 0zM913.5 466l-12.4 0l1 4.2l8.9 0.1zM917.9 489.8l-13.2-0.1l-1.1 2.7l12.4 0.1zM916 492.5l-12.4-0.1l1 4.3l8.9 0zM920.4 516.3l-13.2-0.1l-1.1 2.6l12.4 0.1zM918.5 518.9l-12.4-0.1l1 4.3l8.9 0.1zM922.9 542.7l-13.2-0.2l-1.1 2.7l12.3 0.1zM920.9 545.3l-12.3-0.1l1 4.3l8.9 0.1zM925.3 569l-13.1-0.1l-1.1 2.7l12.3 0.1zM923.4 571.7l-12.3-0.1l1 4.3l8.9 0.1zM927.8 595.4l-13.2-0.2l-1 2.8l12.3 0.1zM925.9 598.1l-12.3-0.1l1 4.2l8.8 0.1zM930.3 621.7l-13.2-0.2l-1 2.8l12.3 0.1zM928.4 624.4l-12.3-0.1l1 4.2l8.8 0.1zM932.8 647.9l-13.2-0.1l-1.1 2.7l12.4 0.2zM930.9 650.7l-12.4-0.2l1 4.3l8.9 0.1zM935.2 674.2l-13.1-0.2l-1.1 2.8l12.3 0.1zM933.3 676.9l-12.3-0.1l1 4.3l8.9 0.1zM937.7 700.4l-13.1-0.1l-1.1 2.7l12.3 0.1zM935.8 703.1l-12.3-0.1l1 4.3l8.9 0.1zM940.2 726.6l-13.2-0.2l-1 2.8l12.3 0.1zM938.3 729.3l-12.3-0.1l1 4.3l8.8 0.1zM942.6 752.7l-13.1-0.1l-1.1 2.7l12.3 0.2zM940.7 755.5l-12.3-0.2l1 4.3l8.9 0.1z"/><path class="f" fill="#bfcab2" d="M881 253.1l-5.2 10.7l2.5 1.2l3.7-7.6zM883.5 279.9l-5.2 10.6l2.5 1.2l3.7-7.6zM886 306.5l-5.2 10.7l2.5 1.2l3.7-7.6zM888.6 333.2l-5.2 10.6l2.4 1.3l3.8-7.7zM891.1 359.8l-5.2 10.6l2.4 1.3l3.8-7.7zM893.6 386.4l-5.2 10.6l2.5 1.2l3.7-7.6zM896.1 412.9l-5.2 10.6l2.5 1.3l3.7-7.6zM898.6 439.5l-5.2 10.5l2.5 1.3l3.7-7.6zM901.1 466l-5.2 10.5l2.5 1.3l3.7-7.6zM903.6 492.4l-5.2 10.5l2.5 1.3l3.7-7.5zM906.1 518.8l-5.2 10.5l2.5 1.4l3.7-7.6zM908.6 545.2l-5.2 10.5l2.5 1.4l3.7-7.6zM911.1 571.6l-5.2 10.5l2.5 1.3l3.7-7.5zM913.6 598l-5.2 10.4l2.5 1.3l3.7-7.5zM916.1 624.3l-5.2 10.4l2.4 1.3l3.8-7.5zM918.5 650.5l-5.1 10.5l2.4 1.3l3.7-7.5zM921 676.8l-5.1 10.4l2.4 1.4l3.7-7.5zM923.5 703l-5.2 10.4l2.5 1.4l3.7-7.5zM926 729.2l-5.2 10.4l2.5 1.3l3.7-7.4zM928.4 755.3l-5.1 10.4l2.4 1.4l3.7-7.5z"/><path class="g" fill="#58a87c" d="M878.3 265l5.2 7.7l8.9 0.1l3.7-7.7l-5.2-7.7l-8.9 0zM880.8 291.7l5.2 7.7l8.9 0.1l3.7-7.7l-5.1-7.7l-9 0zM883.3 318.4l5.2 7.7l8.9 0l3.8-7.6l-5.2-7.7l-9 0zM885.8 345.1l5.2 7.6l8.9 0.1l3.8-7.7l-5.2-7.6l-8.9-0.1zM888.3 371.7l5.2 7.6l8.9 0.1l3.8-7.6l-5.2-7.7l-8.9-0.1zM890.9 398.2l5.1 7.7l8.9 0l3.8-7.6l-5.2-7.6l-8.9-0.1zM893.4 424.8l5.1 7.6l8.9 0.1l3.8-7.6l-5.2-7.7l-8.9 0zM895.9 451.3l5.1 7.6l8.9 0.1l3.8-7.6l-5.2-7.6l-8.9-0.1zM898.4 477.8l5.1 7.6l8.9 0.1l3.8-7.6l-5.2-7.6l-8.9-0.1zM900.9 504.2l5.1 7.7l8.9 0l3.8-7.5l-5.2-7.7l-8.9 0zM903.4 530.7l5.1 7.6l8.9 0.1l3.7-7.6l-5.1-7.6l-8.9-0.1zM905.9 557.1l5.1 7.6l8.9 0l3.7-7.5l-5.1-7.6l-8.9-0.1zM908.4 583.4l5.1 7.6l8.9 0.1l3.7-7.5l-5.1-7.6l-8.9-0.1zM910.9 609.7l5.1 7.6l8.9 0.1l3.7-7.5l-5.2-7.6l-8.8-0.1zM913.3 636l5.2 7.6l8.9 0.1l3.7-7.5l-5.2-7.6l-8.8-0.1zM915.8 662.3l5.2 7.6l8.8 0.1l3.7-7.5l-5.1-7.6l-8.9-0.1zM918.3 688.6l5.1 7.5l8.9 0.1l3.7-7.5l-5.1-7.5l-8.9-0.1zM920.8 714.8l5.1 7.5l8.9 0.1l3.7-7.4l-5.1-7.6l-8.9-0.1zM923.3 740.9l5.1 7.6l8.8 0.1l3.8-7.5l-5.2-7.5l-8.8-0.1zM925.7 767.1l5.2 7.6l8.8 0.1l3.7-7.5l-5.1-7.6l-8.9-0.1z"/>
<path class="h" d="M1020.6 252.7l5.7-12.5l13.4-2.1l7.7 10.3l0.5 1.8l-5.3 11.7l-12.5 2l-1.7-0.9zM1023 279.4l5.7-12.4l13.4-2.2l7.7 10.4l0.5 1.8l-5.3 11.6l-12.5 2l-1.7-0.9zM1025.5 306.1l5.6-12.4l13.4-2.2l7.7 10.3l0.6 1.8l-5.3 11.7l-12.6 2l-1.7-0.9zM1027.9 332.8l5.7-12.5l13.4-2.1l7.7 10.3l0.5 1.8l-5.3 11.6l-12.5 2.1l-1.8-1zM1030.4 359.4l5.6-12.4l13.4-2.2l7.7 10.3l0.5 1.8l-5.3 11.7l-12.5 2l-1.7-1zM1032.8 386l5.6-12.4l13.4-2.2l7.7 10.2l0.5 1.9l-5.3 11.6l-12.5 2.1l-1.7-1zM1035.2 412.5l5.7-12.4l13.3-2.1l7.7 10.2l0.5 1.8l-5.3 11.7l-12.5 2l-1.7-0.9zM1037.6 439l5.7-12.4l13.3-2.1l7.7 10.2l0.5 1.9l-5.2 11.6l-12.5 2l-1.8-0.9zM1040.1 465.5l5.6-12.3l13.3-2.2l7.7 10.2l0.5 1.9l-5.2 11.6l-12.5 2l-1.7-1zM1042.5 492l5.6-12.4l13.3-2.1l7.7 10.2l0.5 1.8l-5.2 11.6l-12.5 2.1l-1.7-1zM1044.9 518.4l5.6-12.3l13.3-2.2l7.7 10.2l0.5 1.9l-5.2 11.6l-12.5 2l-1.7-1zM1047.3 544.8l5.6-12.3l13.3-2.2l7.7 10.2l0.5 1.9l-5.2 11.5l-12.5 2.1l-1.7-1zM1049.7 571.2l5.7-12.3l13.2-2.2l7.7 10.1l0.5 2l-5.2 11.5l-12.5 2l-1.7-0.9zM1052.1 597.5l5.7-12.3l13.2-2.2l7.7 10.2l0.5 1.9l-5.2 11.5l-12.5 2.1l-1.7-1zM1054.5 623.9l5.7-12.3l13.2-2.1l7.7 10.1l0.5 1.9l-5.2 11.5l-12.5 2.1l-1.7-1zM1056.9 650.1l5.7-12.3l13.2-2.2l7.7 10.2l0.5 1.9l-5.3 11.5l-12.4 2l-1.7-1zM1059.3 676.4l5.7-12.3l13.2-2.2l7.7 10.1l0.5 1.9l-5.3 11.5l-12.4 2.1l-1.7-1zM1061.7 702.6l5.6-12.3l13.3-2.2l7.6 10.1l0.6 2l-5.3 11.4l-12.4 2.1l-1.7-1zM1064.1 728.8l5.6-12.3l13.3-2.2l7.6 10.1l0.6 1.9l-5.3 11.5l-12.4 2.1l-1.7-1.1zM1066.5 754.9l5.6-12.2l13.3-2.2l7.6 10l0.5 2l-5.2 11.5l-12.4 2l-1.7-1z"/><path class="f" fill="#687038" d="M1022.8 254.3l7.3 9.6l2.3-2.2l-5.2-6.9zM1025.2 281l7.3 9.6l2.4-2.1l-5.2-7zM1027.7 307.7l7.2 9.6l2.4-2.2l-5.2-6.9zM1030.1 334.3l7.3 9.7l2.3-2.2l-5.2-6.9zM1032.6 360.9l7.2 9.7l2.4-2.2l-5.2-6.9zM1035 387.5l7.2 9.6l2.4-2.1l-5.2-6.9zM1037.4 414.1l7.2 9.6l2.4-2.1l-5.2-6.9zM1039.8 440.6l7.3 9.6l2.3-2.1l-5.2-6.9zM1042.3 467.1l7.2 9.6l2.3-2.1l-5.1-6.9zM1044.7 493.6l7.2 9.6l2.4-2.2l-5.2-6.8zM1047.1 520l7.2 9.6l2.4-2.1l-5.2-6.9zM1049.5 546.5l7.2 9.5l2.4-2.1l-5.2-6.9zM1051.9 572.8l7.2 9.5l2.4-2l-5.2-6.9zM1054.3 599.2l7.2 9.5l2.4-2.1l-5.2-6.8zM1056.7 625.5l7.2 9.5l2.4-2.1l-5.2-6.8zM1059.1 651.8l7.2 9.5l2.4-2.1l-5.2-6.8zM1061.5 678l7.2 9.5l2.4-2.1l-5.2-6.8zM1063.9 704.3l7.2 9.4l2.4-2l-5.2-6.8zM1066.3 730.5l7.2 9.4l2.3-2.1l-5.1-6.7zM1068.7 756.6l7.2 9.4l2.3-2l-5.1-6.8z"/><path class="f" fill="#566030" d="M1030.1 263.9l12.5-2l-1.1-1.6l-9.1 1.4zM1032.5 290.6l12.5-2l-1.1-1.6l-9 1.5zM1034.9 317.3l12.6-2l-1.2-1.6l-9 1.4zM1037.4 344l12.5-2.1l-1.2-1.6l-9 1.5zM1039.8 370.6l12.5-2.1l-1.1-1.5l-9 1.4zM1042.2 397.1l12.5-2l-1.1-1.6l-9 1.5zM1044.6 423.7l12.5-2l-1.1-1.6l-9 1.5zM1047.1 450.2l12.5-2l-1.2-1.6l-9 1.5zM1049.5 476.7l12.5-2l-1.2-1.6l-9 1.5zM1051.9 503.2l12.5-2.1l-1.2-1.5l-8.9 1.4zM1054.3 529.6l12.5-2.1l-1.2-1.5l-8.9 1.5zM1056.7 556l12.5-2.1l-1.2-1.5l-8.9 1.5zM1059.1 582.3l12.5-2l-1.2-1.5l-8.9 1.5zM1061.5 608.7l12.5-2.1l-1.2-1.5l-8.9 1.5zM1063.9 635l12.5-2.1l-1.2-1.5l-8.9 1.5zM1066.3 661.3l12.4-2.1l-1.1-1.5l-8.9 1.5zM1068.7 687.5l12.4-2.1l-1.1-1.4l-8.9 1.4zM1071.1 713.7l12.4-2.1l-1.1-1.4l-8.9 1.5zM1073.5 739.9l12.4-2.1l-1.1-1.4l-9 1.4zM1075.9 766l12.4-2l-1.2-1.5l-8.9 1.5z"/><path class="f" fill="#687038" d="M1042.6 261.9l5.3-11.7l-2.6 1.7l-3.8 8.4zM1045 288.6l5.3-11.6l-2.6 1.6l-3.8 8.4zM1047.5 315.3l5.3-11.7l-2.7 1.7l-3.8 8.4zM1049.9 341.9l5.3-11.6l-2.6 1.7l-3.9 8.3zM1052.3 368.5l5.3-11.6l-2.6 1.7l-3.8 8.4zM1054.7 395.1l5.3-11.6l-2.6 1.7l-3.8 8.3zM1057.1 421.7l5.3-11.6l-2.6 1.6l-3.8 8.4zM1059.6 448.2l5.2-11.6l-2.6 1.7l-3.8 8.3zM1062 474.7l5.2-11.6l-2.6 1.7l-3.8 8.3zM1064.4 501.1l5.2-11.6l-2.6 1.7l-3.8 8.4zM1066.8 527.5l5.2-11.5l-2.6 1.7l-3.8 8.3zM1069.2 553.9l5.2-11.5l-2.6 1.7l-3.8 8.3zM1071.6 580.3l5.2-11.6l-2.6 1.8l-3.8 8.3zM1074 606.6l5.2-11.5l-2.6 1.7l-3.8 8.3zM1076.4 632.9l5.2-11.5l-2.6 1.7l-3.8 8.3zM1078.7 659.2l5.3-11.5l-2.6 1.7l-3.8 8.3zM1081.1 685.4l5.3-11.5l-2.6 1.8l-3.8 8.3zM1083.5 711.6l5.3-11.5l-2.6 1.8l-3.8 8.3zM1085.9 737.8l5.2-11.5l-2.6 1.8l-3.7 8.3zM1088.3 764l5.2-11.5l-2.6 1.8l-3.8 8.2z"/><path class="f" fill="#bfcab2" d="M1047.9 250.2l-7.2-9.6l-0.6 4.3l5.2 7zM1050.3 277l-7.2-9.7l-0.6 4.4l5.2 6.9zM1052.8 303.6l-7.3-9.6l-0.6 4.4l5.2 6.9zM1055.2 330.3l-7.2-9.6l-0.7 4.3l5.3 7zM1057.6 356.9l-7.2-9.6l-0.6 4.4l5.2 6.9zM1060 383.5l-7.2-9.6l-0.6 4.4l5.2 6.9zM1062.4 410.1l-7.2-9.6l-0.6 4.3l5.2 6.9zM1064.8 436.6l-7.2-9.6l-0.6 4.4l5.2 6.9zM1067.2 463.1l-7.2-9.6l-0.6 4.4l5.2 6.9zM1069.6 489.5l-7.2-9.5l-0.6 4.4l5.2 6.8zM1072 516l-7.2-9.6l-0.5 4.4l5.1 6.9zM1074.4 542.4l-7.1-9.6l-0.6 4.4l5.1 6.9zM1076.8 568.7l-7.1-9.5l-0.6 4.4l5.1 6.9zM1079.2 595.1l-7.2-9.5l-0.5 4.4l5.1 6.8zM1081.6 621.4l-7.2-9.5l-0.6 4.4l5.2 6.8zM1084 647.7l-7.2-9.5l-0.6 4.4l5.2 6.8zM1086.4 673.9l-7.2-9.4l-0.6 4.4l5.2 6.8zM1088.8 700.1l-7.2-9.4l-0.6 4.4l5.2 6.8zM1091.1 726.3l-7.1-9.4l-0.6 4.4l5.1 6.8zM1093.5 752.5l-7.1-9.4l-0.6 4.4l5.1 6.8z"/><path class="f" fill="#edd2c2" d="M1039.7 238.1l-13.4 2.1l1.8 2.4l12.6-2zM1040.7 240.6l-12.6 2l2.9 3.8l9.1-1.5zM1042.1 264.8l-13.4 2.2l1.9 2.3l12.5-2zM1043.1 267.3l-12.5 2l2.9 3.8l9-1.4zM1044.5 291.5l-13.4 2.2l1.9 2.3l12.5-2zM1045.5 294l-12.5 2l2.9 3.8l9-1.4zM1046.9 318.2l-13.3 2.1l1.8 2.4l12.6-2zM1048 320.7l-12.6 2l2.9 3.8l9-1.5zM1049.4 344.8l-13.4 2.2l1.8 2.3l12.6-2zM1050.4 347.3l-12.6 2l3 3.8l9-1.4zM1051.8 371.4l-13.4 2.2l1.9 2.3l12.5-2zM1052.8 373.9l-12.5 2l2.9 3.8l9-1.4zM1054.2 398l-13.3 2.1l1.8 2.4l12.5-2zM1055.2 400.5l-12.5 2l2.9 3.8l9-1.5zM1056.6 424.5l-13.3 2.2l1.8 2.3l12.5-2zM1057.6 427l-12.5 2l2.9 3.8l9-1.4zM1059 451l-13.3 2.2l1.8 2.3l12.5-2zM1060 453.5l-12.5 2l3 3.9l8.9-1.5zM1061.4 477.5l-13.3 2.1l1.9 2.4l12.4-2zM1062.4 480l-12.4 2l2.9 3.8l8.9-1.4zM1063.8 503.9l-13.3 2.2l1.9 2.4l12.4-2.1zM1064.8 506.4l-12.4 2.1l2.9 3.8l9-1.5zM1066.2 530.3l-13.3 2.2l1.9 2.4l12.5-2.1zM1067.3 532.8l-12.5 2.1l2.9 3.8l9-1.5zM1068.6 556.7l-13.3 2.2l1.9 2.4l12.5-2.1zM1069.7 559.2l-12.5 2.1l2.9 3.8l9-1.5zM1071 583l-13.2 2.2l1.8 2.4l12.4-2zM1072 585.6l-12.4 2l2.9 3.9l9-1.5zM1073.4 609.4l-13.2 2.1l1.8 2.5l12.4-2.1zM1074.4 611.9l-12.4 2.1l2.9 3.8l8.9-1.5zM1075.8 635.6l-13.2 2.2l1.8 2.5l12.4-2.1zM1076.8 638.2l-12.4 2.1l2.9 3.8l8.9-1.5zM1078.2 661.9l-13.3 2.2l1.9 2.4l12.4-2zM1079.2 664.5l-12.4 2l2.9 3.9l8.9-1.5zM1080.6 688.1l-13.3 2.2l1.9 2.5l12.4-2.1zM1081.6 690.7l-12.4 2.1l2.9 3.8l8.9-1.5zM1083 714.3l-13.3 2.2l1.9 2.5l12.4-2.1zM1084 716.9l-12.4 2.1l2.9 3.8l8.9-1.5zM1085.4 740.5l-13.3 2.2l1.9 2.4l12.4-2zM1086.4 743.1l-12.4 2l2.9 3.9l8.9-1.5z"/><path class="f" fill="#bfcab2" d="M1026.3 240.2l-5.7 12.5l2.2 1.6l5.3-11.7zM1028.1 242.6l-5.3 11.7l4.4 0.5l3.8-8.4zM1028.7 267l-5.7 12.4l2.2 1.6l5.4-11.7zM1030.6 269.3l-5.4 11.7l4.5 0.5l3.8-8.4zM1031.1 293.7l-5.6 12.4l2.2 1.6l5.3-11.7zM1033 296l-5.3 11.7l4.4 0.5l3.8-8.4zM1033.6 320.3l-5.7 12.5l2.2 1.5l5.3-11.6zM1035.4 322.7l-5.3 11.6l4.4 0.6l3.8-8.4zM1036 347l-5.6 12.4l2.2 1.5l5.2-11.6zM1037.8 349.3l-5.2 11.6l4.4 0.6l3.8-8.4zM1038.4 373.6l-5.6 12.4l2.2 1.5l5.3-11.6zM1040.3 375.9l-5.3 11.6l4.4 0.6l3.8-8.4zM1040.9 400.1l-5.7 12.4l2.2 1.6l5.3-11.6zM1042.7 402.5l-5.3 11.6l4.4 0.6l3.8-8.4zM1043.3 426.7l-5.7 12.3l2.2 1.6l5.3-11.6zM1045.1 429l-5.3 11.6l4.4 0.6l3.8-8.4zM1045.7 453.2l-5.6 12.3l2.2 1.6l5.2-11.6zM1047.5 455.5l-5.2 11.6l4.4 0.6l3.8-8.3zM1048.1 479.6l-5.6 12.4l2.2 1.6l5.3-11.6zM1050 482l-5.3 11.6l4.4 0.6l3.8-8.4zM1050.5 506.1l-5.6 12.3l2.2 1.6l5.3-11.5zM1052.4 508.5l-5.3 11.5l4.4 0.6l3.8-8.3zM1052.9 532.5l-5.6 12.3l2.2 1.7l5.3-11.6zM1054.8 534.9l-5.3 11.6l4.4 0.5l3.8-8.3zM1055.3 558.9l-5.6 12.3l2.2 1.6l5.3-11.5zM1057.2 561.3l-5.3 11.5l4.4 0.6l3.8-8.3zM1057.8 585.2l-5.7 12.3l2.2 1.7l5.3-11.6zM1059.6 587.6l-5.3 11.6l4.4 0.6l3.8-8.3zM1060.2 611.5l-5.7 12.4l2.2 1.6l5.3-11.5zM1062 614l-5.3 11.5l4.4 0.6l3.8-8.3zM1062.6 637.8l-5.7 12.3l2.2 1.7l5.3-11.5zM1064.4 640.3l-5.3 11.5l4.4 0.6l3.8-8.3zM1064.9 664.1l-5.6 12.3l2.2 1.6l5.3-11.5zM1066.8 666.5l-5.3 11.5l4.4 0.6l3.8-8.2zM1067.3 690.3l-5.6 12.3l2.2 1.7l5.3-11.5zM1069.2 692.8l-5.3 11.5l4.4 0.6l3.8-8.3zM1069.7 716.5l-5.6 12.3l2.2 1.7l5.3-11.5zM1071.6 719l-5.3 11.5l4.4 0.6l3.8-8.3zM1072.1 742.7l-5.6 12.2l2.2 1.7l5.3-11.5zM1074 745.1l-5.3 11.5l4.4 0.6l3.8-8.2z"/><path class="g" fill="#58a87c" d="M1027.2 254.8l5.2 6.9l9.1-1.4l3.8-8.4l-5.2-7l-9.1 1.5zM1029.7 281.5l5.2 7l9-1.5l3.8-8.4l-5.2-6.9l-9 1.4zM1032.1 308.2l5.2 6.9l9-1.4l3.8-8.4l-5.2-6.9l-9 1.4zM1034.5 334.9l5.2 6.9l9-1.5l3.9-8.3l-5.3-7l-9 1.5zM1037 361.5l5.2 6.9l9-1.4l3.8-8.4l-5.2-6.9l-9 1.4zM1039.4 388.1l5.2 6.9l9-1.5l3.8-8.3l-5.2-6.9l-9 1.4zM1041.8 414.7l5.2 6.9l9-1.5l3.8-8.4l-5.2-6.9l-9 1.5zM1044.2 441.2l5.2 6.9l9-1.5l3.8-8.3l-5.2-6.9l-9 1.4zM1046.7 467.7l5.1 6.9l9-1.5l3.8-8.3l-5.2-6.9l-8.9 1.5zM1049.1 494.2l5.2 6.8l8.9-1.4l3.8-8.4l-5.2-6.8l-8.9 1.4zM1051.5 520.6l5.2 6.9l8.9-1.5l3.8-8.3l-5.1-6.9l-9 1.5zM1053.9 547l5.2 6.9l8.9-1.5l3.8-8.3l-5.1-6.9l-9 1.5zM1056.3 573.4l5.2 6.9l8.9-1.5l3.8-8.3l-5.1-6.9l-9 1.5zM1058.7 599.8l5.2 6.8l8.9-1.5l3.8-8.3l-5.1-6.8l-9 1.5zM1061.1 626.1l5.2 6.8l8.9-1.5l3.8-8.3l-5.2-6.8l-8.9 1.5zM1063.5 652.4l5.2 6.8l8.9-1.5l3.8-8.3l-5.2-6.8l-8.9 1.5zM1065.9 678.6l5.2 6.8l8.9-1.4l3.8-8.3l-5.2-6.8l-8.9 1.5zM1068.3 704.9l5.2 6.8l8.9-1.5l3.8-8.3l-5.2-6.8l-8.9 1.5zM1070.7 731.1l5.1 6.7l9-1.4l3.7-8.3l-5.1-6.8l-8.9 1.5zM1073.1 757.2l5.1 6.8l8.9-1.5l3.8-8.2l-5.1-6.8l-8.9 1.5z"/>
<path class="h" d="M911.8 261.8l5.7-11.6l13.7-0.6l7.8 11.2l-5.7 11.6l-1.4 1.2l-12.7 0.5l-7.4-10.4zM914.3 288.5l5.7-11.6l13.6-0.5l7.9 11.1l-5.7 11.6l-1.4 1.2l-12.7 0.5l-7.4-10.4zM916.8 315.2l5.7-11.6l13.6-0.6l7.9 11.2l-5.7 11.6l-1.4 1.2l-12.7 0.5l-7.4-10.4zM919.3 341.8l5.7-11.6l13.6-0.5l7.9 11.1l-5.7 11.6l-1.4 1.2l-12.7 0.5l-7.4-10.4zM921.8 368.4l5.7-11.6l13.6-0.5l7.9 11.1l-5.8 11.6l-1.3 1.2l-12.7 0.5l-7.4-10.4zM924.3 395l5.7-11.6l13.6-0.5l7.9 11.1l-5.8 11.6l-1.3 1.2l-12.8 0.5l-7.3-10.4zM926.8 421.6l5.7-11.6l13.6-0.5l7.8 11.1l-5.7 11.5l-1.3 1.3l-12.8 0.4l-7.3-10.3zM929.2 448.1l5.8-11.6l13.6-0.5l7.8 11.1l-5.7 11.5l-1.4 1.3l-12.7 0.5l-7.3-10.4zM931.7 474.6l5.8-11.6l13.5-0.5l7.9 11.1l-5.8 11.5l-1.3 1.3l-12.7 0.4l-7.3-10.3zM934.2 501l5.7-11.5l13.6-0.5l7.8 11l-5.7 11.6l-1.3 1.2l-12.7 0.5l-7.4-10.3zM936.7 527.4l5.7-11.5l13.6-0.5l7.8 11.1l-5.7 11.5l-1.3 1.2l-12.8 0.5l-7.3-10.3zM939.2 553.8l5.7-11.5l13.5-0.5l7.9 11.1l-5.8 11.5l-1.3 1.2l-12.7 0.5l-7.3-10.3zM941.6 580.2l5.8-11.5l13.5-0.5l7.8 11l-5.7 11.5l-1.3 1.3l-12.7 0.5l-7.3-10.3zM944.1 606.5l5.7-11.4l13.6-0.5l7.8 11l-5.7 11.4l-1.4 1.3l-12.6 0.5l-7.4-10.3zM946.6 632.8l5.7-11.4l13.5-0.5l7.8 11l-5.7 11.4l-1.3 1.3l-12.7 0.5l-7.3-10.3zM949 659.1l5.8-11.4l13.5-0.5l7.8 11l-5.7 11.4l-1.4 1.3l-12.6 0.5l-7.3-10.3zM951.5 685.3l5.7-11.4l13.5-0.5l7.8 11l-5.7 11.4l-1.3 1.4l-12.7 0.4l-7.3-10.3zM954 711.5l5.7-11.5l13.5-0.4l7.8 10.9l-5.7 11.4l-1.4 1.4l-12.6 0.4l-7.3-10.2zM956.4 737.7l5.7-11.4l13.5-0.4l7.8 10.9l-5.7 11.4l-1.3 1.4l-12.6 0.4l-7.4-10.3zM958.9 763.9l5.7-11.4l13.5-0.5l7.7 11l-5.6 11.3l-1.4 1.4l-12.6 0.4l-7.3-10.2z"/><path class="f" fill="#687038" d="M911.8 263.7l7.4 10.4l0.9-1.8l-5.3-7.5zM914.3 290.4l7.4 10.4l0.9-1.8l-5.3-7.5zM916.8 317.1l7.4 10.4l0.9-1.8l-5.3-7.5zM919.3 343.7l7.4 10.4l0.9-1.8l-5.3-7.5zM921.8 370.3l7.4 10.4l0.9-1.8l-5.3-7.5zM924.3 396.9l7.3 10.4l1-1.8l-5.3-7.5zM926.8 423.5l7.3 10.3l1-1.7l-5.3-7.5zM929.3 450l7.3 10.4l1-1.8l-5.3-7.5zM931.7 476.5l7.4 10.3l1-1.7l-5.3-7.5zM934.2 503l7.4 10.3l0.9-1.8l-5.2-7.4zM936.7 529.4l7.3 10.3l1-1.7l-5.3-7.5zM939.2 555.8l7.3 10.3l1-1.7l-5.3-7.5zM941.7 582.2l7.3 10.3l0.9-1.8l-5.2-7.4zM944.1 608.5l7.4 10.3l0.9-1.7l-5.3-7.4zM946.6 634.8l7.3 10.3l1-1.7l-5.3-7.4zM949.1 661.1l7.3 10.3l0.9-1.7l-5.2-7.4zM951.5 687.3l7.3 10.3l1-1.7l-5.3-7.4zM954 713.5l7.3 10.3l1-1.7l-5.3-7.4zM956.4 739.7l7.3 10.3l1-1.7l-5.2-7.4zM958.9 765.9l7.3 10.2l1-1.6l-5.3-7.4z"/><path class="f" fill="#566030" d="M919.2 274.1l12.7-0.5l-2.6-1.7l-9.2 0.4zM921.7 300.8l12.7-0.5l-2.6-1.7l-9.2 0.4zM924.2 327.5l12.7-0.5l-2.6-1.7l-9.2 0.4zM926.7 354.1l12.7-0.5l-2.6-1.6l-9.2 0.3zM929.2 380.7l12.7-0.5l-2.6-1.6l-9.2 0.3zM931.6 407.3l12.8-0.5l-2.6-1.6l-9.2 0.3zM934.1 433.8l12.8-0.4l-2.7-1.7l-9.1 0.4zM936.6 460.4l12.7-0.5l-2.6-1.7l-9.1 0.4zM939.1 486.8l12.7-0.4l-2.6-1.7l-9.1 0.4zM941.6 513.3l12.7-0.5l-2.6-1.6l-9.2 0.3zM944 539.7l12.7-0.4l-2.6-1.7l-9.1 0.4zM946.5 566.1l12.7-0.5l-2.6-1.6l-9.1 0.4zM949 592.5l12.7-0.5l-2.6-1.6l-9.2 0.3zM951.5 618.8l12.6-0.5l-2.6-1.5l-9.1 0.3zM953.9 645.1l12.7-0.5l-2.6-1.5l-9.1 0.3zM956.4 671.4l12.6-0.5l-2.5-1.6l-9.2 0.4zM958.8 697.6l12.7-0.4l-2.6-1.6l-9.1 0.3zM961.3 723.8l12.6-0.4l-2.5-1.6l-9.1 0.3zM963.7 750l12.7-0.5l-2.6-1.5l-9.1 0.3zM966.2 776.1l12.6-0.4l-2.6-1.5l-9 0.3z"/><path class="f" fill="#687038" d="M931.9 273.6l5.4-10.9l-4.1 1.4l-3.9 7.8zM934.4 300.3l5.4-10.9l-4.1 1.4l-3.9 7.8zM936.9 327l5.4-10.9l-4.1 1.4l-3.9 7.8zM939.4 353.6l5.4-10.9l-4.1 1.4l-3.9 7.9zM941.9 380.2l5.4-10.8l-4.2 1.4l-3.8 7.8zM944.4 406.8l5.4-10.8l-4.2 1.4l-3.8 7.8zM946.9 433.4l5.3-10.9l-4.1 1.4l-3.9 7.8zM949.3 459.9l5.4-10.8l-4.1 1.4l-3.9 7.7zM951.8 486.4l5.4-10.8l-4.1 1.4l-3.9 7.7zM954.3 512.8l5.3-10.8l-4.1 1.4l-3.8 7.8zM956.7 539.3l5.4-10.8l-4.1 1.4l-3.9 7.7zM959.2 565.6l5.4-10.7l-4.1 1.4l-3.9 7.7zM961.7 592l5.3-10.7l-4.1 1.4l-3.8 7.7zM964.1 618.3l5.4-10.7l-4.1 1.4l-3.9 7.8zM966.6 644.6l5.3-10.7l-4.1 1.4l-3.8 7.8zM969 670.9l5.4-10.7l-4.1 1.4l-3.8 7.7zM971.5 697.2l5.3-10.7l-4 1.4l-3.9 7.7zM973.9 723.4l5.4-10.7l-4.1 1.4l-3.8 7.7zM976.4 749.5l5.3-10.6l-4.1 1.4l-3.8 7.7zM978.8 775.7l5.4-10.7l-4.1 1.5l-3.9 7.7z"/><path class="f" fill="#bfcab2" d="M939 260.8l-7.8-11.2l-1.3 2.6l7.4 10.5zM937.3 262.7l-7.4-10.5l-2 4.3l5.3 7.6zM941.5 287.5l-7.9-11.2l-1.2 2.7l7.4 10.4zM939.8 289.4l-7.4-10.4l-2 4.3l5.3 7.5zM944 314.2l-7.9-11.2l-1.2 2.7l7.4 10.4zM942.3 316.1l-7.4-10.4l-2 4.3l5.3 7.5zM946.5 340.8l-7.9-11.1l-1.2 2.6l7.4 10.4zM944.8 342.7l-7.4-10.4l-2 4.3l5.3 7.5zM949 367.4l-7.9-11.1l-1.2 2.7l7.4 10.4zM947.3 369.4l-7.4-10.4l-2.1 4.3l5.3 7.5zM951.5 394l-7.9-11.1l-1.2 2.7l7.4 10.4zM949.8 396l-7.4-10.4l-2.1 4.3l5.3 7.5zM953.9 420.6l-7.8-11.1l-1.2 2.7l7.3 10.3zM952.2 422.5l-7.3-10.3l-2.1 4.3l5.3 7.4zM956.4 447.1l-7.8-11.1l-1.2 2.7l7.3 10.4zM954.7 449.1l-7.3-10.4l-2.1 4.3l5.3 7.5zM958.9 473.6l-7.9-11.1l-1.2 2.7l7.4 10.4zM957.2 475.6l-7.4-10.4l-2 4.3l5.3 7.5zM961.3 500l-7.8-11l-1.2 2.7l7.3 10.3zM959.6 502l-7.3-10.3l-2 4.3l5.2 7.4zM963.8 526.5l-7.8-11.1l-1.2 2.7l7.3 10.4zM962.1 528.5l-7.3-10.4l-2.1 4.3l5.3 7.5zM966.3 552.9l-7.9-11l-1.2 2.7l7.4 10.3zM964.6 554.9l-7.4-10.3l-2 4.3l5.3 7.4zM968.7 579.2l-7.8-11l-1.2 2.7l7.3 10.4zM967 581.3l-7.3-10.4l-2 4.4l5.2 7.4zM971.2 605.6l-7.8-11l-1.2 2.7l7.3 10.3zM969.5 607.6l-7.3-10.3l-2.1 4.3l5.3 7.4zM973.6 631.9l-7.8-11l-1.2 2.7l7.3 10.3zM971.9 633.9l-7.3-10.3l-2 4.3l5.2 7.4zM976.1 658.2l-7.8-11l-1.2 2.7l7.3 10.3zM974.4 660.2l-7.3-10.3l-2.1 4.3l5.3 7.4zM978.5 684.4l-7.8-10.9l-1.2 2.7l7.3 10.3zM976.8 686.5l-7.3-10.3l-2 4.3l5.3 7.4zM981 710.6l-7.8-10.9l-1.2 2.7l7.3 10.3zM979.3 712.7l-7.3-10.3l-2.1 4.3l5.3 7.4zM983.4 736.8l-7.8-10.9l-1.2 2.7l7.3 10.3zM981.7 738.9l-7.3-10.3l-2 4.4l5.2 7.3zM985.9 763l-7.8-11l-1.2 2.8l7.3 10.2zM984.2 765l-7.3-10.2l-2.1 4.3l5.3 7.4z"/><path class="f" fill="#edd2c2" d="M931.2 249.6l-13.7 0.6l-0.3 2.5l12.7-0.5zM929.9 252.2l-12.7 0.5l1.5 4.2l9.2-0.4zM933.6 276.3l-13.6 0.6l-0.3 2.6l12.7-0.5zM932.4 279l-12.7 0.5l1.5 4.1l9.2-0.3zM936.1 303l-13.6 0.6l-0.3 2.6l12.7-0.5zM934.9 305.7l-12.7 0.5l1.5 4.1l9.2-0.3zM938.6 329.7l-13.6 0.5l-0.3 2.6l12.7-0.5zM937.4 332.3l-12.7 0.5l1.5 4.2l9.2-0.4zM941.1 356.3l-13.6 0.5l-0.3 2.7l12.7-0.5zM939.9 359l-12.7 0.5l1.5 4.1l9.1-0.3zM943.6 382.9l-13.6 0.5l-0.3 2.7l12.7-0.5zM942.4 385.6l-12.7 0.5l1.5 4.1l9.1-0.3zM946.1 409.5l-13.6 0.5l-0.4 2.6l12.8-0.4zM944.9 412.2l-12.8 0.4l1.6 4.2l9.1-0.3zM948.6 436l-13.6 0.5l-0.4 2.7l12.8-0.5zM947.4 438.7l-12.8 0.5l1.5 4.1l9.2-0.3zM951 462.5l-13.5 0.5l-0.4 2.7l12.7-0.5zM949.8 465.2l-12.7 0.5l1.5 4.2l9.2-0.4zM953.5 489l-13.6 0.5l-0.3 2.7l12.7-0.5zM952.3 491.7l-12.7 0.5l1.5 4.1l9.2-0.3zM956 515.4l-13.6 0.5l-0.3 2.7l12.7-0.5zM954.8 518.1l-12.7 0.5l1.5 4.2l9.1-0.4zM958.4 541.9l-13.5 0.4l-0.4 2.7l12.7-0.4zM957.2 544.6l-12.7 0.4l1.6 4.2l9.1-0.3zM960.9 568.2l-13.5 0.5l-0.4 2.7l12.7-0.5zM959.7 570.9l-12.7 0.5l1.5 4.2l9.2-0.3zM963.4 594.6l-13.6 0.5l-0.3 2.6l12.7-0.4zM962.2 597.3l-12.7 0.4l1.5 4.2l9.1-0.3zM965.8 620.9l-13.5 0.5l-0.3 2.7l12.6-0.5zM964.6 623.6l-12.6 0.5l1.5 4.2l9.1-0.4zM968.3 647.2l-13.5 0.5l-0.4 2.7l12.7-0.5zM967.1 649.9l-12.7 0.5l1.5 4.2l9.1-0.4zM970.7 673.5l-13.5 0.4l-0.3 2.7l12.6-0.4zM969.5 676.2l-12.6 0.4l1.5 4.2l9.1-0.3zM973.2 699.7l-13.5 0.4l-0.4 2.8l12.7-0.5zM972 702.4l-12.7 0.5l1.5 4.2l9.1-0.4zM975.6 725.9l-13.5 0.4l-0.3 2.8l12.6-0.5zM974.4 728.6l-12.6 0.5l1.5 4.2l9.1-0.3zM978.1 752l-13.5 0.5l-0.4 2.7l12.7-0.4zM976.9 754.8l-12.7 0.4l1.5 4.2l9.1-0.3z"/><path class="f" fill="#bfcab2" d="M917.2 252.7l-5.4 11l3 1.1l3.9-7.9zM919.7 279.5l-5.4 10.9l3 1.1l3.9-7.9zM922.2 306.2l-5.4 10.9l3 1.1l3.9-7.9zM924.7 332.8l-5.4 10.9l3 1.1l3.9-7.8zM927.2 359.5l-5.4 10.8l3 1.1l3.9-7.8zM929.7 386.1l-5.4 10.8l3 1.1l3.9-7.8zM932.1 412.6l-5.3 10.9l3 1.1l3.9-7.8zM934.6 439.2l-5.3 10.8l3 1.1l3.8-7.8zM937.1 465.7l-5.4 10.8l3.1 1.1l3.8-7.7zM939.6 492.2l-5.4 10.8l3.1 1.1l3.8-7.8zM942.1 518.6l-5.4 10.8l3 1.1l3.9-7.7zM944.5 545l-5.3 10.8l3 1.1l3.9-7.7zM947 571.4l-5.3 10.8l3 1.1l3.8-7.7zM949.5 597.7l-5.4 10.8l3 1.2l3.9-7.8zM952 624.1l-5.4 10.7l3 1.2l3.9-7.7zM954.4 650.4l-5.3 10.7l3 1.2l3.8-7.7zM956.9 676.6l-5.4 10.7l3 1.2l3.9-7.7zM959.3 702.9l-5.3 10.6l3 1.2l3.8-7.6zM961.8 729.1l-5.4 10.6l3.1 1.2l3.8-7.6zM964.2 755.2l-5.3 10.7l3 1.2l3.8-7.7z"/><path class="g" fill="#58a87c" d="M914.8 264.8l5.3 7.5l9.2-0.4l3.9-7.8l-5.3-7.6l-9.2 0.4zM917.3 291.5l5.3 7.5l9.2-0.4l3.9-7.8l-5.3-7.5l-9.2 0.3zM919.8 318.2l5.3 7.5l9.2-0.4l3.9-7.8l-5.3-7.5l-9.2 0.3zM922.3 344.8l5.3 7.5l9.2-0.3l3.9-7.9l-5.3-7.5l-9.2 0.4zM924.8 371.4l5.3 7.5l9.2-0.3l3.8-7.8l-5.3-7.5l-9.1 0.3zM927.3 398l5.3 7.5l9.2-0.3l3.8-7.8l-5.3-7.5l-9.1 0.3zM929.8 424.6l5.3 7.5l9.1-0.4l3.9-7.8l-5.3-7.4l-9.1 0.3zM932.3 451.1l5.3 7.5l9.1-0.4l3.9-7.7l-5.3-7.5l-9.2 0.3zM934.8 477.6l5.3 7.5l9.1-0.4l3.9-7.7l-5.3-7.5l-9.2 0.4zM937.3 504.1l5.2 7.4l9.2-0.3l3.8-7.8l-5.2-7.4l-9.2 0.3zM939.7 530.5l5.3 7.5l9.1-0.4l3.9-7.7l-5.3-7.5l-9.1 0.4zM942.2 556.9l5.3 7.5l9.1-0.4l3.9-7.7l-5.3-7.4l-9.1 0.3zM944.7 583.3l5.2 7.4l9.2-0.3l3.8-7.7l-5.2-7.4l-9.2 0.3zM947.1 609.7l5.3 7.4l9.1-0.3l3.9-7.8l-5.3-7.4l-9.1 0.3zM949.6 636l5.3 7.4l9.1-0.3l3.8-7.8l-5.2-7.4l-9.1 0.4zM952.1 662.3l5.2 7.4l9.2-0.4l3.8-7.7l-5.3-7.4l-9.1 0.4zM954.5 688.5l5.3 7.4l9.1-0.3l3.9-7.7l-5.3-7.4l-9.1 0.3zM957 714.7l5.3 7.4l9.1-0.3l3.8-7.7l-5.3-7.4l-9.1 0.4zM959.5 740.9l5.2 7.4l9.1-0.3l3.8-7.7l-5.2-7.3l-9.1 0.3zM961.9 767.1l5.3 7.4l9-0.3l3.9-7.7l-5.3-7.4l-9.1 0.3z"/>
<path class="h" d="M984.4 257.2l5.8-12.2l13.7-1.6l7.9 10.5l-0.2 1.9l-5.5 11.5l-12.8 1.5l-1-1zM986.9 283.9l5.8-12.2l13.7-1.6l7.9 10.5l-0.3 1.9l-5.4 11.5l-12.8 1.5l-1-1zM989.3 310.6l5.8-12.2l13.7-1.6l7.9 10.5l-0.2 1.9l-5.5 11.4l-12.8 1.6l-1-1zM991.8 337.2l5.8-12.1l13.7-1.7l7.9 10.6l-0.3 1.9l-5.4 11.4l-12.8 1.5l-1-1zM994.2 363.9l5.8-12.2l13.7-1.6l7.9 10.5l-0.2 1.9l-5.5 11.4l-12.8 1.5l-1-1zM996.7 390.4l5.8-12.1l13.7-1.6l7.8 10.5l-0.2 1.9l-5.4 11.4l-12.8 1.5l-1-1zM999.1 417l5.7-12.1l13.7-1.7l7.8 10.6l-0.2 1.9l-5.4 11.3l-12.8 1.6l-1-1.1zM1001.6 443.5l5.8-12.1l13.6-1.6l7.9 10.5l-0.2 1.9l-5.5 11.4l-12.8 1.5l-0.9-1.1zM1004 470l5.8-12.1l13.7-1.6l7.8 10.5l-0.2 1.9l-5.4 11.4l-12.8 1.5l-1-1.1zM1006.5 496.5l5.8-12.1l13.6-1.6l7.8 10.4l-0.2 2l-5.4 11.3l-12.8 1.5l-1-1zM1008.9 522.9l5.8-12.1l13.6-1.6l7.9 10.5l-0.3 1.9l-5.4 11.4l-12.7 1.5l-1-1.1zM1011.4 549.4l5.7-12.1l13.6-1.7l7.9 10.5l-0.2 1.9l-5.5 11.4l-12.7 1.5l-1-1.1zM1013.8 575.7l5.8-12l13.6-1.7l7.8 10.4l-0.2 2l-5.4 11.3l-12.8 1.6l-1-1.2zM1016.2 602.1l5.8-12.1l13.6-1.6l7.8 10.4l-0.2 2l-5.4 11.3l-12.8 1.5l-1-1.1zM1018.6 628.4l5.8-12.1l13.6-1.6l7.8 10.4l-0.2 2l-5.4 11.3l-12.7 1.5l-1-1.1zM1021.1 654.7l5.7-12.1l13.6-1.6l7.8 10.4l-0.2 2l-5.4 11.2l-12.7 1.6l-1-1.2zM1023.5 680.9l5.7-12l13.6-1.7l7.8 10.4l-0.2 2l-5.4 11.3l-12.7 1.5l-1-1.1zM1025.9 707.1l5.8-12l13.5-1.6l7.8 10.3l-0.2 2.1l-5.4 11.2l-12.7 1.5l-1-1.1zM1028.3 733.3l5.8-12l13.5-1.6l7.8 10.3l-0.2 2.1l-5.4 11.2l-12.7 1.5l-1-1.1zM1030.7 759.5l5.8-12l13.5-1.6l7.8 10.3l-0.2 2l-5.4 11.2l-12.7 1.6l-1-1.2z"/><path class="f" fill="#687038" d="M985.9 258.9l7.4 9.9l1.9-2.1l-5.3-7.1zM988.4 285.6l7.4 9.9l1.9-2.1l-5.3-7.1zM990.8 312.3l7.4 9.9l2-2.1l-5.4-7.1zM993.3 338.9l7.4 9.9l1.9-2l-5.3-7.1zM995.7 365.6l7.4 9.8l2-2l-5.4-7.1zM998.2 392.2l7.4 9.8l1.9-2l-5.3-7.1zM1000.6 418.7l7.4 9.9l1.9-2l-5.3-7.1zM1003.1 445.3l7.4 9.8l1.9-2l-5.3-7.1zM1005.5 471.8l7.4 9.8l1.9-2l-5.3-7.1zM1008 498.3l7.3 9.8l2-2l-5.3-7.1zM1010.4 524.7l7.4 9.8l1.9-2l-5.3-7zM1012.8 551.1l7.4 9.8l1.9-2l-5.3-7zM1015.3 577.5l7.3 9.8l1.9-2l-5.2-7zM1017.7 603.8l7.3 9.8l2-2l-5.3-7zM1020.1 630.2l7.4 9.7l1.9-1.9l-5.3-7zM1022.6 656.5l7.3 9.7l1.9-1.9l-5.3-7zM1025 682.7l7.3 9.7l1.9-1.9l-5.2-7zM1027.4 708.9l7.3 9.7l1.9-1.9l-5.2-6.9zM1029.8 735.1l7.3 9.7l1.9-1.9l-5.2-6.9zM1032.2 761.3l7.3 9.7l2-1.9l-5.3-7z"/><path class="f" fill="#566030" d="M993.3 268.8l12.8-1.5l-1.6-1.7l-9.3 1.1zM995.8 295.5l12.8-1.5l-1.7-1.7l-9.2 1.1zM998.2 322.2l12.8-1.6l-1.6-1.6l-9.2 1.1zM1000.7 348.8l12.8-1.5l-1.7-1.6l-9.2 1.1zM1003.1 375.4l12.8-1.5l-1.6-1.6l-9.2 1.1zM1005.6 402l12.8-1.5l-1.7-1.6l-9.2 1.1zM1008 428.6l12.8-1.6l-1.7-1.5l-9.2 1.1zM1010.5 455.1l12.7-1.5l-1.6-1.6l-9.2 1.1zM1012.9 481.6l12.8-1.5l-1.7-1.6l-9.2 1.1zM1015.3 508.1l12.8-1.6l-1.7-1.5l-9.1 1.1zM1017.8 534.5l12.7-1.5l-1.6-1.6l-9.2 1.1zM1020.2 560.9l12.7-1.5l-1.6-1.6l-9.2 1.1zM1022.6 587.3l12.8-1.6l-1.7-1.5l-9.2 1.1zM1025 613.6l12.8-1.5l-1.7-1.6l-9.1 1.1zM1027.5 639.9l12.7-1.5l-1.6-1.5l-9.2 1.1zM1029.9 666.2l12.7-1.6l-1.6-1.5l-9.2 1.2zM1032.3 692.4l12.7-1.5l-1.6-1.5l-9.2 1.1zM1034.7 718.6l12.7-1.5l-1.6-1.5l-9.2 1.1zM1037.1 744.8l12.7-1.5l-1.6-1.5l-9.2 1.1zM1039.5 771l12.7-1.6l-1.6-1.4l-9.1 1.1z"/><path class="f" fill="#687038" d="M1006.1 267.3l5.5-11.5l-3.2 1.6l-3.9 8.2zM1008.6 294l5.4-11.5l-3.2 1.6l-3.9 8.2zM1011 320.6l5.5-11.4l-3.2 1.6l-3.9 8.2zM1013.5 347.3l5.4-11.4l-3.2 1.6l-3.9 8.2zM1015.9 373.9l5.5-11.4l-3.2 1.6l-3.9 8.2zM1018.4 400.5l5.4-11.4l-3.2 1.6l-3.9 8.2zM1020.8 427l5.4-11.3l-3.2 1.6l-3.9 8.2zM1023.2 453.6l5.5-11.4l-3.2 1.6l-3.9 8.2zM1025.7 480.1l5.4-11.4l-3.2 1.6l-3.9 8.2zM1028.1 506.5l5.4-11.3l-3.2 1.6l-3.9 8.2zM1030.5 533l5.4-11.4l-3.1 1.7l-3.9 8.1zM1032.9 559.4l5.5-11.4l-3.2 1.7l-3.9 8.1zM1035.4 585.7l5.4-11.3l-3.2 1.7l-3.9 8.1zM1037.8 612.1l5.4-11.3l-3.2 1.6l-3.9 8.1zM1040.2 638.4l5.4-11.3l-3.2 1.6l-3.8 8.2zM1042.6 664.6l5.4-11.2l-3.2 1.6l-3.8 8.1zM1045 690.9l5.4-11.3l-3.1 1.7l-3.9 8.1zM1047.4 717.1l5.4-11.2l-3.1 1.6l-3.9 8.1zM1049.8 743.3l5.4-11.2l-3.1 1.6l-3.9 8.1zM1052.2 769.4l5.4-11.2l-3.1 1.7l-3.9 8.1z"/><path class="f" fill="#bfcab2" d="M1011.6 255.8l-7.4-9.9l-1.1 4.4l5.3 7.1zM1014 282.5l-7.4-9.9l-1.1 4.4l5.3 7.1zM1016.5 309.2l-7.4-9.9l-1.1 4.4l5.3 7.1zM1018.9 335.9l-7.4-9.9l-1.1 4.4l5.3 7.1zM1021.4 362.5l-7.4-9.9l-1.1 4.4l5.3 7.1zM1023.8 389.1l-7.4-9.9l-1.1 4.4l5.3 7.1zM1026.2 415.7l-7.3-9.9l-1.2 4.4l5.3 7.1zM1028.7 442.2l-7.4-9.8l-1.1 4.4l5.3 7zM1031.1 468.7l-7.4-9.8l-1.1 4.4l5.3 7zM1033.5 495.2l-7.3-9.8l-1.2 4.4l5.3 7zM1035.9 521.6l-7.3-9.8l-1.1 4.4l5.3 7.1zM1038.4 548l-7.4-9.7l-1.1 4.3l5.3 7.1zM1040.8 574.4l-7.4-9.8l-1.1 4.4l5.3 7.1zM1043.2 600.8l-7.4-9.8l-1.1 4.4l5.3 7zM1045.6 627.1l-7.3-9.8l-1.1 4.4l5.2 7zM1048 653.4l-7.3-9.8l-1.1 4.4l5.2 7zM1050.4 679.6l-7.3-9.7l-1.1 4.4l5.3 7zM1052.8 705.9l-7.3-9.7l-1.1 4.4l5.3 6.9zM1055.2 732.1l-7.3-9.7l-1.1 4.4l5.3 6.9zM1057.6 758.2l-7.3-9.7l-1.1 4.5l5.3 6.9z"/><path class="f" fill="#edd2c2" d="M1003.9 243.4l-13.7 1.6l1.1 2.4l12.9-1.5zM1004.2 245.9l-12.9 1.5l2.5 4l9.3-1.1zM1006.4 270.1l-13.7 1.6l1.1 2.4l12.8-1.5zM1006.6 272.6l-12.8 1.5l2.5 4l9.2-1.1zM1008.8 296.8l-13.7 1.6l1.2 2.5l12.8-1.6zM1009.1 299.3l-12.8 1.6l2.4 3.9l9.3-1.1zM1011.3 323.4l-13.7 1.7l1.1 2.4l12.8-1.5zM1011.5 326l-12.8 1.5l2.5 4l9.2-1.1zM1013.7 350.1l-13.7 1.6l1.2 2.5l12.8-1.6zM1014 352.6l-12.8 1.6l2.4 3.9l9.3-1.1zM1016.2 376.7l-13.7 1.6l1.1 2.5l12.8-1.6zM1016.4 379.2l-12.8 1.6l2.5 3.9l9.2-1.1zM1018.6 403.2l-13.7 1.7l1.2 2.5l12.8-1.6zM1018.9 405.8l-12.8 1.6l2.4 3.9l9.2-1.1zM1021 429.8l-13.6 1.6l1.1 2.5l12.8-1.5zM1021.3 432.4l-12.8 1.5l2.5 4l9.2-1.1zM1023.5 456.3l-13.7 1.6l1.1 2.5l12.8-1.5zM1023.7 458.9l-12.8 1.5l2.5 4l9.2-1.1zM1025.9 482.8l-13.6 1.6l1.1 2.5l12.8-1.5zM1026.2 485.4l-12.8 1.5l2.5 4l9.1-1.1zM1028.3 509.2l-13.6 1.7l1.1 2.5l12.8-1.6zM1028.6 511.8l-12.8 1.6l2.5 3.9l9.2-1.1zM1030.7 535.6l-13.6 1.7l1.1 2.5l12.8-1.5zM1031 538.3l-12.8 1.5l2.5 4l9.2-1.2zM1033.2 562l-13.6 1.7l1.1 2.5l12.7-1.6zM1033.4 564.6l-12.7 1.6l2.5 3.9l9.1-1.1zM1035.6 588.4l-13.6 1.6l1.1 2.5l12.7-1.5zM1035.8 591l-12.7 1.5l2.5 4l9.1-1.1zM1038 614.7l-13.6 1.6l1.1 2.6l12.8-1.6zM1038.3 617.3l-12.8 1.6l2.5 3.9l9.2-1.1zM1040.4 641l-13.6 1.6l1.2 2.6l12.7-1.6zM1040.7 643.6l-12.7 1.6l2.4 4l9.2-1.2zM1042.8 667.3l-13.6 1.6l1.2 2.6l12.7-1.6zM1043.1 669.9l-12.7 1.6l2.4 3.9l9.2-1.1zM1045.2 693.5l-13.5 1.6l1.1 2.6l12.7-1.5zM1045.5 696.2l-12.7 1.5l2.5 4l9.1-1.1zM1047.6 719.7l-13.5 1.6l1.1 2.6l12.7-1.5zM1047.9 722.4l-12.7 1.5l2.5 4l9.1-1.1zM1050 745.9l-13.5 1.6l1.1 2.6l12.7-1.6zM1050.3 748.5l-12.7 1.6l2.5 4l9.1-1.1z"/><path class="f" fill="#bfcab2" d="M990.2 245l-5.8 12.2l1.5 1.7l5.4-11.5zM991.3 247.4l-5.4 11.5l4 0.7l3.9-8.2zM992.7 271.7l-5.8 12.2l1.5 1.7l5.4-11.5zM993.8 274.1l-5.4 11.5l4 0.7l3.9-8.2zM995.1 298.4l-5.8 12.2l1.5 1.7l5.5-11.4zM996.3 300.9l-5.5 11.4l4 0.7l3.9-8.2zM997.6 325.1l-5.8 12.1l1.5 1.7l5.4-11.4zM998.7 327.5l-5.4 11.4l4 0.8l3.9-8.2zM1000 351.7l-5.8 12.2l1.5 1.7l5.5-11.4zM1001.2 354.2l-5.5 11.4l4 0.7l3.9-8.2zM1002.5 378.3l-5.8 12.2l1.5 1.7l5.4-11.4zM1003.6 380.8l-5.4 11.4l4 0.7l3.9-8.2zM1004.9 404.9l-5.8 12.1l1.5 1.7l5.5-11.3zM1006.1 407.4l-5.5 11.3l4 0.8l3.9-8.2zM1007.4 431.4l-5.8 12.1l1.5 1.8l5.4-11.4zM1008.5 433.9l-5.4 11.4l4 0.7l3.9-8.1zM1009.8 457.9l-5.8 12.1l1.5 1.8l5.4-11.4zM1010.9 460.4l-5.4 11.4l4 0.7l3.9-8.1zM1012.3 484.4l-5.8 12.1l1.5 1.8l5.4-11.4zM1013.4 486.9l-5.4 11.4l4 0.7l3.9-8.1zM1014.7 510.9l-5.8 12l1.5 1.8l5.4-11.3zM1015.8 513.4l-5.4 11.3l4 0.8l3.9-8.2zM1017.1 537.3l-5.7 12l1.4 1.8l5.4-11.3zM1018.2 539.8l-5.4 11.3l4 0.8l3.9-8.1zM1019.6 563.7l-5.8 12l1.5 1.8l5.4-11.3zM1020.7 566.2l-5.4 11.3l4 0.8l3.9-8.2zM1022 590l-5.8 12.1l1.5 1.7l5.4-11.3zM1023.1 592.5l-5.4 11.3l4 0.8l3.9-8.1zM1024.4 616.3l-5.8 12.1l1.5 1.8l5.4-11.3zM1025.5 618.9l-5.4 11.3l4 0.8l3.9-8.2zM1026.8 642.6l-5.7 12.1l1.5 1.8l5.4-11.3zM1028 645.2l-5.4 11.3l3.9 0.8l3.9-8.1zM1029.2 668.9l-5.7 12l1.5 1.8l5.4-11.2zM1030.4 671.5l-5.4 11.2l4 0.8l3.8-8.1zM1031.7 695.1l-5.8 12l1.5 1.8l5.4-11.2zM1032.8 697.7l-5.4 11.2l4 0.9l3.9-8.1zM1034.1 721.3l-5.8 12l1.5 1.8l5.4-11.2zM1035.2 723.9l-5.4 11.2l4 0.9l3.9-8.1zM1036.5 747.5l-5.8 12l1.5 1.8l5.4-11.2zM1037.6 750.1l-5.4 11.2l4 0.8l3.9-8z"/><path class="g" fill="#58a87c" d="M989.9 259.6l5.3 7.1l9.3-1.1l3.9-8.2l-5.3-7.1l-9.3 1.1zM992.4 286.3l5.3 7.1l9.2-1.1l3.9-8.2l-5.3-7.1l-9.2 1.1zM994.8 313l5.4 7.1l9.2-1.1l3.9-8.2l-5.3-7.1l-9.3 1.1zM997.3 339.7l5.3 7.1l9.2-1.1l3.9-8.2l-5.3-7.1l-9.2 1.1zM999.7 366.3l5.4 7.1l9.2-1.1l3.9-8.2l-5.3-7.1l-9.3 1.1zM1002.2 392.9l5.3 7.1l9.2-1.1l3.9-8.2l-5.3-7.1l-9.2 1.1zM1004.6 419.5l5.3 7.1l9.2-1.1l3.9-8.2l-5.3-7.1l-9.2 1.1zM1007.1 446l5.3 7.1l9.2-1.1l3.9-8.2l-5.3-7l-9.2 1.1zM1009.5 472.5l5.3 7.1l9.2-1.1l3.9-8.2l-5.3-7l-9.2 1.1zM1012 499l5.3 7.1l9.1-1.1l3.9-8.2l-5.3-7l-9.1 1.1zM1014.4 525.5l5.3 7l9.2-1.1l3.9-8.1l-5.3-7.1l-9.2 1.1zM1016.8 551.9l5.3 7l9.2-1.1l3.9-8.1l-5.3-7.1l-9.2 1.2zM1019.3 578.3l5.2 7l9.2-1.1l3.9-8.1l-5.3-7.1l-9.1 1.1zM1021.7 604.6l5.3 7l9.1-1.1l3.9-8.1l-5.3-7l-9.1 1.1zM1024.1 631l5.3 7l9.2-1.1l3.8-8.2l-5.2-7l-9.2 1.1zM1026.5 657.3l5.3 7l9.2-1.2l3.8-8.1l-5.2-7l-9.2 1.2zM1029 683.5l5.2 7l9.2-1.1l3.9-8.1l-5.3-7l-9.2 1.1zM1031.4 709.8l5.2 6.9l9.2-1.1l3.9-8.1l-5.3-6.9l-9.1 1.1zM1033.8 736l5.2 6.9l9.2-1.1l3.9-8.1l-5.3-6.9l-9.1 1.1zM1036.2 762.1l5.3 7l9.1-1.1l3.9-8.1l-5.3-6.9l-9.1 1.1z"/>
<path class="h" d="M947.9 260.2l5.9-11.9l13.8-1.1l7.9 10.9l-5.8 11.9l-0.7 1.2l-12.9 1l-7.4-10.2zM950.4 286.9l5.8-12l13.8-1.1l8 10.9l-5.9 11.9l-0.6 1.2l-12.9 1l-7.4-10.2zM952.9 313.6l5.8-11.9l13.8-1.1l7.9 10.9l-5.8 11.9l-0.6 1.2l-12.9 1l-7.5-10.2zM955.4 340.3l5.8-11.9l13.8-1.1l7.9 10.8l-5.8 11.9l-0.7 1.2l-12.8 1l-7.5-10.1zM957.9 366.9l5.9-11.9l13.7-1.1l8 10.8l-5.9 11.9l-0.6 1.2l-12.9 1l-7.4-10.1zM960.3 393.5l5.8-11.9l13.8-1.1l7.9 10.8l-5.8 11.9l-0.6 1.2l-12.9 1l-7.4-10.1zM962.8 420l5.8-11.8l13.8-1.1l7.9 10.8l-5.9 11.9l-0.6 1.2l-12.8 1l-7.4-10.1zM965.3 446.6l5.8-11.9l13.7-1.1l7.9 10.8l-5.8 11.9l-0.6 1.2l-12.9 1l-7.4-10.1zM967.7 473.1l5.8-11.9l13.8-1l7.9 10.7l-1 2l-5.4 11.1l-12.9 1l-7.4-10.1zM970.2 499.5l5.8-11.8l13.7-1.1l7.9 10.8l-1 2l-5.4 11l-12.8 1l-7.4-10zM972.6 526l5.8-11.8l13.8-1.1l7.8 10.7l-0.9 2l-5.5 11.1l-12.8 1l-7.4-10.1zM975.1 552.4l5.8-11.8l13.7-1.1l7.9 10.7l-1 2l-5.4 11.1l-12.8 1l-7.4-10.1zM977.6 578.7l5.8-11.7l13.6-1.1l7.9 10.7l-0.9 2l-5.5 11l-12.8 1l-7.4-10zM980 605.1l5.8-11.8l13.7-1.1l7.9 10.7l-1 2.1l-5.4 11l-12.8 1l-7.4-10zM982.5 631.4l5.7-11.8l13.7-1l7.9 10.6l-1 2.1l-5.4 11l-12.8 1l-7.4-10zM984.9 657.7l5.8-11.8l13.7-1l7.8 10.6l-0.9 2.1l-5.5 11l-12.8 1l-7.3-10zM987.3 683.9l5.8-11.7l13.7-1.1l7.8 10.7l-0.9 2l-5.4 11l-12.8 1l-7.4-10zM989.8 710.1l5.8-11.7l13.6-1l7.9 10.6l-1 2.1l-5.4 10.9l-12.8 1l-7.4-10zM992.2 736.3l5.8-11.7l13.6-1l7.9 10.6l-1 2.1l-5.4 10.9l-12.8 1l-7.3-10zM994.6 762.5l5.8-11.7l13.7-1.1l7.8 10.7l-0.9 2l-5.5 11l-12.7 1l-7.4-10z"/><path class="f" fill="#687038" d="M948.7 262l7.4 10.2l1.5-2l-5.4-7.3zM951.2 288.7l7.4 10.2l1.5-1.9l-5.4-7.3zM953.7 315.4l7.4 10.2l1.5-1.9l-5.4-7.3zM956.1 342.1l7.5 10.1l1.4-1.9l-5.3-7.3zM958.6 368.7l7.4 10.1l1.5-1.9l-5.3-7.2zM961.1 395.3l7.4 10.1l1.5-1.9l-5.4-7.2zM963.6 421.9l7.4 10.1l1.4-1.9l-5.3-7.3zM966 448.4l7.4 10.1l1.5-1.9l-5.3-7.2zM968.5 474.9l7.4 10.1l1.5-1.9l-5.4-7.2zM970.9 501.4l7.5 10l1.4-1.8l-5.3-7.3zM973.4 527.8l7.4 10.1l1.5-1.9l-5.4-7.2zM975.9 554.2l7.4 10.1l1.4-1.9l-5.3-7.2zM978.3 580.6l7.4 10l1.5-1.8l-5.3-7.2zM980.8 607l7.4 10l1.4-1.8l-5.3-7.2zM983.2 633.3l7.4 10l1.5-1.8l-5.4-7.2zM985.7 659.6l7.3 10l1.5-1.8l-5.3-7.2zM988.1 685.8l7.4 10l1.4-1.8l-5.3-7.2zM990.5 712.1l7.4 9.9l1.5-1.8l-5.3-7.1zM993 738.2l7.3 10l1.5-1.8l-5.3-7.1zM995.4 764.4l7.4 10l1.4-1.8l-5.3-7.2z"/><path class="f" fill="#566030" d="M956.1 272.2l12.9-1l-2.1-1.7l-9.3 0.7zM958.6 298.9l12.9-1l-2.1-1.7l-9.3 0.8zM961.1 325.6l12.9-1l-2.2-1.7l-9.2 0.8zM963.6 352.2l12.9-1l-2.2-1.6l-9.3 0.7zM966 378.8l12.9-1l-2.1-1.6l-9.3 0.7zM968.5 405.4l12.9-1l-2.2-1.6l-9.2 0.7zM971 432l12.8-1l-2.1-1.6l-9.3 0.7zM973.4 458.5l12.9-1l-2.2-1.6l-9.2 0.7zM975.9 485l12.8-1l-2.1-1.6l-9.2 0.7zM978.4 511.4l12.8-1l-2.1-1.5l-9.3 0.7zM980.8 537.9l12.8-1l-2.1-1.6l-9.2 0.7zM983.3 564.3l12.8-1l-2.2-1.6l-9.2 0.7zM985.7 590.6l12.8-1l-2.1-1.5l-9.2 0.7zM988.2 617l12.8-1l-2.2-1.6l-9.2 0.8zM990.6 643.3l12.8-1l-2.1-1.5l-9.2 0.7zM993 669.6l12.8-1l-2.1-1.6l-9.2 0.8zM995.5 695.8l12.8-1l-2.2-1.5l-9.2 0.7zM997.9 722l12.8-1l-2.1-1.5l-9.2 0.7zM1000.3 748.2l12.8-1l-2.1-1.5l-9.2 0.7zM1002.8 774.4l12.7-1l-2.1-1.5l-9.2 0.7z"/><path class="f" fill="#687038" d="M969 271.2l5.5-11.2l-3.7 1.5l-3.9 8zM971.5 297.9l5.5-11.2l-3.7 1.5l-3.9 8zM974 324.6l5.5-11.2l-3.7 1.5l-4 8zM976.5 351.2l5.4-11.1l-3.7 1.5l-3.9 8zM978.9 377.8l5.5-11.1l-3.7 1.5l-3.9 8zM981.4 404.4l5.4-11.1l-3.7 1.5l-3.9 8zM983.8 431l5.5-11.1l-3.7 1.5l-3.9 8zM986.3 457.5l5.4-11.1l-3.6 1.5l-4 8zM988.7 484l5.5-11.1l-3.7 1.5l-3.9 8zM991.2 510.4l5.4-11l-3.6 1.5l-3.9 8zM993.6 536.9l5.5-11.1l-3.7 1.6l-3.9 7.9zM996.1 563.3l5.4-11.1l-3.6 1.6l-4 7.9zM998.5 589.6l5.5-11l-3.7 1.6l-3.9 7.9zM1001 616l5.4-11l-3.7 1.5l-3.9 7.9zM1003.4 642.3l5.4-11l-3.6 1.5l-3.9 8zM1005.8 668.6l5.5-11l-3.7 1.5l-3.9 7.9zM1008.3 694.8l5.4-11l-3.7 1.6l-3.9 7.9zM1010.7 721l5.4-10.9l-3.6 1.5l-3.9 7.9zM1013.1 747.2l5.4-10.9l-3.6 1.5l-3.9 7.9zM1015.5 773.4l5.5-11l-3.7 1.6l-3.9 7.9z"/><path class="f" fill="#bfcab2" d="M975.5 258.1l-8-10.9l-0.4 2.6l7.4 10.2zM974.5 260l-7.4-10.2l-1.6 4.4l5.3 7.3zM978 284.8l-8-10.9l-0.5 2.6l7.5 10.2zM977 286.7l-7.5-10.2l-1.6 4.4l5.4 7.3zM980.4 311.5l-7.9-10.9l-0.5 2.6l7.5 10.2zM979.5 313.4l-7.5-10.2l-1.6 4.4l5.4 7.3zM982.9 338.1l-7.9-10.8l-0.5 2.6l7.4 10.2zM981.9 340.1l-7.4-10.2l-1.6 4.4l5.3 7.3zM985.3 364.7l-7.9-10.8l-0.5 2.7l7.5 10.1zM984.4 366.7l-7.5-10.1l-1.6 4.3l5.4 7.3zM987.8 391.3l-7.9-10.8l-0.5 2.7l7.4 10.1zM986.8 393.3l-7.4-10.1l-1.6 4.3l5.3 7.3zM990.3 417.9l-8-10.8l-0.4 2.6l7.4 10.2zM989.3 419.9l-7.4-10.2l-1.6 4.4l5.3 7.3zM992.7 444.4l-7.9-10.8l-0.5 2.7l7.4 10.1zM991.7 446.4l-7.4-10.1l-1.6 4.4l5.4 7.2zM995.2 470.9l-7.9-10.7l-0.5 2.6l7.4 10.1zM994.2 472.9l-7.4-10.1l-1.6 4.4l5.3 7.2zM997.6 497.4l-7.9-10.8l-0.5 2.7l7.4 10.1zM996.6 499.4l-7.4-10.1l-1.6 4.4l5.4 7.2zM1000.1 523.8l-7.9-10.7l-0.5 2.7l7.4 10zM999.1 525.8l-7.4-10l-1.6 4.3l5.3 7.3zM1002.5 550.2l-7.9-10.7l-0.5 2.7l7.4 10zM1001.5 552.2l-7.4-10l-1.6 4.3l5.4 7.3zM1004.9 576.6l-7.9-10.7l-0.4 2.7l7.4 10zM1004 578.6l-7.4-10l-1.6 4.3l5.3 7.3zM1007.4 602.9l-7.9-10.7l-0.5 2.7l7.4 10.1zM1006.4 605l-7.4-10.1l-1.6 4.4l5.3 7.2zM1009.8 629.3l-7.9-10.7l-0.4 2.7l7.3 10zM1008.8 631.3l-7.3-10l-1.6 4.3l5.3 7.2zM1012.2 655.5l-7.8-10.6l-0.5 2.7l7.4 10zM1011.3 657.6l-7.4-10l-1.6 4.3l5.3 7.2zM1014.6 681.8l-7.8-10.7l-0.5 2.7l7.4 10zM1013.7 683.8l-7.4-10l-1.6 4.4l5.3 7.2zM1017.1 708l-7.9-10.6l-0.4 2.7l7.3 10zM1016.1 710.1l-7.3-10l-1.6 4.4l5.3 7.1zM1019.5 734.2l-7.9-10.6l-0.4 2.7l7.3 10zM1018.5 736.3l-7.3-10l-1.6 4.4l5.3 7.1zM1021.9 760.4l-7.8-10.7l-0.5 2.8l7.4 9.9zM1021 762.4l-7.4-9.9l-1.6 4.4l5.3 7.1z"/><path class="f" fill="#edd2c2" d="M967.5 247.2l-13.7 1.1l0.3 2.5l13-1zM967.1 249.8l-13 1l2.1 4.1l9.3-0.7zM970 273.9l-13.8 1.1l0.4 2.6l12.9-1.1zM969.5 276.5l-12.9 1.1l2 4l9.3-0.7zM972.5 300.6l-13.8 1.1l0.4 2.6l12.9-1.1zM972 303.2l-12.9 1.1l2 4l9.3-0.7zM975 327.3l-13.8 1.1l0.4 2.5l12.9-1zM974.5 329.9l-12.9 1l2 4.1l9.3-0.7zM977.4 353.9l-13.7 1.1l0.4 2.6l12.8-1zM976.9 356.6l-12.8 1l2 4l9.2-0.7zM979.9 380.5l-13.8 1.1l0.4 2.6l12.9-1zM979.4 383.2l-12.9 1l2 4l9.3-0.7zM982.3 407.1l-13.7 1.1l0.4 2.6l12.9-1.1zM981.9 409.7l-12.9 1.1l2 4l9.3-0.7zM984.8 433.6l-13.7 1.1l0.4 2.6l12.8-1zM984.3 436.3l-12.8 1l2 4.1l9.2-0.7zM987.3 460.2l-13.8 1l0.4 2.6l12.9-1zM986.8 462.8l-12.9 1l2 4.1l9.3-0.7zM989.7 486.6l-13.7 1.1l0.4 2.6l12.8-1zM989.2 489.3l-12.8 1l2 4.1l9.2-0.7zM992.2 513.1l-13.7 1.1l0.3 2.6l12.9-1zM991.7 515.8l-12.9 1l2.1 4l9.2-0.7zM994.6 539.5l-13.7 1.1l0.4 2.6l12.8-1zM994.1 542.2l-12.8 1l2 4.1l9.2-0.8zM997 565.9l-13.6 1.1l0.4 2.6l12.8-1zM996.6 568.6l-12.8 1l2 4.1l9.2-0.8zM999.5 592.2l-13.7 1.1l0.4 2.6l12.8-1zM999 594.9l-12.8 1l2 4.1l9.2-0.7zM1001.9 618.6l-13.7 1l0.4 2.7l12.9-1zM1001.5 621.3l-12.9 1l2.1 4.1l9.2-0.8zM1004.4 644.9l-13.7 1l0.4 2.7l12.8-1zM1003.9 647.6l-12.8 1l2 4.1l9.2-0.8zM1006.8 671.1l-13.7 1.1l0.4 2.6l12.8-1zM1006.3 673.8l-12.8 1l2 4.1l9.2-0.7zM1009.2 697.4l-13.6 1l0.4 2.7l12.8-1zM1008.8 700.1l-12.8 1l2 4.1l9.2-0.7zM1011.6 723.6l-13.6 1l0.4 2.7l12.8-1zM1011.2 726.3l-12.8 1l2 4.1l9.2-0.7zM1014.1 749.7l-13.7 1.1l0.4 2.7l12.8-1zM1013.6 752.5l-12.8 1l2 4.1l9.2-0.7z"/><path class="f" fill="#bfcab2" d="M954.1 250.8l-5.4 11.2l3.5 0.9l4-8zM956.6 277.6l-5.4 11.1l3.5 1l3.9-8.1zM959.1 304.3l-5.4 11.1l3.5 1l3.9-8.1zM961.6 330.9l-5.5 11.2l3.6 0.9l3.9-8zM964.1 357.6l-5.5 11.1l3.6 1l3.9-8.1zM966.5 384.2l-5.4 11.1l3.5 1l3.9-8.1zM969 410.8l-5.4 11.1l3.5 0.9l3.9-8zM971.5 437.3l-5.5 11.1l3.6 1l3.9-8zM973.9 463.8l-5.4 11.1l3.5 1l3.9-8zM976.4 490.3l-5.5 11.1l3.6 0.9l3.9-7.9zM978.8 516.8l-5.4 11l3.5 1l4-8zM981.3 543.2l-5.4 11l3.5 1l3.9-7.9zM983.8 569.6l-5.5 11l3.6 1l3.9-7.9zM986.2 595.9l-5.4 11.1l3.5 1l3.9-8zM988.6 622.3l-5.4 11l3.5 1l4-7.9zM991.1 648.6l-5.4 11l3.5 1l3.9-7.9zM993.5 674.8l-5.4 11l3.5 1l3.9-7.9zM996 701.1l-5.5 11l3.6 1l3.9-7.9zM998.4 727.3l-5.4 10.9l3.5 1.1l3.9-7.9zM1000.8 753.5l-5.4 10.9l3.5 1l3.9-7.8z"/><path class="g" fill="#58a87c" d="M952.2 262.9l5.4 7.3l9.3-0.7l3.9-8l-5.3-7.3l-9.3 0.7zM954.7 289.7l5.4 7.3l9.3-0.8l3.9-8l-5.4-7.3l-9.3 0.7zM957.2 316.4l5.4 7.3l9.2-0.8l4-8l-5.4-7.3l-9.3 0.7zM959.7 343l5.3 7.3l9.3-0.7l3.9-8l-5.3-7.3l-9.3 0.7zM962.2 369.7l5.3 7.2l9.3-0.7l3.9-8l-5.4-7.3l-9.2 0.7zM964.6 396.3l5.4 7.2l9.2-0.7l3.9-8l-5.3-7.3l-9.3 0.7zM967.1 422.8l5.3 7.3l9.3-0.7l3.9-8l-5.3-7.3l-9.3 0.7zM969.6 449.4l5.3 7.2l9.2-0.7l4-8l-5.4-7.2l-9.2 0.7zM972 475.9l5.4 7.2l9.2-0.7l3.9-8l-5.3-7.2l-9.3 0.7zM974.5 502.3l5.3 7.3l9.3-0.7l3.9-8l-5.4-7.2l-9.2 0.7zM976.9 528.8l5.4 7.2l9.2-0.7l3.9-7.9l-5.3-7.3l-9.2 0.7zM979.4 555.2l5.3 7.2l9.2-0.7l4-7.9l-5.4-7.3l-9.2 0.8zM981.9 581.6l5.3 7.2l9.2-0.7l3.9-7.9l-5.3-7.3l-9.2 0.8zM984.3 608l5.3 7.2l9.2-0.8l3.9-7.9l-5.3-7.2l-9.2 0.7zM986.7 634.3l5.4 7.2l9.2-0.7l3.9-8l-5.3-7.2l-9.2 0.8zM989.2 660.6l5.3 7.2l9.2-0.8l3.9-7.9l-5.3-7.2l-9.2 0.8zM991.6 686.8l5.3 7.2l9.2-0.7l3.9-7.9l-5.3-7.2l-9.2 0.7zM994.1 713.1l5.3 7.1l9.2-0.7l3.9-7.9l-5.3-7.1l-9.2 0.7zM996.5 739.3l5.3 7.1l9.2-0.7l3.9-7.9l-5.3-7.1l-9.2 0.7zM998.9 765.4l5.3 7.2l9.2-0.7l3.9-7.9l-5.3-7.1l-9.2 0.7z"/>
</g>
<path d="M857 274.8l2-4.4M859.9 274.4l2-4.4M859.6 301.5l2-4.4M862.5 301.1l2-4.4M862.1 328.1l2-4.4M865 327.7l2-4.4M864.6 354.8l2-4.4M867.5 354.4l2-4.4M867.2 381.3l2-4.4M870.1 380.9l2-4.4M869.7 407.9l2-4.4M872.6 407.5l2-4.4M872.2 434.4l2-4.4M875.1 434l2-4.4M874.7 460.9l2-4.4M877.6 460.5l2-4.4M877.2 487.4l2-4.4M880.1 487l2-4.4M879.8 513.8l2-4.4M882.7 513.4l2-4.4M882.3 540.2l2-4.4M885.2 539.8l2-4.4M884.8 566.6l2-4.4M887.7 566.2l2-4.4M887.3 593l2-4.4M890.2 592.6l2-4.4M889.8 619.3l2-4.4M892.7 618.9l2-4.4M892.3 645.6l2-4.4M895.2 645.2l2-4.4M894.8 671.8l2-4.4M897.7 671.4l2-4.4M897.3 698l2-4.4M900.2 697.6l2-4.4M899.8 724.2l2-4.4M902.7 723.8l2-4.4M902.3 750.4l2-4.4M905.2 750l2-4.4M904.8 776.5l2-4.4M907.7 776.1l2-4.4" stroke="#2b2405" stroke-width="1.2" fill="none"/>
<g font-family="Liberation Serif, serif" font-style="italic" font-weight="bold" font-size="30"><text x="637" y="434" textLength="196" lengthAdjust="spacingAndGlyphs" fill="#8a9496" fill-opacity=".1">i3DOne.com</text><text x="636" y="433" textLength="196" lengthAdjust="spacingAndGlyphs" fill="#fff" fill-opacity=".16">i3DOne.com</text></g>
<path d="M1204 174.4l-8.6 4.6l-9.2 4.5l-9.8 4.3l-10.5 4.3l-11 4.2l-11.6 4l-12.1 3.8l-12.5 3.7l-13 3.5l-13.4 3.4l-13.8 3.1l-14 3l-14.4 2.7l-14.6 2.5l-14.9 2.3l-14.9 2.1l-15.1 1.8l-15.2 1.6l-15.2 1.3l-15.2 1.1l-15.1 0.8l-15 0.6l-14.9 0.3l-14.7 0.1l-14.5-0.2l-14.1-0.5l-13.9-0.7l-13.5-1l-13.2-1.2l-12.7-1.5l-12.2-1.7l-11.8-2l-11.2-2.2l-10.6-2.4l-10.1-2.6l-9.4-2.8l-8.8-3.1l-8.2-3.2l-7.4-3.4l-6.8-3.6l-6-3.8l-5.3-3.9l-4.5-4l-3.8-4.2l-3-4.3l-2.2-4.3l-1.4-4.5l-0.7-4.6l0.1-4.6l0.9-4.7l1.7-4.7l2.5-4.8l3.2-4.7l3.9-4.8l4.7-4.7l5.4-4.8l6.2-4.7l6.8-4.6l7.4-4.6l8.2-4.5l8.7-4.4l9.3-4.3l10-4.3l10.4-4.1l11-3.9l11.4-3.9l12-3.7l12.3-3.5l12.7-3.3l13.1-3.2l13.4-3l13.7-2.8l13.9-2.6l14.2-2.4l14.3-2.2l14.5-2l14.6-1.7l14.6-1.5l14.7-1.3l14.7-1.1l14.6-0.8l14.5-0.6l14.4-0.3l14.2-0.1l14 0.1l13.8 0.4l13.5 0.7l13.2 0.8l12.9 1.1l12.5 1.4l12.1 1.5l11.6 1.9l11.2 2l10.6 2.2l10.1 2.5l9.6 2.7l9 2.8l8.3 3.1l7.7 3.2l7.1 3.5l6.4 3.6l5.6 3.7l5 3.9l4.2 4.1l3.5 4.1l2.7 4.3l2 4.4l1.2 4.5l0.4 4.6l-0.4 4.7l-1.2 4.7l-1.9 4.7l-2.7 4.8l-3.5 4.8l-4.3 4.8l-5 4.8l-5.8 4.8l-6.5 4.8l-7.2 4.7z" fill="#6cd4fc" stroke="#0b2038" stroke-width="1.4"/>
<path d="M1152.7 43.5l3 0.2l12.2 1l11.8 1.2l11.7 1.3l11.4 1.5l11.1 1.6l10.8 1.8l10.6 1.9l10.2 2l9.9 2.2l9.6 2.3l9.2 2.5l8.9 2.5l8.5 2.7l8.1 2.9l7.8 2.9l7.3 3.1l7 3.1l6.5 3.3l6.1 3.4l5.6 3.5l5.3 3.6l4.7 3.7l4.4 3.7l3.8 3.9l3.4 4l2.9 4l2.5 4.1l1.9 4.1l1.5 4.3l1 4.3l0.5 4.3l-0.1 4.4l-0.4 4.4l-1 4.5l-1.5 4.5l-2 4.5l-2.5 4.6l-2.9 4.6l-3.5 4.5l-3.9 4.6l-4.5 4.6l-4.9 4.6l-5.3 4.5l-5.9 4.6l-6.3 4.5l-6.7 4.5l-7.2 4.4l-7.7 4.4l-8.1 4.4l-8.5 4.3l-8.9 4.3l-9.3 4.2l-9.7 4.1l-10 4l-10.5 4l-10.7 3.9l-11.2 3.7l-11.4 3.7l-11.8 3.6l-12 3.5l-12.4 3.4l-12.6 3.2l-12.8 3.2l-13.1 3l-13.3 2.9l-13.5 2.8l-13.7 2.6l-13.8 2.5l-14 2.3l-14.1 2.2l-14.2 2l-14.3 1.9l-14.4 1.8l-14.5 1.6l-14.4 1.4l-14.5 1.3l-14.5 1.1l-14.4 0.9l-14.4 0.8l-14.4 0.6l-14.3 0.5l-14.1 0.3l-14.1 0.1l-13.9-0.1l-13.8-0.2l-13.6-0.3l-13.4-0.6l-13.1-0.7l-13-0.9l-12.7-1l-12.5-1.2l-12.2-1.4l-11.9-1.5l-11.6-1.6l-11.3-1.9l-11-1.9l-10.6-2.1l-10.3-2.3l-9.9-2.4l-9.5-2.5l-9.1-2.7l-8.7-2.8l-8.3-2.9l-7.8-3.1l-7.5-3.1l-7-3.3l-6.5-3.4l-6.1-3.5l-5.6-3.6l-5.2-3.7l-4.6-3.8l-4.2-3.8l-3.7-4l-3.3-4l-2.7-4.1l-2.3-4.2l-1.7-4.2l-1.3-4.2l-0.7-4.4l-0.3-4.3l0.2-4.4l0.7-4.5l1.2-4.4l1.7-4.5l2.2-4.5l2.6-4.5l3.2-4.5l3.6-4.6l4-4.5l4.5-4.5l5-4.5l5.4-4.4l5.9-4.5l6.3-4.4l6.7-4.3l7.1-4.4l7.5-4.3l7.9-4.2l8.3-4.2l8.7-4.1l9-4l9.4-4l9.7-3.9l10.1-3.8l10.3-3.7l10.7-3.7l10.9-3.5l11.3-3.5l11.5-3.4l11.7-3.2l12-3.2l12.2-3l12.4-3l12.6-2.8l12.8-2.7l13-2.5l13.1-2.5l13.2-2.3l13.4-2.2l13.4-2l13.6-1.9l13.6-1.8l13.7-1.7l13.7-1.5l13.8-1.3l13.7-1.2l13.8-1.1l13.7-0.9l13.8-0.8l13.6-0.6l13.6-0.5l13.5-0.3l13.5-0.1l13.3-0.1l13.1 0.2l3.3 0" fill="none" stroke="#1a1a1a" stroke-width="1.1"/>
<g>
<polygon points="957.9,145.6 972.3,144.4 966.2,72.6 951.9,73.8" fill="url(#sh)"/>
<ellipse cx="965.1" cy="145.0" rx="7.2" ry="2.6" fill="#0a0acc" transform="rotate(-4.8 965.1 145.0)"/>
<polygon points="944.6,74.5 955.7,33.4 973.5,72.0" fill="url(#cn)"/>
<ellipse cx="959.1" cy="73.2" rx="14.5" ry="3.4" fill="#0c0cd8" transform="rotate(-4.8 959.1 73.2)"/>
</g>
<text x="1111" y="49" font-family="Liberation Sans, sans-serif" font-size="17.5" fill="#555">360</text>
<path d="M811.500 294.600L846.7 265.8" stroke="#111" stroke-width="1.2"/>
<g transform="translate(975.7 79.5)"><rect x="-5.500" y="-5.500" width="11" height="11" fill="#fdfdfd" stroke="#8c8c8c"/><path d="M-3-.8l2.400 3.600l4.200-7" fill="none" stroke="#4a4c58" stroke-width="1.400"/></g>
<g transform="translate(940.3 82.9)"><rect x="-5.500" y="-5.500" width="11" height="11" fill="#fdfdfd" stroke="#8c8c8c"/><path d="M-3-.8l2.400 3.600l4.200-7" fill="none" stroke="#4a4c58" stroke-width="1.400"/></g>
<g transform="translate(1011 77.5)"><rect x="-5.500" y="-5.500" width="11" height="11" fill="#fdfdfd" stroke="#8c8c8c"/><path d="M-3-.8l2.400 3.600l4.200-7" fill="none" stroke="#4a4c58" stroke-width="1.400"/></g>
<g transform="translate(905.3 87.5)"><rect x="-5.500" y="-5.500" width="11" height="11" fill="#fdfdfd" stroke="#8c8c8c"/><path d="M-3-.8l2.400 3.600l4.200-7" fill="none" stroke="#4a4c58" stroke-width="1.400"/></g>
<g transform="translate(1045.6 76.9)"><rect x="-5.500" y="-5.500" width="11" height="11" fill="#fdfdfd" stroke="#8c8c8c"/><path d="M-3-.8l2.400 3.600l4.200-7" fill="none" stroke="#4a4c58" stroke-width="1.400"/></g>
<g transform="translate(871.3 93.5)"><rect x="-5.500" y="-5.500" width="11" height="11" fill="#fdfdfd" stroke="#8c8c8c"/><path d="M-3-.8l2.400 3.600l4.200-7" fill="none" stroke="#4a4c58" stroke-width="1.400"/></g>
<g transform="translate(1079 77.7)"><rect x="-5.500" y="-5.500" width="11" height="11" fill="#fdfdfd" stroke="#8c8c8c"/><path d="M-3-.8l2.400 3.600l4.200-7" fill="none" stroke="#4a4c58" stroke-width="1.400"/></g>
<g transform="translate(838.6 100.6)"><rect x="-5.500" y="-5.500" width="11" height="11" fill="#fdfdfd" stroke="#8c8c8c"/><path d="M-3-.8l2.400 3.600l4.200-7" fill="none" stroke="#4a4c58" stroke-width="1.400"/></g>
<g transform="translate(1110.8 79.9)"><rect x="-5.500" y="-5.500" width="11" height="11" fill="#fdfdfd" stroke="#8c8c8c"/><path d="M-3-.8l2.400 3.600l4.200-7" fill="none" stroke="#4a4c58" stroke-width="1.400"/></g>
<g transform="translate(808 108.7)"><rect x="-5.500" y="-5.500" width="11" height="11" fill="#fdfdfd" stroke="#8c8c8c"/><path d="M-3-.8l2.400 3.600l4.200-7" fill="none" stroke="#4a4c58" stroke-width="1.400"/></g>
<g transform="translate(1140.4 83.5)"><rect x="-5.500" y="-5.500" width="11" height="11" fill="#fdfdfd" stroke="#8c8c8c"/><path d="M-3-.8l2.400 3.600l4.200-7" fill="none" stroke="#4a4c58" stroke-width="1.400"/></g>
<g transform="translate(779.7 117.8)"><rect x="-5.500" y="-5.500" width="11" height="11" fill="#fdfdfd" stroke="#8c8c8c"/><path d="M-3-.8l2.400 3.600l4.200-7" fill="none" stroke="#4a4c58" stroke-width="1.400"/></g>
<g transform="translate(1167.4 88.4)"><rect x="-5.500" y="-5.500" width="11" height="11" fill="#fdfdfd" stroke="#8c8c8c"/><path d="M-3-.8l2.400 3.600l4.200-7" fill="none" stroke="#4a4c58" stroke-width="1.400"/></g>
<g transform="translate(754.2 127.7)"><rect x="-5.500" y="-5.500" width="11" height="11" fill="#fdfdfd" stroke="#8c8c8c"/><path d="M-3-.8l2.400 3.600l4.200-7" fill="none" stroke="#4a4c58" stroke-width="1.400"/></g>
<g transform="translate(1191.3 94.6)"><rect x="-5.500" y="-5.500" width="11" height="11" fill="#fdfdfd" stroke="#8c8c8c"/><path d="M-3-.8l2.400 3.600l4.200-7" fill="none" stroke="#4a4c58" stroke-width="1.400"/></g>
<g transform="translate(732 138.2)"><rect x="-5.500" y="-5.500" width="11" height="11" fill="#fdfdfd" stroke="#8c8c8c"/><path d="M-3-.8l2.400 3.600l4.200-7" fill="none" stroke="#4a4c58" stroke-width="1.400"/></g>
<g transform="translate(1211.9 101.9)"><rect x="-5.500" y="-5.500" width="11" height="11" fill="#fdfdfd" stroke="#8c8c8c"/><path d="M-3-.8l2.400 3.600l4.200-7" fill="none" stroke="#4a4c58" stroke-width="1.400"/></g>
<g transform="translate(713.4 149.3)"><rect x="-5.500" y="-5.500" width="11" height="11" fill="#fdfdfd" stroke="#8c8c8c"/><path d="M-3-.8l2.400 3.600l4.200-7" fill="none" stroke="#4a4c58" stroke-width="1.400"/></g>
<g transform="translate(1228.7 110.3)"><rect x="-5.500" y="-5.500" width="11" height="11" fill="#fdfdfd" stroke="#8c8c8c"/><path d="M-3-.8l2.400 3.600l4.200-7" fill="none" stroke="#4a4c58" stroke-width="1.400"/></g>
<g transform="translate(698.7 160.6)"><rect x="-5.500" y="-5.500" width="11" height="11" fill="#fdfdfd" stroke="#8c8c8c"/><path d="M-3-.8l2.400 3.600l4.200-7" fill="none" stroke="#4a4c58" stroke-width="1.400"/></g>
<g transform="translate(1241.4 119.6)"><rect x="-5.500" y="-5.500" width="11" height="11" fill="#fdfdfd" stroke="#8c8c8c"/><path d="M-3-.8l2.400 3.600l4.200-7" fill="none" stroke="#4a4c58" stroke-width="1.400"/></g>
<g transform="translate(688.2 172.2)"><rect x="-5.500" y="-5.500" width="11" height="11" fill="#fdfdfd" stroke="#8c8c8c"/><path d="M-3-.8l2.400 3.600l4.200-7" fill="none" stroke="#4a4c58" stroke-width="1.400"/></g>
<g transform="translate(1249.9 129.7)"><rect x="-5.500" y="-5.500" width="11" height="11" fill="#fdfdfd" stroke="#8c8c8c"/><path d="M-3-.8l2.400 3.600l4.200-7" fill="none" stroke="#4a4c58" stroke-width="1.400"/></g>
<g transform="translate(682 183.7)"><rect x="-5.500" y="-5.500" width="11" height="11" fill="#fdfdfd" stroke="#8c8c8c"/><path d="M-3-.8l2.400 3.600l4.200-7" fill="none" stroke="#4a4c58" stroke-width="1.400"/></g>
<g transform="translate(1254 140.5)"><rect x="-5.500" y="-5.500" width="11" height="11" fill="#fdfdfd" stroke="#8c8c8c"/><path d="M-3-.8l2.400 3.600l4.200-7" fill="none" stroke="#4a4c58" stroke-width="1.400"/></g>
<g transform="translate(680.3 195)"><rect x="-5.500" y="-5.500" width="11" height="11" fill="#fdfdfd" stroke="#8c8c8c"/><path d="M-3-.8l2.400 3.600l4.200-7" fill="none" stroke="#4a4c58" stroke-width="1.400"/></g>
<g transform="translate(1253.5 151.7)"><rect x="-5.500" y="-5.500" width="11" height="11" fill="#fdfdfd" stroke="#8c8c8c"/><path d="M-3-.8l2.400 3.600l4.200-7" fill="none" stroke="#4a4c58" stroke-width="1.400"/></g>
<g transform="translate(683.1 206)"><rect x="-5.500" y="-5.500" width="11" height="11" fill="#fdfdfd" stroke="#8c8c8c"/><path d="M-3-.8l2.400 3.600l4.200-7" fill="none" stroke="#4a4c58" stroke-width="1.400"/></g>
<g transform="translate(1248.5 163.3)"><rect x="-5.500" y="-5.500" width="11" height="11" fill="#fdfdfd" stroke="#8c8c8c"/><path d="M-3-.8l2.400 3.600l4.200-7" fill="none" stroke="#4a4c58" stroke-width="1.400"/></g>
<g transform="translate(690.4 216.3)"><rect x="-5.500" y="-5.500" width="11" height="11" fill="#fdfdfd" stroke="#8c8c8c"/><path d="M-3-.8l2.400 3.600l4.200-7" fill="none" stroke="#4a4c58" stroke-width="1.400"/></g>
<g transform="translate(1239.1 175)"><rect x="-5.500" y="-5.500" width="11" height="11" fill="#fdfdfd" stroke="#8c8c8c"/><path d="M-3-.8l2.400 3.600l4.200-7" fill="none" stroke="#4a4c58" stroke-width="1.400"/></g>
<g transform="translate(702.1 226)"><rect x="-5.500" y="-5.500" width="11" height="11" fill="#fdfdfd" stroke="#8c8c8c"/><path d="M-3-.8l2.400 3.600l4.200-7" fill="none" stroke="#4a4c58" stroke-width="1.400"/></g>
<g transform="translate(1225.2 186.6)"><rect x="-5.500" y="-5.500" width="11" height="11" fill="#fdfdfd" stroke="#8c8c8c"/><path d="M-3-.8l2.400 3.600l4.200-7" fill="none" stroke="#4a4c58" stroke-width="1.400"/></g>
<g transform="translate(718.1 234.8)"><rect x="-5.500" y="-5.500" width="11" height="11" fill="#fdfdfd" stroke="#8c8c8c"/><path d="M-3-.8l2.400 3.600l4.200-7" fill="none" stroke="#4a4c58" stroke-width="1.400"/></g>
<g transform="translate(1207.2 197.9)"><rect x="-5.500" y="-5.500" width="11" height="11" fill="#fdfdfd" stroke="#8c8c8c"/><path d="M-3-.8l2.400 3.600l4.200-7" fill="none" stroke="#4a4c58" stroke-width="1.400"/></g>
<g transform="translate(738.2 242.5)"><rect x="-5.500" y="-5.500" width="11" height="11" fill="#fdfdfd" stroke="#8c8c8c"/><path d="M-3-.8l2.400 3.600l4.200-7" fill="none" stroke="#4a4c58" stroke-width="1.400"/></g>
<g transform="translate(1185.3 208.8)"><rect x="-5.500" y="-5.500" width="11" height="11" fill="#fdfdfd" stroke="#8c8c8c"/><path d="M-3-.8l2.400 3.600l4.200-7" fill="none" stroke="#4a4c58" stroke-width="1.400"/></g>
<g transform="translate(761.9 249.1)"><rect x="-5.500" y="-5.500" width="11" height="11" fill="#fdfdfd" stroke="#8c8c8c"/><path d="M-3-.8l2.400 3.600l4.200-7" fill="none" stroke="#4a4c58" stroke-width="1.400"/></g>
<g transform="translate(1159.9 219.1)"><rect x="-5.500" y="-5.500" width="11" height="11" fill="#fdfdfd" stroke="#8c8c8c"/><path d="M-3-.8l2.400 3.600l4.200-7" fill="none" stroke="#4a4c58" stroke-width="1.400"/></g>
<g transform="translate(789.1 254.4)"><rect x="-5.500" y="-5.500" width="11" height="11" fill="#fdfdfd" stroke="#8c8c8c"/><path d="M-3-.8l2.400 3.600l4.200-7" fill="none" stroke="#4a4c58" stroke-width="1.400"/></g>
<g transform="translate(1131.3 228.6)"><rect x="-5.500" y="-5.500" width="11" height="11" fill="#fdfdfd" stroke="#8c8c8c"/><path d="M-3-.8l2.400 3.600l4.200-7" fill="none" stroke="#4a4c58" stroke-width="1.400"/></g>
<g transform="translate(819.1 258.3)"><rect x="-5.500" y="-5.500" width="11" height="11" fill="#fdfdfd" stroke="#8c8c8c"/><path d="M-3-.8l2.400 3.600l4.200-7" fill="none" stroke="#4a4c58" stroke-width="1.400"/></g>
<g transform="translate(1099.9 237.1)"><rect x="-5.500" y="-5.500" width="11" height="11" fill="#fdfdfd" stroke="#8c8c8c"/><path d="M-3-.8l2.400 3.600l4.200-7" fill="none" stroke="#4a4c58" stroke-width="1.400"/></g>
<g transform="translate(851.7 260.8)"><rect x="-5.500" y="-5.500" width="11" height="11" fill="#fdfdfd" stroke="#8c8c8c"/><path d="M-3-.8l2.400 3.600l4.200-7" fill="none" stroke="#4a4c58" stroke-width="1.400"/></g>
<g transform="translate(1066.4 244.6)"><rect x="-5.500" y="-5.500" width="11" height="11" fill="#fdfdfd" stroke="#8c8c8c"/><path d="M-3-.8l2.400 3.600l4.200-7" fill="none" stroke="#4a4c58" stroke-width="1.400"/></g>
<g transform="translate(886.1 261.8)"><rect x="-5.500" y="-5.500" width="11" height="11" fill="#fdfdfd" stroke="#8c8c8c"/><path d="M-3-.8l2.400 3.600l4.200-7" fill="none" stroke="#4a4c58" stroke-width="1.400"/></g>
<g transform="translate(1031.3 250.8)"><rect x="-5.500" y="-5.500" width="11" height="11" fill="#fdfdfd" stroke="#8c8c8c"/><path d="M-3-.8l2.400 3.600l4.200-7" fill="none" stroke="#4a4c58" stroke-width="1.400"/></g>
<g transform="translate(921.9 261.2)"><rect x="-5.500" y="-5.500" width="11" height="11" fill="#fdfdfd" stroke="#8c8c8c"/><path d="M-3-.8l2.400 3.600l4.200-7" fill="none" stroke="#4a4c58" stroke-width="1.400"/></g>
<g transform="translate(995.1 255.7)"><rect x="-5.500" y="-5.500" width="11" height="11" fill="#fdfdfd" stroke="#8c8c8c"/><path d="M-3-.8l2.400 3.600l4.200-7" fill="none" stroke="#4a4c58" stroke-width="1.400"/></g>
<g transform="translate(958.4 259.2)"><rect x="-5.500" y="-5.500" width="11" height="11" fill="#fdfdfd" stroke="#8c8c8c"/><path d="M-3-.8l2.400 3.600l4.200-7" fill="none" stroke="#4a4c58" stroke-width="1.400"/></g>
<path d="M812.300 298.200L831 295.200v13.600L812.300 303.700z" fill="#ee4c36"/><ellipse cx="831" cy="302" rx="2.400" ry="6.800" fill="#b22c1c"/>
<path d="M799.500 300l4.500-8l8 1.500l1.500 7.500l-3.500 7l-8-1z" fill="#c61cf0"/><path d="M799.500 300l4.500-8l8 1.500l1.500 7.500z" fill="#9a10f8"/>
<g><rect x="880.500" y="204.500" width="59" height="19" fill="#fff" stroke="#9a9a9a"/>
<text x="885" y="219" font-family="Liberation Sans, sans-serif" font-size="12" fill="#111">50</text>
<path d="M928.500 211.500l2.500-3l2.500 3zM928.500 216.500l2.500 3l2.500-3z" fill="#444"/></g>
</svg>
<div id="fade" style="position:absolute;left:48px;top:792px;width:212px;height:55px;background:linear-gradient(rgba(240,240,240,0),rgba(236,236,236,.75))"></div>
<svg style="position:absolute;left:90px;top:815px" width="150" height="32" viewBox="90 815 150 32">
<circle cx="164" cy="896" r="69" fill="#1d2127" stroke="#e4eef4" stroke-width="5"/><circle cx="164" cy="896" r="71.500" fill="none" stroke="#aebfcb" stroke-width="1"/>
<path d="M128 836v11M146 832v15M164 830v17M182 832v15M200 836v11M118 844q46-8 92 0" stroke="#596069" stroke-width=".8" fill="none"/>
<ellipse cx="163" cy="849" rx="8" ry="4" fill="#e8e8e8"/>
</svg>
<div id="topbar"><div id="tab"></div>
<div id="brand">3DOne</div>
<svg style="position:absolute;left:0;top:0" width="420" height="20"><path d="M10 0l7 5l3-5zM17 0l8.500 12.500l10.500-12.500z" fill="#f4f6fa"/><path d="M10 0l7 5l2-3l-1-2z" fill="#a9b8d0"/>
<path d="M305 -6h23v9h-23z" fill="none" stroke="#d8d8d8" stroke-width="1.6"/><path d="M360 2l7-4M398 2l-7-4" stroke="#ccc" stroke-width="1.5"/></svg>
</div>
<div id="side">
<div class="sep" style="top:52px"></div><div class="sep" style="top:108px"></div><div class="sep" style="top:164px"></div><div class="sep" style="top:220px"></div><div class="sep" style="top:276px"></div><div class="sep" style="top:332px"></div><div class="sep" style="top:388px"></div><div class="sep" style="top:444px"></div><div class="sep" style="top:500px"></div>
<svg width="0" height="0" style="position:absolute"><defs><radialGradient id="sg" cx=".4" cy=".3" r=".75"><stop offset="0" stop-color="#8cc0f4"/><stop offset=".5" stop-color="#3c84d8"/><stop offset="1" stop-color="#1f5cb0"/></radialGradient></defs></svg><svg class="ic" style="top:11px" viewBox="0 0 32 32"><ellipse cx="16" cy="27.500" rx="9" ry="2" fill="#8a8f96" opacity=".55"/><circle cx="9.500" cy="19" r="6" fill="#2f72c8"/><path d="M10 10v12h10v-12z" fill="#2f72c8"/><ellipse cx="15" cy="10" rx="5" ry="1.800" fill="#e4eefc"/><path d="M21 8l6.500 15h-13z" fill="#2f72c8"/><path d="M21 9l-4.500 14" stroke="#d8ecff" stroke-width="1.200"/></svg>
<svg class="ic" style="top:66px" viewBox="0 0 32 32"><ellipse cx="16" cy="27.500" rx="9" ry="2" fill="#8a8f96" opacity=".55"/><ellipse cx="12" cy="23" rx="7" ry="3.600" fill="#e8eef6" stroke="#1f5aa8" stroke-width="1.300"/><path d="M12.500 22l1-5l9.500-11.500l3.500 3l-9.500 11.500z" fill="#2f72c8"/><path d="M22 6.500l1.500-1.500l3.500 3l-1.300 1.600z" fill="#6aa6ea"/></svg>
<svg class="ic" style="top:122px" viewBox="0 0 32 32"><ellipse cx="16" cy="27.500" rx="9" ry="2" fill="#8a8f96" opacity=".55"/><path d="M6.500 6.500h19v13q0 5-7 6h-12z" fill="#e9eef5" stroke="#2f72c8" stroke-width="2"/><path d="M25.500 19.500q-5 0-6 6" fill="none" stroke="#9ab4d4" stroke-width="1.200"/></svg>
<svg class="ic" style="top:178px" viewBox="0 0 32 32"><ellipse cx="16" cy="27.500" rx="9" ry="2" fill="#8a8f96" opacity=".55"/><path d="M5 20l11-9l6 5l-11 9z" fill="#2f72c8"/><path d="M16 11l3.500-3q3-1.500 5.500 1t.5 5l-3.500 2.500z" fill="#f4f7fb" stroke="#b9c6d6" stroke-width=".6"/><path d="M9 20l7-5.500l2.500 2l-7 5.500z" fill="#f4f7fb"/></svg>
<svg class="ic" style="top:234px" viewBox="0 0 32 32"><ellipse cx="16" cy="27.500" rx="9" ry="2" fill="#8a8f96" opacity=".55"/><path d="M16 5l10 4.500v12l-10 5l-10-5v-12z" fill="#2f72c8"/><path d="M6 9.500l10 4.500l10-4.500M16 14v12.500" stroke="#dfeaf8" stroke-width="1.100" fill="none"/></svg>
<svg class="ic" style="top:289px" viewBox="0 0 32 32"><ellipse cx="16" cy="27.500" rx="9" ry="2" fill="#8a8f96" opacity=".55"/><path d="M16 4l4 4.500h-2.500v4h-3v-4h-2.500zM16 26l4-4.500h-2.500v-4h-3v4h-2.500zM5 15l4.500-4v2.500h4v3h-4v2.500zM27 15l-4.500-4v2.500h-4v3h4v2.500z" fill="#2f72c8"/></svg>
<svg class="ic" style="top:345px" viewBox="0 0 32 32"><ellipse cx="16" cy="27.500" rx="9" ry="2" fill="#8a8f96" opacity=".55"/><path d="M8 24v-9a8 8 0 0 1 16 0v9h-4.500v-9a3.500 3.500 0 0 0-7 0v9z" fill="#2f72c8"/><path d="M8 20h4.500v5h-4.500zM19.500 20h4.500v5h-4.500z" fill="#222"/><path d="M8 22.300h4.500M19.500 22.300h4.500" stroke="#ddd" stroke-width=".8"/></svg>
<svg class="ic" style="top:401px" viewBox="0 0 32 32"><ellipse cx="16" cy="27.500" rx="9" ry="2" fill="#8a8f96" opacity=".55"/><path d="M6 13l10 4l10-4v9l-10 4.500l-10-4.500z" fill="#2f72c8"/><path d="M6 13l10-4l10 4l-10 4z" fill="#f2f6fb" stroke="#6aa6ea" stroke-width=".8"/><path d="M11 13l5-1.800l5 1.800" stroke="#1f5aa8" stroke-width="1" fill="none"/></svg>
<svg class="ic" style="top:457px" viewBox="0 0 32 32"><ellipse cx="16" cy="27.500" rx="9" ry="2" fill="#8a8f96" opacity=".55"/><rect x="5.500" y="16" width="21" height="8" fill="#2f72c8"/><path d="M5.500 8v9M26.500 8v9" stroke="#7c8794" stroke-width="1.200"/><path d="M7 11.500h18M7 11.500l2.500-1.500v3zM25 11.500l-2.500-1.500v3z" stroke="#555" stroke-width=".9" fill="#555"/><rect x="5.500" y="18.500" width="21" height="1.200" fill="#d8e6f8"/></svg>
<svg class="ic" style="top:513px" viewBox="0 0 32 32"><ellipse cx="16" cy="28" rx="9" ry="2" fill="#8a8f96" opacity=".55"/><circle cx="16" cy="16" r="10" fill="url(#sg)"/></svg>

</div>
<div id="panel"><div id="phead">
<svg width="270" height="37" style="position:absolute;left:0;top:0">
<defs><radialGradient id="gi" cx=".45" cy=".35" r=".7"><stop offset="0" stop-color="#fff"/><stop offset=".7" stop-color="#eceef0"/><stop offset="1" stop-color="#b9c4cc"/></radialGradient>
<radialGradient id="gr" cx=".5" cy=".4" r=".6"><stop offset="0" stop-color="#f25a50"/><stop offset=".75" stop-color="#e63a36"/><stop offset="1" stop-color="#b92222"/></radialGradient>
<radialGradient id="gg" cx=".5" cy=".4" r=".6"><stop offset="0" stop-color="#6cc624"/><stop offset=".75" stop-color="#55ae16"/><stop offset="1" stop-color="#357d0c"/></radialGradient></defs>
<circle cx="19.500" cy="19.700" r="12.600" fill="url(#gi)" stroke="#5a5a5a" stroke-width=".6"/>
<text x="19.500" y="28.500" text-anchor="middle" font-family="Liberation Serif,serif" font-weight="bold" font-size="25" fill="#3a9cc4">i</text>
<circle cx="216.200" cy="20" r="13.400" fill="url(#gr)"/><path d="M209.200 13l14 14M223.200 13l-14 14" stroke="#fff" stroke-width="1.800"/>
<circle cx="252.600" cy="19.700" r="13.400" fill="url(#gg)"/><path d="M242.800 20.500l7.400 7l11-16.400" fill="none" stroke="#eeffdc" stroke-width="2.800"/>
</svg></div>
<div class="btn" style="left:87px;top:39px"><svg width="30" height="29"><g fill="#fff" stroke="#8e9aa6" stroke-width=".8"><rect x="8" y="5.500" width="3.600" height="3.600" rx="1"/><rect x="14" y="5.500" width="3.600" height="3.600" rx="1"/><rect x="20" y="5.500" width="3.600" height="3.600" rx="1"/><rect x="8" y="12" width="3.600" height="3.600" rx="1"/><rect x="14" y="12" width="3.600" height="3.600" rx="1"/><rect x="20" y="12" width="3.600" height="3.600" rx="1"/><rect x="8" y="18.500" width="3.600" height="3.600" rx="1"/><rect x="14" y="18.500" width="3.600" height="3.600" rx="1"/><rect x="20" y="18.500" width="3.600" height="3.600" rx="1"/></g></svg></div>
<div class="btn on" style="left:120px;top:39px"><svg width="30" height="29"><g fill="#5a6f8c"><circle cx="17.500" cy="6" r="2"/><circle cx="22.300" cy="9.500" r="1.900"/><circle cx="23.500" cy="15" r="1.900"/><circle cx="20.500" cy="20" r="1.900"/><circle cx="14.500" cy="21.500" r="1.900"/><circle cx="9.500" cy="18.500" r="1.800" fill="#c9803a"/><circle cx="8" cy="13" r="1.800" fill="#c9803a"/><circle cx="11.500" cy="8" r="1.800" fill="#a9783a"/></g><circle cx="15.800" cy="13.800" r=".8" fill="#e07a10"/></svg></div>
<div class="btn" style="left:153px;top:39px"><svg width="30" height="29"><ellipse cx="15.500" cy="23.500" rx="9" ry="2.500" fill="#9aa4ae" opacity=".6"/><circle cx="15.500" cy="14" r="10.300" fill="#f4f8ff" stroke="#7fa4d8" stroke-width=".8"/><g fill="#2a6fc4"><path d="M12 4.500l4-1.500l4 1.500l-1 4h-6z"/><path d="M5.500 14l3.500-2l3 3l-1.500 4l-4-.5z"/><path d="M19 15l3-3l3.500 2l-1 4.500l-4 .5z"/><path d="M12 21.500l3.500-1.500l3.500 1.500l-1.500 2.600h-4z"/></g></svg></div>
<div class="lbl" style="top:76px">基体</div>
<div class="inp" style="left:93px;top:71px;width:147px">选中20个</div>
<svg style="position:absolute;left:253px;top:77px" width="12" height="13"><path d="M1.500 1.500l4.500 4.500l4.500-4.500M1.500 6.800l4.500 4.500l4.500-4.500" fill="none" stroke="#1a1a1a" stroke-width="1.300"/></svg>
<div class="lbl" style="top:102px">方向</div>
<div class="inp" style="left:93px;top:98px;width:126px">0,0,1</div>
<svg style="position:absolute;left:234px;top:101px" width="16" height="16"><path d="M5.500 1.500h5v5h3.500l-6 6.500l-6-6.500h3.500z" fill="#46c846" stroke="#2ea02e" stroke-width=".8"/><path d="M2 14.500h12" stroke="#6ab06a" stroke-width="1.200"/><path d="M7 3h2v4h-2z" fill="#2a8a2a"/></svg>
<div style="position:absolute;left:0;top:122px;width:272px;height:23px;overflow:hidden">
<div class="btn on" style="left:71px;top:0;width:31px"><svg width="31" height="29"><path d="M3 17l14 7l12-8l-14-6z" fill="#eef0f2" stroke="#b0b4b8" stroke-width=".6"/><g stroke="#0a6aa8" stroke-width=".5"><path d="M6 13l5 2.500l4-2.700l-5-2.300z" fill="#35b2ee"/><path d="M6 13v3l5 2.500v-3z" fill="#1a86c8"/><path d="M11 15.500v3l4-2.700v-3z" fill="#1272b0"/><path d="M12 9.500l5 2.500l4-2.700l-5-2.300z" fill="#35b2ee"/><path d="M12 9.500v3l5 2.500v-3z" fill="#1a86c8"/><path d="M17 12v3l4-2.700v-3z" fill="#1272b0"/><path d="M13 16.500l5 2.500l4-2.700l-5-2.300z" fill="#35b2ee"/><path d="M13 16.500v3l5 2.500v-3z" fill="#1a86c8"/><path d="M18 19v3l4-2.700v-3z" fill="#1272b0"/><path d="M19 13l5 2.500l4-2.700l-5-2.300z" fill="#35b2ee"/><path d="M19 13v3l5 2.500v-3z" fill="#1a86c8"/><path d="M24 15.500v3l4-2.700v-3z" fill="#1272b0"/></g></svg></div>
<div class="btn" style="left:105px;top:0"><svg width="30" height="29"><path d="M4.500 14l6.500-6.500l4.500 4.500l4.500-4.500l6.500 6.500l-6.500 6.500l-4.500-4.500l-4.500 4.500z" fill="#fff" stroke="#a8c4e0" stroke-width=".8"/></svg></div>
<div class="btn" style="left:138px;top:0"><svg width="30" height="29"><path d="M13 14l6.500-6.500l6.500 6.500l-6.500 6.500z" fill="#62a8ee" stroke="#4a90d8" stroke-width=".6"/><path d="M4 14l6.500-6.500l6.500 6.500l-6.500 6.500z" fill="#fff" stroke="#a8c4e0" stroke-width=".8"/></svg></div>
<div class="btn" style="left:171px;top:0"><svg width="30" height="29"><path d="M4 13.500l6.500-6.500l6.500 6.500l-6.500 6.500z" fill="#fff" stroke="#a8c4e0" stroke-width=".8"/><path d="M13 13.500l6.500-6.500l6.500 6.500l-6.500 6.500z" fill="#fff" stroke="#a8c4e0" stroke-width=".8"/><path d="M13 13.500l2-2l2 2l-2 2z" fill="#2a5a9a"/></svg></div>
</div>
</div>
</body></html>
